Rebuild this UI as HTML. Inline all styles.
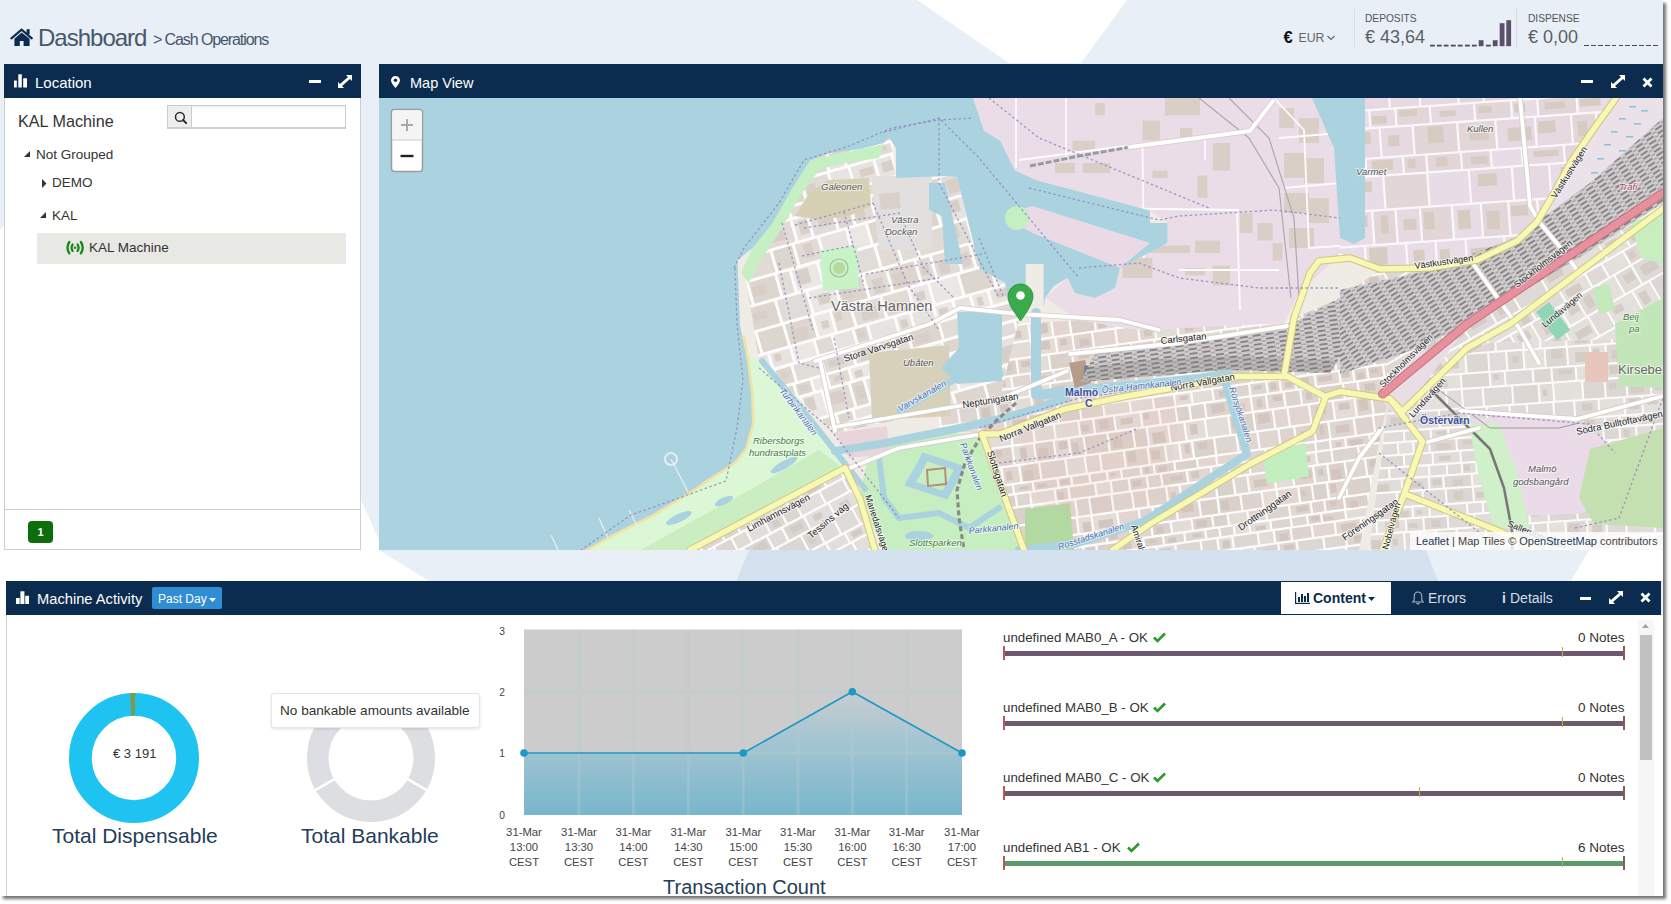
<!DOCTYPE html>
<html><head><meta charset="utf-8">
<style>
*{box-sizing:border-box;margin:0;padding:0}
html,body{width:1671px;height:904px;overflow:hidden;background:#fff;font-family:"Liberation Sans",sans-serif}
.a{position:absolute;white-space:nowrap}
#page{position:absolute;left:0;top:0;width:1663px;height:896px;background:#e9eff6;overflow:hidden;box-shadow:3px 3px 3px rgba(0,0,0,.55)}
.hdr{position:absolute;background:#0b2c4e;height:34px}
.ht{color:#fff;font-size:15px}
.body{position:absolute;background:#fff;border:1px solid #cfcfcf;border-top:0}
</style></head><body>
<div id="page">
<!-- background polygons -->
<svg class="a" style="left:0;top:0" width="1663" height="896">
 <polygon points="917,0 1127,0 1081,63 1009,63" fill="#fff"/>
 <polygon points="0,230 4,226 4,550 379,550 429,581 6,581 6,896 0,896" fill="#fff"/>
 <polygon points="361,500 379,540 379,550 361,550" fill="#fff"/>
 <polygon points="736,581 749,550 1426,550 1438,581" fill="#d4e2f0"/>
 <polygon points="1589,550 1663,550 1663,581 1571,581" fill="#fff"/>
</svg>

<!-- top bar -->
<svg class="a" style="left:10px;top:28px" width="24" height="20" viewBox="0 0 24 20">
 <polyline points="1.4,10.4 11.6,1.6 21.8,10.4" fill="none" stroke="#0b2c4e" stroke-width="2.2" stroke-linecap="round"/>
 <rect x="16.6" y="1.2" width="3" height="5" fill="#0b2c4e"/>
 <path d="M4.4 10.8 L11.6 4.6 L19.6 10.8 V17.9 H13.6 V12.9 H9.8 V17.9 H4.4 Z" fill="#0b2c4e"/>
</svg>
<div class="a" style="left:38px;top:24px;font-size:24px;color:#46576a;letter-spacing:-1px">Dashboard</div>
<div class="a" style="left:153px;top:31px;font-size:16px;color:#46576a;letter-spacing:-1.1px">&gt; Cash Operations</div>

<div class="a" style="left:1283.5px;top:27.5px;font-size:16.5px;color:#111;font-weight:bold">€</div>
<div class="a" style="left:1298.5px;top:31px;font-size:12.3px;color:#666">EUR</div>
<svg class="a" style="left:1327px;top:35px" width="8" height="6"><path d="M0.5 1 L4 4.5 L7.5 1" stroke="#666" stroke-width="1.2" fill="none"/></svg>
<div class="a" style="left:1354px;top:9px;width:1px;height:38px;background:#d5dce4"></div>
<div class="a" style="left:1365px;top:13px;font-size:10.2px;color:#555">DEPOSITS</div>
<div class="a" style="left:1365px;top:27px;font-size:18px;color:#5a5f66">€ 43,64</div>
<svg class="a" style="left:1430px;top:18px" width="84" height="30">
 <g fill="#4d4a55">
 <rect x="0" y="26.7" width="4.8" height="1.8"/><rect x="6.9" y="26.7" width="4.8" height="1.8"/><rect x="13.7" y="26.7" width="4.8" height="1.8"/><rect x="20.9" y="26.7" width="4.8" height="1.8"/><rect x="27.8" y="26.7" width="4.8" height="1.8"/><rect x="35" y="26.7" width="4.8" height="1.8"/><rect x="41.9" y="26.7" width="4.8" height="1.8"/><rect x="56" y="26.7" width="4.8" height="1.8"/>
 </g>
 <g fill="#5c4f6c">
 <rect x="48.7" y="22.2" width="4.8" height="6"/><rect x="62.8" y="22.2" width="4.8" height="6"/><rect x="69.7" y="5.2" width="4.8" height="23"/><rect x="76.3" y="2.2" width="4.8" height="26"/>
 </g>
</svg>
<div class="a" style="left:1516px;top:9px;width:1px;height:38px;background:#d5dce4"></div>
<div class="a" style="left:1528px;top:13px;font-size:10.2px;color:#555">DISPENSE</div>
<div class="a" style="left:1528px;top:27px;font-size:18px;color:#5a5f66">€ 0,00</div>
<div class="a" style="left:1584px;top:44.7px;width:76px;height:1.8px;background:repeating-linear-gradient(90deg,#4d4a55 0 4.8px,transparent 4.8px 6.9px)"></div>

<!-- Location panel -->
<div class="hdr" style="left:4px;top:64px;width:357px"></div>
<svg class="a" style="left:14px;top:74px" width="14" height="14"><g fill="#fff"><rect x="0" y="6.5" width="2.8" height="7"/><rect x="4.3" y="0.3" width="3.5" height="13.2"/><rect x="9.2" y="4.3" width="3.8" height="9.2"/></g></svg>
<div class="a ht" style="left:35px;top:73.5px">Location</div>
<div class="a" style="left:309px;top:80px;width:12px;height:3px;background:#fff"></div>
<svg class="a" style="left:338px;top:75px" width="14" height="13" viewBox="0 0 14 13"><g fill="#fff"><path d="M8 0 H14 V6 L12 4 L4 11 L6 13 H0 V7 L2 9 L10 2 Z"/></g></svg>
<div class="body" style="left:4px;top:98px;width:357px;height:452px"></div>
<div class="a" style="left:18px;top:111.5px;font-size:16.2px;color:#333">KAL Machine</div>
<div class="a" style="left:167px;top:105px;width:179px;height:24px;border:1px solid #ccc;border-bottom:2px solid #cfcfcf;background:#fff;box-shadow:inset 0 1px 1px rgba(0,60,120,.08)"></div>
<div class="a" style="left:168px;top:106px;width:24px;height:21px;background:#eeeeee;border-right:1px solid #ccc"></div>
<svg class="a" style="left:174px;top:111px" width="14" height="14"><circle cx="5.9" cy="5.9" r="4.4" stroke="#2a2a2a" stroke-width="1.5" fill="none"/><path d="M9 9 L12.2 12.2" stroke="#2a2a2a" stroke-width="1.9" stroke-linecap="round"/></svg>
<svg class="a" style="left:24px;top:151px" width="7" height="7"><path d="M6 0 V6 H0 Z" fill="#333"/></svg>
<div class="a" style="left:36px;top:147px;font-size:13.5px;color:#333">Not Grouped</div>
<svg class="a" style="left:42px;top:179px" width="5" height="9"><path d="M0 0 L4.5 4.5 L0 9 Z" fill="#333"/></svg>
<div class="a" style="left:52px;top:175px;font-size:13.5px;color:#333">DEMO</div>
<svg class="a" style="left:40px;top:212px" width="7" height="7"><path d="M6 0 V6 H0 Z" fill="#333"/></svg>
<div class="a" style="left:52px;top:208px;font-size:13.5px;color:#333">KAL</div>
<div class="a" style="left:37px;top:233px;width:309px;height:31px;background:#e8e8e5"></div>
<svg class="a" style="left:65px;top:240px" width="20" height="15" viewBox="0 0 20 15"><g fill="none" stroke="#158a15" stroke-width="2.3" stroke-linecap="round"><path d="M4.3 2 Q0.6 7.7 4.3 13.3"/><path d="M15.9 2 Q19.6 7.7 15.9 13.3"/><path d="M7.6 4.5 Q5.6 7.7 7.6 10.9"/><path d="M12.6 4.5 Q14.6 7.7 12.6 10.9"/></g><circle cx="10.1" cy="7.7" r="1.3" fill="#4a6a3a"/></svg>
<div class="a" style="left:89px;top:240px;font-size:13.5px;color:#333">KAL Machine</div>
<div class="a" style="left:5px;top:509px;width:355px;height:1px;background:#cfcfcf"></div>
<div class="a" style="left:28px;top:521px;width:25px;height:22px;background:#0b6e0b;border-radius:4px;color:#fff;font-size:11px;font-weight:bold;text-align:center;line-height:22px">1</div>

<!-- Map panel -->
<div class="hdr" style="left:379px;top:64px;width:1284px"></div>
<svg class="a" style="left:391px;top:76px" width="9" height="12" viewBox="0 0 9 12"><path d="M4.5 0 A4.5 4.5 0 0 1 9 4.5 C9 7 4.5 12 4.5 12 C4.5 12 0 7 0 4.5 A4.5 4.5 0 0 1 4.5 0 Z" fill="#fff"/><circle cx="4.5" cy="4.3" r="1.7" fill="#0b2b4b"/></svg>
<div class="a ht" style="left:410px;top:74.5px;font-size:14.5px">Map View</div>
<div class="a" style="left:1581px;top:80px;width:12px;height:3px;background:#fff"></div>
<svg class="a" style="left:1611px;top:75px" width="14" height="13" viewBox="0 0 14 13"><g fill="#fff"><path d="M8 0 H14 V6 L12 4 L4 11 L6 13 H0 V7 L2 9 L10 2 Z"/></g></svg>
<svg class="a" style="left:1642px;top:76.5px" width="11" height="11"><path d="M1.5 1.5 L9.5 9.5 M9.5 1.5 L1.5 9.5" stroke="#fff" stroke-width="2.8"/></svg>
<div id="map" class="a" style="left:379px;top:98px;width:1284px;height:452px;background:#aad3df;overflow:hidden">
 <svg id="mapsvg" width="1284" height="452" viewBox="0 0 1284 452"><defs><clipPath id="c1"><polygon points="560.0,230.0 700.0,222.0 760.0,232.0 905.0,225.0 961.0,200.0 1000.0,172.0 1010.0,300.0 1003.0,330.0 980.0,452.0 620.0,452.0 600.0,336.0 560.0,330.0"/></clipPath><clipPath id="c2"><polygon points="1000.0,172.0 1090.0,160.0 1160.0,120.0 1284.0,40.0 1284.0,240.0 1110.0,245.0 1010.0,300.0"/></clipPath><clipPath id="c3"><polygon points="1110.0,245.0 1284.0,240.0 1284.0,452.0 990.0,452.0 1010.0,300.0"/></clipPath><clipPath id="c4"><polygon points="311.0,452.0 466.0,372.0 496.0,452.0"/></clipPath><clipPath id="c5"><polygon points="366.0,175.0 431.0,62.0 513.0,37.0 517.0,80.0 566.0,78.0 578.0,79.0 601.0,171.0 626.0,185.0 640.0,222.0 621.0,300.0 456.0,335.0 380.0,263.0"/></clipPath><clipPath id="c6"><polygon points="961.0,0.0 1237.0,0.0 1214.0,32.0 1192.0,64.0 1174.0,97.0 1158.0,124.0 1138.0,143.0 1098.0,162.0 1050.0,170.0 1001.0,171.0 961.0,157.0"/></clipPath><pattern id="rail" width="13" height="4.5" patternUnits="userSpaceOnUse" patternTransform="rotate(-8)"><rect width="13" height="4.5" fill="#d2cecf"/><rect x="0" y="0.8" width="8" height="2" fill="#858384"/><rect x="8.5" y="3" width="4" height="1.3" fill="#9d9b9c"/></pattern><pattern id="rail2" width="13" height="4.5" patternUnits="userSpaceOnUse" patternTransform="rotate(-33)"><rect width="13" height="4.5" fill="#d2cecf"/><rect x="0" y="0.8" width="8" height="2" fill="#858384"/><rect x="8.5" y="3" width="4" height="1.3" fill="#9d9b9c"/></pattern></defs><rect width="1284" height="452" fill="#efece6"/>
<g clip-path="url(#c1)"><polygon points="560.0,230.0 700.0,222.0 760.0,232.0 905.0,225.0 961.0,200.0 1000.0,172.0 1010.0,300.0 1003.0,330.0 980.0,452.0 620.0,452.0 600.0,336.0 560.0,330.0" fill="#fdfcfb"/><g transform="rotate(-8 785.0 312.0)">
<rect x="501.2" y="17.0" width="23.7" height="12.3" fill="#ded4cf"/>
<rect x="508.0" y="18.6" width="14.0" height="6.4" fill="#d3c6bf"/>
<rect x="527.1" y="17.0" width="19.4" height="12.3" fill="#dbd1cb"/>
<rect x="529.8" y="18.3" width="11.7" height="7.4" fill="#d3c6bf"/>
<rect x="548.7" y="17.0" width="11.4" height="12.3" fill="#ded4cf"/>
<rect x="562.3" y="17.0" width="20.0" height="12.3" fill="#e3d5d0"/>
<rect x="584.5" y="17.0" width="19.5" height="12.3" fill="#e3d5d0"/>
<rect x="585.7" y="20.9" width="10.4" height="7.7" fill="#d3c6bf"/>
<rect x="606.2" y="17.0" width="15.4" height="12.3" fill="#e3d5d0"/>
<rect x="623.8" y="17.0" width="18.1" height="12.3" fill="#e3dcd7"/>
<rect x="628.1" y="19.5" width="7.8" height="8.7" fill="#d3c6bf"/>
<rect x="644.0" y="17.0" width="24.7" height="12.3" fill="#ded6d1"/>
<rect x="671.0" y="17.0" width="15.2" height="12.3" fill="#dbd1cb"/>
<rect x="688.4" y="17.0" width="11.2" height="12.3" fill="#e3d5d0"/>
<rect x="701.8" y="17.0" width="16.4" height="12.3" fill="#e3dcd7"/>
<rect x="707.2" y="20.8" width="5.6" height="5.3" fill="#d3c6bf"/>
<rect x="720.4" y="17.0" width="23.5" height="12.3" fill="#ded4cf"/>
<rect x="726.2" y="19.4" width="12.1" height="5.2" fill="#d3c6bf"/>
<rect x="746.2" y="17.0" width="20.2" height="12.3" fill="#e3dcd7"/>
<rect x="749.1" y="21.2" width="11.8" height="4.9" fill="#d3c6bf"/>
<rect x="768.6" y="17.0" width="14.2" height="12.3" fill="#ded6d1"/>
<rect x="771.4" y="19.6" width="8.3" height="5.2" fill="#d3c6bf"/>
<rect x="785.0" y="17.0" width="17.9" height="12.3" fill="#dbd1cb"/>
<rect x="788.0" y="19.3" width="12.0" height="4.4" fill="#d3c6bf"/>
<rect x="805.2" y="17.0" width="22.9" height="12.3" fill="#e3d5d0"/>
<rect x="812.0" y="18.7" width="10.5" height="8.1" fill="#d3c6bf"/>
<rect x="830.3" y="17.0" width="19.8" height="12.3" fill="#ded6d1"/>
<rect x="832.1" y="19.5" width="6.7" height="7.0" fill="#d3c6bf"/>
<rect x="852.3" y="17.0" width="22.4" height="12.3" fill="#ded4cf"/>
<rect x="853.8" y="20.0" width="9.2" height="7.0" fill="#d3c6bf"/>
<rect x="876.9" y="17.0" width="16.0" height="12.3" fill="#ded4cf"/>
<rect x="880.5" y="20.8" width="6.2" height="6.0" fill="#d3c6bf"/>
<rect x="895.1" y="17.0" width="19.6" height="12.3" fill="#e3dcd7"/>
<rect x="916.9" y="17.0" width="22.2" height="12.3" fill="#dbd1cb"/>
<rect x="941.3" y="17.0" width="13.0" height="12.3" fill="#e3d5d0"/>
<rect x="945.7" y="21.0" width="7.3" height="6.2" fill="#d3c6bf"/>
<rect x="956.5" y="17.0" width="12.3" height="12.3" fill="#ded6d1"/>
<rect x="971.0" y="17.0" width="14.4" height="12.3" fill="#ded4cf"/>
<rect x="975.3" y="20.0" width="6.4" height="5.1" fill="#d3c6bf"/>
<rect x="987.6" y="17.0" width="20.9" height="12.3" fill="#ded6d1"/>
<rect x="991.4" y="20.2" width="11.2" height="4.7" fill="#d3c6bf"/>
<rect x="1010.6" y="17.0" width="13.8" height="12.3" fill="#dbd1cb"/>
<rect x="1026.6" y="17.0" width="11.8" height="12.3" fill="#ded4cf"/>
<rect x="1027.8" y="18.6" width="5.7" height="6.8" fill="#d3c6bf"/>
<rect x="1040.6" y="17.0" width="12.6" height="12.3" fill="#e3dcd7"/>
<rect x="1043.1" y="19.1" width="7.7" height="6.6" fill="#d3c6bf"/>
<rect x="1055.4" y="17.0" width="24.1" height="12.3" fill="#e3d5d0"/>
<rect x="1056.6" y="21.0" width="13.4" height="8.5" fill="#d3c6bf"/>
<rect x="502.7" y="31.5" width="17.6" height="7.8" fill="#e3dcd7"/>
<rect x="508.6" y="32.6" width="9.2" height="5.2" fill="#d3c6bf"/>
<rect x="522.5" y="31.5" width="23.4" height="7.8" fill="#dbd1cb"/>
<rect x="548.1" y="31.5" width="23.6" height="7.8" fill="#e3dcd7"/>
<rect x="552.3" y="32.7" width="14.4" height="5.8" fill="#d3c6bf"/>
<rect x="573.9" y="31.5" width="11.2" height="7.8" fill="#ded4cf"/>
<rect x="587.3" y="31.5" width="19.5" height="7.8" fill="#ded4cf"/>
<rect x="588.4" y="32.6" width="7.1" height="3.3" fill="#d3c6bf"/>
<rect x="609.1" y="31.5" width="14.4" height="7.8" fill="#ded4cf"/>
<rect x="625.7" y="31.5" width="16.2" height="7.8" fill="#e3d5d0"/>
<rect x="628.8" y="33.6" width="8.4" height="4.5" fill="#d3c6bf"/>
<rect x="644.1" y="31.5" width="15.1" height="7.8" fill="#ded6d1"/>
<rect x="646.1" y="33.9" width="7.8" height="4.8" fill="#d3c6bf"/>
<rect x="661.4" y="31.5" width="23.7" height="7.8" fill="#e3dcd7"/>
<rect x="687.3" y="31.5" width="16.0" height="7.8" fill="#dbd1cb"/>
<rect x="705.5" y="31.5" width="13.6" height="7.8" fill="#dbd1cb"/>
<rect x="721.3" y="31.5" width="15.6" height="7.8" fill="#ded4cf"/>
<rect x="723.4" y="33.3" width="6.7" height="4.9" fill="#d3c6bf"/>
<rect x="739.1" y="31.5" width="22.1" height="7.8" fill="#dbd1cb"/>
<rect x="763.4" y="31.5" width="16.2" height="7.8" fill="#e3d5d0"/>
<rect x="781.7" y="31.5" width="13.7" height="7.8" fill="#dbd1cb"/>
<rect x="785.9" y="34.2" width="8.2" height="5.8" fill="#d3c6bf"/>
<rect x="797.7" y="31.5" width="14.7" height="7.8" fill="#dbd1cb"/>
<rect x="800.6" y="34.3" width="9.3" height="4.1" fill="#d3c6bf"/>
<rect x="814.6" y="31.5" width="18.1" height="7.8" fill="#e3dcd7"/>
<rect x="834.8" y="31.5" width="22.6" height="7.8" fill="#e3d5d0"/>
<rect x="836.3" y="32.6" width="13.9" height="3.1" fill="#d3c6bf"/>
<rect x="859.6" y="31.5" width="20.7" height="7.8" fill="#e3d5d0"/>
<rect x="864.4" y="33.6" width="11.3" height="4.2" fill="#d3c6bf"/>
<rect x="882.5" y="31.5" width="13.5" height="7.8" fill="#e3dcd7"/>
<rect x="884.1" y="32.6" width="7.7" height="4.3" fill="#d3c6bf"/>
<rect x="898.2" y="31.5" width="19.6" height="7.8" fill="#e3dcd7"/>
<rect x="920.0" y="31.5" width="20.4" height="7.8" fill="#dbd1cb"/>
<rect x="942.6" y="31.5" width="14.4" height="7.8" fill="#ded6d1"/>
<rect x="959.2" y="31.5" width="18.3" height="7.8" fill="#ded6d1"/>
<rect x="961.6" y="33.2" width="10.4" height="4.5" fill="#d3c6bf"/>
<rect x="979.7" y="31.5" width="19.4" height="7.8" fill="#dbd1cb"/>
<rect x="985.0" y="34.3" width="7.0" height="5.8" fill="#d3c6bf"/>
<rect x="1001.3" y="31.5" width="20.9" height="7.8" fill="#dbd1cb"/>
<rect x="1003.5" y="34.3" width="7.0" height="4.6" fill="#d3c6bf"/>
<rect x="1024.4" y="31.5" width="19.9" height="7.8" fill="#e3d5d0"/>
<rect x="1046.5" y="31.5" width="24.0" height="7.8" fill="#ded4cf"/>
<rect x="1054.3" y="32.7" width="14.7" height="5.4" fill="#d3c6bf"/>
<rect x="1072.8" y="31.5" width="23.7" height="7.8" fill="#ded6d1"/>
<rect x="1079.9" y="34.5" width="15.4" height="4.6" fill="#d3c6bf"/>
<rect x="496.4" y="41.5" width="23.5" height="15.9" fill="#ded6d1"/>
<rect x="498.0" y="44.4" width="12.0" height="9.6" fill="#d3c6bf"/>
<rect x="522.1" y="41.5" width="17.6" height="15.9" fill="#ded6d1"/>
<rect x="527.4" y="44.4" width="6.2" height="8.3" fill="#d3c6bf"/>
<rect x="542.0" y="41.5" width="20.4" height="15.9" fill="#dbd1cb"/>
<rect x="548.8" y="46.5" width="10.3" height="9.1" fill="#d3c6bf"/>
<rect x="564.6" y="41.5" width="17.0" height="15.9" fill="#ded4cf"/>
<rect x="583.7" y="41.5" width="20.4" height="15.9" fill="#dbd1cb"/>
<rect x="588.0" y="46.1" width="10.6" height="6.3" fill="#d3c6bf"/>
<rect x="606.4" y="41.5" width="18.0" height="15.9" fill="#e3d5d0"/>
<rect x="610.8" y="46.7" width="11.3" height="8.7" fill="#d3c6bf"/>
<rect x="626.6" y="41.5" width="15.1" height="15.9" fill="#dbd1cb"/>
<rect x="643.9" y="41.5" width="18.1" height="15.9" fill="#e3d5d0"/>
<rect x="647.0" y="43.0" width="6.1" height="7.5" fill="#d3c6bf"/>
<rect x="664.2" y="41.5" width="18.3" height="15.9" fill="#ded6d1"/>
<rect x="684.7" y="41.5" width="16.4" height="15.9" fill="#e3d5d0"/>
<rect x="686.2" y="43.2" width="10.8" height="7.9" fill="#d3c6bf"/>
<rect x="703.3" y="41.5" width="23.7" height="15.9" fill="#ded4cf"/>
<rect x="707.5" y="43.0" width="11.1" height="9.8" fill="#d3c6bf"/>
<rect x="729.2" y="41.5" width="23.4" height="15.9" fill="#ded4cf"/>
<rect x="754.8" y="41.5" width="12.3" height="15.9" fill="#ded4cf"/>
<rect x="769.4" y="41.5" width="23.8" height="15.9" fill="#dbd1cb"/>
<rect x="795.3" y="41.5" width="24.5" height="15.9" fill="#ded6d1"/>
<rect x="797.9" y="45.5" width="10.6" height="7.3" fill="#d3c6bf"/>
<rect x="822.0" y="41.5" width="19.5" height="15.9" fill="#ded6d1"/>
<rect x="826.2" y="46.2" width="10.6" height="9.3" fill="#d3c6bf"/>
<rect x="843.7" y="41.5" width="20.6" height="15.9" fill="#ded4cf"/>
<rect x="848.4" y="46.1" width="11.1" height="8.3" fill="#d3c6bf"/>
<rect x="866.5" y="41.5" width="22.9" height="15.9" fill="#e3d5d0"/>
<rect x="891.6" y="41.5" width="18.2" height="15.9" fill="#e3d5d0"/>
<rect x="912.0" y="41.5" width="22.8" height="15.9" fill="#dbd1cb"/>
<rect x="937.0" y="41.5" width="19.6" height="15.9" fill="#e3dcd7"/>
<rect x="958.8" y="41.5" width="15.2" height="15.9" fill="#e3dcd7"/>
<rect x="976.2" y="41.5" width="13.5" height="15.9" fill="#dbd1cb"/>
<rect x="991.9" y="41.5" width="12.7" height="15.9" fill="#dbd1cb"/>
<rect x="993.2" y="44.2" width="6.4" height="10.5" fill="#d3c6bf"/>
<rect x="1006.8" y="41.5" width="18.4" height="15.9" fill="#dbd1cb"/>
<rect x="1011.1" y="46.0" width="6.8" height="8.5" fill="#d3c6bf"/>
<rect x="1027.4" y="41.5" width="15.8" height="15.9" fill="#e3dcd7"/>
<rect x="1030.6" y="45.8" width="8.1" height="9.1" fill="#d3c6bf"/>
<rect x="1045.4" y="41.5" width="13.4" height="15.9" fill="#ded6d1"/>
<rect x="1046.5" y="45.8" width="7.6" height="10.3" fill="#d3c6bf"/>
<rect x="1061.1" y="41.5" width="17.5" height="15.9" fill="#dbd1cb"/>
<rect x="1063.1" y="46.2" width="11.8" height="10.4" fill="#d3c6bf"/>
<rect x="491.2" y="59.5" width="24.1" height="8.6" fill="#ded4cf"/>
<rect x="492.9" y="61.4" width="11.3" height="4.4" fill="#d3c6bf"/>
<rect x="517.6" y="59.5" width="13.7" height="8.6" fill="#e3dcd7"/>
<rect x="521.2" y="62.4" width="5.6" height="4.7" fill="#d3c6bf"/>
<rect x="533.5" y="59.5" width="21.2" height="8.6" fill="#ded4cf"/>
<rect x="556.9" y="59.5" width="19.3" height="8.6" fill="#ded6d1"/>
<rect x="578.3" y="59.5" width="11.0" height="8.6" fill="#ded6d1"/>
<rect x="591.5" y="59.5" width="20.7" height="8.6" fill="#ded4cf"/>
<rect x="614.4" y="59.5" width="13.5" height="8.6" fill="#e3d5d0"/>
<rect x="630.1" y="59.5" width="22.1" height="8.6" fill="#e3dcd7"/>
<rect x="631.8" y="62.2" width="8.4" height="6.2" fill="#d3c6bf"/>
<rect x="654.3" y="59.5" width="12.7" height="8.6" fill="#e3dcd7"/>
<rect x="669.2" y="59.5" width="20.5" height="8.6" fill="#ded4cf"/>
<rect x="691.9" y="59.5" width="16.5" height="8.6" fill="#dbd1cb"/>
<rect x="694.5" y="61.6" width="5.7" height="4.4" fill="#d3c6bf"/>
<rect x="710.6" y="59.5" width="19.7" height="8.6" fill="#e3d5d0"/>
<rect x="713.1" y="62.7" width="8.5" height="3.9" fill="#d3c6bf"/>
<rect x="732.6" y="59.5" width="16.5" height="8.6" fill="#dbd1cb"/>
<rect x="751.2" y="59.5" width="16.3" height="8.6" fill="#ded4cf"/>
<rect x="769.7" y="59.5" width="20.6" height="8.6" fill="#ded4cf"/>
<rect x="792.5" y="59.5" width="11.1" height="8.6" fill="#e3d5d0"/>
<rect x="794.2" y="61.5" width="6.0" height="5.7" fill="#d3c6bf"/>
<rect x="805.8" y="59.5" width="19.9" height="8.6" fill="#ded6d1"/>
<rect x="808.2" y="62.5" width="10.3" height="4.9" fill="#d3c6bf"/>
<rect x="827.9" y="59.5" width="24.3" height="8.6" fill="#e3d5d0"/>
<rect x="854.4" y="59.5" width="12.2" height="8.6" fill="#ded4cf"/>
<rect x="868.8" y="59.5" width="11.9" height="8.6" fill="#e3d5d0"/>
<rect x="882.9" y="59.5" width="24.2" height="8.6" fill="#ded4cf"/>
<rect x="909.3" y="59.5" width="13.0" height="8.6" fill="#ded4cf"/>
<rect x="924.5" y="59.5" width="22.8" height="8.6" fill="#e3d5d0"/>
<rect x="949.5" y="59.5" width="11.6" height="8.6" fill="#ded4cf"/>
<rect x="952.2" y="61.9" width="5.7" height="4.1" fill="#d3c6bf"/>
<rect x="963.3" y="59.5" width="20.0" height="8.6" fill="#e3d5d0"/>
<rect x="985.5" y="59.5" width="20.1" height="8.6" fill="#e3dcd7"/>
<rect x="990.9" y="61.8" width="10.9" height="4.5" fill="#d3c6bf"/>
<rect x="1007.8" y="59.5" width="20.4" height="8.6" fill="#ded6d1"/>
<rect x="1030.4" y="59.5" width="21.3" height="8.6" fill="#ded6d1"/>
<rect x="1053.8" y="59.5" width="20.9" height="8.6" fill="#e3dcd7"/>
<rect x="1060.2" y="61.5" width="10.2" height="6.4" fill="#d3c6bf"/>
<rect x="1077.0" y="59.5" width="14.2" height="8.6" fill="#e3d5d0"/>
<rect x="1081.1" y="62.6" width="5.6" height="6.3" fill="#d3c6bf"/>
<rect x="504.1" y="70.3" width="11.5" height="10.1" fill="#ded4cf"/>
<rect x="505.8" y="71.4" width="6.3" height="4.2" fill="#d3c6bf"/>
<rect x="517.8" y="70.3" width="17.0" height="10.1" fill="#ded4cf"/>
<rect x="520.1" y="72.8" width="8.2" height="6.6" fill="#d3c6bf"/>
<rect x="537.0" y="70.3" width="18.2" height="10.1" fill="#dbd1cb"/>
<rect x="557.5" y="70.3" width="21.1" height="10.1" fill="#dbd1cb"/>
<rect x="561.5" y="72.1" width="10.5" height="6.8" fill="#d3c6bf"/>
<rect x="580.7" y="70.3" width="14.6" height="10.1" fill="#e3d5d0"/>
<rect x="597.6" y="70.3" width="18.7" height="10.1" fill="#e3d5d0"/>
<rect x="600.1" y="71.9" width="12.2" height="5.6" fill="#d3c6bf"/>
<rect x="618.5" y="70.3" width="19.9" height="10.1" fill="#dbd1cb"/>
<rect x="640.6" y="70.3" width="11.4" height="10.1" fill="#ded6d1"/>
<rect x="642.4" y="71.3" width="4.2" height="4.5" fill="#d3c6bf"/>
<rect x="654.2" y="70.3" width="14.7" height="10.1" fill="#ded6d1"/>
<rect x="671.1" y="70.3" width="13.1" height="10.1" fill="#dbd1cb"/>
<rect x="686.3" y="70.3" width="16.0" height="10.1" fill="#ded4cf"/>
<rect x="688.9" y="72.6" width="6.2" height="6.9" fill="#d3c6bf"/>
<rect x="704.6" y="70.3" width="22.0" height="10.1" fill="#ded4cf"/>
<rect x="728.8" y="70.3" width="19.5" height="10.1" fill="#dbd1cb"/>
<rect x="733.9" y="72.3" width="7.5" height="4.3" fill="#d3c6bf"/>
<rect x="750.5" y="70.3" width="22.5" height="10.1" fill="#e3d5d0"/>
<rect x="755.0" y="73.3" width="14.2" height="5.3" fill="#d3c6bf"/>
<rect x="775.2" y="70.3" width="16.0" height="10.1" fill="#ded6d1"/>
<rect x="777.7" y="72.7" width="7.8" height="5.8" fill="#d3c6bf"/>
<rect x="793.4" y="70.3" width="22.2" height="10.1" fill="#ded4cf"/>
<rect x="799.3" y="71.5" width="8.9" height="6.1" fill="#d3c6bf"/>
<rect x="817.8" y="70.3" width="11.9" height="10.1" fill="#e3dcd7"/>
<rect x="821.3" y="72.2" width="8.0" height="4.5" fill="#d3c6bf"/>
<rect x="832.0" y="70.3" width="20.0" height="10.1" fill="#e3dcd7"/>
<rect x="833.6" y="73.2" width="10.5" height="7.1" fill="#d3c6bf"/>
<rect x="854.2" y="70.3" width="24.0" height="10.1" fill="#e3dcd7"/>
<rect x="860.7" y="72.1" width="10.3" height="5.2" fill="#d3c6bf"/>
<rect x="880.3" y="70.3" width="23.9" height="10.1" fill="#e3d5d0"/>
<rect x="883.8" y="72.3" width="10.7" height="5.2" fill="#d3c6bf"/>
<rect x="906.4" y="70.3" width="16.2" height="10.1" fill="#dbd1cb"/>
<rect x="924.8" y="70.3" width="16.0" height="10.1" fill="#ded4cf"/>
<rect x="943.0" y="70.3" width="22.5" height="10.1" fill="#e3d5d0"/>
<rect x="944.6" y="72.5" width="13.7" height="6.7" fill="#d3c6bf"/>
<rect x="967.7" y="70.3" width="13.9" height="10.1" fill="#ded6d1"/>
<rect x="983.8" y="70.3" width="18.7" height="10.1" fill="#ded6d1"/>
<rect x="1004.7" y="70.3" width="22.1" height="10.1" fill="#ded6d1"/>
<rect x="1029.0" y="70.3" width="15.1" height="10.1" fill="#e3d5d0"/>
<rect x="1030.3" y="73.3" width="9.8" height="4.0" fill="#d3c6bf"/>
<rect x="1046.3" y="70.3" width="19.7" height="10.1" fill="#dbd1cb"/>
<rect x="1051.8" y="72.4" width="11.2" height="5.5" fill="#d3c6bf"/>
<rect x="1068.2" y="70.3" width="23.5" height="10.1" fill="#e3dcd7"/>
<rect x="496.8" y="82.6" width="24.4" height="11.7" fill="#dbd1cb"/>
<rect x="501.5" y="85.9" width="13.6" height="8.0" fill="#d3c6bf"/>
<rect x="523.3" y="82.6" width="16.5" height="11.7" fill="#e3dcd7"/>
<rect x="542.1" y="82.6" width="22.1" height="11.7" fill="#ded6d1"/>
<rect x="566.3" y="82.6" width="24.2" height="11.7" fill="#ded6d1"/>
<rect x="592.8" y="82.6" width="20.7" height="11.7" fill="#ded6d1"/>
<rect x="596.2" y="84.1" width="12.0" height="8.3" fill="#d3c6bf"/>
<rect x="615.7" y="82.6" width="16.1" height="11.7" fill="#dbd1cb"/>
<rect x="618.4" y="85.3" width="7.0" height="7.9" fill="#d3c6bf"/>
<rect x="634.0" y="82.6" width="17.4" height="11.7" fill="#ded6d1"/>
<rect x="635.7" y="86.5" width="11.2" height="7.3" fill="#d3c6bf"/>
<rect x="653.6" y="82.6" width="11.0" height="11.7" fill="#ded4cf"/>
<rect x="666.8" y="82.6" width="11.3" height="11.7" fill="#ded6d1"/>
<rect x="668.9" y="85.5" width="6.5" height="6.1" fill="#d3c6bf"/>
<rect x="680.3" y="82.6" width="17.9" height="11.7" fill="#ded4cf"/>
<rect x="682.7" y="84.1" width="10.6" height="5.5" fill="#d3c6bf"/>
<rect x="700.4" y="82.6" width="18.5" height="11.7" fill="#e3d5d0"/>
<rect x="702.8" y="86.4" width="11.9" height="5.6" fill="#d3c6bf"/>
<rect x="721.1" y="82.6" width="18.5" height="11.7" fill="#ded6d1"/>
<rect x="723.2" y="83.8" width="12.1" height="7.5" fill="#d3c6bf"/>
<rect x="741.8" y="82.6" width="16.2" height="11.7" fill="#e3d5d0"/>
<rect x="760.1" y="82.6" width="21.6" height="11.7" fill="#ded6d1"/>
<rect x="784.0" y="82.6" width="14.1" height="11.7" fill="#ded6d1"/>
<rect x="800.3" y="82.6" width="23.5" height="11.7" fill="#ded4cf"/>
<rect x="826.0" y="82.6" width="20.8" height="11.7" fill="#e3d5d0"/>
<rect x="849.0" y="82.6" width="16.6" height="11.7" fill="#e3dcd7"/>
<rect x="854.2" y="86.2" width="6.4" height="7.3" fill="#d3c6bf"/>
<rect x="867.8" y="82.6" width="19.5" height="11.7" fill="#e3d5d0"/>
<rect x="889.5" y="82.6" width="12.9" height="11.7" fill="#dbd1cb"/>
<rect x="893.4" y="86.3" width="8.3" height="4.5" fill="#d3c6bf"/>
<rect x="904.6" y="82.6" width="14.6" height="11.7" fill="#e3d5d0"/>
<rect x="907.5" y="85.1" width="9.8" height="6.6" fill="#d3c6bf"/>
<rect x="921.4" y="82.6" width="22.8" height="11.7" fill="#e3dcd7"/>
<rect x="923.6" y="84.2" width="12.6" height="7.4" fill="#d3c6bf"/>
<rect x="946.4" y="82.6" width="17.0" height="11.7" fill="#ded6d1"/>
<rect x="965.5" y="82.6" width="18.2" height="11.7" fill="#dbd1cb"/>
<rect x="985.9" y="82.6" width="24.3" height="11.7" fill="#e3dcd7"/>
<rect x="987.4" y="84.6" width="11.7" height="7.1" fill="#d3c6bf"/>
<rect x="1012.4" y="82.6" width="15.8" height="11.7" fill="#dbd1cb"/>
<rect x="1015.1" y="85.1" width="10.6" height="7.6" fill="#d3c6bf"/>
<rect x="1030.4" y="82.6" width="20.0" height="11.7" fill="#ded6d1"/>
<rect x="1052.6" y="82.6" width="20.8" height="11.7" fill="#ded4cf"/>
<rect x="1056.9" y="85.1" width="7.0" height="8.3" fill="#d3c6bf"/>
<rect x="1075.5" y="82.6" width="22.0" height="11.7" fill="#dbd1cb"/>
<rect x="502.6" y="96.5" width="23.9" height="9.1" fill="#e3dcd7"/>
<rect x="528.7" y="96.5" width="21.4" height="9.1" fill="#e3d5d0"/>
<rect x="552.2" y="96.5" width="14.4" height="9.1" fill="#dbd1cb"/>
<rect x="553.7" y="98.2" width="6.3" height="5.0" fill="#d3c6bf"/>
<rect x="568.8" y="96.5" width="19.8" height="9.1" fill="#ded4cf"/>
<rect x="590.8" y="96.5" width="12.1" height="9.1" fill="#dbd1cb"/>
<rect x="605.1" y="96.5" width="12.6" height="9.1" fill="#dbd1cb"/>
<rect x="607.5" y="99.5" width="7.1" height="3.7" fill="#d3c6bf"/>
<rect x="619.9" y="96.5" width="14.0" height="9.1" fill="#dbd1cb"/>
<rect x="636.1" y="96.5" width="16.9" height="9.1" fill="#ded6d1"/>
<rect x="641.0" y="99.7" width="6.5" height="4.1" fill="#d3c6bf"/>
<rect x="655.2" y="96.5" width="12.9" height="9.1" fill="#ded4cf"/>
<rect x="659.4" y="99.0" width="7.8" height="5.5" fill="#d3c6bf"/>
<rect x="670.3" y="96.5" width="15.2" height="9.1" fill="#dbd1cb"/>
<rect x="687.7" y="96.5" width="19.3" height="9.1" fill="#ded6d1"/>
<rect x="689.7" y="98.2" width="9.3" height="5.3" fill="#d3c6bf"/>
<rect x="709.2" y="96.5" width="13.7" height="9.1" fill="#e3dcd7"/>
<rect x="725.1" y="96.5" width="22.4" height="9.1" fill="#e3d5d0"/>
<rect x="749.6" y="96.5" width="14.4" height="9.1" fill="#e3d5d0"/>
<rect x="766.2" y="96.5" width="18.5" height="9.1" fill="#e3dcd7"/>
<rect x="786.9" y="96.5" width="18.0" height="9.1" fill="#e3d5d0"/>
<rect x="807.1" y="96.5" width="24.6" height="9.1" fill="#e3d5d0"/>
<rect x="833.9" y="96.5" width="20.7" height="9.1" fill="#dbd1cb"/>
<rect x="856.8" y="96.5" width="11.2" height="9.1" fill="#dbd1cb"/>
<rect x="870.1" y="96.5" width="12.7" height="9.1" fill="#ded4cf"/>
<rect x="885.1" y="96.5" width="20.6" height="9.1" fill="#e3dcd7"/>
<rect x="891.1" y="98.1" width="12.9" height="4.9" fill="#d3c6bf"/>
<rect x="907.8" y="96.5" width="21.0" height="9.1" fill="#dbd1cb"/>
<rect x="931.0" y="96.5" width="18.4" height="9.1" fill="#e3d5d0"/>
<rect x="936.8" y="97.9" width="10.8" height="6.5" fill="#d3c6bf"/>
<rect x="951.6" y="96.5" width="15.5" height="9.1" fill="#dbd1cb"/>
<rect x="956.2" y="98.2" width="10.1" height="4.2" fill="#d3c6bf"/>
<rect x="969.3" y="96.5" width="18.8" height="9.1" fill="#dbd1cb"/>
<rect x="973.2" y="97.7" width="6.5" height="4.0" fill="#d3c6bf"/>
<rect x="990.4" y="96.5" width="24.6" height="9.1" fill="#dbd1cb"/>
<rect x="996.1" y="99.3" width="11.1" height="5.4" fill="#d3c6bf"/>
<rect x="1017.2" y="96.5" width="22.1" height="9.1" fill="#ded6d1"/>
<rect x="1020.8" y="97.6" width="11.1" height="3.8" fill="#d3c6bf"/>
<rect x="1041.4" y="96.5" width="16.5" height="9.1" fill="#e3dcd7"/>
<rect x="1060.1" y="96.5" width="14.5" height="9.1" fill="#e3d5d0"/>
<rect x="1076.8" y="96.5" width="11.5" height="9.1" fill="#ded6d1"/>
<rect x="498.1" y="107.8" width="17.8" height="15.8" fill="#ded6d1"/>
<rect x="501.1" y="111.6" width="10.1" height="9.5" fill="#d3c6bf"/>
<rect x="518.0" y="107.8" width="21.3" height="15.8" fill="#ded4cf"/>
<rect x="541.6" y="107.8" width="17.3" height="15.8" fill="#ded4cf"/>
<rect x="561.0" y="107.8" width="12.4" height="15.8" fill="#ded6d1"/>
<rect x="575.7" y="107.8" width="18.2" height="15.8" fill="#e3d5d0"/>
<rect x="596.0" y="107.8" width="16.7" height="15.8" fill="#ded6d1"/>
<rect x="597.3" y="112.0" width="10.8" height="9.4" fill="#d3c6bf"/>
<rect x="614.9" y="107.8" width="19.2" height="15.8" fill="#e3dcd7"/>
<rect x="636.3" y="107.8" width="23.1" height="15.8" fill="#dbd1cb"/>
<rect x="640.2" y="111.1" width="10.6" height="5.7" fill="#d3c6bf"/>
<rect x="661.6" y="107.8" width="20.5" height="15.8" fill="#e3d5d0"/>
<rect x="684.3" y="107.8" width="18.4" height="15.8" fill="#ded4cf"/>
<rect x="704.9" y="107.8" width="23.1" height="15.8" fill="#e3dcd7"/>
<rect x="730.3" y="107.8" width="16.7" height="15.8" fill="#dbd1cb"/>
<rect x="734.7" y="111.3" width="10.8" height="5.9" fill="#d3c6bf"/>
<rect x="749.2" y="107.8" width="21.9" height="15.8" fill="#ded6d1"/>
<rect x="773.2" y="107.8" width="18.9" height="15.8" fill="#ded4cf"/>
<rect x="775.5" y="110.2" width="8.4" height="5.7" fill="#d3c6bf"/>
<rect x="794.3" y="107.8" width="23.3" height="15.8" fill="#e3d5d0"/>
<rect x="797.7" y="111.4" width="8.0" height="5.6" fill="#d3c6bf"/>
<rect x="819.8" y="107.8" width="23.4" height="15.8" fill="#e3dcd7"/>
<rect x="821.8" y="112.3" width="13.6" height="10.2" fill="#d3c6bf"/>
<rect x="845.4" y="107.8" width="13.6" height="15.8" fill="#ded6d1"/>
<rect x="849.6" y="110.4" width="7.0" height="6.3" fill="#d3c6bf"/>
<rect x="861.3" y="107.8" width="23.1" height="15.8" fill="#e3d5d0"/>
<rect x="866.4" y="109.7" width="14.3" height="5.7" fill="#d3c6bf"/>
<rect x="886.6" y="107.8" width="12.3" height="15.8" fill="#e3dcd7"/>
<rect x="901.1" y="107.8" width="14.6" height="15.8" fill="#ded4cf"/>
<rect x="917.9" y="107.8" width="12.7" height="15.8" fill="#ded4cf"/>
<rect x="919.5" y="112.6" width="5.0" height="9.1" fill="#d3c6bf"/>
<rect x="932.8" y="107.8" width="14.6" height="15.8" fill="#dbd1cb"/>
<rect x="949.5" y="107.8" width="14.9" height="15.8" fill="#e3dcd7"/>
<rect x="953.3" y="112.7" width="8.2" height="6.6" fill="#d3c6bf"/>
<rect x="966.7" y="107.8" width="15.0" height="15.8" fill="#dbd1cb"/>
<rect x="983.9" y="107.8" width="14.7" height="15.8" fill="#ded6d1"/>
<rect x="985.2" y="112.9" width="5.4" height="10.3" fill="#d3c6bf"/>
<rect x="1000.8" y="107.8" width="10.9" height="15.8" fill="#e3d5d0"/>
<rect x="1002.5" y="112.4" width="4.3" height="6.9" fill="#d3c6bf"/>
<rect x="1013.9" y="107.8" width="21.4" height="15.8" fill="#dbd1cb"/>
<rect x="1019.3" y="109.0" width="12.7" height="6.2" fill="#d3c6bf"/>
<rect x="1037.4" y="107.8" width="23.4" height="15.8" fill="#e3d5d0"/>
<rect x="1043.5" y="110.5" width="14.8" height="8.1" fill="#d3c6bf"/>
<rect x="1063.0" y="107.8" width="13.3" height="15.8" fill="#e3d5d0"/>
<rect x="1078.5" y="107.8" width="23.5" height="15.8" fill="#e3dcd7"/>
<rect x="500.3" y="125.9" width="17.9" height="15.8" fill="#e3d5d0"/>
<rect x="520.4" y="125.9" width="18.2" height="15.8" fill="#e3d5d0"/>
<rect x="540.9" y="125.9" width="13.1" height="15.8" fill="#e3d5d0"/>
<rect x="544.3" y="129.3" width="5.8" height="9.3" fill="#d3c6bf"/>
<rect x="556.2" y="125.9" width="20.9" height="15.8" fill="#e3dcd7"/>
<rect x="558.5" y="129.4" width="10.4" height="5.6" fill="#d3c6bf"/>
<rect x="579.3" y="125.9" width="19.2" height="15.8" fill="#ded6d1"/>
<rect x="600.6" y="125.9" width="23.0" height="15.8" fill="#dbd1cb"/>
<rect x="605.6" y="129.5" width="13.7" height="8.1" fill="#d3c6bf"/>
<rect x="625.8" y="125.9" width="20.9" height="15.8" fill="#ded6d1"/>
<rect x="632.2" y="129.4" width="10.7" height="9.7" fill="#d3c6bf"/>
<rect x="649.0" y="125.9" width="14.1" height="15.8" fill="#dbd1cb"/>
<rect x="651.6" y="129.9" width="8.9" height="9.4" fill="#d3c6bf"/>
<rect x="665.3" y="125.9" width="21.7" height="15.8" fill="#e3d5d0"/>
<rect x="670.3" y="129.1" width="9.9" height="6.7" fill="#d3c6bf"/>
<rect x="689.2" y="125.9" width="17.8" height="15.8" fill="#e3d5d0"/>
<rect x="709.2" y="125.9" width="11.7" height="15.8" fill="#ded4cf"/>
<rect x="712.4" y="129.9" width="8.1" height="6.1" fill="#d3c6bf"/>
<rect x="723.0" y="125.9" width="21.4" height="15.8" fill="#e3d5d0"/>
<rect x="746.6" y="125.9" width="12.8" height="15.8" fill="#ded4cf"/>
<rect x="761.6" y="125.9" width="24.6" height="15.8" fill="#ded6d1"/>
<rect x="768.9" y="127.5" width="11.2" height="7.0" fill="#d3c6bf"/>
<rect x="788.4" y="125.9" width="16.7" height="15.8" fill="#ded6d1"/>
<rect x="807.4" y="125.9" width="20.3" height="15.8" fill="#e3d5d0"/>
<rect x="809.8" y="129.3" width="8.4" height="7.9" fill="#d3c6bf"/>
<rect x="829.9" y="125.9" width="23.9" height="15.8" fill="#e3dcd7"/>
<rect x="837.4" y="130.9" width="9.5" height="6.3" fill="#d3c6bf"/>
<rect x="856.0" y="125.9" width="19.0" height="15.8" fill="#ded6d1"/>
<rect x="877.2" y="125.9" width="18.7" height="15.8" fill="#e3d5d0"/>
<rect x="898.1" y="125.9" width="13.3" height="15.8" fill="#ded4cf"/>
<rect x="913.6" y="125.9" width="13.8" height="15.8" fill="#ded4cf"/>
<rect x="929.6" y="125.9" width="13.8" height="15.8" fill="#e3dcd7"/>
<rect x="933.6" y="130.4" width="7.1" height="7.5" fill="#d3c6bf"/>
<rect x="945.6" y="125.9" width="19.1" height="15.8" fill="#e3dcd7"/>
<rect x="949.2" y="129.6" width="7.6" height="8.0" fill="#d3c6bf"/>
<rect x="966.9" y="125.9" width="18.4" height="15.8" fill="#ded4cf"/>
<rect x="971.5" y="128.5" width="7.9" height="5.5" fill="#d3c6bf"/>
<rect x="987.5" y="125.9" width="13.3" height="15.8" fill="#e3dcd7"/>
<rect x="1003.0" y="125.9" width="18.7" height="15.8" fill="#dbd1cb"/>
<rect x="1005.9" y="127.5" width="12.2" height="7.3" fill="#d3c6bf"/>
<rect x="1023.9" y="125.9" width="21.5" height="15.8" fill="#ded6d1"/>
<rect x="1026.9" y="128.5" width="7.7" height="10.1" fill="#d3c6bf"/>
<rect x="1047.7" y="125.9" width="15.4" height="15.8" fill="#e3d5d0"/>
<rect x="1065.2" y="125.9" width="15.0" height="15.8" fill="#e3d5d0"/>
<rect x="1066.4" y="127.5" width="8.2" height="5.6" fill="#d3c6bf"/>
<rect x="498.5" y="143.8" width="18.4" height="10.8" fill="#dbd1cb"/>
<rect x="519.1" y="143.8" width="18.5" height="10.8" fill="#e3dcd7"/>
<rect x="539.8" y="143.8" width="20.1" height="10.8" fill="#dbd1cb"/>
<rect x="562.1" y="143.8" width="22.5" height="10.8" fill="#e3d5d0"/>
<rect x="586.8" y="143.8" width="16.5" height="10.8" fill="#ded4cf"/>
<rect x="605.5" y="143.8" width="15.8" height="10.8" fill="#ded6d1"/>
<rect x="608.0" y="145.5" width="5.6" height="4.0" fill="#d3c6bf"/>
<rect x="623.4" y="143.8" width="19.6" height="10.8" fill="#e3d5d0"/>
<rect x="628.7" y="147.0" width="10.9" height="4.2" fill="#d3c6bf"/>
<rect x="645.3" y="143.8" width="22.7" height="10.8" fill="#e3d5d0"/>
<rect x="670.2" y="143.8" width="20.1" height="10.8" fill="#e3dcd7"/>
<rect x="674.8" y="145.1" width="9.6" height="5.4" fill="#d3c6bf"/>
<rect x="692.5" y="143.8" width="11.6" height="10.8" fill="#ded4cf"/>
<rect x="706.4" y="143.8" width="14.8" height="10.8" fill="#e3dcd7"/>
<rect x="711.2" y="145.4" width="9.0" height="5.3" fill="#d3c6bf"/>
<rect x="723.4" y="143.8" width="20.8" height="10.8" fill="#e3d5d0"/>
<rect x="726.4" y="146.1" width="7.9" height="6.2" fill="#d3c6bf"/>
<rect x="746.3" y="143.8" width="20.6" height="10.8" fill="#e3d5d0"/>
<rect x="752.7" y="147.5" width="7.7" height="7.5" fill="#d3c6bf"/>
<rect x="769.2" y="143.8" width="23.6" height="10.8" fill="#e3dcd7"/>
<rect x="773.5" y="146.5" width="11.4" height="5.2" fill="#d3c6bf"/>
<rect x="794.9" y="143.8" width="14.3" height="10.8" fill="#ded6d1"/>
<rect x="797.2" y="145.9" width="6.4" height="7.1" fill="#d3c6bf"/>
<rect x="811.5" y="143.8" width="23.2" height="10.8" fill="#ded4cf"/>
<rect x="814.7" y="147.4" width="7.9" height="6.7" fill="#d3c6bf"/>
<rect x="836.9" y="143.8" width="13.8" height="10.8" fill="#ded6d1"/>
<rect x="852.9" y="143.8" width="19.5" height="10.8" fill="#ded4cf"/>
<rect x="874.6" y="143.8" width="11.7" height="10.8" fill="#ded6d1"/>
<rect x="888.5" y="143.8" width="23.1" height="10.8" fill="#ded4cf"/>
<rect x="913.8" y="143.8" width="16.2" height="10.8" fill="#dbd1cb"/>
<rect x="932.2" y="143.8" width="14.6" height="10.8" fill="#ded4cf"/>
<rect x="937.2" y="145.3" width="6.0" height="4.8" fill="#d3c6bf"/>
<rect x="949.0" y="143.8" width="20.3" height="10.8" fill="#dbd1cb"/>
<rect x="971.6" y="143.8" width="23.8" height="10.8" fill="#ded4cf"/>
<rect x="976.3" y="147.3" width="13.8" height="4.2" fill="#d3c6bf"/>
<rect x="997.5" y="143.8" width="22.3" height="10.8" fill="#e3dcd7"/>
<rect x="999.2" y="144.9" width="13.3" height="4.7" fill="#d3c6bf"/>
<rect x="1022.1" y="143.8" width="16.3" height="10.8" fill="#dbd1cb"/>
<rect x="1040.6" y="143.8" width="22.3" height="10.8" fill="#dbd1cb"/>
<rect x="1046.0" y="147.2" width="9.5" height="5.5" fill="#d3c6bf"/>
<rect x="1065.1" y="143.8" width="15.9" height="10.8" fill="#e3d5d0"/>
<rect x="1069.0" y="145.9" width="9.3" height="7.5" fill="#d3c6bf"/>
<rect x="507.5" y="156.9" width="24.6" height="15.3" fill="#ded6d1"/>
<rect x="534.4" y="156.9" width="15.1" height="15.3" fill="#ded4cf"/>
<rect x="551.7" y="156.9" width="20.3" height="15.3" fill="#ded6d1"/>
<rect x="557.7" y="161.6" width="7.1" height="6.6" fill="#d3c6bf"/>
<rect x="574.2" y="156.9" width="17.9" height="15.3" fill="#ded4cf"/>
<rect x="578.4" y="159.4" width="10.1" height="6.2" fill="#d3c6bf"/>
<rect x="594.4" y="156.9" width="22.8" height="15.3" fill="#dbd1cb"/>
<rect x="619.3" y="156.9" width="22.4" height="15.3" fill="#e3d5d0"/>
<rect x="643.9" y="156.9" width="19.8" height="15.3" fill="#dbd1cb"/>
<rect x="665.9" y="156.9" width="22.4" height="15.3" fill="#dbd1cb"/>
<rect x="669.3" y="160.7" width="9.1" height="6.2" fill="#d3c6bf"/>
<rect x="690.5" y="156.9" width="11.0" height="15.3" fill="#e3d5d0"/>
<rect x="703.7" y="156.9" width="21.9" height="15.3" fill="#dbd1cb"/>
<rect x="706.4" y="158.9" width="12.0" height="7.3" fill="#d3c6bf"/>
<rect x="727.8" y="156.9" width="20.3" height="15.3" fill="#dbd1cb"/>
<rect x="732.9" y="158.4" width="7.0" height="6.7" fill="#d3c6bf"/>
<rect x="750.3" y="156.9" width="21.0" height="15.3" fill="#ded6d1"/>
<rect x="756.7" y="161.4" width="12.9" height="6.1" fill="#d3c6bf"/>
<rect x="773.6" y="156.9" width="11.7" height="15.3" fill="#ded4cf"/>
<rect x="787.5" y="156.9" width="22.5" height="15.3" fill="#e3dcd7"/>
<rect x="793.1" y="159.6" width="8.5" height="8.3" fill="#d3c6bf"/>
<rect x="812.2" y="156.9" width="20.2" height="15.3" fill="#dbd1cb"/>
<rect x="834.7" y="156.9" width="22.0" height="15.3" fill="#dbd1cb"/>
<rect x="840.9" y="160.2" width="13.8" height="9.9" fill="#d3c6bf"/>
<rect x="858.9" y="156.9" width="16.9" height="15.3" fill="#dbd1cb"/>
<rect x="860.0" y="160.3" width="6.5" height="8.5" fill="#d3c6bf"/>
<rect x="878.0" y="156.9" width="14.6" height="15.3" fill="#dbd1cb"/>
<rect x="879.8" y="160.2" width="7.9" height="6.0" fill="#d3c6bf"/>
<rect x="894.8" y="156.9" width="10.9" height="15.3" fill="#e3dcd7"/>
<rect x="907.9" y="156.9" width="10.9" height="15.3" fill="#e3dcd7"/>
<rect x="911.8" y="158.7" width="7.3" height="7.8" fill="#d3c6bf"/>
<rect x="920.9" y="156.9" width="16.6" height="15.3" fill="#e3d5d0"/>
<rect x="922.2" y="160.2" width="9.3" height="8.5" fill="#d3c6bf"/>
<rect x="939.7" y="156.9" width="14.7" height="15.3" fill="#e3dcd7"/>
<rect x="956.6" y="156.9" width="24.7" height="15.3" fill="#ded4cf"/>
<rect x="983.5" y="156.9" width="24.0" height="15.3" fill="#ded6d1"/>
<rect x="984.7" y="158.6" width="8.8" height="5.6" fill="#d3c6bf"/>
<rect x="1009.7" y="156.9" width="15.8" height="15.3" fill="#e3d5d0"/>
<rect x="1013.0" y="157.9" width="6.5" height="10.3" fill="#d3c6bf"/>
<rect x="1027.7" y="156.9" width="11.0" height="15.3" fill="#e3d5d0"/>
<rect x="1029.5" y="161.8" width="5.9" height="6.9" fill="#d3c6bf"/>
<rect x="1040.9" y="156.9" width="18.2" height="15.3" fill="#ded6d1"/>
<rect x="1061.3" y="156.9" width="17.5" height="15.3" fill="#ded4cf"/>
<rect x="1066.8" y="158.0" width="9.3" height="6.4" fill="#d3c6bf"/>
<rect x="497.4" y="174.4" width="20.0" height="11.6" fill="#e3dcd7"/>
<rect x="519.6" y="174.4" width="17.1" height="11.6" fill="#e3dcd7"/>
<rect x="524.9" y="176.4" width="6.3" height="5.5" fill="#d3c6bf"/>
<rect x="538.9" y="174.4" width="21.2" height="11.6" fill="#dbd1cb"/>
<rect x="540.7" y="176.3" width="8.5" height="5.6" fill="#d3c6bf"/>
<rect x="562.3" y="174.4" width="13.0" height="11.6" fill="#e3dcd7"/>
<rect x="564.8" y="175.4" width="6.8" height="5.8" fill="#d3c6bf"/>
<rect x="577.4" y="174.4" width="15.3" height="11.6" fill="#e3d5d0"/>
<rect x="594.9" y="174.4" width="21.5" height="11.6" fill="#ded6d1"/>
<rect x="618.6" y="174.4" width="15.3" height="11.6" fill="#e3d5d0"/>
<rect x="623.8" y="176.7" width="10.3" height="5.1" fill="#d3c6bf"/>
<rect x="636.1" y="174.4" width="16.5" height="11.6" fill="#dbd1cb"/>
<rect x="654.8" y="174.4" width="11.8" height="11.6" fill="#ded4cf"/>
<rect x="668.8" y="174.4" width="15.3" height="11.6" fill="#dbd1cb"/>
<rect x="686.3" y="174.4" width="18.2" height="11.6" fill="#ded6d1"/>
<rect x="690.5" y="176.5" width="10.0" height="5.0" fill="#d3c6bf"/>
<rect x="706.7" y="174.4" width="19.4" height="11.6" fill="#ded4cf"/>
<rect x="728.3" y="174.4" width="19.6" height="11.6" fill="#e3d5d0"/>
<rect x="750.1" y="174.4" width="23.7" height="11.6" fill="#ded6d1"/>
<rect x="776.0" y="174.4" width="20.5" height="11.6" fill="#ded4cf"/>
<rect x="779.7" y="178.0" width="10.2" height="5.7" fill="#d3c6bf"/>
<rect x="798.7" y="174.4" width="18.4" height="11.6" fill="#ded6d1"/>
<rect x="819.3" y="174.4" width="11.3" height="11.6" fill="#ded4cf"/>
<rect x="822.1" y="177.2" width="7.8" height="4.8" fill="#d3c6bf"/>
<rect x="832.7" y="174.4" width="17.4" height="11.6" fill="#e3dcd7"/>
<rect x="852.3" y="174.4" width="15.2" height="11.6" fill="#ded4cf"/>
<rect x="869.7" y="174.4" width="16.4" height="11.6" fill="#dbd1cb"/>
<rect x="888.3" y="174.4" width="23.4" height="11.6" fill="#ded6d1"/>
<rect x="894.9" y="177.4" width="14.9" height="7.6" fill="#d3c6bf"/>
<rect x="913.8" y="174.4" width="22.0" height="11.6" fill="#e3d5d0"/>
<rect x="916.5" y="175.9" width="7.5" height="5.6" fill="#d3c6bf"/>
<rect x="938.0" y="174.4" width="18.0" height="11.6" fill="#e3dcd7"/>
<rect x="941.7" y="178.1" width="7.3" height="5.3" fill="#d3c6bf"/>
<rect x="958.3" y="174.4" width="19.8" height="11.6" fill="#ded6d1"/>
<rect x="961.7" y="177.7" width="12.4" height="4.4" fill="#d3c6bf"/>
<rect x="980.3" y="174.4" width="17.8" height="11.6" fill="#ded6d1"/>
<rect x="1000.2" y="174.4" width="18.5" height="11.6" fill="#ded6d1"/>
<rect x="1020.9" y="174.4" width="12.9" height="11.6" fill="#e3dcd7"/>
<rect x="1023.1" y="178.3" width="8.9" height="5.1" fill="#d3c6bf"/>
<rect x="1036.0" y="174.4" width="14.8" height="11.6" fill="#ded4cf"/>
<rect x="1038.6" y="178.0" width="8.3" height="7.9" fill="#d3c6bf"/>
<rect x="1053.1" y="174.4" width="11.8" height="11.6" fill="#dbd1cb"/>
<rect x="1067.1" y="174.4" width="15.2" height="11.6" fill="#dbd1cb"/>
<rect x="497.6" y="188.2" width="22.2" height="18.0" fill="#e3dcd7"/>
<rect x="522.0" y="188.2" width="24.0" height="18.0" fill="#e3d5d0"/>
<rect x="524.4" y="193.1" width="9.2" height="9.6" fill="#d3c6bf"/>
<rect x="548.2" y="188.2" width="11.4" height="18.0" fill="#e3dcd7"/>
<rect x="552.1" y="192.3" width="5.5" height="7.2" fill="#d3c6bf"/>
<rect x="561.8" y="188.2" width="24.7" height="18.0" fill="#dbd1cb"/>
<rect x="588.7" y="188.2" width="15.8" height="18.0" fill="#e3dcd7"/>
<rect x="606.8" y="188.2" width="13.6" height="18.0" fill="#ded6d1"/>
<rect x="622.6" y="188.2" width="16.7" height="18.0" fill="#e3d5d0"/>
<rect x="625.7" y="191.7" width="11.0" height="8.2" fill="#d3c6bf"/>
<rect x="641.5" y="188.2" width="20.7" height="18.0" fill="#dbd1cb"/>
<rect x="643.2" y="189.8" width="12.9" height="11.8" fill="#d3c6bf"/>
<rect x="664.4" y="188.2" width="11.9" height="18.0" fill="#ded4cf"/>
<rect x="666.9" y="190.2" width="6.0" height="7.4" fill="#d3c6bf"/>
<rect x="678.5" y="188.2" width="19.8" height="18.0" fill="#e3dcd7"/>
<rect x="681.1" y="191.4" width="12.9" height="7.8" fill="#d3c6bf"/>
<rect x="700.4" y="188.2" width="20.5" height="18.0" fill="#e3d5d0"/>
<rect x="703.8" y="189.8" width="12.9" height="7.6" fill="#d3c6bf"/>
<rect x="723.2" y="188.2" width="16.7" height="18.0" fill="#e3dcd7"/>
<rect x="728.3" y="193.1" width="6.3" height="10.0" fill="#d3c6bf"/>
<rect x="742.1" y="188.2" width="17.1" height="18.0" fill="#dbd1cb"/>
<rect x="744.8" y="191.1" width="10.0" height="10.1" fill="#d3c6bf"/>
<rect x="761.4" y="188.2" width="15.6" height="18.0" fill="#ded6d1"/>
<rect x="779.2" y="188.2" width="13.0" height="18.0" fill="#ded6d1"/>
<rect x="781.9" y="190.8" width="7.6" height="9.7" fill="#d3c6bf"/>
<rect x="794.4" y="188.2" width="24.4" height="18.0" fill="#ded6d1"/>
<rect x="821.0" y="188.2" width="16.3" height="18.0" fill="#dbd1cb"/>
<rect x="839.5" y="188.2" width="20.6" height="18.0" fill="#ded6d1"/>
<rect x="843.2" y="191.2" width="11.3" height="7.4" fill="#d3c6bf"/>
<rect x="862.3" y="188.2" width="24.7" height="18.0" fill="#dbd1cb"/>
<rect x="869.2" y="191.8" width="8.8" height="10.9" fill="#d3c6bf"/>
<rect x="889.2" y="188.2" width="10.9" height="18.0" fill="#e3d5d0"/>
<rect x="902.2" y="188.2" width="23.5" height="18.0" fill="#ded4cf"/>
<rect x="927.9" y="188.2" width="12.5" height="18.0" fill="#ded4cf"/>
<rect x="930.2" y="191.0" width="8.1" height="11.4" fill="#d3c6bf"/>
<rect x="942.6" y="188.2" width="12.3" height="18.0" fill="#ded4cf"/>
<rect x="957.1" y="188.2" width="18.3" height="18.0" fill="#ded6d1"/>
<rect x="977.6" y="188.2" width="12.1" height="18.0" fill="#e3d5d0"/>
<rect x="991.9" y="188.2" width="11.7" height="18.0" fill="#dbd1cb"/>
<rect x="993.2" y="191.8" width="5.4" height="10.8" fill="#d3c6bf"/>
<rect x="1005.9" y="188.2" width="14.3" height="18.0" fill="#ded4cf"/>
<rect x="1010.8" y="192.2" width="5.8" height="6.7" fill="#d3c6bf"/>
<rect x="1022.3" y="188.2" width="12.7" height="18.0" fill="#ded6d1"/>
<rect x="1037.2" y="188.2" width="17.9" height="18.0" fill="#dbd1cb"/>
<rect x="1057.3" y="188.2" width="18.1" height="18.0" fill="#ded4cf"/>
<rect x="1077.6" y="188.2" width="24.3" height="18.0" fill="#ded6d1"/>
<rect x="1078.7" y="190.0" width="14.5" height="10.5" fill="#d3c6bf"/>
<rect x="493.1" y="208.4" width="18.2" height="15.0" fill="#ded6d1"/>
<rect x="496.7" y="213.2" width="9.5" height="9.1" fill="#d3c6bf"/>
<rect x="513.6" y="208.4" width="21.7" height="15.0" fill="#ded4cf"/>
<rect x="515.0" y="210.5" width="8.0" height="9.9" fill="#d3c6bf"/>
<rect x="537.4" y="208.4" width="15.4" height="15.0" fill="#ded4cf"/>
<rect x="542.7" y="211.7" width="6.0" height="10.2" fill="#d3c6bf"/>
<rect x="555.0" y="208.4" width="23.8" height="15.0" fill="#ded6d1"/>
<rect x="558.1" y="212.5" width="9.8" height="7.1" fill="#d3c6bf"/>
<rect x="581.0" y="208.4" width="16.8" height="15.0" fill="#ded4cf"/>
<rect x="585.1" y="210.8" width="6.4" height="6.8" fill="#d3c6bf"/>
<rect x="600.0" y="208.4" width="18.2" height="15.0" fill="#dbd1cb"/>
<rect x="620.5" y="208.4" width="18.5" height="15.0" fill="#ded4cf"/>
<rect x="641.1" y="208.4" width="20.3" height="15.0" fill="#e3dcd7"/>
<rect x="644.2" y="213.3" width="10.2" height="7.9" fill="#d3c6bf"/>
<rect x="663.6" y="208.4" width="21.1" height="15.0" fill="#e3dcd7"/>
<rect x="670.3" y="209.4" width="11.1" height="10.1" fill="#d3c6bf"/>
<rect x="686.8" y="208.4" width="15.9" height="15.0" fill="#e3d5d0"/>
<rect x="705.0" y="208.4" width="22.6" height="15.0" fill="#dbd1cb"/>
<rect x="729.7" y="208.4" width="19.1" height="15.0" fill="#e3dcd7"/>
<rect x="731.3" y="212.5" width="8.6" height="9.6" fill="#d3c6bf"/>
<rect x="751.0" y="208.4" width="13.8" height="15.0" fill="#e3d5d0"/>
<rect x="755.0" y="211.1" width="8.9" height="7.2" fill="#d3c6bf"/>
<rect x="766.9" y="208.4" width="14.8" height="15.0" fill="#ded6d1"/>
<rect x="772.0" y="212.8" width="6.8" height="6.8" fill="#d3c6bf"/>
<rect x="784.0" y="208.4" width="22.3" height="15.0" fill="#e3dcd7"/>
<rect x="808.4" y="208.4" width="11.6" height="15.0" fill="#ded4cf"/>
<rect x="811.4" y="211.7" width="8.0" height="8.5" fill="#d3c6bf"/>
<rect x="822.2" y="208.4" width="11.1" height="15.0" fill="#dbd1cb"/>
<rect x="835.5" y="208.4" width="10.9" height="15.0" fill="#ded4cf"/>
<rect x="838.5" y="213.5" width="7.5" height="5.6" fill="#d3c6bf"/>
<rect x="848.6" y="208.4" width="21.7" height="15.0" fill="#ded4cf"/>
<rect x="872.5" y="208.4" width="12.8" height="15.0" fill="#ded4cf"/>
<rect x="887.5" y="208.4" width="22.0" height="15.0" fill="#ded4cf"/>
<rect x="893.1" y="209.7" width="8.1" height="9.5" fill="#d3c6bf"/>
<rect x="911.7" y="208.4" width="20.1" height="15.0" fill="#e3d5d0"/>
<rect x="934.1" y="208.4" width="20.6" height="15.0" fill="#ded4cf"/>
<rect x="940.6" y="211.7" width="13.2" height="6.3" fill="#d3c6bf"/>
<rect x="956.9" y="208.4" width="16.6" height="15.0" fill="#e3d5d0"/>
<rect x="962.3" y="210.0" width="7.2" height="7.3" fill="#d3c6bf"/>
<rect x="975.7" y="208.4" width="23.4" height="15.0" fill="#ded4cf"/>
<rect x="981.4" y="211.4" width="11.0" height="9.3" fill="#d3c6bf"/>
<rect x="1001.3" y="208.4" width="18.0" height="15.0" fill="#ded4cf"/>
<rect x="1006.0" y="210.1" width="9.6" height="6.2" fill="#d3c6bf"/>
<rect x="1021.4" y="208.4" width="15.6" height="15.0" fill="#dbd1cb"/>
<rect x="1039.3" y="208.4" width="16.1" height="15.0" fill="#e3d5d0"/>
<rect x="1057.5" y="208.4" width="17.1" height="15.0" fill="#e3d5d0"/>
<rect x="1076.9" y="208.4" width="15.8" height="15.0" fill="#e3d5d0"/>
<rect x="1081.0" y="211.0" width="5.9" height="7.7" fill="#d3c6bf"/>
<rect x="497.0" y="225.6" width="16.6" height="14.2" fill="#ded6d1"/>
<rect x="498.3" y="229.8" width="7.7" height="8.4" fill="#d3c6bf"/>
<rect x="515.8" y="225.6" width="16.9" height="14.2" fill="#e3d5d0"/>
<rect x="517.6" y="228.2" width="8.8" height="6.8" fill="#d3c6bf"/>
<rect x="534.8" y="225.6" width="12.4" height="14.2" fill="#dbd1cb"/>
<rect x="549.5" y="225.6" width="12.2" height="14.2" fill="#e3dcd7"/>
<rect x="563.9" y="225.6" width="12.9" height="14.2" fill="#e3dcd7"/>
<rect x="579.0" y="225.6" width="18.5" height="14.2" fill="#e3dcd7"/>
<rect x="582.3" y="230.4" width="8.4" height="6.4" fill="#d3c6bf"/>
<rect x="599.7" y="225.6" width="14.3" height="14.2" fill="#dbd1cb"/>
<rect x="601.5" y="228.7" width="7.9" height="5.5" fill="#d3c6bf"/>
<rect x="616.2" y="225.6" width="21.5" height="14.2" fill="#e3d5d0"/>
<rect x="623.3" y="228.0" width="9.4" height="5.5" fill="#d3c6bf"/>
<rect x="639.9" y="225.6" width="21.8" height="14.2" fill="#e3dcd7"/>
<rect x="663.9" y="225.6" width="22.4" height="14.2" fill="#e3dcd7"/>
<rect x="667.2" y="227.3" width="14.0" height="8.2" fill="#d3c6bf"/>
<rect x="688.6" y="225.6" width="14.8" height="14.2" fill="#e3d5d0"/>
<rect x="691.5" y="227.7" width="6.6" height="6.3" fill="#d3c6bf"/>
<rect x="705.6" y="225.6" width="17.9" height="14.2" fill="#ded4cf"/>
<rect x="710.9" y="230.0" width="9.7" height="7.6" fill="#d3c6bf"/>
<rect x="725.7" y="225.6" width="21.1" height="14.2" fill="#e3d5d0"/>
<rect x="749.0" y="225.6" width="20.6" height="14.2" fill="#e3d5d0"/>
<rect x="771.8" y="225.6" width="14.4" height="14.2" fill="#ded6d1"/>
<rect x="775.9" y="229.2" width="7.7" height="7.3" fill="#d3c6bf"/>
<rect x="788.4" y="225.6" width="20.4" height="14.2" fill="#e3dcd7"/>
<rect x="811.1" y="225.6" width="24.0" height="14.2" fill="#e3d5d0"/>
<rect x="817.0" y="230.1" width="8.5" height="7.6" fill="#d3c6bf"/>
<rect x="837.3" y="225.6" width="18.8" height="14.2" fill="#ded6d1"/>
<rect x="838.3" y="230.3" width="12.4" height="5.9" fill="#d3c6bf"/>
<rect x="858.3" y="225.6" width="15.9" height="14.2" fill="#e3dcd7"/>
<rect x="876.5" y="225.6" width="11.7" height="14.2" fill="#ded6d1"/>
<rect x="878.8" y="227.2" width="7.9" height="9.7" fill="#d3c6bf"/>
<rect x="890.3" y="225.6" width="24.4" height="14.2" fill="#e3d5d0"/>
<rect x="917.0" y="225.6" width="16.9" height="14.2" fill="#dbd1cb"/>
<rect x="921.2" y="229.0" width="11.0" height="9.2" fill="#d3c6bf"/>
<rect x="936.1" y="225.6" width="12.2" height="14.2" fill="#dbd1cb"/>
<rect x="937.3" y="228.5" width="6.7" height="9.7" fill="#d3c6bf"/>
<rect x="950.5" y="225.6" width="18.7" height="14.2" fill="#dbd1cb"/>
<rect x="971.4" y="225.6" width="14.4" height="14.2" fill="#dbd1cb"/>
<rect x="987.9" y="225.6" width="23.9" height="14.2" fill="#e3d5d0"/>
<rect x="1014.1" y="225.6" width="23.8" height="14.2" fill="#ded4cf"/>
<rect x="1040.0" y="225.6" width="11.1" height="14.2" fill="#ded4cf"/>
<rect x="1053.3" y="225.6" width="24.8" height="14.2" fill="#e3d5d0"/>
<rect x="508.7" y="242.0" width="12.0" height="14.0" fill="#e3d5d0"/>
<rect x="512.6" y="243.4" width="5.5" height="6.3" fill="#d3c6bf"/>
<rect x="522.9" y="242.0" width="24.6" height="14.0" fill="#ded4cf"/>
<rect x="529.7" y="245.6" width="12.2" height="7.7" fill="#d3c6bf"/>
<rect x="549.7" y="242.0" width="21.4" height="14.0" fill="#ded6d1"/>
<rect x="551.1" y="246.1" width="14.0" height="8.9" fill="#d3c6bf"/>
<rect x="573.3" y="242.0" width="16.5" height="14.0" fill="#e3dcd7"/>
<rect x="576.1" y="246.5" width="7.0" height="5.1" fill="#d3c6bf"/>
<rect x="592.0" y="242.0" width="16.0" height="14.0" fill="#e3dcd7"/>
<rect x="610.2" y="242.0" width="15.7" height="14.0" fill="#dbd1cb"/>
<rect x="628.1" y="242.0" width="16.6" height="14.0" fill="#dbd1cb"/>
<rect x="630.3" y="244.8" width="10.1" height="6.5" fill="#d3c6bf"/>
<rect x="646.9" y="242.0" width="14.1" height="14.0" fill="#e3d5d0"/>
<rect x="649.9" y="244.0" width="9.2" height="5.8" fill="#d3c6bf"/>
<rect x="663.2" y="242.0" width="14.1" height="14.0" fill="#e3dcd7"/>
<rect x="679.5" y="242.0" width="21.2" height="14.0" fill="#dbd1cb"/>
<rect x="702.8" y="242.0" width="21.9" height="14.0" fill="#e3d5d0"/>
<rect x="708.1" y="244.9" width="10.4" height="5.1" fill="#d3c6bf"/>
<rect x="726.9" y="242.0" width="18.6" height="14.0" fill="#dbd1cb"/>
<rect x="729.8" y="246.5" width="12.4" height="6.7" fill="#d3c6bf"/>
<rect x="747.7" y="242.0" width="12.7" height="14.0" fill="#dbd1cb"/>
<rect x="751.5" y="244.5" width="5.8" height="7.7" fill="#d3c6bf"/>
<rect x="762.6" y="242.0" width="21.2" height="14.0" fill="#ded4cf"/>
<rect x="786.0" y="242.0" width="23.6" height="14.0" fill="#ded6d1"/>
<rect x="789.5" y="243.2" width="14.8" height="5.6" fill="#d3c6bf"/>
<rect x="811.8" y="242.0" width="13.7" height="14.0" fill="#ded4cf"/>
<rect x="827.6" y="242.0" width="23.8" height="14.0" fill="#e3dcd7"/>
<rect x="829.6" y="246.1" width="10.3" height="5.1" fill="#d3c6bf"/>
<rect x="853.7" y="242.0" width="14.1" height="14.0" fill="#dbd1cb"/>
<rect x="870.0" y="242.0" width="21.0" height="14.0" fill="#ded4cf"/>
<rect x="875.3" y="246.6" width="8.0" height="9.1" fill="#d3c6bf"/>
<rect x="893.2" y="242.0" width="24.6" height="14.0" fill="#e3dcd7"/>
<rect x="919.9" y="242.0" width="12.5" height="14.0" fill="#e3dcd7"/>
<rect x="921.4" y="245.0" width="6.8" height="7.6" fill="#d3c6bf"/>
<rect x="934.7" y="242.0" width="21.5" height="14.0" fill="#e3d5d0"/>
<rect x="936.2" y="245.5" width="7.2" height="9.3" fill="#d3c6bf"/>
<rect x="958.3" y="242.0" width="24.5" height="14.0" fill="#e3d5d0"/>
<rect x="966.1" y="245.5" width="8.8" height="7.2" fill="#d3c6bf"/>
<rect x="985.0" y="242.0" width="23.3" height="14.0" fill="#e3d5d0"/>
<rect x="990.0" y="246.3" width="11.2" height="5.8" fill="#d3c6bf"/>
<rect x="1010.5" y="242.0" width="24.0" height="14.0" fill="#ded6d1"/>
<rect x="1015.5" y="245.1" width="10.1" height="5.1" fill="#d3c6bf"/>
<rect x="1036.7" y="242.0" width="16.4" height="14.0" fill="#dbd1cb"/>
<rect x="1055.3" y="242.0" width="11.1" height="14.0" fill="#ded4cf"/>
<rect x="1068.7" y="242.0" width="17.8" height="14.0" fill="#ded6d1"/>
<rect x="1070.6" y="243.1" width="7.8" height="5.1" fill="#d3c6bf"/>
<rect x="502.4" y="258.2" width="16.0" height="10.3" fill="#ded4cf"/>
<rect x="506.7" y="259.6" width="6.2" height="5.9" fill="#d3c6bf"/>
<rect x="520.5" y="258.2" width="19.4" height="10.3" fill="#ded4cf"/>
<rect x="542.1" y="258.2" width="17.2" height="10.3" fill="#e3dcd7"/>
<rect x="561.6" y="258.2" width="17.7" height="10.3" fill="#e3d5d0"/>
<rect x="581.4" y="258.2" width="23.1" height="10.3" fill="#dbd1cb"/>
<rect x="586.2" y="261.7" width="13.4" height="7.2" fill="#d3c6bf"/>
<rect x="606.8" y="258.2" width="15.2" height="10.3" fill="#e3d5d0"/>
<rect x="624.2" y="258.2" width="13.0" height="10.3" fill="#e3dcd7"/>
<rect x="625.5" y="261.1" width="6.1" height="5.8" fill="#d3c6bf"/>
<rect x="639.4" y="258.2" width="17.8" height="10.3" fill="#e3d5d0"/>
<rect x="659.4" y="258.2" width="20.4" height="10.3" fill="#ded4cf"/>
<rect x="663.2" y="261.5" width="10.6" height="4.0" fill="#d3c6bf"/>
<rect x="681.9" y="258.2" width="15.3" height="10.3" fill="#ded4cf"/>
<rect x="683.6" y="259.3" width="8.1" height="3.9" fill="#d3c6bf"/>
<rect x="699.4" y="258.2" width="14.7" height="10.3" fill="#ded6d1"/>
<rect x="703.8" y="261.4" width="6.4" height="7.1" fill="#d3c6bf"/>
<rect x="716.3" y="258.2" width="17.9" height="10.3" fill="#ded4cf"/>
<rect x="717.6" y="259.4" width="11.2" height="4.3" fill="#d3c6bf"/>
<rect x="736.4" y="258.2" width="15.2" height="10.3" fill="#e3d5d0"/>
<rect x="753.8" y="258.2" width="23.8" height="10.3" fill="#dbd1cb"/>
<rect x="779.8" y="258.2" width="17.0" height="10.3" fill="#e3dcd7"/>
<rect x="799.0" y="258.2" width="23.6" height="10.3" fill="#dbd1cb"/>
<rect x="824.9" y="258.2" width="20.8" height="10.3" fill="#e3dcd7"/>
<rect x="847.8" y="258.2" width="13.3" height="10.3" fill="#ded4cf"/>
<rect x="849.7" y="261.7" width="4.7" height="5.7" fill="#d3c6bf"/>
<rect x="863.3" y="258.2" width="15.6" height="10.3" fill="#e3d5d0"/>
<rect x="881.1" y="258.2" width="16.4" height="10.3" fill="#ded6d1"/>
<rect x="899.7" y="258.2" width="13.0" height="10.3" fill="#e3dcd7"/>
<rect x="914.9" y="258.2" width="23.0" height="10.3" fill="#e3dcd7"/>
<rect x="920.0" y="261.3" width="9.5" height="6.4" fill="#d3c6bf"/>
<rect x="940.1" y="258.2" width="19.9" height="10.3" fill="#ded6d1"/>
<rect x="943.4" y="260.3" width="11.6" height="3.8" fill="#d3c6bf"/>
<rect x="962.2" y="258.2" width="14.5" height="10.3" fill="#ded4cf"/>
<rect x="978.9" y="258.2" width="17.7" height="10.3" fill="#ded4cf"/>
<rect x="998.8" y="258.2" width="11.3" height="10.3" fill="#dbd1cb"/>
<rect x="1002.8" y="259.8" width="6.6" height="4.2" fill="#d3c6bf"/>
<rect x="1012.4" y="258.2" width="12.9" height="10.3" fill="#ded4cf"/>
<rect x="1014.3" y="259.7" width="7.5" height="6.3" fill="#d3c6bf"/>
<rect x="1027.5" y="258.2" width="24.0" height="10.3" fill="#e3dcd7"/>
<rect x="1028.9" y="259.3" width="12.0" height="5.9" fill="#d3c6bf"/>
<rect x="1053.7" y="258.2" width="15.0" height="10.3" fill="#ded4cf"/>
<rect x="1070.9" y="258.2" width="15.5" height="10.3" fill="#e3dcd7"/>
<rect x="1076.2" y="259.4" width="5.8" height="6.4" fill="#d3c6bf"/>
<rect x="505.1" y="270.7" width="18.2" height="8.1" fill="#e3dcd7"/>
<rect x="509.1" y="272.2" width="8.1" height="3.3" fill="#d3c6bf"/>
<rect x="525.5" y="270.7" width="11.5" height="8.1" fill="#e3dcd7"/>
<rect x="529.2" y="273.5" width="6.3" height="3.7" fill="#d3c6bf"/>
<rect x="539.2" y="270.7" width="23.7" height="8.1" fill="#ded4cf"/>
<rect x="565.1" y="270.7" width="11.9" height="8.1" fill="#ded4cf"/>
<rect x="568.3" y="273.3" width="6.6" height="5.1" fill="#d3c6bf"/>
<rect x="579.2" y="270.7" width="23.9" height="8.1" fill="#e3dcd7"/>
<rect x="605.4" y="270.7" width="16.7" height="8.1" fill="#ded6d1"/>
<rect x="624.2" y="270.7" width="13.5" height="8.1" fill="#ded6d1"/>
<rect x="639.9" y="270.7" width="13.4" height="8.1" fill="#e3dcd7"/>
<rect x="655.5" y="270.7" width="19.0" height="8.1" fill="#e3dcd7"/>
<rect x="660.7" y="271.8" width="6.7" height="3.3" fill="#d3c6bf"/>
<rect x="676.6" y="270.7" width="24.5" height="8.1" fill="#ded4cf"/>
<rect x="679.4" y="273.6" width="12.4" height="3.1" fill="#d3c6bf"/>
<rect x="703.3" y="270.7" width="17.3" height="8.1" fill="#e3d5d0"/>
<rect x="704.9" y="272.6" width="9.2" height="5.4" fill="#d3c6bf"/>
<rect x="722.8" y="270.7" width="16.4" height="8.1" fill="#dbd1cb"/>
<rect x="741.4" y="270.7" width="19.4" height="8.1" fill="#ded6d1"/>
<rect x="745.5" y="272.2" width="10.2" height="4.3" fill="#d3c6bf"/>
<rect x="763.1" y="270.7" width="16.2" height="8.1" fill="#ded4cf"/>
<rect x="781.4" y="270.7" width="19.5" height="8.1" fill="#dbd1cb"/>
<rect x="803.1" y="270.7" width="22.7" height="8.1" fill="#ded4cf"/>
<rect x="828.0" y="270.7" width="23.0" height="8.1" fill="#ded6d1"/>
<rect x="829.2" y="273.4" width="13.0" height="4.9" fill="#d3c6bf"/>
<rect x="853.3" y="270.7" width="21.1" height="8.1" fill="#dbd1cb"/>
<rect x="859.0" y="273.1" width="10.1" height="4.2" fill="#d3c6bf"/>
<rect x="876.6" y="270.7" width="16.9" height="8.1" fill="#ded4cf"/>
<rect x="878.6" y="271.7" width="10.7" height="5.0" fill="#d3c6bf"/>
<rect x="895.7" y="270.7" width="12.0" height="8.1" fill="#ded4cf"/>
<rect x="910.0" y="270.7" width="18.5" height="8.1" fill="#ded4cf"/>
<rect x="930.7" y="270.7" width="17.9" height="8.1" fill="#ded4cf"/>
<rect x="950.7" y="270.7" width="11.8" height="8.1" fill="#dbd1cb"/>
<rect x="954.1" y="273.6" width="7.0" height="5.1" fill="#d3c6bf"/>
<rect x="964.8" y="270.7" width="16.9" height="8.1" fill="#e3dcd7"/>
<rect x="969.4" y="272.8" width="11.3" height="4.1" fill="#d3c6bf"/>
<rect x="983.9" y="270.7" width="20.8" height="8.1" fill="#ded6d1"/>
<rect x="1006.8" y="270.7" width="15.6" height="8.1" fill="#ded4cf"/>
<rect x="1010.5" y="272.1" width="7.5" height="6.1" fill="#d3c6bf"/>
<rect x="1024.7" y="270.7" width="13.6" height="8.1" fill="#ded4cf"/>
<rect x="1027.8" y="273.4" width="8.7" height="4.3" fill="#d3c6bf"/>
<rect x="1040.4" y="270.7" width="19.1" height="8.1" fill="#e3dcd7"/>
<rect x="1061.7" y="270.7" width="18.9" height="8.1" fill="#e3dcd7"/>
<rect x="1066.3" y="272.5" width="7.3" height="3.2" fill="#d3c6bf"/>
<rect x="501.7" y="280.9" width="22.1" height="15.5" fill="#e3d5d0"/>
<rect x="526.0" y="280.9" width="14.6" height="15.5" fill="#e3d5d0"/>
<rect x="530.9" y="283.4" width="9.7" height="9.5" fill="#d3c6bf"/>
<rect x="542.9" y="280.9" width="17.7" height="15.5" fill="#ded4cf"/>
<rect x="547.9" y="283.8" width="6.8" height="8.5" fill="#d3c6bf"/>
<rect x="562.8" y="280.9" width="17.2" height="15.5" fill="#e3d5d0"/>
<rect x="582.2" y="280.9" width="17.0" height="15.5" fill="#ded6d1"/>
<rect x="601.4" y="280.9" width="15.7" height="15.5" fill="#ded6d1"/>
<rect x="603.7" y="284.9" width="9.1" height="9.7" fill="#d3c6bf"/>
<rect x="619.3" y="280.9" width="16.1" height="15.5" fill="#e3dcd7"/>
<rect x="622.9" y="284.2" width="8.5" height="7.4" fill="#d3c6bf"/>
<rect x="637.7" y="280.9" width="16.5" height="15.5" fill="#e3dcd7"/>
<rect x="656.3" y="280.9" width="22.5" height="15.5" fill="#e3d5d0"/>
<rect x="658.5" y="282.5" width="8.0" height="9.5" fill="#d3c6bf"/>
<rect x="681.0" y="280.9" width="21.1" height="15.5" fill="#e3dcd7"/>
<rect x="682.3" y="284.4" width="11.7" height="6.8" fill="#d3c6bf"/>
<rect x="704.3" y="280.9" width="15.4" height="15.5" fill="#e3d5d0"/>
<rect x="722.0" y="280.9" width="20.6" height="15.5" fill="#e3dcd7"/>
<rect x="744.8" y="280.9" width="23.5" height="15.5" fill="#ded4cf"/>
<rect x="770.4" y="280.9" width="11.2" height="15.5" fill="#e3d5d0"/>
<rect x="772.9" y="283.5" width="6.2" height="8.5" fill="#d3c6bf"/>
<rect x="783.8" y="280.9" width="15.3" height="15.5" fill="#e3dcd7"/>
<rect x="801.3" y="280.9" width="23.2" height="15.5" fill="#dbd1cb"/>
<rect x="826.7" y="280.9" width="23.6" height="15.5" fill="#dbd1cb"/>
<rect x="831.8" y="283.4" width="13.7" height="7.0" fill="#d3c6bf"/>
<rect x="852.5" y="280.9" width="22.8" height="15.5" fill="#ded4cf"/>
<rect x="855.0" y="285.0" width="7.8" height="9.0" fill="#d3c6bf"/>
<rect x="877.5" y="280.9" width="11.7" height="15.5" fill="#e3d5d0"/>
<rect x="891.3" y="280.9" width="11.1" height="15.5" fill="#e3dcd7"/>
<rect x="893.4" y="286.2" width="6.4" height="9.9" fill="#d3c6bf"/>
<rect x="904.7" y="280.9" width="11.7" height="15.5" fill="#ded6d1"/>
<rect x="908.6" y="284.6" width="6.5" height="5.5" fill="#d3c6bf"/>
<rect x="918.6" y="280.9" width="12.9" height="15.5" fill="#e3dcd7"/>
<rect x="922.3" y="282.9" width="4.6" height="6.6" fill="#d3c6bf"/>
<rect x="933.7" y="280.9" width="10.8" height="15.5" fill="#e3dcd7"/>
<rect x="934.7" y="283.5" width="5.5" height="6.2" fill="#d3c6bf"/>
<rect x="946.8" y="280.9" width="13.2" height="15.5" fill="#dbd1cb"/>
<rect x="962.2" y="280.9" width="17.4" height="15.5" fill="#e3d5d0"/>
<rect x="965.8" y="285.7" width="11.0" height="9.5" fill="#d3c6bf"/>
<rect x="981.7" y="280.9" width="17.0" height="15.5" fill="#e3d5d0"/>
<rect x="986.6" y="283.5" width="7.3" height="7.6" fill="#d3c6bf"/>
<rect x="1001.0" y="280.9" width="18.9" height="15.5" fill="#dbd1cb"/>
<rect x="1003.5" y="283.6" width="10.4" height="5.5" fill="#d3c6bf"/>
<rect x="1022.0" y="280.9" width="17.2" height="15.5" fill="#e3d5d0"/>
<rect x="1027.2" y="285.5" width="9.8" height="9.0" fill="#d3c6bf"/>
<rect x="1041.4" y="280.9" width="21.2" height="15.5" fill="#ded4cf"/>
<rect x="1045.4" y="282.9" width="11.1" height="8.8" fill="#d3c6bf"/>
<rect x="1064.8" y="280.9" width="23.0" height="15.5" fill="#dbd1cb"/>
<rect x="1067.4" y="286.1" width="11.7" height="8.0" fill="#d3c6bf"/>
<rect x="507.2" y="298.6" width="18.0" height="10.8" fill="#ded6d1"/>
<rect x="527.5" y="298.6" width="12.4" height="10.8" fill="#dbd1cb"/>
<rect x="542.1" y="298.6" width="20.8" height="10.8" fill="#ded6d1"/>
<rect x="548.9" y="302.2" width="11.0" height="6.0" fill="#d3c6bf"/>
<rect x="565.1" y="298.6" width="11.6" height="10.8" fill="#dbd1cb"/>
<rect x="568.4" y="300.3" width="6.2" height="7.6" fill="#d3c6bf"/>
<rect x="578.8" y="298.6" width="19.9" height="10.8" fill="#e3dcd7"/>
<rect x="601.0" y="298.6" width="23.7" height="10.8" fill="#e3d5d0"/>
<rect x="603.5" y="301.5" width="9.4" height="4.2" fill="#d3c6bf"/>
<rect x="626.9" y="298.6" width="21.5" height="10.8" fill="#e3dcd7"/>
<rect x="633.3" y="301.1" width="14.0" height="4.6" fill="#d3c6bf"/>
<rect x="650.5" y="298.6" width="13.4" height="10.8" fill="#dbd1cb"/>
<rect x="666.2" y="298.6" width="11.6" height="10.8" fill="#ded6d1"/>
<rect x="680.0" y="298.6" width="20.8" height="10.8" fill="#dbd1cb"/>
<rect x="703.0" y="298.6" width="21.2" height="10.8" fill="#ded4cf"/>
<rect x="726.4" y="298.6" width="24.6" height="10.8" fill="#e3dcd7"/>
<rect x="753.1" y="298.6" width="21.2" height="10.8" fill="#e3dcd7"/>
<rect x="776.5" y="298.6" width="19.4" height="10.8" fill="#ded6d1"/>
<rect x="798.1" y="298.6" width="15.1" height="10.8" fill="#e3dcd7"/>
<rect x="801.9" y="300.8" width="8.6" height="4.0" fill="#d3c6bf"/>
<rect x="815.4" y="298.6" width="19.1" height="10.8" fill="#e3dcd7"/>
<rect x="836.7" y="298.6" width="20.2" height="10.8" fill="#ded6d1"/>
<rect x="841.7" y="300.7" width="13.0" height="6.5" fill="#d3c6bf"/>
<rect x="859.1" y="298.6" width="12.5" height="10.8" fill="#ded4cf"/>
<rect x="873.8" y="298.6" width="15.3" height="10.8" fill="#ded6d1"/>
<rect x="876.9" y="300.7" width="8.0" height="4.1" fill="#d3c6bf"/>
<rect x="891.3" y="298.6" width="11.2" height="10.8" fill="#e3d5d0"/>
<rect x="893.3" y="300.0" width="6.4" height="7.5" fill="#d3c6bf"/>
<rect x="904.7" y="298.6" width="13.3" height="10.8" fill="#e3d5d0"/>
<rect x="908.1" y="301.5" width="7.6" height="5.7" fill="#d3c6bf"/>
<rect x="920.2" y="298.6" width="17.6" height="10.8" fill="#ded6d1"/>
<rect x="925.5" y="299.7" width="7.1" height="5.7" fill="#d3c6bf"/>
<rect x="940.0" y="298.6" width="22.6" height="10.8" fill="#e3d5d0"/>
<rect x="942.0" y="300.7" width="14.0" height="5.3" fill="#d3c6bf"/>
<rect x="964.8" y="298.6" width="11.7" height="10.8" fill="#e3dcd7"/>
<rect x="965.9" y="299.7" width="7.8" height="5.4" fill="#d3c6bf"/>
<rect x="978.7" y="298.6" width="12.0" height="10.8" fill="#ded6d1"/>
<rect x="980.8" y="302.5" width="7.7" height="6.2" fill="#d3c6bf"/>
<rect x="992.9" y="298.6" width="14.0" height="10.8" fill="#dbd1cb"/>
<rect x="994.4" y="300.2" width="8.0" height="4.6" fill="#d3c6bf"/>
<rect x="1009.2" y="298.6" width="13.2" height="10.8" fill="#e3d5d0"/>
<rect x="1024.5" y="298.6" width="16.5" height="10.8" fill="#ded4cf"/>
<rect x="1043.3" y="298.6" width="17.9" height="10.8" fill="#ded4cf"/>
<rect x="1045.8" y="302.5" width="6.2" height="7.0" fill="#d3c6bf"/>
<rect x="1063.4" y="298.6" width="23.9" height="10.8" fill="#ded4cf"/>
<rect x="497.8" y="311.6" width="18.4" height="13.7" fill="#dbd1cb"/>
<rect x="503.0" y="315.9" width="11.9" height="5.3" fill="#d3c6bf"/>
<rect x="518.4" y="311.6" width="19.9" height="13.7" fill="#e3dcd7"/>
<rect x="521.1" y="315.4" width="11.9" height="8.1" fill="#d3c6bf"/>
<rect x="540.6" y="311.6" width="23.7" height="13.7" fill="#dbd1cb"/>
<rect x="566.5" y="311.6" width="22.9" height="13.7" fill="#e3dcd7"/>
<rect x="591.6" y="311.6" width="12.4" height="13.7" fill="#ded6d1"/>
<rect x="606.2" y="311.6" width="22.9" height="13.7" fill="#e3dcd7"/>
<rect x="631.3" y="311.6" width="20.3" height="13.7" fill="#e3d5d0"/>
<rect x="653.8" y="311.6" width="18.9" height="13.7" fill="#e3dcd7"/>
<rect x="674.9" y="311.6" width="22.5" height="13.7" fill="#e3dcd7"/>
<rect x="699.6" y="311.6" width="12.8" height="13.7" fill="#ded4cf"/>
<rect x="700.9" y="315.5" width="7.5" height="6.9" fill="#d3c6bf"/>
<rect x="714.6" y="311.6" width="18.9" height="13.7" fill="#dbd1cb"/>
<rect x="718.9" y="313.3" width="9.2" height="8.9" fill="#d3c6bf"/>
<rect x="735.7" y="311.6" width="24.6" height="13.7" fill="#e3dcd7"/>
<rect x="740.3" y="314.9" width="12.4" height="6.0" fill="#d3c6bf"/>
<rect x="762.6" y="311.6" width="16.1" height="13.7" fill="#e3d5d0"/>
<rect x="763.6" y="312.6" width="5.5" height="6.3" fill="#d3c6bf"/>
<rect x="780.9" y="311.6" width="14.7" height="13.7" fill="#e3d5d0"/>
<rect x="797.7" y="311.6" width="11.7" height="13.7" fill="#dbd1cb"/>
<rect x="811.7" y="311.6" width="13.3" height="13.7" fill="#ded4cf"/>
<rect x="827.1" y="311.6" width="23.9" height="13.7" fill="#ded4cf"/>
<rect x="832.0" y="313.5" width="13.5" height="8.5" fill="#d3c6bf"/>
<rect x="853.2" y="311.6" width="18.3" height="13.7" fill="#e3d5d0"/>
<rect x="858.3" y="316.3" width="7.4" height="7.7" fill="#d3c6bf"/>
<rect x="873.8" y="311.6" width="13.1" height="13.7" fill="#ded6d1"/>
<rect x="877.8" y="314.7" width="5.5" height="8.0" fill="#d3c6bf"/>
<rect x="889.0" y="311.6" width="15.8" height="13.7" fill="#ded6d1"/>
<rect x="894.2" y="313.1" width="9.1" height="6.0" fill="#d3c6bf"/>
<rect x="907.1" y="311.6" width="14.4" height="13.7" fill="#ded4cf"/>
<rect x="923.6" y="311.6" width="16.0" height="13.7" fill="#ded6d1"/>
<rect x="927.5" y="314.4" width="6.0" height="7.6" fill="#d3c6bf"/>
<rect x="941.9" y="311.6" width="22.7" height="13.7" fill="#dbd1cb"/>
<rect x="966.8" y="311.6" width="12.6" height="13.7" fill="#e3d5d0"/>
<rect x="981.6" y="311.6" width="22.8" height="13.7" fill="#ded6d1"/>
<rect x="986.8" y="314.0" width="10.7" height="7.8" fill="#d3c6bf"/>
<rect x="1006.6" y="311.6" width="14.2" height="13.7" fill="#ded6d1"/>
<rect x="1023.0" y="311.6" width="24.4" height="13.7" fill="#e3dcd7"/>
<rect x="1026.0" y="314.2" width="9.7" height="6.9" fill="#d3c6bf"/>
<rect x="1049.7" y="311.6" width="22.7" height="13.7" fill="#ded4cf"/>
<rect x="1074.6" y="311.6" width="17.9" height="13.7" fill="#e3d5d0"/>
<rect x="1078.3" y="314.0" width="8.2" height="5.2" fill="#d3c6bf"/>
<rect x="504.6" y="327.5" width="11.8" height="17.6" fill="#e3d5d0"/>
<rect x="518.6" y="327.5" width="22.1" height="17.6" fill="#ded4cf"/>
<rect x="542.9" y="327.5" width="20.4" height="17.6" fill="#ded4cf"/>
<rect x="565.5" y="327.5" width="22.8" height="17.6" fill="#ded6d1"/>
<rect x="590.4" y="327.5" width="11.4" height="17.6" fill="#ded4cf"/>
<rect x="604.1" y="327.5" width="24.3" height="17.6" fill="#dbd1cb"/>
<rect x="609.0" y="329.0" width="9.8" height="6.8" fill="#d3c6bf"/>
<rect x="630.5" y="327.5" width="19.9" height="17.6" fill="#e3dcd7"/>
<rect x="636.5" y="329.6" width="6.7" height="11.2" fill="#d3c6bf"/>
<rect x="652.6" y="327.5" width="17.6" height="17.6" fill="#dbd1cb"/>
<rect x="654.2" y="332.9" width="10.3" height="9.3" fill="#d3c6bf"/>
<rect x="672.4" y="327.5" width="13.0" height="17.6" fill="#e3dcd7"/>
<rect x="675.6" y="328.8" width="8.8" height="7.9" fill="#d3c6bf"/>
<rect x="687.6" y="327.5" width="12.8" height="17.6" fill="#ded6d1"/>
<rect x="688.7" y="331.7" width="6.6" height="11.3" fill="#d3c6bf"/>
<rect x="702.6" y="327.5" width="21.9" height="17.6" fill="#dbd1cb"/>
<rect x="726.7" y="327.5" width="23.6" height="17.6" fill="#dbd1cb"/>
<rect x="729.7" y="333.1" width="9.3" height="9.8" fill="#d3c6bf"/>
<rect x="752.4" y="327.5" width="11.8" height="17.6" fill="#dbd1cb"/>
<rect x="766.4" y="327.5" width="19.5" height="17.6" fill="#e3dcd7"/>
<rect x="769.7" y="333.1" width="12.8" height="10.8" fill="#d3c6bf"/>
<rect x="788.1" y="327.5" width="14.1" height="17.6" fill="#e3d5d0"/>
<rect x="804.4" y="327.5" width="18.5" height="17.6" fill="#e3dcd7"/>
<rect x="808.3" y="330.1" width="7.2" height="10.4" fill="#d3c6bf"/>
<rect x="825.1" y="327.5" width="21.4" height="17.6" fill="#e3dcd7"/>
<rect x="848.7" y="327.5" width="23.0" height="17.6" fill="#dbd1cb"/>
<rect x="850.5" y="329.0" width="8.8" height="10.9" fill="#d3c6bf"/>
<rect x="873.9" y="327.5" width="17.7" height="17.6" fill="#ded4cf"/>
<rect x="876.7" y="329.4" width="11.8" height="9.5" fill="#d3c6bf"/>
<rect x="893.8" y="327.5" width="12.6" height="17.6" fill="#e3d5d0"/>
<rect x="908.6" y="327.5" width="19.4" height="17.6" fill="#e3d5d0"/>
<rect x="930.2" y="327.5" width="21.8" height="17.6" fill="#ded4cf"/>
<rect x="935.2" y="330.4" width="10.1" height="8.1" fill="#d3c6bf"/>
<rect x="954.2" y="327.5" width="19.9" height="17.6" fill="#e3dcd7"/>
<rect x="958.3" y="329.9" width="11.2" height="6.9" fill="#d3c6bf"/>
<rect x="976.2" y="327.5" width="14.8" height="17.6" fill="#ded6d1"/>
<rect x="978.5" y="329.0" width="9.2" height="11.4" fill="#d3c6bf"/>
<rect x="993.3" y="327.5" width="15.0" height="17.6" fill="#ded4cf"/>
<rect x="1010.5" y="327.5" width="20.6" height="17.6" fill="#e3d5d0"/>
<rect x="1033.3" y="327.5" width="12.0" height="17.6" fill="#e3dcd7"/>
<rect x="1047.5" y="327.5" width="17.7" height="17.6" fill="#ded6d1"/>
<rect x="1067.3" y="327.5" width="15.7" height="17.6" fill="#ded4cf"/>
<rect x="508.7" y="347.3" width="22.1" height="16.0" fill="#e3dcd7"/>
<rect x="532.9" y="347.3" width="11.2" height="16.0" fill="#e3d5d0"/>
<rect x="546.4" y="347.3" width="15.4" height="16.0" fill="#dbd1cb"/>
<rect x="549.2" y="348.7" width="9.2" height="8.5" fill="#d3c6bf"/>
<rect x="563.9" y="347.3" width="14.2" height="16.0" fill="#ded4cf"/>
<rect x="580.3" y="347.3" width="15.3" height="16.0" fill="#ded6d1"/>
<rect x="597.8" y="347.3" width="16.9" height="16.0" fill="#e3dcd7"/>
<rect x="616.9" y="347.3" width="15.8" height="16.0" fill="#e3d5d0"/>
<rect x="619.4" y="351.1" width="6.4" height="9.0" fill="#d3c6bf"/>
<rect x="635.0" y="347.3" width="17.9" height="16.0" fill="#dbd1cb"/>
<rect x="636.7" y="352.8" width="9.5" height="10.3" fill="#d3c6bf"/>
<rect x="655.0" y="347.3" width="24.2" height="16.0" fill="#ded4cf"/>
<rect x="681.4" y="347.3" width="17.4" height="16.0" fill="#e3dcd7"/>
<rect x="701.0" y="347.3" width="13.0" height="16.0" fill="#e3d5d0"/>
<rect x="716.2" y="347.3" width="22.1" height="16.0" fill="#e3d5d0"/>
<rect x="740.5" y="347.3" width="21.8" height="16.0" fill="#ded4cf"/>
<rect x="742.4" y="348.6" width="8.4" height="10.7" fill="#d3c6bf"/>
<rect x="764.6" y="347.3" width="15.1" height="16.0" fill="#ded4cf"/>
<rect x="766.3" y="350.9" width="8.5" height="8.8" fill="#d3c6bf"/>
<rect x="781.9" y="347.3" width="12.2" height="16.0" fill="#e3dcd7"/>
<rect x="796.3" y="347.3" width="10.8" height="16.0" fill="#e3d5d0"/>
<rect x="800.0" y="349.3" width="5.3" height="9.0" fill="#d3c6bf"/>
<rect x="809.4" y="347.3" width="20.1" height="16.0" fill="#dbd1cb"/>
<rect x="813.3" y="349.2" width="9.8" height="6.8" fill="#d3c6bf"/>
<rect x="831.7" y="347.3" width="20.3" height="16.0" fill="#ded6d1"/>
<rect x="854.2" y="347.3" width="19.1" height="16.0" fill="#e3d5d0"/>
<rect x="875.5" y="347.3" width="18.9" height="16.0" fill="#ded6d1"/>
<rect x="896.7" y="347.3" width="13.8" height="16.0" fill="#ded4cf"/>
<rect x="912.6" y="347.3" width="17.5" height="16.0" fill="#ded4cf"/>
<rect x="917.4" y="352.0" width="11.4" height="6.6" fill="#d3c6bf"/>
<rect x="932.3" y="347.3" width="12.5" height="16.0" fill="#dbd1cb"/>
<rect x="936.4" y="348.7" width="4.4" height="10.0" fill="#d3c6bf"/>
<rect x="947.0" y="347.3" width="23.5" height="16.0" fill="#ded6d1"/>
<rect x="952.4" y="351.5" width="13.7" height="7.8" fill="#d3c6bf"/>
<rect x="972.7" y="347.3" width="17.2" height="16.0" fill="#ded4cf"/>
<rect x="992.1" y="347.3" width="21.9" height="16.0" fill="#e3d5d0"/>
<rect x="1016.2" y="347.3" width="20.8" height="16.0" fill="#e3dcd7"/>
<rect x="1039.2" y="347.3" width="20.6" height="16.0" fill="#dbd1cb"/>
<rect x="1042.4" y="349.9" width="7.1" height="5.9" fill="#d3c6bf"/>
<rect x="1061.9" y="347.3" width="16.8" height="16.0" fill="#dbd1cb"/>
<rect x="496.3" y="365.5" width="16.0" height="7.9" fill="#e3dcd7"/>
<rect x="514.5" y="365.5" width="11.6" height="7.9" fill="#e3d5d0"/>
<rect x="516.1" y="366.7" width="4.2" height="5.3" fill="#d3c6bf"/>
<rect x="528.3" y="365.5" width="14.0" height="7.9" fill="#ded6d1"/>
<rect x="530.8" y="367.4" width="5.3" height="5.6" fill="#d3c6bf"/>
<rect x="544.6" y="365.5" width="11.4" height="7.9" fill="#ded4cf"/>
<rect x="547.0" y="368.1" width="5.2" height="5.5" fill="#d3c6bf"/>
<rect x="558.2" y="365.5" width="23.7" height="7.9" fill="#e3d5d0"/>
<rect x="562.8" y="366.7" width="14.4" height="4.0" fill="#d3c6bf"/>
<rect x="584.0" y="365.5" width="23.8" height="7.9" fill="#dbd1cb"/>
<rect x="587.1" y="367.4" width="14.4" height="5.1" fill="#d3c6bf"/>
<rect x="610.1" y="365.5" width="13.7" height="7.9" fill="#ded4cf"/>
<rect x="625.9" y="365.5" width="17.9" height="7.9" fill="#ded6d1"/>
<rect x="631.5" y="368.1" width="8.4" height="3.3" fill="#d3c6bf"/>
<rect x="646.1" y="365.5" width="22.8" height="7.9" fill="#ded4cf"/>
<rect x="648.7" y="368.0" width="10.0" height="3.7" fill="#d3c6bf"/>
<rect x="671.0" y="365.5" width="11.7" height="7.9" fill="#ded6d1"/>
<rect x="672.9" y="367.1" width="8.0" height="4.6" fill="#d3c6bf"/>
<rect x="684.9" y="365.5" width="16.0" height="7.9" fill="#ded4cf"/>
<rect x="703.1" y="365.5" width="15.5" height="7.9" fill="#ded4cf"/>
<rect x="720.8" y="365.5" width="12.1" height="7.9" fill="#e3d5d0"/>
<rect x="722.8" y="367.1" width="4.8" height="3.1" fill="#d3c6bf"/>
<rect x="735.1" y="365.5" width="17.5" height="7.9" fill="#ded6d1"/>
<rect x="754.8" y="365.5" width="11.2" height="7.9" fill="#ded6d1"/>
<rect x="757.4" y="366.5" width="4.4" height="5.4" fill="#d3c6bf"/>
<rect x="768.2" y="365.5" width="18.6" height="7.9" fill="#ded4cf"/>
<rect x="771.2" y="367.0" width="8.7" height="5.9" fill="#d3c6bf"/>
<rect x="789.0" y="365.5" width="20.6" height="7.9" fill="#dbd1cb"/>
<rect x="811.8" y="365.5" width="17.3" height="7.9" fill="#e3d5d0"/>
<rect x="831.2" y="365.5" width="22.5" height="7.9" fill="#e3d5d0"/>
<rect x="855.9" y="365.5" width="22.8" height="7.9" fill="#ded6d1"/>
<rect x="881.0" y="365.5" width="22.4" height="7.9" fill="#e3d5d0"/>
<rect x="905.5" y="365.5" width="23.5" height="7.9" fill="#ded6d1"/>
<rect x="931.2" y="365.5" width="12.7" height="7.9" fill="#ded6d1"/>
<rect x="946.1" y="365.5" width="13.1" height="7.9" fill="#e3d5d0"/>
<rect x="950.3" y="368.0" width="5.1" height="4.9" fill="#d3c6bf"/>
<rect x="961.4" y="365.5" width="22.3" height="7.9" fill="#ded4cf"/>
<rect x="963.8" y="368.0" width="13.8" height="5.4" fill="#d3c6bf"/>
<rect x="985.9" y="365.5" width="14.7" height="7.9" fill="#ded6d1"/>
<rect x="988.8" y="368.4" width="8.0" height="5.1" fill="#d3c6bf"/>
<rect x="1002.7" y="365.5" width="11.9" height="7.9" fill="#ded4cf"/>
<rect x="1004.8" y="366.7" width="8.0" height="5.8" fill="#d3c6bf"/>
<rect x="1016.8" y="365.5" width="12.5" height="7.9" fill="#ded4cf"/>
<rect x="1019.7" y="367.5" width="5.2" height="4.2" fill="#d3c6bf"/>
<rect x="1031.6" y="365.5" width="18.0" height="7.9" fill="#e3d5d0"/>
<rect x="1035.6" y="368.4" width="11.7" height="5.8" fill="#d3c6bf"/>
<rect x="1051.8" y="365.5" width="22.4" height="7.9" fill="#dbd1cb"/>
<rect x="1076.4" y="365.5" width="13.6" height="7.9" fill="#ded4cf"/>
<rect x="509.8" y="375.6" width="15.2" height="11.2" fill="#ded6d1"/>
<rect x="514.8" y="379.6" width="10.2" height="7.8" fill="#d3c6bf"/>
<rect x="527.2" y="375.6" width="20.0" height="11.2" fill="#ded6d1"/>
<rect x="532.7" y="379.3" width="8.4" height="4.4" fill="#d3c6bf"/>
<rect x="549.4" y="375.6" width="24.3" height="11.2" fill="#e3d5d0"/>
<rect x="555.6" y="378.9" width="12.0" height="5.1" fill="#d3c6bf"/>
<rect x="576.0" y="375.6" width="18.2" height="11.2" fill="#e3dcd7"/>
<rect x="596.3" y="375.6" width="12.7" height="11.2" fill="#e3dcd7"/>
<rect x="611.2" y="375.6" width="13.8" height="11.2" fill="#dbd1cb"/>
<rect x="627.2" y="375.6" width="12.4" height="11.2" fill="#ded6d1"/>
<rect x="641.8" y="375.6" width="22.6" height="11.2" fill="#e3dcd7"/>
<rect x="666.6" y="375.6" width="11.8" height="11.2" fill="#ded6d1"/>
<rect x="667.8" y="378.8" width="6.3" height="7.6" fill="#d3c6bf"/>
<rect x="680.6" y="375.6" width="24.7" height="11.2" fill="#ded4cf"/>
<rect x="707.5" y="375.6" width="13.6" height="11.2" fill="#e3dcd7"/>
<rect x="723.3" y="375.6" width="15.9" height="11.2" fill="#ded6d1"/>
<rect x="741.4" y="375.6" width="16.1" height="11.2" fill="#ded4cf"/>
<rect x="743.3" y="377.9" width="9.2" height="6.2" fill="#d3c6bf"/>
<rect x="759.7" y="375.6" width="12.3" height="11.2" fill="#ded6d1"/>
<rect x="774.2" y="375.6" width="23.7" height="11.2" fill="#dbd1cb"/>
<rect x="781.8" y="379.0" width="12.3" height="4.6" fill="#d3c6bf"/>
<rect x="800.1" y="375.6" width="22.1" height="11.2" fill="#e3d5d0"/>
<rect x="803.0" y="377.1" width="7.9" height="6.6" fill="#d3c6bf"/>
<rect x="824.4" y="375.6" width="15.7" height="11.2" fill="#ded6d1"/>
<rect x="842.3" y="375.6" width="18.5" height="11.2" fill="#ded6d1"/>
<rect x="863.0" y="375.6" width="19.3" height="11.2" fill="#ded6d1"/>
<rect x="884.5" y="375.6" width="22.2" height="11.2" fill="#ded4cf"/>
<rect x="885.5" y="378.4" width="12.0" height="7.5" fill="#d3c6bf"/>
<rect x="908.8" y="375.6" width="19.4" height="11.2" fill="#e3dcd7"/>
<rect x="913.4" y="377.5" width="9.7" height="6.0" fill="#d3c6bf"/>
<rect x="930.4" y="375.6" width="13.6" height="11.2" fill="#ded6d1"/>
<rect x="946.2" y="375.6" width="24.7" height="11.2" fill="#ded4cf"/>
<rect x="973.0" y="375.6" width="19.7" height="11.2" fill="#ded6d1"/>
<rect x="994.9" y="375.6" width="23.6" height="11.2" fill="#ded6d1"/>
<rect x="1020.8" y="375.6" width="16.3" height="11.2" fill="#e3dcd7"/>
<rect x="1025.8" y="378.3" width="9.7" height="7.0" fill="#d3c6bf"/>
<rect x="1039.3" y="375.6" width="12.1" height="11.2" fill="#e3d5d0"/>
<rect x="1042.9" y="377.6" width="8.5" height="4.8" fill="#d3c6bf"/>
<rect x="1053.6" y="375.6" width="18.2" height="11.2" fill="#dbd1cb"/>
<rect x="1057.3" y="377.8" width="10.3" height="5.4" fill="#d3c6bf"/>
<rect x="1074.0" y="375.6" width="22.8" height="11.2" fill="#e3d5d0"/>
<rect x="1078.5" y="376.8" width="10.1" height="5.2" fill="#d3c6bf"/>
<rect x="505.4" y="389.0" width="20.6" height="16.1" fill="#e3d5d0"/>
<rect x="508.2" y="391.7" width="9.2" height="6.9" fill="#d3c6bf"/>
<rect x="528.2" y="389.0" width="12.2" height="16.1" fill="#e3d5d0"/>
<rect x="542.6" y="389.0" width="13.0" height="16.1" fill="#e3d5d0"/>
<rect x="545.1" y="392.1" width="6.3" height="7.2" fill="#d3c6bf"/>
<rect x="557.8" y="389.0" width="24.3" height="16.1" fill="#ded6d1"/>
<rect x="584.3" y="389.0" width="16.2" height="16.1" fill="#ded6d1"/>
<rect x="602.7" y="389.0" width="11.1" height="16.1" fill="#ded6d1"/>
<rect x="604.6" y="392.7" width="5.3" height="9.1" fill="#d3c6bf"/>
<rect x="616.0" y="389.0" width="23.5" height="16.1" fill="#dbd1cb"/>
<rect x="641.7" y="389.0" width="23.7" height="16.1" fill="#e3dcd7"/>
<rect x="667.6" y="389.0" width="15.8" height="16.1" fill="#e3d5d0"/>
<rect x="685.6" y="389.0" width="11.9" height="16.1" fill="#ded6d1"/>
<rect x="699.6" y="389.0" width="20.4" height="16.1" fill="#dbd1cb"/>
<rect x="722.3" y="389.0" width="18.2" height="16.1" fill="#ded6d1"/>
<rect x="742.6" y="389.0" width="12.6" height="16.1" fill="#ded4cf"/>
<rect x="757.5" y="389.0" width="17.7" height="16.1" fill="#ded4cf"/>
<rect x="777.4" y="389.0" width="11.3" height="16.1" fill="#e3d5d0"/>
<rect x="779.8" y="394.5" width="5.4" height="6.5" fill="#d3c6bf"/>
<rect x="791.0" y="389.0" width="16.6" height="16.1" fill="#e3d5d0"/>
<rect x="794.4" y="393.7" width="10.5" height="9.3" fill="#d3c6bf"/>
<rect x="809.8" y="389.0" width="14.9" height="16.1" fill="#ded6d1"/>
<rect x="826.9" y="389.0" width="15.9" height="16.1" fill="#dbd1cb"/>
<rect x="845.0" y="389.0" width="12.2" height="16.1" fill="#ded6d1"/>
<rect x="859.4" y="389.0" width="24.5" height="16.1" fill="#e3d5d0"/>
<rect x="863.7" y="394.1" width="13.7" height="7.3" fill="#d3c6bf"/>
<rect x="886.2" y="389.0" width="16.3" height="16.1" fill="#e3dcd7"/>
<rect x="887.5" y="390.1" width="10.2" height="6.4" fill="#d3c6bf"/>
<rect x="904.6" y="389.0" width="18.9" height="16.1" fill="#ded4cf"/>
<rect x="910.7" y="391.4" width="11.6" height="8.4" fill="#d3c6bf"/>
<rect x="925.7" y="389.0" width="12.2" height="16.1" fill="#ded6d1"/>
<rect x="928.8" y="392.3" width="5.4" height="6.2" fill="#d3c6bf"/>
<rect x="940.2" y="389.0" width="15.3" height="16.1" fill="#dbd1cb"/>
<rect x="941.8" y="394.3" width="10.1" height="10.6" fill="#d3c6bf"/>
<rect x="957.7" y="389.0" width="18.4" height="16.1" fill="#ded6d1"/>
<rect x="978.3" y="389.0" width="22.7" height="16.1" fill="#dbd1cb"/>
<rect x="981.2" y="390.2" width="14.1" height="7.4" fill="#d3c6bf"/>
<rect x="1003.2" y="389.0" width="12.0" height="16.1" fill="#e3dcd7"/>
<rect x="1007.3" y="391.1" width="7.9" height="6.7" fill="#d3c6bf"/>
<rect x="1017.3" y="389.0" width="15.8" height="16.1" fill="#e3dcd7"/>
<rect x="1020.3" y="393.6" width="6.8" height="10.0" fill="#d3c6bf"/>
<rect x="1035.4" y="389.0" width="14.2" height="16.1" fill="#ded4cf"/>
<rect x="1051.8" y="389.0" width="14.5" height="16.1" fill="#e3d5d0"/>
<rect x="1068.5" y="389.0" width="18.3" height="16.1" fill="#ded4cf"/>
<rect x="494.5" y="407.3" width="13.6" height="14.8" fill="#ded4cf"/>
<rect x="510.3" y="407.3" width="13.9" height="14.8" fill="#ded6d1"/>
<rect x="526.4" y="407.3" width="15.6" height="14.8" fill="#ded6d1"/>
<rect x="544.2" y="407.3" width="11.5" height="14.8" fill="#ded4cf"/>
<rect x="557.9" y="407.3" width="16.3" height="14.8" fill="#dbd1cb"/>
<rect x="562.2" y="412.2" width="6.7" height="5.1" fill="#d3c6bf"/>
<rect x="576.4" y="407.3" width="12.6" height="14.8" fill="#ded6d1"/>
<rect x="580.3" y="411.7" width="6.3" height="10.0" fill="#d3c6bf"/>
<rect x="591.1" y="407.3" width="11.0" height="14.8" fill="#e3dcd7"/>
<rect x="593.9" y="410.9" width="7.1" height="9.3" fill="#d3c6bf"/>
<rect x="604.3" y="407.3" width="12.7" height="14.8" fill="#e3dcd7"/>
<rect x="606.7" y="410.4" width="7.3" height="5.9" fill="#d3c6bf"/>
<rect x="619.3" y="407.3" width="23.2" height="14.8" fill="#ded4cf"/>
<rect x="644.7" y="407.3" width="13.4" height="14.8" fill="#ded4cf"/>
<rect x="660.3" y="407.3" width="22.1" height="14.8" fill="#dbd1cb"/>
<rect x="662.6" y="410.1" width="10.6" height="7.4" fill="#d3c6bf"/>
<rect x="684.6" y="407.3" width="12.7" height="14.8" fill="#e3dcd7"/>
<rect x="688.6" y="412.3" width="7.9" height="9.6" fill="#d3c6bf"/>
<rect x="699.5" y="407.3" width="23.7" height="14.8" fill="#e3dcd7"/>
<rect x="704.3" y="412.4" width="14.7" height="8.0" fill="#d3c6bf"/>
<rect x="725.4" y="407.3" width="19.5" height="14.8" fill="#e3d5d0"/>
<rect x="747.1" y="407.3" width="11.7" height="14.8" fill="#ded4cf"/>
<rect x="761.0" y="407.3" width="21.4" height="14.8" fill="#ded4cf"/>
<rect x="784.6" y="407.3" width="21.2" height="14.8" fill="#ded4cf"/>
<rect x="788.3" y="408.5" width="12.5" height="8.0" fill="#d3c6bf"/>
<rect x="808.0" y="407.3" width="16.5" height="14.8" fill="#dbd1cb"/>
<rect x="826.7" y="407.3" width="20.9" height="14.8" fill="#dbd1cb"/>
<rect x="828.2" y="410.0" width="7.9" height="9.3" fill="#d3c6bf"/>
<rect x="849.8" y="407.3" width="19.3" height="14.8" fill="#ded4cf"/>
<rect x="871.3" y="407.3" width="13.0" height="14.8" fill="#e3dcd7"/>
<rect x="886.5" y="407.3" width="19.4" height="14.8" fill="#e3d5d0"/>
<rect x="908.2" y="407.3" width="11.5" height="14.8" fill="#dbd1cb"/>
<rect x="909.5" y="411.4" width="4.7" height="5.5" fill="#d3c6bf"/>
<rect x="921.8" y="407.3" width="13.0" height="14.8" fill="#dbd1cb"/>
<rect x="937.1" y="407.3" width="16.5" height="14.8" fill="#e3d5d0"/>
<rect x="939.0" y="408.4" width="5.8" height="9.2" fill="#d3c6bf"/>
<rect x="955.8" y="407.3" width="23.0" height="14.8" fill="#dbd1cb"/>
<rect x="981.0" y="407.3" width="15.7" height="14.8" fill="#e3dcd7"/>
<rect x="984.7" y="412.0" width="9.4" height="6.5" fill="#d3c6bf"/>
<rect x="998.9" y="407.3" width="19.3" height="14.8" fill="#e3dcd7"/>
<rect x="1001.0" y="411.4" width="11.7" height="6.2" fill="#d3c6bf"/>
<rect x="1020.4" y="407.3" width="18.5" height="14.8" fill="#dbd1cb"/>
<rect x="1041.1" y="407.3" width="19.0" height="14.8" fill="#e3dcd7"/>
<rect x="1062.2" y="407.3" width="11.3" height="14.8" fill="#ded6d1"/>
<rect x="1075.8" y="407.3" width="19.0" height="14.8" fill="#dbd1cb"/>
<rect x="1077.3" y="411.5" width="7.2" height="9.0" fill="#d3c6bf"/>
<rect x="497.3" y="424.3" width="23.9" height="10.4" fill="#dbd1cb"/>
<rect x="523.3" y="424.3" width="23.9" height="10.4" fill="#e3d5d0"/>
<rect x="528.5" y="425.6" width="12.6" height="4.9" fill="#d3c6bf"/>
<rect x="549.4" y="424.3" width="24.7" height="10.4" fill="#ded4cf"/>
<rect x="576.3" y="424.3" width="20.9" height="10.4" fill="#dbd1cb"/>
<rect x="599.4" y="424.3" width="14.2" height="10.4" fill="#ded6d1"/>
<rect x="603.7" y="426.9" width="7.5" height="6.1" fill="#d3c6bf"/>
<rect x="615.8" y="424.3" width="18.5" height="10.4" fill="#dbd1cb"/>
<rect x="636.5" y="424.3" width="18.5" height="10.4" fill="#dbd1cb"/>
<rect x="640.5" y="426.2" width="6.9" height="7.3" fill="#d3c6bf"/>
<rect x="657.2" y="424.3" width="11.1" height="10.4" fill="#ded4cf"/>
<rect x="670.5" y="424.3" width="17.2" height="10.4" fill="#dbd1cb"/>
<rect x="689.9" y="424.3" width="19.4" height="10.4" fill="#dbd1cb"/>
<rect x="711.5" y="424.3" width="22.4" height="10.4" fill="#ded6d1"/>
<rect x="713.0" y="426.8" width="8.6" height="6.2" fill="#d3c6bf"/>
<rect x="736.0" y="424.3" width="19.2" height="10.4" fill="#e3d5d0"/>
<rect x="757.4" y="424.3" width="17.4" height="10.4" fill="#dbd1cb"/>
<rect x="760.7" y="427.3" width="7.1" height="6.6" fill="#d3c6bf"/>
<rect x="777.0" y="424.3" width="19.0" height="10.4" fill="#e3dcd7"/>
<rect x="798.2" y="424.3" width="18.5" height="10.4" fill="#dbd1cb"/>
<rect x="801.2" y="426.5" width="10.8" height="6.5" fill="#d3c6bf"/>
<rect x="818.9" y="424.3" width="13.4" height="10.4" fill="#dbd1cb"/>
<rect x="834.5" y="424.3" width="17.7" height="10.4" fill="#e3dcd7"/>
<rect x="854.4" y="424.3" width="16.2" height="10.4" fill="#ded6d1"/>
<rect x="856.9" y="427.4" width="10.2" height="4.7" fill="#d3c6bf"/>
<rect x="872.8" y="424.3" width="21.5" height="10.4" fill="#ded4cf"/>
<rect x="896.5" y="424.3" width="19.7" height="10.4" fill="#e3d5d0"/>
<rect x="902.3" y="426.1" width="12.2" height="5.9" fill="#d3c6bf"/>
<rect x="918.4" y="424.3" width="11.5" height="10.4" fill="#ded4cf"/>
<rect x="932.1" y="424.3" width="17.5" height="10.4" fill="#dbd1cb"/>
<rect x="936.2" y="426.2" width="6.1" height="4.4" fill="#d3c6bf"/>
<rect x="951.9" y="424.3" width="22.2" height="10.4" fill="#dbd1cb"/>
<rect x="956.1" y="428.1" width="8.0" height="7.0" fill="#d3c6bf"/>
<rect x="976.2" y="424.3" width="10.9" height="10.4" fill="#dbd1cb"/>
<rect x="989.3" y="424.3" width="17.1" height="10.4" fill="#ded4cf"/>
<rect x="1008.6" y="424.3" width="22.8" height="10.4" fill="#e3dcd7"/>
<rect x="1015.2" y="425.7" width="11.5" height="5.6" fill="#d3c6bf"/>
<rect x="1033.5" y="424.3" width="18.5" height="10.4" fill="#e3d5d0"/>
<rect x="1054.3" y="424.3" width="15.3" height="10.4" fill="#e3d5d0"/>
<rect x="1071.8" y="424.3" width="15.6" height="10.4" fill="#e3d5d0"/>
<rect x="503.0" y="437.0" width="17.6" height="8.0" fill="#e3dcd7"/>
<rect x="506.2" y="438.4" width="7.3" height="4.1" fill="#d3c6bf"/>
<rect x="522.8" y="437.0" width="23.2" height="8.0" fill="#ded4cf"/>
<rect x="548.2" y="437.0" width="17.4" height="8.0" fill="#dbd1cb"/>
<rect x="554.0" y="439.1" width="7.9" height="3.9" fill="#d3c6bf"/>
<rect x="567.8" y="437.0" width="20.8" height="8.0" fill="#ded4cf"/>
<rect x="574.7" y="439.2" width="11.2" height="4.2" fill="#d3c6bf"/>
<rect x="590.8" y="437.0" width="24.8" height="8.0" fill="#ded4cf"/>
<rect x="595.9" y="439.0" width="12.5" height="4.8" fill="#d3c6bf"/>
<rect x="617.8" y="437.0" width="24.1" height="8.0" fill="#dbd1cb"/>
<rect x="625.6" y="438.0" width="8.3" height="5.6" fill="#d3c6bf"/>
<rect x="644.1" y="437.0" width="14.7" height="8.0" fill="#ded6d1"/>
<rect x="661.0" y="437.0" width="23.8" height="8.0" fill="#ded6d1"/>
<rect x="686.9" y="437.0" width="11.1" height="8.0" fill="#dbd1cb"/>
<rect x="690.0" y="438.8" width="5.9" height="5.6" fill="#d3c6bf"/>
<rect x="700.2" y="437.0" width="19.4" height="8.0" fill="#dbd1cb"/>
<rect x="721.9" y="437.0" width="23.5" height="8.0" fill="#e3d5d0"/>
<rect x="725.4" y="438.9" width="8.6" height="5.9" fill="#d3c6bf"/>
<rect x="747.6" y="437.0" width="17.6" height="8.0" fill="#dbd1cb"/>
<rect x="752.3" y="439.0" width="7.3" height="3.2" fill="#d3c6bf"/>
<rect x="767.4" y="437.0" width="19.4" height="8.0" fill="#ded6d1"/>
<rect x="771.1" y="439.4" width="7.9" height="5.2" fill="#d3c6bf"/>
<rect x="788.9" y="437.0" width="19.0" height="8.0" fill="#ded6d1"/>
<rect x="795.3" y="438.9" width="9.6" height="3.6" fill="#d3c6bf"/>
<rect x="810.2" y="437.0" width="12.0" height="8.0" fill="#ded6d1"/>
<rect x="824.3" y="437.0" width="12.3" height="8.0" fill="#ded6d1"/>
<rect x="838.9" y="437.0" width="13.5" height="8.0" fill="#e3dcd7"/>
<rect x="854.6" y="437.0" width="19.0" height="8.0" fill="#e3dcd7"/>
<rect x="859.3" y="440.0" width="10.3" height="4.4" fill="#d3c6bf"/>
<rect x="875.9" y="437.0" width="18.3" height="8.0" fill="#ded4cf"/>
<rect x="896.4" y="437.0" width="14.3" height="8.0" fill="#ded6d1"/>
<rect x="912.9" y="437.0" width="12.0" height="8.0" fill="#dbd1cb"/>
<rect x="915.7" y="438.5" width="8.3" height="4.4" fill="#d3c6bf"/>
<rect x="927.0" y="437.0" width="22.2" height="8.0" fill="#ded4cf"/>
<rect x="928.1" y="440.0" width="9.3" height="4.3" fill="#d3c6bf"/>
<rect x="951.4" y="437.0" width="21.6" height="8.0" fill="#e3dcd7"/>
<rect x="975.3" y="437.0" width="15.2" height="8.0" fill="#e3d5d0"/>
<rect x="992.7" y="437.0" width="22.6" height="8.0" fill="#dbd1cb"/>
<rect x="1017.5" y="437.0" width="10.9" height="8.0" fill="#ded4cf"/>
<rect x="1021.0" y="438.9" width="6.2" height="5.8" fill="#d3c6bf"/>
<rect x="1030.6" y="437.0" width="11.0" height="8.0" fill="#e3dcd7"/>
<rect x="1043.9" y="437.0" width="16.8" height="8.0" fill="#e3d5d0"/>
<rect x="1048.6" y="439.1" width="6.3" height="4.6" fill="#d3c6bf"/>
<rect x="1062.9" y="437.0" width="14.3" height="8.0" fill="#e3dcd7"/>
<rect x="1066.3" y="438.1" width="6.7" height="4.8" fill="#d3c6bf"/>
<rect x="1079.4" y="437.0" width="23.5" height="8.0" fill="#ded4cf"/>
<rect x="1081.3" y="438.0" width="14.7" height="6.0" fill="#d3c6bf"/>
<rect x="490.3" y="447.2" width="21.1" height="11.4" fill="#dbd1cb"/>
<rect x="495.8" y="448.4" width="8.6" height="7.3" fill="#d3c6bf"/>
<rect x="513.5" y="447.2" width="21.5" height="11.4" fill="#dbd1cb"/>
<rect x="514.6" y="449.9" width="8.4" height="6.2" fill="#d3c6bf"/>
<rect x="537.3" y="447.2" width="13.9" height="11.4" fill="#dbd1cb"/>
<rect x="541.3" y="449.7" width="6.9" height="6.7" fill="#d3c6bf"/>
<rect x="553.4" y="447.2" width="18.9" height="11.4" fill="#ded4cf"/>
<rect x="558.9" y="449.8" width="11.9" height="8.1" fill="#d3c6bf"/>
<rect x="574.5" y="447.2" width="22.4" height="11.4" fill="#e3d5d0"/>
<rect x="599.1" y="447.2" width="19.0" height="11.4" fill="#ded6d1"/>
<rect x="620.3" y="447.2" width="14.3" height="11.4" fill="#e3d5d0"/>
<rect x="623.0" y="449.3" width="9.4" height="4.8" fill="#d3c6bf"/>
<rect x="636.8" y="447.2" width="23.4" height="11.4" fill="#ded6d1"/>
<rect x="662.4" y="447.2" width="15.3" height="11.4" fill="#e3dcd7"/>
<rect x="679.9" y="447.2" width="11.7" height="11.4" fill="#e3d5d0"/>
<rect x="693.8" y="447.2" width="21.4" height="11.4" fill="#e3d5d0"/>
<rect x="717.4" y="447.2" width="21.0" height="11.4" fill="#ded4cf"/>
<rect x="721.0" y="450.2" width="9.1" height="7.5" fill="#d3c6bf"/>
<rect x="740.5" y="447.2" width="16.6" height="11.4" fill="#e3d5d0"/>
<rect x="759.4" y="447.2" width="16.8" height="11.4" fill="#e3dcd7"/>
<rect x="761.7" y="449.7" width="11.1" height="4.6" fill="#d3c6bf"/>
<rect x="778.4" y="447.2" width="23.4" height="11.4" fill="#ded6d1"/>
<rect x="804.0" y="447.2" width="14.7" height="11.4" fill="#ded6d1"/>
<rect x="820.9" y="447.2" width="13.0" height="11.4" fill="#e3dcd7"/>
<rect x="824.2" y="449.8" width="7.4" height="8.0" fill="#d3c6bf"/>
<rect x="836.1" y="447.2" width="23.4" height="11.4" fill="#ded6d1"/>
<rect x="861.7" y="447.2" width="14.0" height="11.4" fill="#e3dcd7"/>
<rect x="877.9" y="447.2" width="14.8" height="11.4" fill="#dbd1cb"/>
<rect x="882.0" y="451.2" width="8.2" height="6.8" fill="#d3c6bf"/>
<rect x="894.9" y="447.2" width="19.0" height="11.4" fill="#ded4cf"/>
<rect x="916.2" y="447.2" width="20.9" height="11.4" fill="#e3d5d0"/>
<rect x="939.3" y="447.2" width="24.0" height="11.4" fill="#e3d5d0"/>
<rect x="944.1" y="450.0" width="15.4" height="6.9" fill="#d3c6bf"/>
<rect x="965.5" y="447.2" width="11.5" height="11.4" fill="#e3dcd7"/>
<rect x="967.1" y="450.5" width="6.7" height="7.6" fill="#d3c6bf"/>
<rect x="979.1" y="447.2" width="18.5" height="11.4" fill="#e3dcd7"/>
<rect x="999.8" y="447.2" width="14.2" height="11.4" fill="#ded6d1"/>
<rect x="1003.1" y="448.7" width="6.2" height="4.6" fill="#d3c6bf"/>
<rect x="1016.2" y="447.2" width="11.2" height="11.4" fill="#e3d5d0"/>
<rect x="1019.3" y="450.7" width="4.6" height="5.6" fill="#d3c6bf"/>
<rect x="1029.6" y="447.2" width="15.4" height="11.4" fill="#e3dcd7"/>
<rect x="1047.2" y="447.2" width="20.7" height="11.4" fill="#dbd1cb"/>
<rect x="1070.1" y="447.2" width="20.4" height="11.4" fill="#dbd1cb"/>
<rect x="1071.7" y="449.1" width="9.3" height="5.1" fill="#d3c6bf"/>
<rect x="494.9" y="460.8" width="13.0" height="10.7" fill="#ded6d1"/>
<rect x="498.7" y="462.6" width="5.4" height="7.5" fill="#d3c6bf"/>
<rect x="510.1" y="460.8" width="13.7" height="10.7" fill="#ded6d1"/>
<rect x="526.0" y="460.8" width="22.6" height="10.7" fill="#ded4cf"/>
<rect x="550.7" y="460.8" width="16.6" height="10.7" fill="#e3d5d0"/>
<rect x="551.9" y="463.4" width="7.9" height="5.3" fill="#d3c6bf"/>
<rect x="569.5" y="460.8" width="24.4" height="10.7" fill="#ded4cf"/>
<rect x="573.5" y="463.2" width="14.7" height="6.3" fill="#d3c6bf"/>
<rect x="596.1" y="460.8" width="12.9" height="10.7" fill="#e3dcd7"/>
<rect x="599.3" y="463.0" width="8.8" height="5.6" fill="#d3c6bf"/>
<rect x="611.2" y="460.8" width="14.6" height="10.7" fill="#e3dcd7"/>
<rect x="628.0" y="460.8" width="15.5" height="10.7" fill="#e3dcd7"/>
<rect x="631.3" y="463.7" width="10.3" height="4.2" fill="#d3c6bf"/>
<rect x="645.6" y="460.8" width="15.4" height="10.7" fill="#ded4cf"/>
<rect x="663.2" y="460.8" width="20.8" height="10.7" fill="#ded6d1"/>
<rect x="686.2" y="460.8" width="19.6" height="10.7" fill="#ded4cf"/>
<rect x="688.2" y="462.6" width="7.3" height="4.0" fill="#d3c6bf"/>
<rect x="708.0" y="460.8" width="18.1" height="10.7" fill="#dbd1cb"/>
<rect x="728.3" y="460.8" width="23.7" height="10.7" fill="#ded4cf"/>
<rect x="730.3" y="463.2" width="10.1" height="6.9" fill="#d3c6bf"/>
<rect x="754.2" y="460.8" width="17.9" height="10.7" fill="#e3d5d0"/>
<rect x="756.7" y="463.8" width="6.2" height="4.6" fill="#d3c6bf"/>
<rect x="774.3" y="460.8" width="24.3" height="10.7" fill="#ded4cf"/>
<rect x="800.8" y="460.8" width="23.0" height="10.7" fill="#ded6d1"/>
<rect x="807.4" y="462.6" width="10.9" height="4.4" fill="#d3c6bf"/>
<rect x="826.0" y="460.8" width="14.5" height="10.7" fill="#dbd1cb"/>
<rect x="827.7" y="463.7" width="7.2" height="6.5" fill="#d3c6bf"/>
<rect x="842.8" y="460.8" width="11.4" height="10.7" fill="#e3dcd7"/>
<rect x="856.4" y="460.8" width="21.9" height="10.7" fill="#ded4cf"/>
<rect x="859.2" y="464.1" width="11.0" height="5.0" fill="#d3c6bf"/>
<rect x="880.5" y="460.8" width="16.3" height="10.7" fill="#ded6d1"/>
<rect x="884.7" y="462.9" width="9.9" height="5.1" fill="#d3c6bf"/>
<rect x="899.0" y="460.8" width="24.8" height="10.7" fill="#ded6d1"/>
<rect x="926.0" y="460.8" width="20.3" height="10.7" fill="#ded6d1"/>
<rect x="948.5" y="460.8" width="21.9" height="10.7" fill="#ded4cf"/>
<rect x="955.2" y="463.1" width="12.1" height="7.1" fill="#d3c6bf"/>
<rect x="972.7" y="460.8" width="17.7" height="10.7" fill="#dbd1cb"/>
<rect x="992.5" y="460.8" width="11.6" height="10.7" fill="#dbd1cb"/>
<rect x="1006.3" y="460.8" width="19.5" height="10.7" fill="#ded4cf"/>
<rect x="1028.0" y="460.8" width="21.6" height="10.7" fill="#e3dcd7"/>
<rect x="1051.8" y="460.8" width="21.6" height="10.7" fill="#ded4cf"/>
<rect x="1057.4" y="463.1" width="12.1" height="4.5" fill="#d3c6bf"/>
<rect x="1075.6" y="460.8" width="23.4" height="10.7" fill="#dbd1cb"/>
<rect x="503.8" y="473.7" width="11.9" height="12.9" fill="#ded6d1"/>
<rect x="517.9" y="473.7" width="19.4" height="12.9" fill="#ded4cf"/>
<rect x="519.2" y="477.9" width="8.5" height="8.6" fill="#d3c6bf"/>
<rect x="539.6" y="473.7" width="17.8" height="12.9" fill="#ded6d1"/>
<rect x="559.5" y="473.7" width="20.7" height="12.9" fill="#ded4cf"/>
<rect x="582.5" y="473.7" width="13.3" height="12.9" fill="#ded6d1"/>
<rect x="585.3" y="476.4" width="5.4" height="5.7" fill="#d3c6bf"/>
<rect x="598.0" y="473.7" width="13.4" height="12.9" fill="#dbd1cb"/>
<rect x="602.3" y="474.9" width="5.7" height="7.8" fill="#d3c6bf"/>
<rect x="613.6" y="473.7" width="20.1" height="12.9" fill="#ded4cf"/>
<rect x="615.3" y="476.6" width="13.2" height="7.7" fill="#d3c6bf"/>
<rect x="636.0" y="473.7" width="22.1" height="12.9" fill="#ded6d1"/>
<rect x="637.5" y="477.2" width="7.7" height="5.4" fill="#d3c6bf"/>
<rect x="660.3" y="473.7" width="15.0" height="12.9" fill="#ded6d1"/>
<rect x="677.4" y="473.7" width="19.5" height="12.9" fill="#ded6d1"/>
<rect x="699.1" y="473.7" width="21.0" height="12.9" fill="#e3d5d0"/>
<rect x="700.4" y="476.2" width="12.9" height="7.4" fill="#d3c6bf"/>
<rect x="722.3" y="473.7" width="14.0" height="12.9" fill="#ded6d1"/>
<rect x="738.6" y="473.7" width="22.9" height="12.9" fill="#ded4cf"/>
<rect x="763.7" y="473.7" width="13.7" height="12.9" fill="#ded4cf"/>
<rect x="765.3" y="475.9" width="9.3" height="4.7" fill="#d3c6bf"/>
<rect x="779.6" y="473.7" width="13.1" height="12.9" fill="#dbd1cb"/>
<rect x="794.8" y="473.7" width="14.6" height="12.9" fill="#ded6d1"/>
<rect x="796.1" y="475.6" width="5.7" height="8.2" fill="#d3c6bf"/>
<rect x="811.6" y="473.7" width="18.9" height="12.9" fill="#e3d5d0"/>
<rect x="832.6" y="473.7" width="21.4" height="12.9" fill="#e3d5d0"/>
<rect x="833.6" y="476.2" width="8.4" height="8.9" fill="#d3c6bf"/>
<rect x="856.2" y="473.7" width="15.5" height="12.9" fill="#ded4cf"/>
<rect x="873.9" y="473.7" width="14.6" height="12.9" fill="#ded4cf"/>
<rect x="890.7" y="473.7" width="15.6" height="12.9" fill="#ded6d1"/>
<rect x="893.7" y="478.0" width="8.9" height="8.8" fill="#d3c6bf"/>
<rect x="908.6" y="473.7" width="18.2" height="12.9" fill="#dbd1cb"/>
<rect x="913.0" y="476.3" width="7.4" height="5.8" fill="#d3c6bf"/>
<rect x="928.9" y="473.7" width="15.9" height="12.9" fill="#e3dcd7"/>
<rect x="947.0" y="473.7" width="15.3" height="12.9" fill="#ded6d1"/>
<rect x="964.5" y="473.7" width="20.1" height="12.9" fill="#dbd1cb"/>
<rect x="986.9" y="473.7" width="11.7" height="12.9" fill="#e3dcd7"/>
<rect x="1000.7" y="473.7" width="11.1" height="12.9" fill="#ded4cf"/>
<rect x="1014.1" y="473.7" width="13.7" height="12.9" fill="#ded6d1"/>
<rect x="1016.7" y="475.5" width="7.8" height="7.3" fill="#d3c6bf"/>
<rect x="1029.9" y="473.7" width="18.4" height="12.9" fill="#ded6d1"/>
<rect x="1033.2" y="475.0" width="7.0" height="7.0" fill="#d3c6bf"/>
<rect x="1050.5" y="473.7" width="18.8" height="12.9" fill="#e3dcd7"/>
<rect x="1054.6" y="477.1" width="8.0" height="7.3" fill="#d3c6bf"/>
<rect x="1071.5" y="473.7" width="14.4" height="12.9" fill="#dbd1cb"/>
<rect x="497.5" y="488.8" width="19.6" height="12.9" fill="#e3d5d0"/>
<rect x="519.4" y="488.8" width="24.6" height="12.9" fill="#e3dcd7"/>
<rect x="522.2" y="492.0" width="9.1" height="5.3" fill="#d3c6bf"/>
<rect x="546.2" y="488.8" width="12.1" height="12.9" fill="#ded4cf"/>
<rect x="560.5" y="488.8" width="18.2" height="12.9" fill="#e3d5d0"/>
<rect x="563.4" y="493.3" width="7.6" height="6.2" fill="#d3c6bf"/>
<rect x="580.9" y="488.8" width="15.3" height="12.9" fill="#e3d5d0"/>
<rect x="586.1" y="491.1" width="9.3" height="6.6" fill="#d3c6bf"/>
<rect x="598.4" y="488.8" width="24.4" height="12.9" fill="#ded6d1"/>
<rect x="599.8" y="490.8" width="15.5" height="9.0" fill="#d3c6bf"/>
<rect x="625.0" y="488.8" width="12.1" height="12.9" fill="#e3d5d0"/>
<rect x="626.3" y="490.1" width="7.7" height="8.8" fill="#d3c6bf"/>
<rect x="639.3" y="488.8" width="23.6" height="12.9" fill="#e3d5d0"/>
<rect x="642.3" y="490.2" width="8.3" height="5.5" fill="#d3c6bf"/>
<rect x="665.2" y="488.8" width="17.5" height="12.9" fill="#dbd1cb"/>
<rect x="684.8" y="488.8" width="19.0" height="12.9" fill="#ded4cf"/>
<rect x="687.4" y="493.2" width="6.7" height="7.9" fill="#d3c6bf"/>
<rect x="706.0" y="488.8" width="12.5" height="12.9" fill="#ded6d1"/>
<rect x="708.5" y="490.6" width="6.9" height="5.5" fill="#d3c6bf"/>
<rect x="720.7" y="488.8" width="12.9" height="12.9" fill="#dbd1cb"/>
<rect x="735.8" y="488.8" width="24.0" height="12.9" fill="#ded6d1"/>
<rect x="762.0" y="488.8" width="22.3" height="12.9" fill="#ded6d1"/>
<rect x="767.0" y="490.0" width="11.7" height="6.5" fill="#d3c6bf"/>
<rect x="786.4" y="488.8" width="16.2" height="12.9" fill="#dbd1cb"/>
<rect x="789.8" y="490.1" width="6.3" height="6.8" fill="#d3c6bf"/>
<rect x="804.9" y="488.8" width="18.3" height="12.9" fill="#dbd1cb"/>
<rect x="809.9" y="491.2" width="11.8" height="6.7" fill="#d3c6bf"/>
<rect x="825.4" y="488.8" width="19.2" height="12.9" fill="#dbd1cb"/>
<rect x="828.0" y="492.0" width="7.0" height="8.6" fill="#d3c6bf"/>
<rect x="846.7" y="488.8" width="13.9" height="12.9" fill="#ded4cf"/>
<rect x="862.8" y="488.8" width="19.7" height="12.9" fill="#dbd1cb"/>
<rect x="884.7" y="488.8" width="13.4" height="12.9" fill="#dbd1cb"/>
<rect x="900.4" y="488.8" width="14.4" height="12.9" fill="#dbd1cb"/>
<rect x="916.9" y="488.8" width="10.8" height="12.9" fill="#dbd1cb"/>
<rect x="918.0" y="492.3" width="7.3" height="8.2" fill="#d3c6bf"/>
<rect x="929.9" y="488.8" width="22.8" height="12.9" fill="#dbd1cb"/>
<rect x="954.9" y="488.8" width="20.3" height="12.9" fill="#e3d5d0"/>
<rect x="977.4" y="488.8" width="19.6" height="12.9" fill="#e3d5d0"/>
<rect x="999.2" y="488.8" width="16.4" height="12.9" fill="#ded4cf"/>
<rect x="1000.5" y="491.9" width="6.1" height="8.5" fill="#d3c6bf"/>
<rect x="1017.8" y="488.8" width="24.2" height="12.9" fill="#dbd1cb"/>
<rect x="1022.3" y="491.9" width="11.3" height="6.4" fill="#d3c6bf"/>
<rect x="1044.2" y="488.8" width="13.3" height="12.9" fill="#ded6d1"/>
<rect x="1059.8" y="488.8" width="17.5" height="12.9" fill="#ded6d1"/>
<rect x="1063.1" y="490.6" width="11.4" height="8.5" fill="#d3c6bf"/>
<rect x="1079.5" y="488.8" width="17.8" height="12.9" fill="#ded4cf"/>
<rect x="1084.3" y="492.5" width="8.1" height="7.9" fill="#d3c6bf"/>
<rect x="493.5" y="503.9" width="16.7" height="11.2" fill="#ded6d1"/>
<rect x="494.6" y="506.3" width="10.2" height="4.2" fill="#d3c6bf"/>
<rect x="512.3" y="503.9" width="18.1" height="11.2" fill="#ded6d1"/>
<rect x="532.7" y="503.9" width="20.5" height="11.2" fill="#ded6d1"/>
<rect x="555.4" y="503.9" width="23.7" height="11.2" fill="#e3d5d0"/>
<rect x="581.2" y="503.9" width="23.8" height="11.2" fill="#ded4cf"/>
<rect x="607.2" y="503.9" width="24.0" height="11.2" fill="#e3dcd7"/>
<rect x="608.6" y="506.6" width="9.6" height="5.5" fill="#d3c6bf"/>
<rect x="633.4" y="503.9" width="17.7" height="11.2" fill="#e3dcd7"/>
<rect x="637.5" y="506.1" width="10.1" height="5.9" fill="#d3c6bf"/>
<rect x="653.3" y="503.9" width="12.4" height="11.2" fill="#ded4cf"/>
<rect x="667.9" y="503.9" width="12.1" height="11.2" fill="#e3d5d0"/>
<rect x="671.6" y="505.4" width="7.0" height="5.1" fill="#d3c6bf"/>
<rect x="682.2" y="503.9" width="20.5" height="11.2" fill="#ded4cf"/>
<rect x="688.1" y="506.3" width="13.2" height="7.7" fill="#d3c6bf"/>
<rect x="704.8" y="503.9" width="24.6" height="11.2" fill="#ded6d1"/>
<rect x="711.6" y="507.7" width="9.9" height="6.0" fill="#d3c6bf"/>
<rect x="731.7" y="503.9" width="23.3" height="11.2" fill="#dbd1cb"/>
<rect x="757.1" y="503.9" width="23.3" height="11.2" fill="#ded6d1"/>
<rect x="758.5" y="505.3" width="7.9" height="6.0" fill="#d3c6bf"/>
<rect x="782.6" y="503.9" width="17.9" height="11.2" fill="#e3dcd7"/>
<rect x="802.7" y="503.9" width="21.9" height="11.2" fill="#e3d5d0"/>
<rect x="807.6" y="507.1" width="14.1" height="7.0" fill="#d3c6bf"/>
<rect x="826.8" y="503.9" width="14.7" height="11.2" fill="#ded6d1"/>
<rect x="843.7" y="503.9" width="14.8" height="11.2" fill="#e3d5d0"/>
<rect x="860.7" y="503.9" width="16.0" height="11.2" fill="#ded6d1"/>
<rect x="864.7" y="507.3" width="6.1" height="6.1" fill="#d3c6bf"/>
<rect x="878.9" y="503.9" width="24.5" height="11.2" fill="#e3dcd7"/>
<rect x="884.5" y="505.1" width="14.0" height="6.2" fill="#d3c6bf"/>
<rect x="905.6" y="503.9" width="19.2" height="11.2" fill="#e3dcd7"/>
<rect x="911.5" y="506.4" width="9.7" height="7.2" fill="#d3c6bf"/>
<rect x="927.0" y="503.9" width="23.9" height="11.2" fill="#dbd1cb"/>
<rect x="953.1" y="503.9" width="24.7" height="11.2" fill="#ded6d1"/>
<rect x="980.1" y="503.9" width="18.7" height="11.2" fill="#e3d5d0"/>
<rect x="982.1" y="506.6" width="10.8" height="4.4" fill="#d3c6bf"/>
<rect x="1001.0" y="503.9" width="12.1" height="11.2" fill="#e3dcd7"/>
<rect x="1005.0" y="506.6" width="6.8" height="4.1" fill="#d3c6bf"/>
<rect x="1015.2" y="503.9" width="11.7" height="11.2" fill="#e3d5d0"/>
<rect x="1029.2" y="503.9" width="12.6" height="11.2" fill="#e3d5d0"/>
<rect x="1044.0" y="503.9" width="13.4" height="11.2" fill="#e3d5d0"/>
<rect x="1059.6" y="503.9" width="22.6" height="11.2" fill="#dbd1cb"/>
<rect x="498.8" y="517.3" width="12.0" height="9.0" fill="#e3d5d0"/>
<rect x="512.9" y="517.3" width="11.0" height="9.0" fill="#e3dcd7"/>
<rect x="526.2" y="517.3" width="16.7" height="9.0" fill="#e3d5d0"/>
<rect x="528.4" y="519.5" width="6.0" height="5.9" fill="#d3c6bf"/>
<rect x="545.0" y="517.3" width="20.8" height="9.0" fill="#ded6d1"/>
<rect x="568.1" y="517.3" width="16.4" height="9.0" fill="#ded6d1"/>
<rect x="586.7" y="517.3" width="12.1" height="9.0" fill="#e3dcd7"/>
<rect x="601.0" y="517.3" width="18.2" height="9.0" fill="#ded4cf"/>
<rect x="621.4" y="517.3" width="23.8" height="9.0" fill="#e3dcd7"/>
<rect x="647.3" y="517.3" width="17.8" height="9.0" fill="#dbd1cb"/>
<rect x="667.4" y="517.3" width="15.9" height="9.0" fill="#dbd1cb"/>
<rect x="669.9" y="519.4" width="8.9" height="5.4" fill="#d3c6bf"/>
<rect x="685.5" y="517.3" width="13.9" height="9.0" fill="#dbd1cb"/>
<rect x="701.6" y="517.3" width="14.4" height="9.0" fill="#ded4cf"/>
<rect x="703.6" y="520.0" width="6.0" height="3.7" fill="#d3c6bf"/>
<rect x="718.2" y="517.3" width="11.2" height="9.0" fill="#ded6d1"/>
<rect x="720.9" y="518.4" width="5.0" height="4.2" fill="#d3c6bf"/>
<rect x="731.6" y="517.3" width="13.3" height="9.0" fill="#dbd1cb"/>
<rect x="747.1" y="517.3" width="23.2" height="9.0" fill="#dbd1cb"/>
<rect x="748.2" y="519.6" width="10.5" height="4.0" fill="#d3c6bf"/>
<rect x="772.5" y="517.3" width="23.2" height="9.0" fill="#ded6d1"/>
<rect x="773.7" y="519.1" width="10.9" height="3.4" fill="#d3c6bf"/>
<rect x="798.0" y="517.3" width="15.7" height="9.0" fill="#dbd1cb"/>
<rect x="801.4" y="519.3" width="5.7" height="5.4" fill="#d3c6bf"/>
<rect x="815.9" y="517.3" width="15.5" height="9.0" fill="#e3dcd7"/>
<rect x="817.8" y="518.9" width="10.6" height="5.8" fill="#d3c6bf"/>
<rect x="833.6" y="517.3" width="21.1" height="9.0" fill="#e3dcd7"/>
<rect x="840.3" y="519.7" width="12.3" height="5.1" fill="#d3c6bf"/>
<rect x="856.9" y="517.3" width="16.5" height="9.0" fill="#ded6d1"/>
<rect x="861.8" y="520.7" width="10.2" height="4.2" fill="#d3c6bf"/>
<rect x="875.5" y="517.3" width="24.6" height="9.0" fill="#e3d5d0"/>
<rect x="882.8" y="519.9" width="15.9" height="5.7" fill="#d3c6bf"/>
<rect x="902.3" y="517.3" width="15.0" height="9.0" fill="#ded6d1"/>
<rect x="919.5" y="517.3" width="20.3" height="9.0" fill="#e3dcd7"/>
<rect x="942.0" y="517.3" width="18.4" height="9.0" fill="#ded4cf"/>
<rect x="947.7" y="520.0" width="6.2" height="5.4" fill="#d3c6bf"/>
<rect x="962.6" y="517.3" width="14.3" height="9.0" fill="#e3dcd7"/>
<rect x="979.1" y="517.3" width="21.0" height="9.0" fill="#ded4cf"/>
<rect x="1002.3" y="517.3" width="20.9" height="9.0" fill="#ded4cf"/>
<rect x="1025.4" y="517.3" width="17.5" height="9.0" fill="#ded6d1"/>
<rect x="1045.1" y="517.3" width="21.5" height="9.0" fill="#e3dcd7"/>
<rect x="1068.9" y="517.3" width="16.5" height="9.0" fill="#e3d5d0"/>
<rect x="506.5" y="528.5" width="15.5" height="12.8" fill="#ded4cf"/>
<rect x="511.3" y="531.9" width="8.1" height="8.1" fill="#d3c6bf"/>
<rect x="524.2" y="528.5" width="14.5" height="12.8" fill="#dbd1cb"/>
<rect x="527.6" y="530.2" width="7.4" height="7.5" fill="#d3c6bf"/>
<rect x="540.9" y="528.5" width="23.5" height="12.8" fill="#ded4cf"/>
<rect x="566.6" y="528.5" width="20.9" height="12.8" fill="#e3d5d0"/>
<rect x="589.7" y="528.5" width="20.4" height="12.8" fill="#e3dcd7"/>
<rect x="612.3" y="528.5" width="21.8" height="12.8" fill="#ded6d1"/>
<rect x="636.3" y="528.5" width="12.7" height="12.8" fill="#e3dcd7"/>
<rect x="637.4" y="532.6" width="8.0" height="7.7" fill="#d3c6bf"/>
<rect x="651.2" y="528.5" width="15.5" height="12.8" fill="#ded4cf"/>
<rect x="668.9" y="528.5" width="21.9" height="12.8" fill="#ded6d1"/>
<rect x="693.0" y="528.5" width="20.7" height="12.8" fill="#ded4cf"/>
<rect x="715.9" y="528.5" width="15.3" height="12.8" fill="#ded6d1"/>
<rect x="733.3" y="528.5" width="13.5" height="12.8" fill="#ded4cf"/>
<rect x="736.7" y="532.0" width="7.5" height="7.1" fill="#d3c6bf"/>
<rect x="749.1" y="528.5" width="13.8" height="12.8" fill="#e3dcd7"/>
<rect x="765.0" y="528.5" width="21.1" height="12.8" fill="#ded6d1"/>
<rect x="788.4" y="528.5" width="11.7" height="12.8" fill="#ded6d1"/>
<rect x="802.2" y="528.5" width="12.8" height="12.8" fill="#ded6d1"/>
<rect x="803.5" y="531.4" width="6.0" height="8.8" fill="#d3c6bf"/>
<rect x="817.2" y="528.5" width="19.7" height="12.8" fill="#ded4cf"/>
<rect x="839.1" y="528.5" width="17.0" height="12.8" fill="#ded6d1"/>
<rect x="858.3" y="528.5" width="19.4" height="12.8" fill="#ded4cf"/>
<rect x="860.7" y="530.4" width="10.2" height="7.7" fill="#d3c6bf"/>
<rect x="879.9" y="528.5" width="17.2" height="12.8" fill="#e3dcd7"/>
<rect x="899.3" y="528.5" width="12.0" height="12.8" fill="#e3dcd7"/>
<rect x="913.5" y="528.5" width="23.0" height="12.8" fill="#e3dcd7"/>
<rect x="938.6" y="528.5" width="20.8" height="12.8" fill="#e3dcd7"/>
<rect x="961.6" y="528.5" width="14.2" height="12.8" fill="#e3d5d0"/>
<rect x="978.1" y="528.5" width="14.0" height="12.8" fill="#dbd1cb"/>
<rect x="994.3" y="528.5" width="19.4" height="12.8" fill="#ded4cf"/>
<rect x="1015.9" y="528.5" width="16.2" height="12.8" fill="#e3dcd7"/>
<rect x="1034.3" y="528.5" width="18.5" height="12.8" fill="#dbd1cb"/>
<rect x="1055.0" y="528.5" width="12.2" height="12.8" fill="#e3d5d0"/>
<rect x="1069.5" y="528.5" width="17.4" height="12.8" fill="#e3dcd7"/>
<rect x="507.0" y="543.5" width="14.6" height="16.7" fill="#ded4cf"/>
<rect x="509.5" y="547.3" width="6.8" height="10.6" fill="#d3c6bf"/>
<rect x="523.7" y="543.5" width="23.2" height="16.7" fill="#e3dcd7"/>
<rect x="528.7" y="548.9" width="10.4" height="7.1" fill="#d3c6bf"/>
<rect x="549.2" y="543.5" width="20.0" height="16.7" fill="#ded6d1"/>
<rect x="550.7" y="546.3" width="12.7" height="8.3" fill="#d3c6bf"/>
<rect x="571.4" y="543.5" width="22.0" height="16.7" fill="#dbd1cb"/>
<rect x="595.6" y="543.5" width="12.9" height="16.7" fill="#e3dcd7"/>
<rect x="597.8" y="549.1" width="4.6" height="9.7" fill="#d3c6bf"/>
<rect x="610.6" y="543.5" width="11.3" height="16.7" fill="#e3d5d0"/>
<rect x="612.5" y="549.2" width="6.4" height="9.6" fill="#d3c6bf"/>
<rect x="624.1" y="543.5" width="17.6" height="16.7" fill="#e3d5d0"/>
<rect x="626.3" y="548.5" width="11.4" height="10.5" fill="#d3c6bf"/>
<rect x="643.9" y="543.5" width="15.4" height="16.7" fill="#ded4cf"/>
<rect x="647.0" y="549.2" width="9.4" height="9.5" fill="#d3c6bf"/>
<rect x="661.5" y="543.5" width="21.2" height="16.7" fill="#dbd1cb"/>
<rect x="684.8" y="543.5" width="11.4" height="16.7" fill="#e3d5d0"/>
<rect x="698.4" y="543.5" width="22.4" height="16.7" fill="#ded4cf"/>
<rect x="701.6" y="546.7" width="9.0" height="6.1" fill="#d3c6bf"/>
<rect x="723.0" y="543.5" width="12.5" height="16.7" fill="#dbd1cb"/>
<rect x="737.7" y="543.5" width="23.6" height="16.7" fill="#dbd1cb"/>
<rect x="763.5" y="543.5" width="10.9" height="16.7" fill="#dbd1cb"/>
<rect x="765.0" y="547.6" width="7.7" height="10.9" fill="#d3c6bf"/>
<rect x="776.6" y="543.5" width="22.6" height="16.7" fill="#e3dcd7"/>
<rect x="781.2" y="546.1" width="7.7" height="9.8" fill="#d3c6bf"/>
<rect x="801.4" y="543.5" width="19.1" height="16.7" fill="#ded6d1"/>
<rect x="805.5" y="548.9" width="10.1" height="5.8" fill="#d3c6bf"/>
<rect x="822.7" y="543.5" width="17.1" height="16.7" fill="#e3dcd7"/>
<rect x="828.2" y="548.1" width="7.1" height="9.7" fill="#d3c6bf"/>
<rect x="842.0" y="543.5" width="23.0" height="16.7" fill="#ded6d1"/>
<rect x="843.6" y="545.0" width="8.3" height="6.3" fill="#d3c6bf"/>
<rect x="867.2" y="543.5" width="19.8" height="16.7" fill="#dbd1cb"/>
<rect x="871.9" y="548.2" width="10.9" height="10.8" fill="#d3c6bf"/>
<rect x="889.1" y="543.5" width="12.4" height="16.7" fill="#e3dcd7"/>
<rect x="903.7" y="543.5" width="18.5" height="16.7" fill="#ded4cf"/>
<rect x="924.4" y="543.5" width="23.0" height="16.7" fill="#e3d5d0"/>
<rect x="930.7" y="548.4" width="12.9" height="6.1" fill="#d3c6bf"/>
<rect x="949.7" y="543.5" width="24.3" height="16.7" fill="#e3dcd7"/>
<rect x="950.9" y="547.8" width="14.4" height="6.8" fill="#d3c6bf"/>
<rect x="976.2" y="543.5" width="22.7" height="16.7" fill="#e3dcd7"/>
<rect x="978.2" y="547.6" width="12.1" height="6.6" fill="#d3c6bf"/>
<rect x="1001.1" y="543.5" width="23.5" height="16.7" fill="#dbd1cb"/>
<rect x="1006.4" y="544.6" width="11.0" height="8.7" fill="#d3c6bf"/>
<rect x="1026.8" y="543.5" width="16.8" height="16.7" fill="#ded6d1"/>
<rect x="1029.7" y="545.6" width="10.5" height="7.5" fill="#d3c6bf"/>
<rect x="1045.8" y="543.5" width="23.6" height="16.7" fill="#ded6d1"/>
<rect x="1071.5" y="543.5" width="11.6" height="16.7" fill="#e3dcd7"/>
<rect x="496.4" y="562.5" width="19.1" height="17.5" fill="#ded4cf"/>
<rect x="517.7" y="562.5" width="18.6" height="17.5" fill="#ded4cf"/>
<rect x="522.9" y="563.6" width="7.3" height="7.3" fill="#d3c6bf"/>
<rect x="538.5" y="562.5" width="22.2" height="17.5" fill="#ded6d1"/>
<rect x="542.5" y="564.0" width="11.9" height="6.6" fill="#d3c6bf"/>
<rect x="562.9" y="562.5" width="13.9" height="17.5" fill="#e3d5d0"/>
<rect x="566.9" y="566.7" width="5.2" height="8.7" fill="#d3c6bf"/>
<rect x="579.0" y="562.5" width="16.7" height="17.5" fill="#ded4cf"/>
<rect x="582.2" y="565.0" width="11.2" height="8.7" fill="#d3c6bf"/>
<rect x="598.0" y="562.5" width="11.6" height="17.5" fill="#ded4cf"/>
<rect x="599.4" y="564.8" width="8.1" height="8.2" fill="#d3c6bf"/>
<rect x="611.8" y="562.5" width="23.1" height="17.5" fill="#ded4cf"/>
<rect x="637.1" y="562.5" width="16.0" height="17.5" fill="#ded4cf"/>
<rect x="655.3" y="562.5" width="24.1" height="17.5" fill="#e3d5d0"/>
<rect x="681.6" y="562.5" width="22.6" height="17.5" fill="#dbd1cb"/>
<rect x="706.4" y="562.5" width="13.7" height="17.5" fill="#e3d5d0"/>
<rect x="722.3" y="562.5" width="21.6" height="17.5" fill="#dbd1cb"/>
<rect x="746.1" y="562.5" width="11.2" height="17.5" fill="#e3d5d0"/>
<rect x="759.5" y="562.5" width="17.7" height="17.5" fill="#ded4cf"/>
<rect x="764.9" y="564.6" width="6.9" height="7.6" fill="#d3c6bf"/>
<rect x="779.4" y="562.5" width="17.2" height="17.5" fill="#ded4cf"/>
<rect x="782.3" y="565.7" width="8.6" height="11.7" fill="#d3c6bf"/>
<rect x="798.8" y="562.5" width="18.3" height="17.5" fill="#dbd1cb"/>
<rect x="803.4" y="566.6" width="11.6" height="10.9" fill="#d3c6bf"/>
<rect x="819.2" y="562.5" width="23.8" height="17.5" fill="#e3d5d0"/>
<rect x="845.2" y="562.5" width="19.1" height="17.5" fill="#ded6d1"/>
<rect x="849.1" y="567.6" width="7.2" height="10.3" fill="#d3c6bf"/>
<rect x="866.5" y="562.5" width="18.3" height="17.5" fill="#e3d5d0"/>
<rect x="868.2" y="566.4" width="9.0" height="10.1" fill="#d3c6bf"/>
<rect x="887.0" y="562.5" width="16.6" height="17.5" fill="#ded6d1"/>
<rect x="892.0" y="566.1" width="11.1" height="6.0" fill="#d3c6bf"/>
<rect x="905.8" y="562.5" width="17.3" height="17.5" fill="#e3dcd7"/>
<rect x="925.3" y="562.5" width="12.6" height="17.5" fill="#e3d5d0"/>
<rect x="928.9" y="563.6" width="6.9" height="9.6" fill="#d3c6bf"/>
<rect x="940.1" y="562.5" width="19.8" height="17.5" fill="#dbd1cb"/>
<rect x="943.5" y="567.0" width="6.8" height="9.5" fill="#d3c6bf"/>
<rect x="962.1" y="562.5" width="16.3" height="17.5" fill="#e3d5d0"/>
<rect x="980.6" y="562.5" width="23.6" height="17.5" fill="#ded6d1"/>
<rect x="987.2" y="566.2" width="15.3" height="10.7" fill="#d3c6bf"/>
<rect x="1006.4" y="562.5" width="18.4" height="17.5" fill="#e3d5d0"/>
<rect x="1027.0" y="562.5" width="15.6" height="17.5" fill="#dbd1cb"/>
<rect x="1044.8" y="562.5" width="22.9" height="17.5" fill="#ded4cf"/>
<rect x="1050.7" y="565.5" width="12.7" height="8.9" fill="#d3c6bf"/>
<rect x="1069.9" y="562.5" width="19.6" height="17.5" fill="#e3dcd7"/>
<rect x="497.7" y="582.2" width="20.8" height="12.6" fill="#ded6d1"/>
<rect x="501.8" y="584.1" width="11.4" height="5.2" fill="#d3c6bf"/>
<rect x="520.8" y="582.2" width="15.0" height="12.6" fill="#e3dcd7"/>
<rect x="523.6" y="585.8" width="7.1" height="4.6" fill="#d3c6bf"/>
<rect x="537.9" y="582.2" width="18.3" height="12.6" fill="#dbd1cb"/>
<rect x="541.1" y="585.4" width="7.4" height="7.8" fill="#d3c6bf"/>
<rect x="558.4" y="582.2" width="23.7" height="12.6" fill="#ded6d1"/>
<rect x="584.3" y="582.2" width="18.1" height="12.6" fill="#dbd1cb"/>
<rect x="604.6" y="582.2" width="16.9" height="12.6" fill="#e3dcd7"/>
<rect x="608.5" y="585.0" width="8.8" height="6.7" fill="#d3c6bf"/>
<rect x="623.8" y="582.2" width="19.4" height="12.6" fill="#ded4cf"/>
<rect x="645.4" y="582.2" width="22.4" height="12.6" fill="#ded4cf"/>
<rect x="648.1" y="584.9" width="7.9" height="4.7" fill="#d3c6bf"/>
<rect x="670.0" y="582.2" width="12.0" height="12.6" fill="#e3d5d0"/>
<rect x="672.6" y="584.8" width="8.4" height="5.1" fill="#d3c6bf"/>
<rect x="684.1" y="582.2" width="14.3" height="12.6" fill="#e3d5d0"/>
<rect x="686.5" y="583.6" width="9.5" height="6.4" fill="#d3c6bf"/>
<rect x="700.7" y="582.2" width="18.9" height="12.6" fill="#dbd1cb"/>
<rect x="721.8" y="582.2" width="15.0" height="12.6" fill="#e3d5d0"/>
<rect x="725.0" y="584.3" width="10.1" height="6.4" fill="#d3c6bf"/>
<rect x="739.0" y="582.2" width="22.5" height="12.6" fill="#ded6d1"/>
<rect x="763.7" y="582.2" width="17.6" height="12.6" fill="#ded4cf"/>
<rect x="764.9" y="584.1" width="8.1" height="6.8" fill="#d3c6bf"/>
<rect x="783.5" y="582.2" width="16.1" height="12.6" fill="#e3dcd7"/>
<rect x="788.5" y="583.4" width="7.4" height="5.0" fill="#d3c6bf"/>
<rect x="801.9" y="582.2" width="23.7" height="12.6" fill="#dbd1cb"/>
<rect x="827.8" y="582.2" width="17.1" height="12.6" fill="#dbd1cb"/>
<rect x="847.2" y="582.2" width="24.0" height="12.6" fill="#ded4cf"/>
<rect x="851.0" y="584.6" width="9.5" height="8.3" fill="#d3c6bf"/>
<rect x="873.3" y="582.2" width="15.0" height="12.6" fill="#e3d5d0"/>
<rect x="878.5" y="583.4" width="6.2" height="8.7" fill="#d3c6bf"/>
<rect x="890.6" y="582.2" width="19.1" height="12.6" fill="#ded4cf"/>
<rect x="911.9" y="582.2" width="24.0" height="12.6" fill="#ded6d1"/>
<rect x="938.0" y="582.2" width="11.2" height="12.6" fill="#e3dcd7"/>
<rect x="941.9" y="584.9" width="7.5" height="4.7" fill="#d3c6bf"/>
<rect x="951.4" y="582.2" width="16.2" height="12.6" fill="#dbd1cb"/>
<rect x="969.9" y="582.2" width="17.7" height="12.6" fill="#e3dcd7"/>
<rect x="989.8" y="582.2" width="16.6" height="12.6" fill="#e3d5d0"/>
<rect x="1008.6" y="582.2" width="15.8" height="12.6" fill="#ded4cf"/>
<rect x="1026.6" y="582.2" width="23.3" height="12.6" fill="#dbd1cb"/>
<rect x="1031.2" y="584.1" width="14.8" height="8.6" fill="#d3c6bf"/>
<rect x="1052.1" y="582.2" width="23.6" height="12.6" fill="#ded4cf"/>
<rect x="1077.9" y="582.2" width="16.9" height="12.6" fill="#dbd1cb"/>
<rect x="494.0" y="597.0" width="14.1" height="10.5" fill="#e3dcd7"/>
<rect x="510.3" y="597.0" width="14.5" height="10.5" fill="#ded6d1"/>
<rect x="527.0" y="597.0" width="24.6" height="10.5" fill="#e3dcd7"/>
<rect x="530.8" y="600.1" width="15.5" height="5.9" fill="#d3c6bf"/>
<rect x="553.8" y="597.0" width="17.5" height="10.5" fill="#ded4cf"/>
<rect x="573.4" y="597.0" width="16.2" height="10.5" fill="#dbd1cb"/>
<rect x="574.5" y="598.3" width="6.8" height="6.6" fill="#d3c6bf"/>
<rect x="591.8" y="597.0" width="21.2" height="10.5" fill="#e3dcd7"/>
<rect x="615.2" y="597.0" width="15.7" height="10.5" fill="#ded6d1"/>
<rect x="618.6" y="599.5" width="9.6" height="5.0" fill="#d3c6bf"/>
<rect x="633.0" y="597.0" width="23.4" height="10.5" fill="#ded4cf"/>
<rect x="658.7" y="597.0" width="18.8" height="10.5" fill="#dbd1cb"/>
<rect x="661.2" y="600.4" width="10.3" height="4.8" fill="#d3c6bf"/>
<rect x="679.7" y="597.0" width="21.3" height="10.5" fill="#dbd1cb"/>
<rect x="685.0" y="600.4" width="7.5" height="3.9" fill="#d3c6bf"/>
<rect x="703.3" y="597.0" width="19.2" height="10.5" fill="#dbd1cb"/>
<rect x="724.7" y="597.0" width="17.9" height="10.5" fill="#ded4cf"/>
<rect x="729.5" y="599.3" width="10.4" height="6.6" fill="#d3c6bf"/>
<rect x="744.8" y="597.0" width="22.6" height="10.5" fill="#e3dcd7"/>
<rect x="769.6" y="597.0" width="17.9" height="10.5" fill="#e3dcd7"/>
<rect x="774.5" y="599.8" width="10.1" height="4.4" fill="#d3c6bf"/>
<rect x="789.7" y="597.0" width="24.3" height="10.5" fill="#ded6d1"/>
<rect x="816.2" y="597.0" width="14.8" height="10.5" fill="#e3dcd7"/>
<rect x="820.6" y="598.7" width="9.6" height="5.9" fill="#d3c6bf"/>
<rect x="833.2" y="597.0" width="18.4" height="10.5" fill="#ded4cf"/>
<rect x="853.8" y="597.0" width="11.5" height="10.5" fill="#e3d5d0"/>
<rect x="867.5" y="597.0" width="17.6" height="10.5" fill="#ded6d1"/>
<rect x="870.7" y="598.7" width="6.4" height="5.2" fill="#d3c6bf"/>
<rect x="887.3" y="597.0" width="11.2" height="10.5" fill="#ded4cf"/>
<rect x="891.0" y="598.9" width="5.1" height="5.9" fill="#d3c6bf"/>
<rect x="900.7" y="597.0" width="14.9" height="10.5" fill="#ded6d1"/>
<rect x="905.5" y="598.1" width="5.4" height="7.2" fill="#d3c6bf"/>
<rect x="917.8" y="597.0" width="20.4" height="10.5" fill="#e3dcd7"/>
<rect x="940.4" y="597.0" width="21.7" height="10.5" fill="#e3d5d0"/>
<rect x="964.3" y="597.0" width="14.6" height="10.5" fill="#e3d5d0"/>
<rect x="966.2" y="598.2" width="7.8" height="4.1" fill="#d3c6bf"/>
<rect x="981.1" y="597.0" width="14.0" height="10.5" fill="#ded6d1"/>
<rect x="985.5" y="600.6" width="6.8" height="5.3" fill="#d3c6bf"/>
<rect x="997.3" y="597.0" width="24.4" height="10.5" fill="#e3d5d0"/>
<rect x="1023.9" y="597.0" width="19.4" height="10.5" fill="#e3d5d0"/>
<rect x="1029.1" y="598.2" width="6.6" height="6.6" fill="#d3c6bf"/>
<rect x="1045.4" y="597.0" width="24.8" height="10.5" fill="#dbd1cb"/>
<rect x="1072.4" y="597.0" width="21.1" height="10.5" fill="#ded6d1"/>
</g></g>
<g clip-path="url(#c2)"><polygon points="1000.0,172.0 1090.0,160.0 1160.0,120.0 1284.0,40.0 1284.0,240.0 1110.0,245.0 1010.0,300.0" fill="#fdfcfb"/><g transform="rotate(-30 1142.0 170.0)">
<rect x="940.6" y="-52.5" width="22.2" height="11.6" fill="#dedad7"/>
<rect x="964.8" y="-52.5" width="28.1" height="11.6" fill="#dcd7d2"/>
<rect x="970.0" y="-50.9" width="16.8" height="6.3" fill="#d5ccc6"/>
<rect x="994.9" y="-52.5" width="15.1" height="11.6" fill="#dcd7d2"/>
<rect x="1012.0" y="-52.5" width="28.4" height="11.6" fill="#e1dcd9"/>
<rect x="1042.4" y="-52.5" width="14.9" height="11.6" fill="#e4e0dc"/>
<rect x="1043.9" y="-51.1" width="9.9" height="7.0" fill="#d5ccc6"/>
<rect x="1059.4" y="-52.5" width="27.3" height="11.6" fill="#e1dcd9"/>
<rect x="1088.7" y="-52.5" width="30.5" height="11.6" fill="#e4e0dc"/>
<rect x="1091.0" y="-49.5" width="13.2" height="7.3" fill="#d5ccc6"/>
<rect x="1121.2" y="-52.5" width="21.5" height="11.6" fill="#dcd7d2"/>
<rect x="1125.5" y="-50.1" width="7.9" height="7.8" fill="#d5ccc6"/>
<rect x="1144.7" y="-52.5" width="21.1" height="11.6" fill="#e1dcd9"/>
<rect x="1146.5" y="-49.1" width="12.3" height="5.4" fill="#d5ccc6"/>
<rect x="1167.9" y="-52.5" width="18.0" height="11.6" fill="#dcd7d2"/>
<rect x="1169.9" y="-51.1" width="11.3" height="5.6" fill="#d5ccc6"/>
<rect x="1187.8" y="-52.5" width="25.4" height="11.6" fill="#dcd7d2"/>
<rect x="1215.2" y="-52.5" width="28.7" height="11.6" fill="#dcd7d2"/>
<rect x="1245.9" y="-52.5" width="29.7" height="11.6" fill="#dcd7d2"/>
<rect x="1247.6" y="-51.4" width="11.6" height="4.1" fill="#d5ccc6"/>
<rect x="1277.7" y="-52.5" width="22.6" height="11.6" fill="#dcd7d2"/>
<rect x="1282.8" y="-49.0" width="10.7" height="6.9" fill="#d5ccc6"/>
<rect x="1302.3" y="-52.5" width="15.9" height="11.6" fill="#e4e0dc"/>
<rect x="1306.0" y="-50.4" width="5.5" height="4.6" fill="#d5ccc6"/>
<rect x="1320.2" y="-52.5" width="27.3" height="11.6" fill="#e1dcd9"/>
<rect x="1327.2" y="-50.5" width="13.3" height="5.2" fill="#d5ccc6"/>
<rect x="1349.5" y="-52.5" width="22.4" height="11.6" fill="#e4e0dc"/>
<rect x="1352.2" y="-49.3" width="9.4" height="7.7" fill="#d5ccc6"/>
<rect x="930.3" y="-38.9" width="19.0" height="16.0" fill="#dcd7d2"/>
<rect x="933.9" y="-33.7" width="10.2" height="10.8" fill="#d5ccc6"/>
<rect x="951.3" y="-38.9" width="20.5" height="16.0" fill="#dcd7d2"/>
<rect x="973.8" y="-38.9" width="15.7" height="16.0" fill="#dedad7"/>
<rect x="991.5" y="-38.9" width="22.3" height="16.0" fill="#dedad7"/>
<rect x="1015.8" y="-38.9" width="28.9" height="16.0" fill="#dcd7d2"/>
<rect x="1016.9" y="-36.1" width="14.7" height="10.3" fill="#d5ccc6"/>
<rect x="1046.7" y="-38.9" width="16.8" height="16.0" fill="#e1dcd9"/>
<rect x="1050.4" y="-34.3" width="8.9" height="8.5" fill="#d5ccc6"/>
<rect x="1065.5" y="-38.9" width="26.9" height="16.0" fill="#dedad7"/>
<rect x="1094.3" y="-38.9" width="29.0" height="16.0" fill="#e1dcd9"/>
<rect x="1125.3" y="-38.9" width="27.6" height="16.0" fill="#dedad7"/>
<rect x="1154.9" y="-38.9" width="17.8" height="16.0" fill="#dedad7"/>
<rect x="1160.6" y="-34.4" width="11.5" height="10.4" fill="#d5ccc6"/>
<rect x="1174.7" y="-38.9" width="26.5" height="16.0" fill="#dedad7"/>
<rect x="1203.2" y="-38.9" width="17.1" height="16.0" fill="#dcd7d2"/>
<rect x="1205.5" y="-37.8" width="8.3" height="10.0" fill="#d5ccc6"/>
<rect x="1222.3" y="-38.9" width="21.8" height="16.0" fill="#e1dcd9"/>
<rect x="1229.1" y="-34.1" width="10.0" height="7.2" fill="#d5ccc6"/>
<rect x="1246.1" y="-38.9" width="21.6" height="16.0" fill="#dedad7"/>
<rect x="1252.8" y="-37.2" width="12.3" height="7.3" fill="#d5ccc6"/>
<rect x="1269.7" y="-38.9" width="15.6" height="16.0" fill="#e4e0dc"/>
<rect x="1271.8" y="-35.7" width="9.2" height="5.7" fill="#d5ccc6"/>
<rect x="1287.2" y="-38.9" width="31.3" height="16.0" fill="#e4e0dc"/>
<rect x="1295.5" y="-36.7" width="10.6" height="6.7" fill="#d5ccc6"/>
<rect x="1320.5" y="-38.9" width="32.7" height="16.0" fill="#e4e0dc"/>
<rect x="1355.2" y="-38.9" width="30.9" height="16.0" fill="#e1dcd9"/>
<rect x="1361.4" y="-34.1" width="16.8" height="9.6" fill="#d5ccc6"/>
<rect x="936.9" y="-20.9" width="17.9" height="11.2" fill="#e4e0dc"/>
<rect x="938.7" y="-18.0" width="7.6" height="6.0" fill="#d5ccc6"/>
<rect x="956.8" y="-20.9" width="27.7" height="11.2" fill="#e4e0dc"/>
<rect x="986.4" y="-20.9" width="27.0" height="11.2" fill="#e1dcd9"/>
<rect x="994.8" y="-18.6" width="17.0" height="5.2" fill="#d5ccc6"/>
<rect x="1015.4" y="-20.9" width="24.3" height="11.2" fill="#e4e0dc"/>
<rect x="1041.7" y="-20.9" width="30.3" height="11.2" fill="#dedad7"/>
<rect x="1074.0" y="-20.9" width="18.4" height="11.2" fill="#dcd7d2"/>
<rect x="1094.4" y="-20.9" width="30.6" height="11.2" fill="#e1dcd9"/>
<rect x="1098.2" y="-18.9" width="10.6" height="5.4" fill="#d5ccc6"/>
<rect x="1127.0" y="-20.9" width="21.6" height="11.2" fill="#dcd7d2"/>
<rect x="1128.9" y="-19.8" width="11.9" height="5.4" fill="#d5ccc6"/>
<rect x="1150.6" y="-20.9" width="22.8" height="11.2" fill="#e4e0dc"/>
<rect x="1151.9" y="-17.5" width="9.1" height="4.9" fill="#d5ccc6"/>
<rect x="1175.4" y="-20.9" width="24.9" height="11.2" fill="#dedad7"/>
<rect x="1202.3" y="-20.9" width="24.4" height="11.2" fill="#e1dcd9"/>
<rect x="1203.8" y="-18.6" width="14.4" height="6.6" fill="#d5ccc6"/>
<rect x="1228.7" y="-20.9" width="15.6" height="11.2" fill="#e1dcd9"/>
<rect x="1231.3" y="-18.8" width="6.0" height="7.9" fill="#d5ccc6"/>
<rect x="1246.3" y="-20.9" width="21.6" height="11.2" fill="#dedad7"/>
<rect x="1269.9" y="-20.9" width="24.1" height="11.2" fill="#e1dcd9"/>
<rect x="1296.0" y="-20.9" width="16.1" height="11.2" fill="#dedad7"/>
<rect x="1297.8" y="-19.0" width="6.3" height="7.3" fill="#d5ccc6"/>
<rect x="1314.2" y="-20.9" width="21.4" height="11.2" fill="#dcd7d2"/>
<rect x="1316.1" y="-18.1" width="11.2" height="6.9" fill="#d5ccc6"/>
<rect x="1337.6" y="-20.9" width="30.9" height="11.2" fill="#dcd7d2"/>
<rect x="1344.2" y="-18.4" width="14.8" height="6.5" fill="#d5ccc6"/>
<rect x="942.6" y="-7.7" width="32.7" height="18.7" fill="#dedad7"/>
<rect x="945.5" y="-2.4" width="14.9" height="6.3" fill="#d5ccc6"/>
<rect x="977.3" y="-7.7" width="28.5" height="18.7" fill="#dedad7"/>
<rect x="983.5" y="-3.5" width="9.8" height="11.2" fill="#d5ccc6"/>
<rect x="1007.8" y="-7.7" width="25.3" height="18.7" fill="#e4e0dc"/>
<rect x="1012.8" y="-3.2" width="14.1" height="7.5" fill="#d5ccc6"/>
<rect x="1035.1" y="-7.7" width="27.1" height="18.7" fill="#dedad7"/>
<rect x="1041.5" y="-4.3" width="14.8" height="12.0" fill="#d5ccc6"/>
<rect x="1064.2" y="-7.7" width="22.1" height="18.7" fill="#dedad7"/>
<rect x="1088.3" y="-7.7" width="18.5" height="18.7" fill="#dcd7d2"/>
<rect x="1092.5" y="-3.6" width="8.8" height="9.1" fill="#d5ccc6"/>
<rect x="1108.8" y="-7.7" width="28.0" height="18.7" fill="#e1dcd9"/>
<rect x="1111.0" y="-2.9" width="14.9" height="8.0" fill="#d5ccc6"/>
<rect x="1138.8" y="-7.7" width="20.6" height="18.7" fill="#e4e0dc"/>
<rect x="1143.3" y="-1.6" width="12.9" height="10.8" fill="#d5ccc6"/>
<rect x="1161.5" y="-7.7" width="22.2" height="18.7" fill="#e4e0dc"/>
<rect x="1185.6" y="-7.7" width="18.1" height="18.7" fill="#e1dcd9"/>
<rect x="1188.7" y="-4.6" width="7.2" height="8.4" fill="#d5ccc6"/>
<rect x="1205.7" y="-7.7" width="16.8" height="18.7" fill="#dedad7"/>
<rect x="1207.6" y="-2.3" width="10.1" height="6.4" fill="#d5ccc6"/>
<rect x="1224.5" y="-7.7" width="25.2" height="18.7" fill="#dedad7"/>
<rect x="1226.0" y="-2.2" width="15.7" height="8.9" fill="#d5ccc6"/>
<rect x="1251.7" y="-7.7" width="29.1" height="18.7" fill="#e1dcd9"/>
<rect x="1259.6" y="-2.3" width="11.8" height="12.0" fill="#d5ccc6"/>
<rect x="1282.8" y="-7.7" width="29.7" height="18.7" fill="#e1dcd9"/>
<rect x="1291.7" y="-3.5" width="12.3" height="11.9" fill="#d5ccc6"/>
<rect x="1314.5" y="-7.7" width="29.7" height="18.7" fill="#dedad7"/>
<rect x="1323.7" y="-5.6" width="16.0" height="8.4" fill="#d5ccc6"/>
<rect x="1346.1" y="-7.7" width="31.6" height="18.7" fill="#e1dcd9"/>
<rect x="1354.0" y="-3.8" width="14.6" height="7.3" fill="#d5ccc6"/>
<rect x="935.8" y="12.9" width="23.3" height="19.8" fill="#dcd7d2"/>
<rect x="961.2" y="12.9" width="32.7" height="19.8" fill="#e4e0dc"/>
<rect x="995.9" y="12.9" width="29.0" height="19.8" fill="#dcd7d2"/>
<rect x="1026.8" y="12.9" width="32.9" height="19.8" fill="#e4e0dc"/>
<rect x="1036.6" y="18.1" width="17.5" height="6.8" fill="#d5ccc6"/>
<rect x="1061.8" y="12.9" width="22.2" height="19.8" fill="#dedad7"/>
<rect x="1063.9" y="16.8" width="11.9" height="12.1" fill="#d5ccc6"/>
<rect x="1086.0" y="12.9" width="19.8" height="19.8" fill="#dedad7"/>
<rect x="1089.1" y="19.4" width="11.0" height="9.4" fill="#d5ccc6"/>
<rect x="1107.7" y="12.9" width="17.3" height="19.8" fill="#dcd7d2"/>
<rect x="1111.0" y="16.8" width="6.8" height="10.8" fill="#d5ccc6"/>
<rect x="1127.0" y="12.9" width="25.2" height="19.8" fill="#e1dcd9"/>
<rect x="1154.2" y="12.9" width="33.0" height="19.8" fill="#e4e0dc"/>
<rect x="1189.2" y="12.9" width="32.5" height="19.8" fill="#dedad7"/>
<rect x="1223.7" y="12.9" width="19.9" height="19.8" fill="#dedad7"/>
<rect x="1230.0" y="17.7" width="12.9" height="8.3" fill="#d5ccc6"/>
<rect x="1245.6" y="12.9" width="19.6" height="19.8" fill="#e1dcd9"/>
<rect x="1267.1" y="12.9" width="16.9" height="19.8" fill="#dcd7d2"/>
<rect x="1270.9" y="19.1" width="6.8" height="8.3" fill="#d5ccc6"/>
<rect x="1286.1" y="12.9" width="16.6" height="19.8" fill="#dedad7"/>
<rect x="1304.6" y="12.9" width="19.4" height="19.8" fill="#e1dcd9"/>
<rect x="1326.1" y="12.9" width="31.8" height="19.8" fill="#dcd7d2"/>
<rect x="1330.0" y="19.4" width="14.6" height="8.5" fill="#d5ccc6"/>
<rect x="1359.9" y="12.9" width="20.9" height="19.8" fill="#e4e0dc"/>
<rect x="1363.5" y="16.4" width="10.1" height="9.3" fill="#d5ccc6"/>
<rect x="925.5" y="34.7" width="24.6" height="19.4" fill="#e4e0dc"/>
<rect x="927.0" y="39.7" width="9.9" height="10.6" fill="#d5ccc6"/>
<rect x="952.1" y="34.7" width="25.3" height="19.4" fill="#e1dcd9"/>
<rect x="955.2" y="40.2" width="12.1" height="7.6" fill="#d5ccc6"/>
<rect x="979.4" y="34.7" width="32.8" height="19.4" fill="#dedad7"/>
<rect x="1014.2" y="34.7" width="22.0" height="19.4" fill="#e4e0dc"/>
<rect x="1038.3" y="34.7" width="27.8" height="19.4" fill="#e1dcd9"/>
<rect x="1042.7" y="39.2" width="9.1" height="12.2" fill="#d5ccc6"/>
<rect x="1068.0" y="34.7" width="29.8" height="19.4" fill="#e4e0dc"/>
<rect x="1076.7" y="37.4" width="13.1" height="11.5" fill="#d5ccc6"/>
<rect x="1099.8" y="34.7" width="24.8" height="19.4" fill="#e1dcd9"/>
<rect x="1126.6" y="34.7" width="27.7" height="19.4" fill="#e4e0dc"/>
<rect x="1156.3" y="34.7" width="29.0" height="19.4" fill="#dedad7"/>
<rect x="1187.3" y="34.7" width="32.7" height="19.4" fill="#dedad7"/>
<rect x="1222.0" y="34.7" width="21.5" height="19.4" fill="#e1dcd9"/>
<rect x="1223.7" y="39.6" width="13.1" height="8.6" fill="#d5ccc6"/>
<rect x="1245.5" y="34.7" width="18.8" height="19.4" fill="#dedad7"/>
<rect x="1246.6" y="36.6" width="8.5" height="8.7" fill="#d5ccc6"/>
<rect x="1266.2" y="34.7" width="19.8" height="19.4" fill="#dedad7"/>
<rect x="1288.0" y="34.7" width="17.5" height="19.4" fill="#e1dcd9"/>
<rect x="1291.5" y="37.4" width="10.5" height="7.8" fill="#d5ccc6"/>
<rect x="1307.6" y="34.7" width="29.5" height="19.4" fill="#dcd7d2"/>
<rect x="1309.6" y="40.1" width="18.5" height="8.0" fill="#d5ccc6"/>
<rect x="1339.1" y="34.7" width="27.0" height="19.4" fill="#e4e0dc"/>
<rect x="924.8" y="56.1" width="16.0" height="11.4" fill="#e4e0dc"/>
<rect x="926.7" y="58.6" width="7.7" height="7.7" fill="#d5ccc6"/>
<rect x="942.8" y="56.1" width="28.3" height="11.4" fill="#dedad7"/>
<rect x="950.2" y="57.3" width="10.7" height="6.8" fill="#d5ccc6"/>
<rect x="973.1" y="56.1" width="16.4" height="11.4" fill="#dcd7d2"/>
<rect x="991.5" y="56.1" width="18.9" height="11.4" fill="#dcd7d2"/>
<rect x="1012.4" y="56.1" width="19.2" height="11.4" fill="#e4e0dc"/>
<rect x="1014.6" y="58.1" width="11.1" height="8.0" fill="#d5ccc6"/>
<rect x="1033.6" y="56.1" width="19.1" height="11.4" fill="#e4e0dc"/>
<rect x="1054.7" y="56.1" width="22.2" height="11.4" fill="#e4e0dc"/>
<rect x="1078.9" y="56.1" width="28.0" height="11.4" fill="#dcd7d2"/>
<rect x="1108.9" y="56.1" width="26.6" height="11.4" fill="#e1dcd9"/>
<rect x="1137.5" y="56.1" width="20.9" height="11.4" fill="#dedad7"/>
<rect x="1143.0" y="57.6" width="12.8" height="7.3" fill="#d5ccc6"/>
<rect x="1160.4" y="56.1" width="21.4" height="11.4" fill="#e1dcd9"/>
<rect x="1166.7" y="58.3" width="7.1" height="6.0" fill="#d5ccc6"/>
<rect x="1183.8" y="56.1" width="30.5" height="11.4" fill="#dcd7d2"/>
<rect x="1193.1" y="59.7" width="11.3" height="5.1" fill="#d5ccc6"/>
<rect x="1216.3" y="56.1" width="17.3" height="11.4" fill="#dcd7d2"/>
<rect x="1235.6" y="56.1" width="28.2" height="11.4" fill="#dedad7"/>
<rect x="1236.9" y="59.3" width="16.7" height="6.1" fill="#d5ccc6"/>
<rect x="1265.7" y="56.1" width="17.8" height="11.4" fill="#e1dcd9"/>
<rect x="1269.0" y="57.5" width="11.8" height="4.1" fill="#d5ccc6"/>
<rect x="1285.6" y="56.1" width="29.2" height="11.4" fill="#e1dcd9"/>
<rect x="1289.9" y="58.1" width="10.5" height="6.2" fill="#d5ccc6"/>
<rect x="1316.7" y="56.1" width="20.4" height="11.4" fill="#e1dcd9"/>
<rect x="1339.1" y="56.1" width="18.1" height="11.4" fill="#dcd7d2"/>
<rect x="1344.6" y="58.6" width="11.3" height="6.2" fill="#d5ccc6"/>
<rect x="1359.2" y="56.1" width="26.6" height="11.4" fill="#dcd7d2"/>
<rect x="924.6" y="69.5" width="26.0" height="17.2" fill="#dcd7d2"/>
<rect x="929.3" y="72.6" width="15.1" height="8.3" fill="#d5ccc6"/>
<rect x="952.6" y="69.5" width="26.8" height="17.2" fill="#dcd7d2"/>
<rect x="954.2" y="71.7" width="9.8" height="5.8" fill="#d5ccc6"/>
<rect x="981.4" y="69.5" width="31.2" height="17.2" fill="#e1dcd9"/>
<rect x="1014.6" y="69.5" width="16.2" height="17.2" fill="#e1dcd9"/>
<rect x="1018.0" y="74.9" width="10.2" height="10.9" fill="#d5ccc6"/>
<rect x="1032.8" y="69.5" width="23.0" height="17.2" fill="#e4e0dc"/>
<rect x="1057.8" y="69.5" width="24.2" height="17.2" fill="#dedad7"/>
<rect x="1059.2" y="74.4" width="13.7" height="11.1" fill="#d5ccc6"/>
<rect x="1084.0" y="69.5" width="18.3" height="17.2" fill="#dedad7"/>
<rect x="1104.2" y="69.5" width="24.8" height="17.2" fill="#dcd7d2"/>
<rect x="1111.9" y="71.1" width="14.2" height="9.2" fill="#d5ccc6"/>
<rect x="1131.0" y="69.5" width="17.8" height="17.2" fill="#dcd7d2"/>
<rect x="1135.5" y="73.8" width="6.4" height="8.5" fill="#d5ccc6"/>
<rect x="1150.8" y="69.5" width="19.2" height="17.2" fill="#e1dcd9"/>
<rect x="1172.1" y="69.5" width="26.2" height="17.2" fill="#dcd7d2"/>
<rect x="1200.3" y="69.5" width="15.0" height="17.2" fill="#dcd7d2"/>
<rect x="1217.3" y="69.5" width="21.9" height="17.2" fill="#e4e0dc"/>
<rect x="1241.2" y="69.5" width="19.0" height="17.2" fill="#e1dcd9"/>
<rect x="1262.2" y="69.5" width="18.5" height="17.2" fill="#dedad7"/>
<rect x="1264.8" y="71.8" width="11.7" height="7.5" fill="#d5ccc6"/>
<rect x="1282.7" y="69.5" width="20.5" height="17.2" fill="#e1dcd9"/>
<rect x="1285.4" y="73.9" width="11.9" height="7.4" fill="#d5ccc6"/>
<rect x="1305.2" y="69.5" width="22.5" height="17.2" fill="#e1dcd9"/>
<rect x="1329.7" y="69.5" width="30.9" height="17.2" fill="#dcd7d2"/>
<rect x="1331.3" y="72.9" width="16.1" height="6.2" fill="#d5ccc6"/>
<rect x="1362.7" y="69.5" width="16.3" height="17.2" fill="#e4e0dc"/>
<rect x="1365.5" y="72.0" width="8.8" height="6.5" fill="#d5ccc6"/>
<rect x="933.0" y="88.7" width="21.3" height="15.4" fill="#e4e0dc"/>
<rect x="936.8" y="93.7" width="8.9" height="6.4" fill="#d5ccc6"/>
<rect x="956.3" y="88.7" width="28.4" height="15.4" fill="#dedad7"/>
<rect x="958.9" y="93.2" width="17.4" height="5.9" fill="#d5ccc6"/>
<rect x="986.7" y="88.7" width="15.7" height="15.4" fill="#e1dcd9"/>
<rect x="991.1" y="91.7" width="8.3" height="8.6" fill="#d5ccc6"/>
<rect x="1004.4" y="88.7" width="28.4" height="15.4" fill="#e4e0dc"/>
<rect x="1034.8" y="88.7" width="16.9" height="15.4" fill="#e1dcd9"/>
<rect x="1053.7" y="88.7" width="29.1" height="15.4" fill="#dedad7"/>
<rect x="1054.7" y="91.2" width="12.4" height="5.6" fill="#d5ccc6"/>
<rect x="1084.8" y="88.7" width="18.0" height="15.4" fill="#dcd7d2"/>
<rect x="1104.7" y="88.7" width="25.7" height="15.4" fill="#e1dcd9"/>
<rect x="1132.4" y="88.7" width="20.9" height="15.4" fill="#e4e0dc"/>
<rect x="1139.1" y="90.5" width="9.1" height="8.2" fill="#d5ccc6"/>
<rect x="1155.2" y="88.7" width="26.9" height="15.4" fill="#e4e0dc"/>
<rect x="1162.1" y="91.7" width="13.7" height="9.4" fill="#d5ccc6"/>
<rect x="1184.1" y="88.7" width="27.1" height="15.4" fill="#dedad7"/>
<rect x="1213.3" y="88.7" width="22.0" height="15.4" fill="#e1dcd9"/>
<rect x="1215.6" y="92.4" width="9.6" height="7.9" fill="#d5ccc6"/>
<rect x="1237.3" y="88.7" width="32.8" height="15.4" fill="#e1dcd9"/>
<rect x="1272.1" y="88.7" width="25.2" height="15.4" fill="#e4e0dc"/>
<rect x="1299.2" y="88.7" width="18.9" height="15.4" fill="#dcd7d2"/>
<rect x="1302.5" y="91.4" width="7.5" height="7.4" fill="#d5ccc6"/>
<rect x="1320.1" y="88.7" width="16.2" height="15.4" fill="#dcd7d2"/>
<rect x="1338.3" y="88.7" width="20.1" height="15.4" fill="#e1dcd9"/>
<rect x="1360.4" y="88.7" width="22.0" height="15.4" fill="#dcd7d2"/>
<rect x="931.2" y="106.1" width="25.7" height="9.9" fill="#e1dcd9"/>
<rect x="933.7" y="108.8" width="11.8" height="4.8" fill="#d5ccc6"/>
<rect x="958.9" y="106.1" width="30.5" height="9.9" fill="#dcd7d2"/>
<rect x="991.4" y="106.1" width="28.2" height="9.9" fill="#dedad7"/>
<rect x="997.9" y="107.7" width="13.1" height="5.5" fill="#d5ccc6"/>
<rect x="1021.6" y="106.1" width="28.2" height="9.9" fill="#dcd7d2"/>
<rect x="1051.9" y="106.1" width="25.8" height="9.9" fill="#dcd7d2"/>
<rect x="1079.6" y="106.1" width="17.6" height="9.9" fill="#e1dcd9"/>
<rect x="1084.5" y="108.5" width="8.4" height="5.4" fill="#d5ccc6"/>
<rect x="1099.3" y="106.1" width="27.8" height="9.9" fill="#e1dcd9"/>
<rect x="1129.1" y="106.1" width="27.8" height="9.9" fill="#dedad7"/>
<rect x="1158.9" y="106.1" width="15.8" height="9.9" fill="#e1dcd9"/>
<rect x="1161.0" y="109.4" width="7.6" height="4.4" fill="#d5ccc6"/>
<rect x="1176.6" y="106.1" width="17.2" height="9.9" fill="#dcd7d2"/>
<rect x="1179.9" y="107.7" width="6.5" height="5.6" fill="#d5ccc6"/>
<rect x="1195.8" y="106.1" width="17.2" height="9.9" fill="#dedad7"/>
<rect x="1201.4" y="107.3" width="7.5" height="4.5" fill="#d5ccc6"/>
<rect x="1215.0" y="106.1" width="23.8" height="9.9" fill="#e1dcd9"/>
<rect x="1240.7" y="106.1" width="26.9" height="9.9" fill="#dedad7"/>
<rect x="1269.7" y="106.1" width="18.0" height="9.9" fill="#e1dcd9"/>
<rect x="1274.8" y="108.1" width="6.3" height="4.9" fill="#d5ccc6"/>
<rect x="1289.6" y="106.1" width="26.9" height="9.9" fill="#dcd7d2"/>
<rect x="1293.7" y="108.7" width="12.9" height="4.0" fill="#d5ccc6"/>
<rect x="1318.6" y="106.1" width="27.0" height="9.9" fill="#dcd7d2"/>
<rect x="1323.5" y="107.5" width="13.6" height="4.4" fill="#d5ccc6"/>
<rect x="1347.5" y="106.1" width="25.2" height="9.9" fill="#dedad7"/>
<rect x="927.6" y="118.0" width="18.0" height="11.8" fill="#dcd7d2"/>
<rect x="947.7" y="118.0" width="27.0" height="11.8" fill="#dcd7d2"/>
<rect x="976.7" y="118.0" width="22.9" height="11.8" fill="#e4e0dc"/>
<rect x="1001.6" y="118.0" width="30.8" height="11.8" fill="#e1dcd9"/>
<rect x="1010.1" y="119.1" width="11.8" height="6.3" fill="#d5ccc6"/>
<rect x="1034.4" y="118.0" width="19.2" height="11.8" fill="#dcd7d2"/>
<rect x="1055.6" y="118.0" width="24.9" height="11.8" fill="#e4e0dc"/>
<rect x="1058.7" y="119.3" width="13.7" height="5.1" fill="#d5ccc6"/>
<rect x="1082.5" y="118.0" width="25.0" height="11.8" fill="#e1dcd9"/>
<rect x="1086.7" y="119.7" width="9.9" height="7.0" fill="#d5ccc6"/>
<rect x="1109.5" y="118.0" width="16.1" height="11.8" fill="#e4e0dc"/>
<rect x="1112.7" y="120.5" width="7.0" height="4.9" fill="#d5ccc6"/>
<rect x="1127.6" y="118.0" width="24.0" height="11.8" fill="#e1dcd9"/>
<rect x="1153.6" y="118.0" width="16.6" height="11.8" fill="#dcd7d2"/>
<rect x="1172.2" y="118.0" width="27.1" height="11.8" fill="#dcd7d2"/>
<rect x="1201.3" y="118.0" width="28.3" height="11.8" fill="#e4e0dc"/>
<rect x="1231.6" y="118.0" width="31.9" height="11.8" fill="#dedad7"/>
<rect x="1265.5" y="118.0" width="25.0" height="11.8" fill="#e1dcd9"/>
<rect x="1292.5" y="118.0" width="29.3" height="11.8" fill="#e1dcd9"/>
<rect x="1293.8" y="120.6" width="13.8" height="6.8" fill="#d5ccc6"/>
<rect x="1323.8" y="118.0" width="25.8" height="11.8" fill="#dcd7d2"/>
<rect x="1351.6" y="118.0" width="17.4" height="11.8" fill="#dcd7d2"/>
<rect x="1352.7" y="121.5" width="6.5" height="5.8" fill="#d5ccc6"/>
<rect x="920.0" y="131.8" width="27.3" height="15.3" fill="#dedad7"/>
<rect x="949.3" y="131.8" width="19.9" height="15.3" fill="#e4e0dc"/>
<rect x="950.9" y="135.6" width="11.4" height="8.5" fill="#d5ccc6"/>
<rect x="971.2" y="131.8" width="27.9" height="15.3" fill="#e1dcd9"/>
<rect x="976.8" y="134.3" width="15.2" height="9.5" fill="#d5ccc6"/>
<rect x="1001.1" y="131.8" width="25.1" height="15.3" fill="#e4e0dc"/>
<rect x="1028.2" y="131.8" width="30.2" height="15.3" fill="#dedad7"/>
<rect x="1029.4" y="133.0" width="17.5" height="6.0" fill="#d5ccc6"/>
<rect x="1060.4" y="131.8" width="32.0" height="15.3" fill="#e1dcd9"/>
<rect x="1094.4" y="131.8" width="16.6" height="15.3" fill="#dedad7"/>
<rect x="1113.0" y="131.8" width="29.7" height="15.3" fill="#e4e0dc"/>
<rect x="1114.6" y="137.0" width="13.0" height="9.2" fill="#d5ccc6"/>
<rect x="1144.7" y="131.8" width="29.8" height="15.3" fill="#e1dcd9"/>
<rect x="1147.8" y="133.6" width="15.4" height="8.9" fill="#d5ccc6"/>
<rect x="1176.5" y="131.8" width="18.9" height="15.3" fill="#e4e0dc"/>
<rect x="1177.6" y="135.1" width="10.4" height="9.8" fill="#d5ccc6"/>
<rect x="1197.5" y="131.8" width="32.6" height="15.3" fill="#dedad7"/>
<rect x="1204.3" y="135.4" width="16.2" height="8.5" fill="#d5ccc6"/>
<rect x="1232.1" y="131.8" width="16.2" height="15.3" fill="#e1dcd9"/>
<rect x="1250.3" y="131.8" width="25.5" height="15.3" fill="#e4e0dc"/>
<rect x="1253.1" y="135.6" width="16.4" height="8.1" fill="#d5ccc6"/>
<rect x="1277.8" y="131.8" width="26.3" height="15.3" fill="#dcd7d2"/>
<rect x="1306.1" y="131.8" width="32.8" height="15.3" fill="#dcd7d2"/>
<rect x="1340.9" y="131.8" width="27.9" height="15.3" fill="#e1dcd9"/>
<rect x="1343.3" y="133.4" width="15.6" height="10.1" fill="#d5ccc6"/>
<rect x="941.5" y="149.1" width="22.6" height="18.4" fill="#e1dcd9"/>
<rect x="943.9" y="152.4" width="14.3" height="10.4" fill="#d5ccc6"/>
<rect x="966.1" y="149.1" width="30.5" height="18.4" fill="#dcd7d2"/>
<rect x="998.7" y="149.1" width="29.5" height="18.4" fill="#dcd7d2"/>
<rect x="1030.2" y="149.1" width="16.9" height="18.4" fill="#e1dcd9"/>
<rect x="1049.1" y="149.1" width="31.8" height="18.4" fill="#e1dcd9"/>
<rect x="1082.9" y="149.1" width="28.3" height="18.4" fill="#dedad7"/>
<rect x="1084.0" y="154.6" width="17.9" height="8.2" fill="#d5ccc6"/>
<rect x="1113.2" y="149.1" width="25.8" height="18.4" fill="#dcd7d2"/>
<rect x="1119.6" y="151.9" width="14.8" height="9.3" fill="#d5ccc6"/>
<rect x="1141.0" y="149.1" width="26.4" height="18.4" fill="#dcd7d2"/>
<rect x="1169.4" y="149.1" width="22.6" height="18.4" fill="#dcd7d2"/>
<rect x="1194.0" y="149.1" width="32.5" height="18.4" fill="#e1dcd9"/>
<rect x="1228.5" y="149.1" width="31.8" height="18.4" fill="#dcd7d2"/>
<rect x="1235.3" y="150.5" width="16.0" height="10.4" fill="#d5ccc6"/>
<rect x="1262.3" y="149.1" width="21.2" height="18.4" fill="#dcd7d2"/>
<rect x="1264.3" y="151.4" width="13.5" height="10.0" fill="#d5ccc6"/>
<rect x="1285.6" y="149.1" width="24.7" height="18.4" fill="#dcd7d2"/>
<rect x="1312.3" y="149.1" width="30.3" height="18.4" fill="#dedad7"/>
<rect x="1321.4" y="150.5" width="13.3" height="11.3" fill="#d5ccc6"/>
<rect x="1344.7" y="149.1" width="20.5" height="18.4" fill="#e1dcd9"/>
<rect x="1351.4" y="150.4" width="9.9" height="9.0" fill="#d5ccc6"/>
<rect x="944.1" y="169.5" width="22.6" height="16.0" fill="#e1dcd9"/>
<rect x="950.6" y="172.9" width="7.7" height="8.4" fill="#d5ccc6"/>
<rect x="968.8" y="169.5" width="24.9" height="16.0" fill="#dcd7d2"/>
<rect x="976.8" y="173.8" width="8.3" height="8.7" fill="#d5ccc6"/>
<rect x="995.7" y="169.5" width="18.6" height="16.0" fill="#e4e0dc"/>
<rect x="1016.3" y="169.5" width="17.6" height="16.0" fill="#dedad7"/>
<rect x="1017.3" y="171.9" width="7.7" height="6.0" fill="#d5ccc6"/>
<rect x="1035.9" y="169.5" width="16.7" height="16.0" fill="#dcd7d2"/>
<rect x="1040.7" y="171.6" width="6.7" height="9.3" fill="#d5ccc6"/>
<rect x="1054.6" y="169.5" width="22.2" height="16.0" fill="#dedad7"/>
<rect x="1060.8" y="174.8" width="9.5" height="6.0" fill="#d5ccc6"/>
<rect x="1078.8" y="169.5" width="28.9" height="16.0" fill="#dcd7d2"/>
<rect x="1087.2" y="173.8" width="11.5" height="9.9" fill="#d5ccc6"/>
<rect x="1109.7" y="169.5" width="17.8" height="16.0" fill="#dcd7d2"/>
<rect x="1129.5" y="169.5" width="30.0" height="16.0" fill="#e4e0dc"/>
<rect x="1135.9" y="172.6" width="11.8" height="5.8" fill="#d5ccc6"/>
<rect x="1161.5" y="169.5" width="22.5" height="16.0" fill="#e1dcd9"/>
<rect x="1186.0" y="169.5" width="26.9" height="16.0" fill="#e4e0dc"/>
<rect x="1188.7" y="172.0" width="14.0" height="6.9" fill="#d5ccc6"/>
<rect x="1214.9" y="169.5" width="15.8" height="16.0" fill="#e4e0dc"/>
<rect x="1232.7" y="169.5" width="20.8" height="16.0" fill="#dedad7"/>
<rect x="1255.5" y="169.5" width="21.6" height="16.0" fill="#e4e0dc"/>
<rect x="1261.3" y="171.9" width="10.7" height="6.2" fill="#d5ccc6"/>
<rect x="1279.2" y="169.5" width="22.2" height="16.0" fill="#dedad7"/>
<rect x="1281.3" y="172.9" width="12.1" height="9.1" fill="#d5ccc6"/>
<rect x="1303.4" y="169.5" width="27.4" height="16.0" fill="#dedad7"/>
<rect x="1332.8" y="169.5" width="15.9" height="16.0" fill="#e1dcd9"/>
<rect x="1350.7" y="169.5" width="18.6" height="16.0" fill="#dcd7d2"/>
<rect x="1352.0" y="173.1" width="7.2" height="8.5" fill="#d5ccc6"/>
<rect x="944.8" y="187.5" width="27.3" height="17.9" fill="#e4e0dc"/>
<rect x="974.1" y="187.5" width="31.9" height="17.9" fill="#dcd7d2"/>
<rect x="1008.0" y="187.5" width="30.6" height="17.9" fill="#dedad7"/>
<rect x="1017.7" y="190.2" width="14.1" height="9.6" fill="#d5ccc6"/>
<rect x="1040.7" y="187.5" width="20.6" height="17.9" fill="#dedad7"/>
<rect x="1046.7" y="189.0" width="12.7" height="11.1" fill="#d5ccc6"/>
<rect x="1063.2" y="187.5" width="29.2" height="17.9" fill="#dedad7"/>
<rect x="1068.9" y="193.5" width="17.2" height="6.1" fill="#d5ccc6"/>
<rect x="1094.4" y="187.5" width="25.3" height="17.9" fill="#dcd7d2"/>
<rect x="1100.2" y="192.0" width="8.7" height="9.6" fill="#d5ccc6"/>
<rect x="1121.8" y="187.5" width="30.9" height="17.9" fill="#dedad7"/>
<rect x="1154.7" y="187.5" width="31.4" height="17.9" fill="#e1dcd9"/>
<rect x="1159.1" y="188.6" width="17.2" height="8.5" fill="#d5ccc6"/>
<rect x="1188.1" y="187.5" width="32.0" height="17.9" fill="#e4e0dc"/>
<rect x="1222.0" y="187.5" width="24.3" height="17.9" fill="#e4e0dc"/>
<rect x="1226.2" y="191.0" width="12.5" height="6.5" fill="#d5ccc6"/>
<rect x="1248.3" y="187.5" width="15.0" height="17.9" fill="#dedad7"/>
<rect x="1252.3" y="193.0" width="8.1" height="10.4" fill="#d5ccc6"/>
<rect x="1265.3" y="187.5" width="18.9" height="17.9" fill="#dedad7"/>
<rect x="1266.7" y="192.6" width="9.2" height="9.1" fill="#d5ccc6"/>
<rect x="1286.2" y="187.5" width="22.1" height="17.9" fill="#e4e0dc"/>
<rect x="1310.3" y="187.5" width="22.0" height="17.9" fill="#dcd7d2"/>
<rect x="1334.3" y="187.5" width="29.2" height="17.9" fill="#dcd7d2"/>
<rect x="1342.2" y="189.7" width="11.5" height="6.2" fill="#d5ccc6"/>
<rect x="944.3" y="207.4" width="21.5" height="14.2" fill="#e4e0dc"/>
<rect x="967.8" y="207.4" width="28.3" height="14.2" fill="#e1dcd9"/>
<rect x="998.1" y="207.4" width="32.5" height="14.2" fill="#e4e0dc"/>
<rect x="1006.4" y="211.5" width="18.6" height="7.7" fill="#d5ccc6"/>
<rect x="1032.6" y="207.4" width="16.8" height="14.2" fill="#e4e0dc"/>
<rect x="1051.5" y="207.4" width="23.7" height="14.2" fill="#e4e0dc"/>
<rect x="1055.0" y="210.9" width="14.6" height="9.6" fill="#d5ccc6"/>
<rect x="1077.2" y="207.4" width="31.0" height="14.2" fill="#e4e0dc"/>
<rect x="1081.9" y="209.5" width="16.7" height="7.3" fill="#d5ccc6"/>
<rect x="1110.2" y="207.4" width="17.9" height="14.2" fill="#dedad7"/>
<rect x="1115.6" y="211.9" width="9.0" height="9.3" fill="#d5ccc6"/>
<rect x="1130.1" y="207.4" width="32.7" height="14.2" fill="#e1dcd9"/>
<rect x="1164.8" y="207.4" width="28.7" height="14.2" fill="#e4e0dc"/>
<rect x="1168.5" y="211.5" width="16.5" height="8.1" fill="#d5ccc6"/>
<rect x="1195.5" y="207.4" width="17.1" height="14.2" fill="#dedad7"/>
<rect x="1214.6" y="207.4" width="23.0" height="14.2" fill="#e4e0dc"/>
<rect x="1239.7" y="207.4" width="19.9" height="14.2" fill="#dcd7d2"/>
<rect x="1241.2" y="210.9" width="6.8" height="7.1" fill="#d5ccc6"/>
<rect x="1261.5" y="207.4" width="18.7" height="14.2" fill="#dcd7d2"/>
<rect x="1282.3" y="207.4" width="27.4" height="14.2" fill="#dcd7d2"/>
<rect x="1311.7" y="207.4" width="20.2" height="14.2" fill="#e4e0dc"/>
<rect x="1317.5" y="210.0" width="8.1" height="8.6" fill="#d5ccc6"/>
<rect x="1333.9" y="207.4" width="21.8" height="14.2" fill="#e4e0dc"/>
<rect x="1357.6" y="207.4" width="20.4" height="14.2" fill="#dcd7d2"/>
<rect x="1361.1" y="210.7" width="7.3" height="5.6" fill="#d5ccc6"/>
<rect x="935.9" y="223.6" width="20.7" height="20.6" fill="#e4e0dc"/>
<rect x="937.9" y="224.8" width="10.8" height="12.8" fill="#d5ccc6"/>
<rect x="958.6" y="223.6" width="32.9" height="20.6" fill="#e4e0dc"/>
<rect x="960.5" y="225.0" width="14.5" height="10.5" fill="#d5ccc6"/>
<rect x="993.5" y="223.6" width="24.6" height="20.6" fill="#dedad7"/>
<rect x="999.3" y="229.7" width="10.0" height="9.2" fill="#d5ccc6"/>
<rect x="1020.2" y="223.6" width="23.5" height="20.6" fill="#e4e0dc"/>
<rect x="1045.6" y="223.6" width="30.4" height="20.6" fill="#dedad7"/>
<rect x="1078.0" y="223.6" width="19.9" height="20.6" fill="#dcd7d2"/>
<rect x="1081.0" y="225.3" width="10.2" height="12.5" fill="#d5ccc6"/>
<rect x="1099.9" y="223.6" width="21.8" height="20.6" fill="#e4e0dc"/>
<rect x="1103.9" y="226.7" width="12.9" height="9.2" fill="#d5ccc6"/>
<rect x="1123.7" y="223.6" width="30.5" height="20.6" fill="#e1dcd9"/>
<rect x="1130.6" y="229.2" width="17.6" height="12.0" fill="#d5ccc6"/>
<rect x="1156.3" y="223.6" width="17.2" height="20.6" fill="#e4e0dc"/>
<rect x="1161.6" y="226.0" width="10.9" height="10.4" fill="#d5ccc6"/>
<rect x="1175.4" y="223.6" width="24.6" height="20.6" fill="#dedad7"/>
<rect x="1180.2" y="226.5" width="8.3" height="12.9" fill="#d5ccc6"/>
<rect x="1202.0" y="223.6" width="16.1" height="20.6" fill="#e4e0dc"/>
<rect x="1220.0" y="223.6" width="17.8" height="20.6" fill="#dedad7"/>
<rect x="1225.8" y="227.2" width="10.8" height="9.6" fill="#d5ccc6"/>
<rect x="1239.8" y="223.6" width="26.7" height="20.6" fill="#dedad7"/>
<rect x="1245.2" y="228.0" width="16.9" height="10.8" fill="#d5ccc6"/>
<rect x="1268.5" y="223.6" width="19.7" height="20.6" fill="#dedad7"/>
<rect x="1271.3" y="225.3" width="9.0" height="7.3" fill="#d5ccc6"/>
<rect x="1290.2" y="223.6" width="26.3" height="20.6" fill="#dcd7d2"/>
<rect x="1318.5" y="223.6" width="31.4" height="20.6" fill="#e4e0dc"/>
<rect x="1351.9" y="223.6" width="29.4" height="20.6" fill="#e4e0dc"/>
<rect x="924.5" y="246.2" width="21.7" height="21.3" fill="#dcd7d2"/>
<rect x="948.2" y="246.2" width="20.2" height="21.3" fill="#e1dcd9"/>
<rect x="970.4" y="246.2" width="17.6" height="21.3" fill="#dcd7d2"/>
<rect x="972.7" y="248.7" width="9.5" height="7.8" fill="#d5ccc6"/>
<rect x="990.0" y="246.2" width="18.7" height="21.3" fill="#e4e0dc"/>
<rect x="992.6" y="249.4" width="11.0" height="12.9" fill="#d5ccc6"/>
<rect x="1010.7" y="246.2" width="17.3" height="21.3" fill="#dcd7d2"/>
<rect x="1014.5" y="247.2" width="6.1" height="13.3" fill="#d5ccc6"/>
<rect x="1030.0" y="246.2" width="29.9" height="21.3" fill="#e1dcd9"/>
<rect x="1061.9" y="246.2" width="20.8" height="21.3" fill="#dedad7"/>
<rect x="1067.8" y="252.7" width="12.1" height="10.8" fill="#d5ccc6"/>
<rect x="1084.7" y="246.2" width="18.5" height="21.3" fill="#e1dcd9"/>
<rect x="1105.2" y="246.2" width="17.5" height="21.3" fill="#e1dcd9"/>
<rect x="1124.7" y="246.2" width="22.4" height="21.3" fill="#e1dcd9"/>
<rect x="1127.6" y="248.3" width="13.2" height="12.9" fill="#d5ccc6"/>
<rect x="1149.2" y="246.2" width="25.5" height="21.3" fill="#e4e0dc"/>
<rect x="1156.0" y="253.1" width="16.4" height="8.3" fill="#d5ccc6"/>
<rect x="1176.7" y="246.2" width="17.3" height="21.3" fill="#e1dcd9"/>
<rect x="1196.0" y="246.2" width="29.5" height="21.3" fill="#e4e0dc"/>
<rect x="1200.3" y="250.4" width="10.9" height="7.4" fill="#d5ccc6"/>
<rect x="1227.5" y="246.2" width="18.4" height="21.3" fill="#e4e0dc"/>
<rect x="1230.3" y="251.0" width="8.3" height="13.1" fill="#d5ccc6"/>
<rect x="1247.8" y="246.2" width="32.8" height="21.3" fill="#dcd7d2"/>
<rect x="1257.5" y="252.9" width="13.3" height="11.0" fill="#d5ccc6"/>
<rect x="1282.6" y="246.2" width="32.3" height="21.3" fill="#e4e0dc"/>
<rect x="1316.9" y="246.2" width="31.2" height="21.3" fill="#dcd7d2"/>
<rect x="1321.4" y="251.1" width="12.0" height="13.8" fill="#d5ccc6"/>
<rect x="1350.1" y="246.2" width="22.1" height="21.3" fill="#dedad7"/>
<rect x="1355.5" y="251.5" width="12.8" height="9.2" fill="#d5ccc6"/>
<rect x="934.6" y="269.4" width="23.0" height="14.0" fill="#dcd7d2"/>
<rect x="959.7" y="269.4" width="21.5" height="14.0" fill="#e4e0dc"/>
<rect x="962.0" y="270.9" width="10.7" height="5.8" fill="#d5ccc6"/>
<rect x="983.2" y="269.4" width="31.8" height="14.0" fill="#dedad7"/>
<rect x="1017.0" y="269.4" width="18.4" height="14.0" fill="#e4e0dc"/>
<rect x="1037.4" y="269.4" width="28.0" height="14.0" fill="#e1dcd9"/>
<rect x="1045.9" y="271.0" width="11.7" height="7.2" fill="#d5ccc6"/>
<rect x="1067.4" y="269.4" width="21.0" height="14.0" fill="#e4e0dc"/>
<rect x="1070.3" y="271.9" width="7.9" height="7.5" fill="#d5ccc6"/>
<rect x="1090.4" y="269.4" width="15.1" height="14.0" fill="#dedad7"/>
<rect x="1092.9" y="271.5" width="5.6" height="7.1" fill="#d5ccc6"/>
<rect x="1107.4" y="269.4" width="24.6" height="14.0" fill="#e4e0dc"/>
<rect x="1108.6" y="273.9" width="10.9" height="8.3" fill="#d5ccc6"/>
<rect x="1134.0" y="269.4" width="30.9" height="14.0" fill="#e4e0dc"/>
<rect x="1166.9" y="269.4" width="32.7" height="14.0" fill="#e4e0dc"/>
<rect x="1201.6" y="269.4" width="29.8" height="14.0" fill="#e1dcd9"/>
<rect x="1233.4" y="269.4" width="22.9" height="14.0" fill="#dedad7"/>
<rect x="1237.3" y="274.1" width="14.5" height="7.9" fill="#d5ccc6"/>
<rect x="1258.3" y="269.4" width="17.5" height="14.0" fill="#e1dcd9"/>
<rect x="1261.2" y="274.1" width="6.0" height="6.5" fill="#d5ccc6"/>
<rect x="1277.9" y="269.4" width="24.9" height="14.0" fill="#e4e0dc"/>
<rect x="1304.7" y="269.4" width="29.9" height="14.0" fill="#dedad7"/>
<rect x="1336.7" y="269.4" width="23.5" height="14.0" fill="#e1dcd9"/>
<rect x="1362.2" y="269.4" width="31.8" height="14.0" fill="#dedad7"/>
<rect x="1366.9" y="271.6" width="19.5" height="7.0" fill="#d5ccc6"/>
<rect x="928.9" y="285.4" width="17.6" height="18.6" fill="#e4e0dc"/>
<rect x="948.5" y="285.4" width="22.2" height="18.6" fill="#dcd7d2"/>
<rect x="953.9" y="290.2" width="12.5" height="10.9" fill="#d5ccc6"/>
<rect x="972.7" y="285.4" width="18.8" height="18.6" fill="#dedad7"/>
<rect x="993.5" y="285.4" width="18.1" height="18.6" fill="#dedad7"/>
<rect x="999.4" y="289.8" width="7.5" height="9.9" fill="#d5ccc6"/>
<rect x="1013.6" y="285.4" width="20.6" height="18.6" fill="#dedad7"/>
<rect x="1036.2" y="285.4" width="26.9" height="18.6" fill="#dcd7d2"/>
<rect x="1065.1" y="285.4" width="17.7" height="18.6" fill="#e1dcd9"/>
<rect x="1084.8" y="285.4" width="25.2" height="18.6" fill="#dcd7d2"/>
<rect x="1090.2" y="287.4" width="10.8" height="11.1" fill="#d5ccc6"/>
<rect x="1111.9" y="285.4" width="31.9" height="18.6" fill="#e1dcd9"/>
<rect x="1145.8" y="285.4" width="30.0" height="18.6" fill="#dcd7d2"/>
<rect x="1177.8" y="285.4" width="17.6" height="18.6" fill="#e4e0dc"/>
<rect x="1197.4" y="285.4" width="21.0" height="18.6" fill="#dedad7"/>
<rect x="1220.4" y="285.4" width="30.6" height="18.6" fill="#e4e0dc"/>
<rect x="1223.2" y="290.9" width="17.1" height="7.3" fill="#d5ccc6"/>
<rect x="1253.0" y="285.4" width="21.2" height="18.6" fill="#dcd7d2"/>
<rect x="1256.4" y="286.8" width="9.0" height="6.5" fill="#d5ccc6"/>
<rect x="1276.2" y="285.4" width="28.4" height="18.6" fill="#e1dcd9"/>
<rect x="1278.2" y="290.6" width="13.0" height="9.4" fill="#d5ccc6"/>
<rect x="1306.5" y="285.4" width="23.2" height="18.6" fill="#dedad7"/>
<rect x="1331.8" y="285.4" width="15.2" height="18.6" fill="#e1dcd9"/>
<rect x="1349.0" y="285.4" width="27.3" height="18.6" fill="#dedad7"/>
<rect x="1353.3" y="288.2" width="14.5" height="9.2" fill="#d5ccc6"/>
<rect x="930.9" y="306.0" width="30.2" height="18.6" fill="#e4e0dc"/>
<rect x="963.1" y="306.0" width="30.1" height="18.6" fill="#dcd7d2"/>
<rect x="967.6" y="309.3" width="15.5" height="6.8" fill="#d5ccc6"/>
<rect x="995.2" y="306.0" width="27.1" height="18.6" fill="#dedad7"/>
<rect x="1024.4" y="306.0" width="27.2" height="18.6" fill="#e1dcd9"/>
<rect x="1030.7" y="311.9" width="15.3" height="12.1" fill="#d5ccc6"/>
<rect x="1053.5" y="306.0" width="21.9" height="18.6" fill="#e4e0dc"/>
<rect x="1057.9" y="308.7" width="8.4" height="9.8" fill="#d5ccc6"/>
<rect x="1077.4" y="306.0" width="29.3" height="18.6" fill="#e1dcd9"/>
<rect x="1108.8" y="306.0" width="25.9" height="18.6" fill="#dedad7"/>
<rect x="1136.7" y="306.0" width="30.1" height="18.6" fill="#e4e0dc"/>
<rect x="1140.5" y="311.6" width="13.8" height="6.7" fill="#d5ccc6"/>
<rect x="1168.7" y="306.0" width="27.1" height="18.6" fill="#dcd7d2"/>
<rect x="1177.2" y="309.0" width="14.8" height="7.9" fill="#d5ccc6"/>
<rect x="1197.8" y="306.0" width="32.0" height="18.6" fill="#dcd7d2"/>
<rect x="1202.9" y="311.8" width="16.2" height="8.8" fill="#d5ccc6"/>
<rect x="1231.8" y="306.0" width="30.0" height="18.6" fill="#e1dcd9"/>
<rect x="1240.7" y="309.7" width="12.3" height="10.1" fill="#d5ccc6"/>
<rect x="1263.8" y="306.0" width="23.1" height="18.6" fill="#e1dcd9"/>
<rect x="1289.0" y="306.0" width="29.4" height="18.6" fill="#dedad7"/>
<rect x="1320.3" y="306.0" width="24.7" height="18.6" fill="#e1dcd9"/>
<rect x="1325.7" y="307.8" width="8.1" height="10.0" fill="#d5ccc6"/>
<rect x="1347.1" y="306.0" width="26.1" height="18.6" fill="#e1dcd9"/>
<rect x="922.6" y="326.6" width="23.5" height="19.2" fill="#dedad7"/>
<rect x="926.3" y="327.6" width="12.1" height="10.3" fill="#d5ccc6"/>
<rect x="948.1" y="326.6" width="19.9" height="19.2" fill="#e4e0dc"/>
<rect x="950.0" y="330.3" width="7.5" height="12.0" fill="#d5ccc6"/>
<rect x="970.0" y="326.6" width="20.2" height="19.2" fill="#e1dcd9"/>
<rect x="973.1" y="331.8" width="10.8" height="11.6" fill="#d5ccc6"/>
<rect x="992.2" y="326.6" width="24.2" height="19.2" fill="#e4e0dc"/>
<rect x="996.2" y="328.7" width="12.8" height="8.8" fill="#d5ccc6"/>
<rect x="1018.4" y="326.6" width="23.3" height="19.2" fill="#e4e0dc"/>
<rect x="1024.0" y="328.5" width="13.7" height="10.2" fill="#d5ccc6"/>
<rect x="1043.7" y="326.6" width="15.0" height="19.2" fill="#dedad7"/>
<rect x="1060.7" y="326.6" width="32.0" height="19.2" fill="#e1dcd9"/>
<rect x="1094.7" y="326.6" width="24.3" height="19.2" fill="#dedad7"/>
<rect x="1121.1" y="326.6" width="22.3" height="19.2" fill="#e4e0dc"/>
<rect x="1145.4" y="326.6" width="27.8" height="19.2" fill="#e1dcd9"/>
<rect x="1175.2" y="326.6" width="21.1" height="19.2" fill="#e4e0dc"/>
<rect x="1198.3" y="326.6" width="31.8" height="19.2" fill="#e1dcd9"/>
<rect x="1232.1" y="326.6" width="25.3" height="19.2" fill="#e1dcd9"/>
<rect x="1239.4" y="328.5" width="12.3" height="8.3" fill="#d5ccc6"/>
<rect x="1259.4" y="326.6" width="17.5" height="19.2" fill="#dcd7d2"/>
<rect x="1260.9" y="332.3" width="7.7" height="10.0" fill="#d5ccc6"/>
<rect x="1278.9" y="326.6" width="21.4" height="19.2" fill="#dcd7d2"/>
<rect x="1302.3" y="326.6" width="18.3" height="19.2" fill="#e1dcd9"/>
<rect x="1306.5" y="331.6" width="8.7" height="11.0" fill="#d5ccc6"/>
<rect x="1322.6" y="326.6" width="18.9" height="19.2" fill="#e4e0dc"/>
<rect x="1326.6" y="332.4" width="10.0" height="10.1" fill="#d5ccc6"/>
<rect x="1343.5" y="326.6" width="21.9" height="19.2" fill="#dcd7d2"/>
<rect x="1347.6" y="331.9" width="12.3" height="6.7" fill="#d5ccc6"/>
<rect x="940.6" y="347.8" width="21.1" height="10.7" fill="#dcd7d2"/>
<rect x="963.7" y="347.8" width="17.9" height="10.7" fill="#e1dcd9"/>
<rect x="983.5" y="347.8" width="27.3" height="10.7" fill="#dcd7d2"/>
<rect x="1012.8" y="347.8" width="21.6" height="10.7" fill="#e4e0dc"/>
<rect x="1036.4" y="347.8" width="31.7" height="10.7" fill="#e1dcd9"/>
<rect x="1070.2" y="347.8" width="30.5" height="10.7" fill="#e1dcd9"/>
<rect x="1076.2" y="349.4" width="14.5" height="6.5" fill="#d5ccc6"/>
<rect x="1102.7" y="347.8" width="18.7" height="10.7" fill="#e4e0dc"/>
<rect x="1123.4" y="347.8" width="17.8" height="10.7" fill="#e1dcd9"/>
<rect x="1143.2" y="347.8" width="23.2" height="10.7" fill="#dedad7"/>
<rect x="1168.4" y="347.8" width="26.9" height="10.7" fill="#dcd7d2"/>
<rect x="1197.3" y="347.8" width="21.3" height="10.7" fill="#e4e0dc"/>
<rect x="1198.6" y="350.7" width="12.7" height="4.8" fill="#d5ccc6"/>
<rect x="1220.5" y="347.8" width="18.4" height="10.7" fill="#dcd7d2"/>
<rect x="1241.0" y="347.8" width="19.4" height="10.7" fill="#dedad7"/>
<rect x="1246.6" y="350.9" width="8.3" height="4.9" fill="#d5ccc6"/>
<rect x="1262.3" y="347.8" width="15.2" height="10.7" fill="#e1dcd9"/>
<rect x="1264.6" y="350.5" width="7.3" height="6.1" fill="#d5ccc6"/>
<rect x="1279.6" y="347.8" width="30.0" height="10.7" fill="#e4e0dc"/>
<rect x="1284.7" y="350.9" width="14.0" height="6.6" fill="#d5ccc6"/>
<rect x="1311.6" y="347.8" width="31.5" height="10.7" fill="#e1dcd9"/>
<rect x="1345.0" y="347.8" width="23.8" height="10.7" fill="#e1dcd9"/>
<rect x="1346.3" y="350.5" width="11.8" height="4.9" fill="#d5ccc6"/>
<rect x="928.5" y="360.5" width="28.7" height="16.2" fill="#e4e0dc"/>
<rect x="959.3" y="360.5" width="18.4" height="16.2" fill="#dcd7d2"/>
<rect x="962.8" y="362.5" width="11.7" height="7.2" fill="#d5ccc6"/>
<rect x="979.7" y="360.5" width="29.4" height="16.2" fill="#dcd7d2"/>
<rect x="1011.1" y="360.5" width="16.6" height="16.2" fill="#e1dcd9"/>
<rect x="1015.2" y="364.5" width="7.9" height="8.8" fill="#d5ccc6"/>
<rect x="1029.7" y="360.5" width="26.0" height="16.2" fill="#e1dcd9"/>
<rect x="1057.7" y="360.5" width="24.6" height="16.2" fill="#e4e0dc"/>
<rect x="1061.2" y="363.7" width="13.4" height="6.3" fill="#d5ccc6"/>
<rect x="1084.3" y="360.5" width="19.4" height="16.2" fill="#dedad7"/>
<rect x="1105.7" y="360.5" width="21.1" height="16.2" fill="#dedad7"/>
<rect x="1128.8" y="360.5" width="19.6" height="16.2" fill="#e4e0dc"/>
<rect x="1150.5" y="360.5" width="16.9" height="16.2" fill="#dcd7d2"/>
<rect x="1154.5" y="365.4" width="8.1" height="9.8" fill="#d5ccc6"/>
<rect x="1169.3" y="360.5" width="25.3" height="16.2" fill="#e1dcd9"/>
<rect x="1196.6" y="360.5" width="17.6" height="16.2" fill="#dedad7"/>
<rect x="1199.8" y="363.3" width="10.8" height="6.5" fill="#d5ccc6"/>
<rect x="1216.2" y="360.5" width="25.3" height="16.2" fill="#dedad7"/>
<rect x="1218.8" y="363.2" width="13.1" height="5.6" fill="#d5ccc6"/>
<rect x="1243.5" y="360.5" width="18.0" height="16.2" fill="#e1dcd9"/>
<rect x="1248.0" y="362.1" width="6.4" height="10.5" fill="#d5ccc6"/>
<rect x="1263.5" y="360.5" width="28.6" height="16.2" fill="#dcd7d2"/>
<rect x="1294.1" y="360.5" width="18.4" height="16.2" fill="#dedad7"/>
<rect x="1295.8" y="365.4" width="9.2" height="8.9" fill="#d5ccc6"/>
<rect x="1314.5" y="360.5" width="22.7" height="16.2" fill="#dedad7"/>
<rect x="1318.0" y="365.1" width="14.4" height="7.5" fill="#d5ccc6"/>
<rect x="1339.2" y="360.5" width="23.1" height="16.2" fill="#dcd7d2"/>
<rect x="1364.3" y="360.5" width="21.5" height="16.2" fill="#e4e0dc"/>
<rect x="1371.2" y="365.1" width="12.3" height="7.6" fill="#d5ccc6"/>
<rect x="925.4" y="378.8" width="27.8" height="18.2" fill="#e1dcd9"/>
<rect x="930.2" y="381.8" width="9.1" height="12.0" fill="#d5ccc6"/>
<rect x="955.2" y="378.8" width="22.6" height="18.2" fill="#dcd7d2"/>
<rect x="979.8" y="378.8" width="25.8" height="18.2" fill="#dedad7"/>
<rect x="1007.6" y="378.8" width="22.5" height="18.2" fill="#e1dcd9"/>
<rect x="1012.7" y="382.8" width="9.1" height="10.5" fill="#d5ccc6"/>
<rect x="1032.1" y="378.8" width="26.8" height="18.2" fill="#dcd7d2"/>
<rect x="1060.9" y="378.8" width="24.0" height="18.2" fill="#e1dcd9"/>
<rect x="1065.4" y="380.3" width="11.9" height="6.5" fill="#d5ccc6"/>
<rect x="1086.9" y="378.8" width="27.7" height="18.2" fill="#e1dcd9"/>
<rect x="1116.6" y="378.8" width="29.9" height="18.2" fill="#e4e0dc"/>
<rect x="1148.5" y="378.8" width="28.5" height="18.2" fill="#dcd7d2"/>
<rect x="1178.9" y="378.8" width="22.4" height="18.2" fill="#e1dcd9"/>
<rect x="1185.4" y="380.8" width="7.9" height="7.6" fill="#d5ccc6"/>
<rect x="1203.3" y="378.8" width="25.4" height="18.2" fill="#dcd7d2"/>
<rect x="1205.3" y="382.5" width="10.1" height="9.5" fill="#d5ccc6"/>
<rect x="1230.7" y="378.8" width="20.7" height="18.2" fill="#dedad7"/>
<rect x="1233.7" y="383.6" width="9.1" height="10.7" fill="#d5ccc6"/>
<rect x="1253.4" y="378.8" width="30.6" height="18.2" fill="#e4e0dc"/>
<rect x="1286.0" y="378.8" width="22.7" height="18.2" fill="#dcd7d2"/>
<rect x="1290.6" y="383.7" width="13.7" height="10.4" fill="#d5ccc6"/>
<rect x="1310.7" y="378.8" width="26.0" height="18.2" fill="#dedad7"/>
<rect x="1338.6" y="378.8" width="22.7" height="18.2" fill="#e4e0dc"/>
<rect x="1363.4" y="378.8" width="26.6" height="18.2" fill="#e4e0dc"/>
</g></g>
<g clip-path="url(#c3)"><polygon points="1110.0,245.0 1284.0,240.0 1284.0,452.0 990.0,452.0 1010.0,300.0" fill="#fdfcfb"/><g transform="rotate(-4 1137.0 346.0)">
<rect x="945.6" y="134.8" width="18.3" height="15.0" fill="#e4e0dc"/>
<rect x="965.9" y="134.8" width="13.1" height="15.0" fill="#e4e0dc"/>
<rect x="981.0" y="134.8" width="23.5" height="15.0" fill="#e1dcd9"/>
<rect x="1006.4" y="134.8" width="24.3" height="15.0" fill="#dcd7d2"/>
<rect x="1013.6" y="138.5" width="10.4" height="10.1" fill="#d5ccc6"/>
<rect x="1032.8" y="134.8" width="26.7" height="15.0" fill="#dedad7"/>
<rect x="1035.4" y="138.1" width="13.5" height="9.6" fill="#d5ccc6"/>
<rect x="1061.4" y="134.8" width="24.8" height="15.0" fill="#dcd7d2"/>
<rect x="1088.2" y="134.8" width="16.6" height="15.0" fill="#dedad7"/>
<rect x="1091.0" y="136.2" width="9.3" height="9.1" fill="#d5ccc6"/>
<rect x="1106.8" y="134.8" width="22.1" height="15.0" fill="#e1dcd9"/>
<rect x="1130.9" y="134.8" width="24.5" height="15.0" fill="#e4e0dc"/>
<rect x="1157.4" y="134.8" width="23.9" height="15.0" fill="#dedad7"/>
<rect x="1161.3" y="137.2" width="10.2" height="7.2" fill="#d5ccc6"/>
<rect x="1183.2" y="134.8" width="24.5" height="15.0" fill="#dcd7d2"/>
<rect x="1209.8" y="134.8" width="26.8" height="15.0" fill="#dedad7"/>
<rect x="1216.7" y="137.9" width="15.2" height="7.5" fill="#d5ccc6"/>
<rect x="1238.5" y="134.8" width="15.9" height="15.0" fill="#e4e0dc"/>
<rect x="1242.0" y="139.4" width="6.9" height="10.2" fill="#d5ccc6"/>
<rect x="1256.5" y="134.8" width="27.2" height="15.0" fill="#e1dcd9"/>
<rect x="1259.2" y="136.9" width="10.9" height="7.7" fill="#d5ccc6"/>
<rect x="1285.7" y="134.8" width="18.8" height="15.0" fill="#dcd7d2"/>
<rect x="1290.0" y="138.4" width="12.0" height="10.1" fill="#d5ccc6"/>
<rect x="1306.4" y="134.8" width="18.2" height="15.0" fill="#e1dcd9"/>
<rect x="1308.4" y="136.6" width="11.0" height="5.7" fill="#d5ccc6"/>
<rect x="1326.7" y="134.8" width="16.8" height="15.0" fill="#e1dcd9"/>
<rect x="1345.4" y="134.8" width="25.0" height="15.0" fill="#dedad7"/>
<rect x="1347.4" y="136.4" width="12.6" height="6.7" fill="#d5ccc6"/>
<rect x="936.2" y="151.7" width="24.8" height="10.5" fill="#dcd7d2"/>
<rect x="937.6" y="154.1" width="12.6" height="4.2" fill="#d5ccc6"/>
<rect x="963.0" y="151.7" width="23.1" height="10.5" fill="#e1dcd9"/>
<rect x="988.1" y="151.7" width="26.5" height="10.5" fill="#dcd7d2"/>
<rect x="994.4" y="154.0" width="9.4" height="5.8" fill="#d5ccc6"/>
<rect x="1016.6" y="151.7" width="13.9" height="10.5" fill="#e1dcd9"/>
<rect x="1032.4" y="151.7" width="16.4" height="10.5" fill="#e4e0dc"/>
<rect x="1050.8" y="151.7" width="25.4" height="10.5" fill="#dedad7"/>
<rect x="1057.8" y="153.7" width="11.3" height="4.5" fill="#d5ccc6"/>
<rect x="1078.3" y="151.7" width="23.1" height="10.5" fill="#dedad7"/>
<rect x="1083.2" y="152.9" width="13.3" height="4.9" fill="#d5ccc6"/>
<rect x="1103.4" y="151.7" width="20.2" height="10.5" fill="#dedad7"/>
<rect x="1106.2" y="154.6" width="7.6" height="5.0" fill="#d5ccc6"/>
<rect x="1125.6" y="151.7" width="26.4" height="10.5" fill="#e1dcd9"/>
<rect x="1154.0" y="151.7" width="15.6" height="10.5" fill="#e4e0dc"/>
<rect x="1171.6" y="151.7" width="16.3" height="10.5" fill="#dedad7"/>
<rect x="1174.3" y="153.9" width="7.2" height="6.4" fill="#d5ccc6"/>
<rect x="1189.9" y="151.7" width="19.9" height="10.5" fill="#dedad7"/>
<rect x="1195.6" y="155.0" width="9.2" height="7.3" fill="#d5ccc6"/>
<rect x="1211.8" y="151.7" width="26.6" height="10.5" fill="#dedad7"/>
<rect x="1213.3" y="153.2" width="12.0" height="7.4" fill="#d5ccc6"/>
<rect x="1240.4" y="151.7" width="27.6" height="10.5" fill="#dcd7d2"/>
<rect x="1270.0" y="151.7" width="25.6" height="10.5" fill="#dcd7d2"/>
<rect x="1297.6" y="151.7" width="20.3" height="10.5" fill="#e4e0dc"/>
<rect x="1299.6" y="154.1" width="9.8" height="6.1" fill="#d5ccc6"/>
<rect x="1319.9" y="151.7" width="26.3" height="10.5" fill="#dedad7"/>
<rect x="1321.3" y="152.8" width="12.2" height="4.9" fill="#d5ccc6"/>
<rect x="1348.2" y="151.7" width="20.4" height="10.5" fill="#dcd7d2"/>
<rect x="1351.3" y="155.3" width="11.8" height="7.0" fill="#d5ccc6"/>
<rect x="941.6" y="164.3" width="15.1" height="12.0" fill="#e4e0dc"/>
<rect x="943.6" y="165.4" width="9.3" height="7.1" fill="#d5ccc6"/>
<rect x="958.7" y="164.3" width="27.4" height="12.0" fill="#e4e0dc"/>
<rect x="965.4" y="165.7" width="13.3" height="6.9" fill="#d5ccc6"/>
<rect x="988.2" y="164.3" width="12.6" height="12.0" fill="#e1dcd9"/>
<rect x="1002.8" y="164.3" width="16.1" height="12.0" fill="#e1dcd9"/>
<rect x="1020.9" y="164.3" width="21.6" height="12.0" fill="#dcd7d2"/>
<rect x="1025.6" y="167.1" width="11.7" height="6.1" fill="#d5ccc6"/>
<rect x="1044.4" y="164.3" width="19.2" height="12.0" fill="#dcd7d2"/>
<rect x="1065.7" y="164.3" width="23.2" height="12.0" fill="#e1dcd9"/>
<rect x="1069.9" y="166.6" width="12.2" height="5.8" fill="#d5ccc6"/>
<rect x="1090.9" y="164.3" width="27.2" height="12.0" fill="#dedad7"/>
<rect x="1120.1" y="164.3" width="17.6" height="12.0" fill="#e1dcd9"/>
<rect x="1139.7" y="164.3" width="13.9" height="12.0" fill="#e4e0dc"/>
<rect x="1141.6" y="166.9" width="8.5" height="5.1" fill="#d5ccc6"/>
<rect x="1155.6" y="164.3" width="14.6" height="12.0" fill="#dedad7"/>
<rect x="1172.2" y="164.3" width="27.7" height="12.0" fill="#e4e0dc"/>
<rect x="1201.9" y="164.3" width="16.2" height="12.0" fill="#e4e0dc"/>
<rect x="1220.1" y="164.3" width="25.4" height="12.0" fill="#dcd7d2"/>
<rect x="1222.7" y="166.6" width="16.1" height="5.5" fill="#d5ccc6"/>
<rect x="1247.4" y="164.3" width="24.8" height="12.0" fill="#e4e0dc"/>
<rect x="1274.2" y="164.3" width="25.4" height="12.0" fill="#e1dcd9"/>
<rect x="1301.6" y="164.3" width="21.1" height="12.0" fill="#e1dcd9"/>
<rect x="1307.6" y="165.9" width="7.8" height="7.8" fill="#d5ccc6"/>
<rect x="1324.7" y="164.3" width="20.3" height="12.0" fill="#dcd7d2"/>
<rect x="1347.1" y="164.3" width="15.9" height="12.0" fill="#dedad7"/>
<rect x="936.3" y="178.3" width="20.2" height="13.7" fill="#e1dcd9"/>
<rect x="958.5" y="178.3" width="23.2" height="13.7" fill="#e1dcd9"/>
<rect x="965.0" y="182.1" width="12.6" height="7.4" fill="#d5ccc6"/>
<rect x="983.7" y="178.3" width="16.0" height="13.7" fill="#dedad7"/>
<rect x="1001.7" y="178.3" width="16.3" height="13.7" fill="#dcd7d2"/>
<rect x="1020.0" y="178.3" width="25.4" height="13.7" fill="#dcd7d2"/>
<rect x="1047.4" y="178.3" width="13.7" height="13.7" fill="#dedad7"/>
<rect x="1063.1" y="178.3" width="16.8" height="13.7" fill="#e1dcd9"/>
<rect x="1081.9" y="178.3" width="18.7" height="13.7" fill="#e4e0dc"/>
<rect x="1084.9" y="179.4" width="12.1" height="9.4" fill="#d5ccc6"/>
<rect x="1102.6" y="178.3" width="23.3" height="13.7" fill="#dedad7"/>
<rect x="1110.0" y="180.7" width="10.8" height="4.8" fill="#d5ccc6"/>
<rect x="1127.8" y="178.3" width="13.5" height="13.7" fill="#dedad7"/>
<rect x="1143.4" y="178.3" width="21.1" height="13.7" fill="#dcd7d2"/>
<rect x="1166.5" y="178.3" width="21.1" height="13.7" fill="#e4e0dc"/>
<rect x="1169.8" y="181.4" width="11.8" height="7.4" fill="#d5ccc6"/>
<rect x="1189.6" y="178.3" width="12.8" height="13.7" fill="#dedad7"/>
<rect x="1204.4" y="178.3" width="15.2" height="13.7" fill="#e4e0dc"/>
<rect x="1207.8" y="180.4" width="10.2" height="8.0" fill="#d5ccc6"/>
<rect x="1221.7" y="178.3" width="25.8" height="13.7" fill="#dcd7d2"/>
<rect x="1224.7" y="180.1" width="15.9" height="8.8" fill="#d5ccc6"/>
<rect x="1249.5" y="178.3" width="18.5" height="13.7" fill="#dcd7d2"/>
<rect x="1270.1" y="178.3" width="22.2" height="13.7" fill="#e1dcd9"/>
<rect x="1276.0" y="181.6" width="9.1" height="7.8" fill="#d5ccc6"/>
<rect x="1294.3" y="178.3" width="15.8" height="13.7" fill="#e4e0dc"/>
<rect x="1296.1" y="182.2" width="10.6" height="7.7" fill="#d5ccc6"/>
<rect x="1312.0" y="178.3" width="21.8" height="13.7" fill="#dedad7"/>
<rect x="1335.8" y="178.3" width="12.7" height="13.7" fill="#e1dcd9"/>
<rect x="926.5" y="194.0" width="16.9" height="10.9" fill="#dcd7d2"/>
<rect x="945.4" y="194.0" width="17.5" height="10.9" fill="#e1dcd9"/>
<rect x="949.8" y="196.0" width="10.4" height="4.1" fill="#d5ccc6"/>
<rect x="964.9" y="194.0" width="27.4" height="10.9" fill="#dedad7"/>
<rect x="994.3" y="194.0" width="23.6" height="10.9" fill="#e1dcd9"/>
<rect x="999.9" y="196.5" width="12.1" height="4.7" fill="#d5ccc6"/>
<rect x="1020.0" y="194.0" width="19.3" height="10.9" fill="#e4e0dc"/>
<rect x="1041.2" y="194.0" width="22.2" height="10.9" fill="#e1dcd9"/>
<rect x="1045.7" y="195.4" width="8.5" height="7.1" fill="#d5ccc6"/>
<rect x="1065.4" y="194.0" width="27.5" height="10.9" fill="#e4e0dc"/>
<rect x="1095.0" y="194.0" width="16.5" height="10.9" fill="#dcd7d2"/>
<rect x="1097.0" y="197.2" width="7.8" height="7.1" fill="#d5ccc6"/>
<rect x="1113.4" y="194.0" width="18.2" height="10.9" fill="#dedad7"/>
<rect x="1133.6" y="194.0" width="26.2" height="10.9" fill="#e4e0dc"/>
<rect x="1161.8" y="194.0" width="15.9" height="10.9" fill="#e1dcd9"/>
<rect x="1179.7" y="194.0" width="22.8" height="10.9" fill="#dedad7"/>
<rect x="1204.5" y="194.0" width="20.4" height="10.9" fill="#e4e0dc"/>
<rect x="1226.8" y="194.0" width="27.4" height="10.9" fill="#e4e0dc"/>
<rect x="1229.0" y="196.2" width="9.2" height="5.1" fill="#d5ccc6"/>
<rect x="1256.2" y="194.0" width="20.2" height="10.9" fill="#dcd7d2"/>
<rect x="1278.4" y="194.0" width="24.4" height="10.9" fill="#e4e0dc"/>
<rect x="1304.8" y="194.0" width="17.4" height="10.9" fill="#dedad7"/>
<rect x="1308.3" y="196.7" width="10.0" height="4.0" fill="#d5ccc6"/>
<rect x="1324.1" y="194.0" width="22.1" height="10.9" fill="#e1dcd9"/>
<rect x="1327.5" y="196.6" width="13.0" height="5.5" fill="#d5ccc6"/>
<rect x="1348.2" y="194.0" width="19.0" height="10.9" fill="#e1dcd9"/>
<rect x="930.1" y="206.8" width="20.7" height="10.2" fill="#dedad7"/>
<rect x="932.3" y="209.2" width="9.9" height="4.8" fill="#d5ccc6"/>
<rect x="952.8" y="206.8" width="19.1" height="10.2" fill="#e1dcd9"/>
<rect x="973.9" y="206.8" width="12.4" height="10.2" fill="#dedad7"/>
<rect x="976.2" y="210.4" width="4.4" height="5.4" fill="#d5ccc6"/>
<rect x="988.3" y="206.8" width="26.9" height="10.2" fill="#e4e0dc"/>
<rect x="1017.2" y="206.8" width="26.3" height="10.2" fill="#dcd7d2"/>
<rect x="1045.5" y="206.8" width="18.4" height="10.2" fill="#e4e0dc"/>
<rect x="1065.9" y="206.8" width="21.5" height="10.2" fill="#dedad7"/>
<rect x="1089.4" y="206.8" width="26.3" height="10.2" fill="#dedad7"/>
<rect x="1117.7" y="206.8" width="15.1" height="10.2" fill="#e1dcd9"/>
<rect x="1120.4" y="209.9" width="9.6" height="5.2" fill="#d5ccc6"/>
<rect x="1134.8" y="206.8" width="13.9" height="10.2" fill="#e1dcd9"/>
<rect x="1150.7" y="206.8" width="26.7" height="10.2" fill="#e4e0dc"/>
<rect x="1151.7" y="208.7" width="9.9" height="4.8" fill="#d5ccc6"/>
<rect x="1179.4" y="206.8" width="12.4" height="10.2" fill="#e4e0dc"/>
<rect x="1181.1" y="208.0" width="5.4" height="6.7" fill="#d5ccc6"/>
<rect x="1193.8" y="206.8" width="23.8" height="10.2" fill="#dcd7d2"/>
<rect x="1219.6" y="206.8" width="17.9" height="10.2" fill="#e4e0dc"/>
<rect x="1224.6" y="210.1" width="11.1" height="6.1" fill="#d5ccc6"/>
<rect x="1239.5" y="206.8" width="27.6" height="10.2" fill="#dcd7d2"/>
<rect x="1269.2" y="206.8" width="17.5" height="10.2" fill="#e1dcd9"/>
<rect x="1274.9" y="209.8" width="6.2" height="4.3" fill="#d5ccc6"/>
<rect x="1288.6" y="206.8" width="24.6" height="10.2" fill="#e1dcd9"/>
<rect x="1293.9" y="210.1" width="13.3" height="7.0" fill="#d5ccc6"/>
<rect x="1315.2" y="206.8" width="25.8" height="10.2" fill="#dedad7"/>
<rect x="1343.0" y="206.8" width="27.2" height="10.2" fill="#e1dcd9"/>
<rect x="1350.8" y="210.4" width="12.2" height="6.5" fill="#d5ccc6"/>
<rect x="937.0" y="219.0" width="14.2" height="11.6" fill="#e4e0dc"/>
<rect x="939.7" y="220.1" width="9.6" height="6.6" fill="#d5ccc6"/>
<rect x="953.2" y="219.0" width="17.5" height="11.6" fill="#dedad7"/>
<rect x="972.7" y="219.0" width="15.1" height="11.6" fill="#e1dcd9"/>
<rect x="989.8" y="219.0" width="12.9" height="11.6" fill="#e4e0dc"/>
<rect x="993.2" y="221.1" width="5.1" height="5.5" fill="#d5ccc6"/>
<rect x="1004.7" y="219.0" width="24.7" height="11.6" fill="#e1dcd9"/>
<rect x="1006.8" y="222.1" width="9.6" height="8.0" fill="#d5ccc6"/>
<rect x="1031.4" y="219.0" width="23.9" height="11.6" fill="#e4e0dc"/>
<rect x="1057.4" y="219.0" width="17.7" height="11.6" fill="#dcd7d2"/>
<rect x="1077.0" y="219.0" width="17.5" height="11.6" fill="#dcd7d2"/>
<rect x="1096.5" y="219.0" width="14.9" height="11.6" fill="#dcd7d2"/>
<rect x="1099.5" y="223.1" width="9.3" height="5.3" fill="#d5ccc6"/>
<rect x="1113.4" y="219.0" width="13.4" height="11.6" fill="#e4e0dc"/>
<rect x="1128.9" y="219.0" width="22.7" height="11.6" fill="#dcd7d2"/>
<rect x="1153.6" y="219.0" width="18.0" height="11.6" fill="#e4e0dc"/>
<rect x="1173.6" y="219.0" width="22.7" height="11.6" fill="#e4e0dc"/>
<rect x="1198.3" y="219.0" width="13.6" height="11.6" fill="#e4e0dc"/>
<rect x="1213.9" y="219.0" width="24.7" height="11.6" fill="#dcd7d2"/>
<rect x="1240.6" y="219.0" width="23.9" height="11.6" fill="#e1dcd9"/>
<rect x="1266.5" y="219.0" width="22.5" height="11.6" fill="#e1dcd9"/>
<rect x="1291.0" y="219.0" width="20.0" height="11.6" fill="#dedad7"/>
<rect x="1313.1" y="219.0" width="19.2" height="11.6" fill="#e4e0dc"/>
<rect x="1318.7" y="220.4" width="7.9" height="6.7" fill="#d5ccc6"/>
<rect x="1334.3" y="219.0" width="13.1" height="11.6" fill="#e4e0dc"/>
<rect x="1338.0" y="222.5" width="8.1" height="4.6" fill="#d5ccc6"/>
<rect x="925.9" y="232.6" width="25.5" height="18.9" fill="#dedad7"/>
<rect x="930.2" y="235.1" width="12.6" height="11.7" fill="#d5ccc6"/>
<rect x="953.4" y="232.6" width="23.8" height="18.9" fill="#e1dcd9"/>
<rect x="979.2" y="232.6" width="27.5" height="18.9" fill="#dcd7d2"/>
<rect x="1008.7" y="232.6" width="26.0" height="18.9" fill="#e1dcd9"/>
<rect x="1013.1" y="237.2" width="9.2" height="7.7" fill="#d5ccc6"/>
<rect x="1036.7" y="232.6" width="19.2" height="18.9" fill="#e1dcd9"/>
<rect x="1041.8" y="238.3" width="9.6" height="8.3" fill="#d5ccc6"/>
<rect x="1057.9" y="232.6" width="22.4" height="18.9" fill="#dedad7"/>
<rect x="1082.2" y="232.6" width="14.8" height="18.9" fill="#e4e0dc"/>
<rect x="1099.0" y="232.6" width="23.4" height="18.9" fill="#dcd7d2"/>
<rect x="1124.5" y="232.6" width="25.8" height="18.9" fill="#e1dcd9"/>
<rect x="1152.3" y="232.6" width="14.7" height="18.9" fill="#e4e0dc"/>
<rect x="1169.0" y="232.6" width="24.1" height="18.9" fill="#e4e0dc"/>
<rect x="1172.1" y="233.9" width="8.0" height="10.2" fill="#d5ccc6"/>
<rect x="1195.1" y="232.6" width="23.5" height="18.9" fill="#e1dcd9"/>
<rect x="1202.6" y="238.6" width="13.5" height="11.3" fill="#d5ccc6"/>
<rect x="1220.5" y="232.6" width="18.6" height="18.9" fill="#e1dcd9"/>
<rect x="1222.7" y="237.3" width="12.3" height="10.8" fill="#d5ccc6"/>
<rect x="1241.2" y="232.6" width="16.7" height="18.9" fill="#dcd7d2"/>
<rect x="1243.7" y="237.8" width="10.7" height="9.8" fill="#d5ccc6"/>
<rect x="1259.8" y="232.6" width="22.8" height="18.9" fill="#e1dcd9"/>
<rect x="1262.2" y="235.0" width="7.8" height="8.7" fill="#d5ccc6"/>
<rect x="1284.7" y="232.6" width="24.6" height="18.9" fill="#dcd7d2"/>
<rect x="1311.3" y="232.6" width="20.5" height="18.9" fill="#e1dcd9"/>
<rect x="1314.7" y="235.5" width="9.7" height="10.9" fill="#d5ccc6"/>
<rect x="1333.8" y="232.6" width="18.6" height="18.9" fill="#dcd7d2"/>
<rect x="927.3" y="253.5" width="17.2" height="17.8" fill="#e1dcd9"/>
<rect x="946.5" y="253.5" width="16.8" height="17.8" fill="#e1dcd9"/>
<rect x="948.5" y="255.4" width="9.8" height="10.9" fill="#d5ccc6"/>
<rect x="965.4" y="253.5" width="25.7" height="17.8" fill="#dcd7d2"/>
<rect x="993.0" y="253.5" width="17.8" height="17.8" fill="#e4e0dc"/>
<rect x="998.3" y="256.6" width="8.8" height="6.5" fill="#d5ccc6"/>
<rect x="1012.8" y="253.5" width="20.2" height="17.8" fill="#dedad7"/>
<rect x="1035.0" y="253.5" width="27.2" height="17.8" fill="#e4e0dc"/>
<rect x="1037.3" y="259.1" width="14.9" height="6.0" fill="#d5ccc6"/>
<rect x="1064.2" y="253.5" width="27.4" height="17.8" fill="#e4e0dc"/>
<rect x="1070.6" y="255.3" width="14.6" height="11.0" fill="#d5ccc6"/>
<rect x="1093.7" y="253.5" width="20.8" height="17.8" fill="#dcd7d2"/>
<rect x="1116.5" y="253.5" width="16.1" height="17.8" fill="#e1dcd9"/>
<rect x="1134.6" y="253.5" width="15.1" height="17.8" fill="#dcd7d2"/>
<rect x="1139.0" y="258.0" width="6.4" height="7.3" fill="#d5ccc6"/>
<rect x="1151.8" y="253.5" width="19.3" height="17.8" fill="#e4e0dc"/>
<rect x="1173.0" y="253.5" width="20.5" height="17.8" fill="#dcd7d2"/>
<rect x="1178.3" y="254.6" width="11.5" height="9.0" fill="#d5ccc6"/>
<rect x="1195.5" y="253.5" width="21.0" height="17.8" fill="#e1dcd9"/>
<rect x="1202.1" y="258.8" width="10.6" height="9.8" fill="#d5ccc6"/>
<rect x="1218.5" y="253.5" width="13.5" height="17.8" fill="#e4e0dc"/>
<rect x="1220.0" y="256.2" width="6.7" height="10.7" fill="#d5ccc6"/>
<rect x="1234.1" y="253.5" width="26.8" height="17.8" fill="#dcd7d2"/>
<rect x="1238.6" y="259.1" width="9.3" height="8.5" fill="#d5ccc6"/>
<rect x="1262.9" y="253.5" width="16.4" height="17.8" fill="#e1dcd9"/>
<rect x="1264.1" y="255.4" width="8.4" height="8.4" fill="#d5ccc6"/>
<rect x="1281.3" y="253.5" width="25.3" height="17.8" fill="#dedad7"/>
<rect x="1308.6" y="253.5" width="24.1" height="17.8" fill="#e1dcd9"/>
<rect x="1314.8" y="257.3" width="13.6" height="10.3" fill="#d5ccc6"/>
<rect x="1334.6" y="253.5" width="14.6" height="17.8" fill="#e1dcd9"/>
<rect x="1336.8" y="257.6" width="5.6" height="6.9" fill="#d5ccc6"/>
<rect x="940.4" y="273.2" width="24.9" height="13.0" fill="#e4e0dc"/>
<rect x="967.3" y="273.2" width="14.5" height="13.0" fill="#e4e0dc"/>
<rect x="983.8" y="273.2" width="13.6" height="13.0" fill="#dcd7d2"/>
<rect x="999.3" y="273.2" width="18.2" height="13.0" fill="#dedad7"/>
<rect x="1019.5" y="273.2" width="15.9" height="13.0" fill="#dcd7d2"/>
<rect x="1037.4" y="273.2" width="22.2" height="13.0" fill="#dcd7d2"/>
<rect x="1041.6" y="275.0" width="11.8" height="8.1" fill="#d5ccc6"/>
<rect x="1061.6" y="273.2" width="24.1" height="13.0" fill="#e4e0dc"/>
<rect x="1064.1" y="276.4" width="8.8" height="8.1" fill="#d5ccc6"/>
<rect x="1087.7" y="273.2" width="26.9" height="13.0" fill="#dcd7d2"/>
<rect x="1116.6" y="273.2" width="13.2" height="13.0" fill="#e1dcd9"/>
<rect x="1119.2" y="275.0" width="5.5" height="5.5" fill="#d5ccc6"/>
<rect x="1131.7" y="273.2" width="26.1" height="13.0" fill="#dedad7"/>
<rect x="1159.8" y="273.2" width="16.8" height="13.0" fill="#dcd7d2"/>
<rect x="1178.6" y="273.2" width="22.2" height="13.0" fill="#dcd7d2"/>
<rect x="1184.0" y="275.3" width="14.0" height="4.5" fill="#d5ccc6"/>
<rect x="1202.8" y="273.2" width="25.5" height="13.0" fill="#e4e0dc"/>
<rect x="1230.3" y="273.2" width="21.8" height="13.0" fill="#e1dcd9"/>
<rect x="1235.3" y="274.5" width="14.3" height="8.3" fill="#d5ccc6"/>
<rect x="1254.2" y="273.2" width="12.5" height="13.0" fill="#dcd7d2"/>
<rect x="1256.2" y="277.6" width="6.9" height="7.0" fill="#d5ccc6"/>
<rect x="1268.6" y="273.2" width="20.0" height="13.0" fill="#dcd7d2"/>
<rect x="1290.6" y="273.2" width="16.7" height="13.0" fill="#dcd7d2"/>
<rect x="1309.3" y="273.2" width="12.4" height="13.0" fill="#dcd7d2"/>
<rect x="1323.6" y="273.2" width="13.8" height="13.0" fill="#e4e0dc"/>
<rect x="1327.1" y="274.3" width="7.6" height="6.6" fill="#d5ccc6"/>
<rect x="1339.5" y="273.2" width="26.6" height="13.0" fill="#dedad7"/>
<rect x="934.1" y="288.3" width="21.4" height="17.4" fill="#dcd7d2"/>
<rect x="935.8" y="290.9" width="10.5" height="8.0" fill="#d5ccc6"/>
<rect x="957.5" y="288.3" width="19.8" height="17.4" fill="#dcd7d2"/>
<rect x="979.3" y="288.3" width="17.2" height="17.4" fill="#dcd7d2"/>
<rect x="983.7" y="290.9" width="8.7" height="7.4" fill="#d5ccc6"/>
<rect x="998.6" y="288.3" width="24.1" height="17.4" fill="#dcd7d2"/>
<rect x="1024.7" y="288.3" width="17.8" height="17.4" fill="#dedad7"/>
<rect x="1027.3" y="293.9" width="11.3" height="7.0" fill="#d5ccc6"/>
<rect x="1044.4" y="288.3" width="25.5" height="17.4" fill="#e4e0dc"/>
<rect x="1071.9" y="288.3" width="13.8" height="17.4" fill="#e1dcd9"/>
<rect x="1087.7" y="288.3" width="19.0" height="17.4" fill="#e1dcd9"/>
<rect x="1108.7" y="288.3" width="27.5" height="17.4" fill="#dedad7"/>
<rect x="1138.1" y="288.3" width="24.5" height="17.4" fill="#dcd7d2"/>
<rect x="1164.7" y="288.3" width="12.5" height="17.4" fill="#e1dcd9"/>
<rect x="1167.0" y="293.9" width="4.8" height="6.2" fill="#d5ccc6"/>
<rect x="1179.1" y="288.3" width="27.2" height="17.4" fill="#e4e0dc"/>
<rect x="1208.4" y="288.3" width="20.4" height="17.4" fill="#dcd7d2"/>
<rect x="1230.8" y="288.3" width="19.6" height="17.4" fill="#dcd7d2"/>
<rect x="1233.7" y="291.7" width="7.5" height="6.4" fill="#d5ccc6"/>
<rect x="1252.4" y="288.3" width="22.2" height="17.4" fill="#dcd7d2"/>
<rect x="1255.5" y="294.0" width="13.2" height="9.3" fill="#d5ccc6"/>
<rect x="1276.6" y="288.3" width="13.5" height="17.4" fill="#dedad7"/>
<rect x="1279.7" y="292.7" width="6.2" height="9.1" fill="#d5ccc6"/>
<rect x="1292.1" y="288.3" width="13.6" height="17.4" fill="#e1dcd9"/>
<rect x="1294.2" y="291.5" width="6.5" height="6.8" fill="#d5ccc6"/>
<rect x="1307.7" y="288.3" width="15.4" height="17.4" fill="#dcd7d2"/>
<rect x="1311.0" y="290.3" width="5.2" height="8.7" fill="#d5ccc6"/>
<rect x="1325.1" y="288.3" width="18.6" height="17.4" fill="#e1dcd9"/>
<rect x="1329.4" y="293.2" width="6.9" height="9.0" fill="#d5ccc6"/>
<rect x="1345.8" y="288.3" width="14.9" height="17.4" fill="#e1dcd9"/>
<rect x="936.9" y="307.6" width="20.4" height="16.3" fill="#e4e0dc"/>
<rect x="959.2" y="307.6" width="24.9" height="16.3" fill="#e4e0dc"/>
<rect x="986.1" y="307.6" width="17.9" height="16.3" fill="#dedad7"/>
<rect x="988.2" y="312.9" width="11.7" height="7.0" fill="#d5ccc6"/>
<rect x="1005.9" y="307.6" width="27.1" height="16.3" fill="#dedad7"/>
<rect x="1013.5" y="310.7" width="15.0" height="7.0" fill="#d5ccc6"/>
<rect x="1035.0" y="307.6" width="26.3" height="16.3" fill="#dedad7"/>
<rect x="1063.3" y="307.6" width="27.2" height="16.3" fill="#dcd7d2"/>
<rect x="1092.4" y="307.6" width="16.9" height="16.3" fill="#dedad7"/>
<rect x="1111.4" y="307.6" width="20.7" height="16.3" fill="#e1dcd9"/>
<rect x="1114.6" y="311.6" width="7.2" height="7.1" fill="#d5ccc6"/>
<rect x="1134.1" y="307.6" width="15.3" height="16.3" fill="#dedad7"/>
<rect x="1151.4" y="307.6" width="24.7" height="16.3" fill="#dedad7"/>
<rect x="1178.1" y="307.6" width="18.8" height="16.3" fill="#dedad7"/>
<rect x="1198.9" y="307.6" width="22.4" height="16.3" fill="#dedad7"/>
<rect x="1205.4" y="310.5" width="10.7" height="6.9" fill="#d5ccc6"/>
<rect x="1223.3" y="307.6" width="23.8" height="16.3" fill="#e4e0dc"/>
<rect x="1249.1" y="307.6" width="15.9" height="16.3" fill="#e1dcd9"/>
<rect x="1252.3" y="309.0" width="10.3" height="10.4" fill="#d5ccc6"/>
<rect x="1267.0" y="307.6" width="25.2" height="16.3" fill="#e4e0dc"/>
<rect x="1271.0" y="308.7" width="10.1" height="7.4" fill="#d5ccc6"/>
<rect x="1294.2" y="307.6" width="27.4" height="16.3" fill="#e1dcd9"/>
<rect x="1298.2" y="308.7" width="10.0" height="10.5" fill="#d5ccc6"/>
<rect x="1323.6" y="307.6" width="27.5" height="16.3" fill="#e1dcd9"/>
<rect x="1332.3" y="312.5" width="11.6" height="8.2" fill="#d5ccc6"/>
<rect x="929.8" y="326.0" width="13.2" height="9.1" fill="#e4e0dc"/>
<rect x="934.0" y="327.4" width="8.4" height="4.0" fill="#d5ccc6"/>
<rect x="944.9" y="326.0" width="16.0" height="9.1" fill="#e4e0dc"/>
<rect x="962.9" y="326.0" width="18.8" height="9.1" fill="#e1dcd9"/>
<rect x="965.1" y="327.6" width="9.4" height="3.8" fill="#d5ccc6"/>
<rect x="983.8" y="326.0" width="19.1" height="9.1" fill="#dcd7d2"/>
<rect x="1004.9" y="326.0" width="20.2" height="9.1" fill="#e1dcd9"/>
<rect x="1027.0" y="326.0" width="24.6" height="9.1" fill="#dedad7"/>
<rect x="1053.7" y="326.0" width="15.6" height="9.1" fill="#e1dcd9"/>
<rect x="1058.2" y="328.0" width="9.9" height="3.5" fill="#d5ccc6"/>
<rect x="1071.3" y="326.0" width="27.7" height="9.1" fill="#e1dcd9"/>
<rect x="1101.0" y="326.0" width="17.9" height="9.1" fill="#e4e0dc"/>
<rect x="1105.8" y="329.0" width="9.4" height="5.1" fill="#d5ccc6"/>
<rect x="1120.9" y="326.0" width="13.2" height="9.1" fill="#e1dcd9"/>
<rect x="1136.1" y="326.0" width="14.4" height="9.1" fill="#e1dcd9"/>
<rect x="1152.5" y="326.0" width="22.7" height="9.1" fill="#e4e0dc"/>
<rect x="1177.2" y="326.0" width="19.8" height="9.1" fill="#e4e0dc"/>
<rect x="1179.2" y="327.4" width="7.8" height="3.8" fill="#d5ccc6"/>
<rect x="1199.0" y="326.0" width="27.3" height="9.1" fill="#e1dcd9"/>
<rect x="1206.6" y="327.1" width="10.7" height="4.6" fill="#d5ccc6"/>
<rect x="1228.3" y="326.0" width="12.6" height="9.1" fill="#e1dcd9"/>
<rect x="1230.9" y="329.0" width="7.9" height="5.0" fill="#d5ccc6"/>
<rect x="1243.0" y="326.0" width="14.9" height="9.1" fill="#e4e0dc"/>
<rect x="1245.5" y="327.5" width="9.3" height="4.4" fill="#d5ccc6"/>
<rect x="1259.8" y="326.0" width="26.9" height="9.1" fill="#dcd7d2"/>
<rect x="1288.8" y="326.0" width="21.8" height="9.1" fill="#dcd7d2"/>
<rect x="1290.8" y="327.5" width="7.9" height="4.2" fill="#d5ccc6"/>
<rect x="1312.5" y="326.0" width="22.6" height="9.1" fill="#e1dcd9"/>
<rect x="1317.0" y="328.5" width="12.4" height="4.8" fill="#d5ccc6"/>
<rect x="1337.1" y="326.0" width="17.9" height="9.1" fill="#e4e0dc"/>
<rect x="935.9" y="337.1" width="20.0" height="10.7" fill="#e4e0dc"/>
<rect x="942.4" y="339.9" width="10.2" height="6.9" fill="#d5ccc6"/>
<rect x="957.9" y="337.1" width="20.3" height="10.7" fill="#e4e0dc"/>
<rect x="964.2" y="339.0" width="13.0" height="6.0" fill="#d5ccc6"/>
<rect x="980.2" y="337.1" width="13.9" height="10.7" fill="#e1dcd9"/>
<rect x="984.9" y="339.0" width="6.1" height="5.6" fill="#d5ccc6"/>
<rect x="996.1" y="337.1" width="22.0" height="10.7" fill="#dedad7"/>
<rect x="1020.0" y="337.1" width="13.5" height="10.7" fill="#e4e0dc"/>
<rect x="1035.5" y="337.1" width="13.9" height="10.7" fill="#dedad7"/>
<rect x="1051.4" y="337.1" width="25.3" height="10.7" fill="#dcd7d2"/>
<rect x="1057.0" y="340.3" width="15.0" height="6.1" fill="#d5ccc6"/>
<rect x="1078.7" y="337.1" width="25.9" height="10.7" fill="#dcd7d2"/>
<rect x="1084.0" y="338.9" width="9.5" height="4.0" fill="#d5ccc6"/>
<rect x="1106.6" y="337.1" width="14.6" height="10.7" fill="#e4e0dc"/>
<rect x="1123.2" y="337.1" width="18.1" height="10.7" fill="#e4e0dc"/>
<rect x="1125.3" y="339.7" width="6.2" height="5.5" fill="#d5ccc6"/>
<rect x="1143.4" y="337.1" width="21.0" height="10.7" fill="#dcd7d2"/>
<rect x="1166.4" y="337.1" width="16.1" height="10.7" fill="#dcd7d2"/>
<rect x="1184.5" y="337.1" width="17.8" height="10.7" fill="#e1dcd9"/>
<rect x="1185.5" y="339.1" width="8.6" height="5.2" fill="#d5ccc6"/>
<rect x="1204.2" y="337.1" width="19.8" height="10.7" fill="#e1dcd9"/>
<rect x="1206.8" y="339.5" width="7.3" height="4.6" fill="#d5ccc6"/>
<rect x="1226.0" y="337.1" width="14.3" height="10.7" fill="#dcd7d2"/>
<rect x="1242.3" y="337.1" width="14.5" height="10.7" fill="#dedad7"/>
<rect x="1245.0" y="338.8" width="5.4" height="7.6" fill="#d5ccc6"/>
<rect x="1258.8" y="337.1" width="16.3" height="10.7" fill="#e1dcd9"/>
<rect x="1277.1" y="337.1" width="15.6" height="10.7" fill="#e1dcd9"/>
<rect x="1294.7" y="337.1" width="18.1" height="10.7" fill="#dcd7d2"/>
<rect x="1297.4" y="338.9" width="10.7" height="5.3" fill="#d5ccc6"/>
<rect x="1314.8" y="337.1" width="26.2" height="10.7" fill="#e4e0dc"/>
<rect x="1343.0" y="337.1" width="19.0" height="10.7" fill="#e4e0dc"/>
<rect x="1346.9" y="339.5" width="6.9" height="6.2" fill="#d5ccc6"/>
<rect x="945.5" y="349.7" width="14.9" height="10.2" fill="#e1dcd9"/>
<rect x="950.2" y="352.0" width="5.7" height="5.6" fill="#d5ccc6"/>
<rect x="962.4" y="349.7" width="16.8" height="10.2" fill="#e4e0dc"/>
<rect x="981.2" y="349.7" width="17.5" height="10.2" fill="#e1dcd9"/>
<rect x="1000.7" y="349.7" width="22.5" height="10.2" fill="#dcd7d2"/>
<rect x="1025.2" y="349.7" width="26.8" height="10.2" fill="#e1dcd9"/>
<rect x="1054.0" y="349.7" width="26.0" height="10.2" fill="#e1dcd9"/>
<rect x="1059.3" y="352.8" width="11.2" height="4.8" fill="#d5ccc6"/>
<rect x="1081.9" y="349.7" width="26.8" height="10.2" fill="#dedad7"/>
<rect x="1110.7" y="349.7" width="24.1" height="10.2" fill="#e1dcd9"/>
<rect x="1136.9" y="349.7" width="17.3" height="10.2" fill="#e4e0dc"/>
<rect x="1156.2" y="349.7" width="27.5" height="10.2" fill="#e4e0dc"/>
<rect x="1185.6" y="349.7" width="23.4" height="10.2" fill="#dcd7d2"/>
<rect x="1191.6" y="352.2" width="9.5" height="6.4" fill="#d5ccc6"/>
<rect x="1211.0" y="349.7" width="18.2" height="10.2" fill="#dedad7"/>
<rect x="1231.2" y="349.7" width="19.3" height="10.2" fill="#e4e0dc"/>
<rect x="1252.5" y="349.7" width="27.1" height="10.2" fill="#e1dcd9"/>
<rect x="1281.7" y="349.7" width="16.9" height="10.2" fill="#dedad7"/>
<rect x="1300.6" y="349.7" width="17.7" height="10.2" fill="#dedad7"/>
<rect x="1320.4" y="349.7" width="16.4" height="10.2" fill="#dcd7d2"/>
<rect x="1323.3" y="352.7" width="9.6" height="6.6" fill="#d5ccc6"/>
<rect x="1338.8" y="349.7" width="24.4" height="10.2" fill="#e4e0dc"/>
<rect x="945.8" y="362.0" width="20.4" height="9.4" fill="#e1dcd9"/>
<rect x="948.1" y="363.9" width="7.9" height="3.9" fill="#d5ccc6"/>
<rect x="968.1" y="362.0" width="17.1" height="9.4" fill="#e1dcd9"/>
<rect x="971.0" y="363.4" width="9.2" height="5.2" fill="#d5ccc6"/>
<rect x="987.2" y="362.0" width="20.3" height="9.4" fill="#dedad7"/>
<rect x="1009.6" y="362.0" width="20.0" height="9.4" fill="#e1dcd9"/>
<rect x="1031.6" y="362.0" width="15.9" height="9.4" fill="#e4e0dc"/>
<rect x="1049.5" y="362.0" width="16.0" height="9.4" fill="#e1dcd9"/>
<rect x="1067.4" y="362.0" width="12.9" height="9.4" fill="#dedad7"/>
<rect x="1082.3" y="362.0" width="12.6" height="9.4" fill="#dedad7"/>
<rect x="1083.5" y="363.1" width="6.0" height="6.2" fill="#d5ccc6"/>
<rect x="1096.9" y="362.0" width="16.4" height="9.4" fill="#e1dcd9"/>
<rect x="1100.8" y="363.3" width="8.5" height="5.6" fill="#d5ccc6"/>
<rect x="1115.3" y="362.0" width="26.9" height="9.4" fill="#e4e0dc"/>
<rect x="1144.2" y="362.0" width="25.9" height="9.4" fill="#e4e0dc"/>
<rect x="1146.3" y="364.6" width="12.4" height="5.7" fill="#d5ccc6"/>
<rect x="1172.1" y="362.0" width="17.5" height="9.4" fill="#dedad7"/>
<rect x="1191.6" y="362.0" width="25.7" height="9.4" fill="#e4e0dc"/>
<rect x="1219.3" y="362.0" width="24.5" height="9.4" fill="#dedad7"/>
<rect x="1226.6" y="363.6" width="11.6" height="6.7" fill="#d5ccc6"/>
<rect x="1245.8" y="362.0" width="22.2" height="9.4" fill="#e1dcd9"/>
<rect x="1269.9" y="362.0" width="24.8" height="9.4" fill="#e1dcd9"/>
<rect x="1296.8" y="362.0" width="16.3" height="9.4" fill="#dedad7"/>
<rect x="1301.9" y="364.1" width="7.9" height="3.6" fill="#d5ccc6"/>
<rect x="1315.1" y="362.0" width="23.2" height="9.4" fill="#e1dcd9"/>
<rect x="1321.1" y="364.5" width="8.5" height="5.9" fill="#d5ccc6"/>
<rect x="1340.3" y="362.0" width="16.8" height="9.4" fill="#dedad7"/>
<rect x="935.2" y="373.4" width="25.2" height="11.1" fill="#e4e0dc"/>
<rect x="962.4" y="373.4" width="27.5" height="11.1" fill="#dedad7"/>
<rect x="991.9" y="373.4" width="27.5" height="11.1" fill="#e1dcd9"/>
<rect x="992.9" y="376.7" width="14.4" height="7.6" fill="#d5ccc6"/>
<rect x="1021.4" y="373.4" width="25.2" height="11.1" fill="#dedad7"/>
<rect x="1024.8" y="376.9" width="16.2" height="5.4" fill="#d5ccc6"/>
<rect x="1048.6" y="373.4" width="12.5" height="11.1" fill="#dedad7"/>
<rect x="1051.2" y="375.5" width="8.7" height="6.2" fill="#d5ccc6"/>
<rect x="1063.1" y="373.4" width="26.6" height="11.1" fill="#dcd7d2"/>
<rect x="1071.5" y="377.3" width="9.9" height="6.2" fill="#d5ccc6"/>
<rect x="1091.7" y="373.4" width="20.8" height="11.1" fill="#e4e0dc"/>
<rect x="1114.5" y="373.4" width="21.6" height="11.1" fill="#dedad7"/>
<rect x="1118.9" y="375.2" width="8.6" height="6.8" fill="#d5ccc6"/>
<rect x="1138.1" y="373.4" width="18.8" height="11.1" fill="#dedad7"/>
<rect x="1142.0" y="376.9" width="10.1" height="4.3" fill="#d5ccc6"/>
<rect x="1158.9" y="373.4" width="26.1" height="11.1" fill="#dcd7d2"/>
<rect x="1163.8" y="375.8" width="13.0" height="6.6" fill="#d5ccc6"/>
<rect x="1186.9" y="373.4" width="24.1" height="11.1" fill="#dcd7d2"/>
<rect x="1193.7" y="376.4" width="15.1" height="5.6" fill="#d5ccc6"/>
<rect x="1213.0" y="373.4" width="19.3" height="11.1" fill="#dedad7"/>
<rect x="1234.4" y="373.4" width="16.3" height="11.1" fill="#e4e0dc"/>
<rect x="1252.7" y="373.4" width="22.3" height="11.1" fill="#dedad7"/>
<rect x="1257.9" y="376.2" width="13.5" height="4.4" fill="#d5ccc6"/>
<rect x="1277.0" y="373.4" width="16.3" height="11.1" fill="#dedad7"/>
<rect x="1279.4" y="375.8" width="6.0" height="6.1" fill="#d5ccc6"/>
<rect x="1295.3" y="373.4" width="20.3" height="11.1" fill="#dedad7"/>
<rect x="1317.7" y="373.4" width="20.6" height="11.1" fill="#e4e0dc"/>
<rect x="1323.4" y="376.5" width="10.1" height="7.4" fill="#d5ccc6"/>
<rect x="1340.2" y="373.4" width="14.0" height="11.1" fill="#e4e0dc"/>
<rect x="1341.4" y="376.1" width="6.7" height="5.8" fill="#d5ccc6"/>
<rect x="939.6" y="386.5" width="24.3" height="13.7" fill="#dedad7"/>
<rect x="944.5" y="388.8" width="13.6" height="8.9" fill="#d5ccc6"/>
<rect x="965.9" y="386.5" width="21.8" height="13.7" fill="#e4e0dc"/>
<rect x="967.4" y="390.9" width="8.5" height="5.1" fill="#d5ccc6"/>
<rect x="989.7" y="386.5" width="23.8" height="13.7" fill="#e1dcd9"/>
<rect x="1015.5" y="386.5" width="24.0" height="13.7" fill="#e1dcd9"/>
<rect x="1041.5" y="386.5" width="21.2" height="13.7" fill="#dedad7"/>
<rect x="1064.7" y="386.5" width="25.3" height="13.7" fill="#dcd7d2"/>
<rect x="1071.3" y="388.8" width="9.4" height="9.2" fill="#d5ccc6"/>
<rect x="1091.9" y="386.5" width="25.7" height="13.7" fill="#e1dcd9"/>
<rect x="1093.8" y="391.1" width="13.1" height="6.0" fill="#d5ccc6"/>
<rect x="1119.7" y="386.5" width="12.4" height="13.7" fill="#dedad7"/>
<rect x="1134.0" y="386.5" width="26.2" height="13.7" fill="#e4e0dc"/>
<rect x="1162.2" y="386.5" width="18.7" height="13.7" fill="#dedad7"/>
<rect x="1165.2" y="387.7" width="12.2" height="8.1" fill="#d5ccc6"/>
<rect x="1182.9" y="386.5" width="17.1" height="13.7" fill="#dcd7d2"/>
<rect x="1186.1" y="391.1" width="10.8" height="6.8" fill="#d5ccc6"/>
<rect x="1201.9" y="386.5" width="19.1" height="13.7" fill="#dedad7"/>
<rect x="1223.1" y="386.5" width="15.8" height="13.7" fill="#dedad7"/>
<rect x="1240.8" y="386.5" width="19.7" height="13.7" fill="#e1dcd9"/>
<rect x="1262.6" y="386.5" width="27.0" height="13.7" fill="#e4e0dc"/>
<rect x="1291.6" y="386.5" width="25.9" height="13.7" fill="#e4e0dc"/>
<rect x="1298.5" y="390.7" width="9.8" height="5.2" fill="#d5ccc6"/>
<rect x="1319.6" y="386.5" width="26.2" height="13.7" fill="#dedad7"/>
<rect x="1324.1" y="390.4" width="16.2" height="9.2" fill="#d5ccc6"/>
<rect x="1347.8" y="386.5" width="25.9" height="13.7" fill="#e1dcd9"/>
<rect x="936.3" y="402.3" width="26.8" height="9.5" fill="#e1dcd9"/>
<rect x="941.2" y="403.8" width="12.4" height="6.3" fill="#d5ccc6"/>
<rect x="965.1" y="402.3" width="16.5" height="9.5" fill="#e4e0dc"/>
<rect x="966.2" y="404.1" width="7.6" height="3.8" fill="#d5ccc6"/>
<rect x="983.5" y="402.3" width="26.4" height="9.5" fill="#dcd7d2"/>
<rect x="991.3" y="403.5" width="8.7" height="5.7" fill="#d5ccc6"/>
<rect x="1011.9" y="402.3" width="16.4" height="9.5" fill="#e1dcd9"/>
<rect x="1016.9" y="405.4" width="8.5" height="5.9" fill="#d5ccc6"/>
<rect x="1030.3" y="402.3" width="14.8" height="9.5" fill="#e1dcd9"/>
<rect x="1033.2" y="405.2" width="5.3" height="4.4" fill="#d5ccc6"/>
<rect x="1047.1" y="402.3" width="13.2" height="9.5" fill="#e4e0dc"/>
<rect x="1062.3" y="402.3" width="20.6" height="9.5" fill="#e1dcd9"/>
<rect x="1084.9" y="402.3" width="13.6" height="9.5" fill="#e1dcd9"/>
<rect x="1100.6" y="402.3" width="14.0" height="9.5" fill="#e1dcd9"/>
<rect x="1104.3" y="404.7" width="9.0" height="5.6" fill="#d5ccc6"/>
<rect x="1116.6" y="402.3" width="14.5" height="9.5" fill="#e1dcd9"/>
<rect x="1118.3" y="403.6" width="7.2" height="6.1" fill="#d5ccc6"/>
<rect x="1133.1" y="402.3" width="24.5" height="9.5" fill="#dcd7d2"/>
<rect x="1159.6" y="402.3" width="22.7" height="9.5" fill="#e1dcd9"/>
<rect x="1184.3" y="402.3" width="18.0" height="9.5" fill="#e1dcd9"/>
<rect x="1204.3" y="402.3" width="15.3" height="9.5" fill="#e1dcd9"/>
<rect x="1209.1" y="405.3" width="7.4" height="3.8" fill="#d5ccc6"/>
<rect x="1221.6" y="402.3" width="18.1" height="9.5" fill="#e4e0dc"/>
<rect x="1241.7" y="402.3" width="26.9" height="9.5" fill="#dedad7"/>
<rect x="1270.6" y="402.3" width="26.1" height="9.5" fill="#dedad7"/>
<rect x="1298.7" y="402.3" width="17.3" height="9.5" fill="#dedad7"/>
<rect x="1318.0" y="402.3" width="26.7" height="9.5" fill="#dedad7"/>
<rect x="1346.7" y="402.3" width="16.6" height="9.5" fill="#dedad7"/>
<rect x="944.7" y="413.7" width="21.1" height="11.5" fill="#dedad7"/>
<rect x="951.6" y="416.0" width="8.4" height="5.5" fill="#d5ccc6"/>
<rect x="967.8" y="413.7" width="23.4" height="11.5" fill="#e1dcd9"/>
<rect x="971.7" y="417.4" width="14.6" height="5.9" fill="#d5ccc6"/>
<rect x="993.2" y="413.7" width="27.5" height="11.5" fill="#e4e0dc"/>
<rect x="1000.7" y="415.5" width="14.2" height="6.0" fill="#d5ccc6"/>
<rect x="1022.7" y="413.7" width="15.7" height="11.5" fill="#dedad7"/>
<rect x="1024.0" y="417.6" width="9.0" height="5.0" fill="#d5ccc6"/>
<rect x="1040.4" y="413.7" width="22.3" height="11.5" fill="#dcd7d2"/>
<rect x="1047.2" y="415.8" width="8.9" height="7.7" fill="#d5ccc6"/>
<rect x="1064.7" y="413.7" width="24.6" height="11.5" fill="#dedad7"/>
<rect x="1091.2" y="413.7" width="17.3" height="11.5" fill="#e1dcd9"/>
<rect x="1110.6" y="413.7" width="14.0" height="11.5" fill="#e4e0dc"/>
<rect x="1126.5" y="413.7" width="17.9" height="11.5" fill="#e1dcd9"/>
<rect x="1130.6" y="417.5" width="6.1" height="4.1" fill="#d5ccc6"/>
<rect x="1146.4" y="413.7" width="17.1" height="11.5" fill="#e1dcd9"/>
<rect x="1147.8" y="414.7" width="5.8" height="4.9" fill="#d5ccc6"/>
<rect x="1165.5" y="413.7" width="26.8" height="11.5" fill="#dcd7d2"/>
<rect x="1173.4" y="416.2" width="15.4" height="4.2" fill="#d5ccc6"/>
<rect x="1194.4" y="413.7" width="19.6" height="11.5" fill="#dcd7d2"/>
<rect x="1216.0" y="413.7" width="12.7" height="11.5" fill="#dedad7"/>
<rect x="1217.2" y="416.9" width="6.7" height="6.5" fill="#d5ccc6"/>
<rect x="1230.7" y="413.7" width="27.1" height="11.5" fill="#e4e0dc"/>
<rect x="1259.8" y="413.7" width="16.0" height="11.5" fill="#dedad7"/>
<rect x="1277.8" y="413.7" width="21.0" height="11.5" fill="#e4e0dc"/>
<rect x="1283.5" y="416.5" width="10.5" height="5.2" fill="#d5ccc6"/>
<rect x="1300.8" y="413.7" width="19.5" height="11.5" fill="#dcd7d2"/>
<rect x="1306.1" y="416.9" width="12.0" height="6.3" fill="#d5ccc6"/>
<rect x="1322.3" y="413.7" width="17.0" height="11.5" fill="#dcd7d2"/>
<rect x="1341.3" y="413.7" width="27.3" height="11.5" fill="#e1dcd9"/>
<rect x="947.7" y="427.2" width="18.8" height="17.4" fill="#dcd7d2"/>
<rect x="968.5" y="427.2" width="13.9" height="17.4" fill="#dcd7d2"/>
<rect x="984.3" y="427.2" width="18.0" height="17.4" fill="#e4e0dc"/>
<rect x="985.9" y="432.0" width="9.7" height="9.1" fill="#d5ccc6"/>
<rect x="1004.3" y="427.2" width="13.7" height="17.4" fill="#e1dcd9"/>
<rect x="1007.2" y="432.2" width="5.2" height="6.7" fill="#d5ccc6"/>
<rect x="1020.0" y="427.2" width="14.4" height="17.4" fill="#e1dcd9"/>
<rect x="1024.1" y="432.3" width="8.0" height="7.8" fill="#d5ccc6"/>
<rect x="1036.4" y="427.2" width="13.5" height="17.4" fill="#e4e0dc"/>
<rect x="1051.9" y="427.2" width="18.6" height="17.4" fill="#dcd7d2"/>
<rect x="1054.9" y="429.3" width="8.5" height="8.7" fill="#d5ccc6"/>
<rect x="1072.5" y="427.2" width="27.4" height="17.4" fill="#e1dcd9"/>
<rect x="1075.7" y="431.8" width="14.4" height="11.5" fill="#d5ccc6"/>
<rect x="1102.0" y="427.2" width="26.5" height="17.4" fill="#e1dcd9"/>
<rect x="1103.5" y="431.8" width="10.0" height="11.3" fill="#d5ccc6"/>
<rect x="1130.5" y="427.2" width="16.7" height="17.4" fill="#dedad7"/>
<rect x="1133.7" y="429.6" width="8.6" height="11.5" fill="#d5ccc6"/>
<rect x="1149.2" y="427.2" width="13.1" height="17.4" fill="#e1dcd9"/>
<rect x="1164.3" y="427.2" width="15.4" height="17.4" fill="#e4e0dc"/>
<rect x="1181.7" y="427.2" width="19.6" height="17.4" fill="#dedad7"/>
<rect x="1182.9" y="429.1" width="11.7" height="10.6" fill="#d5ccc6"/>
<rect x="1203.3" y="427.2" width="17.5" height="17.4" fill="#e4e0dc"/>
<rect x="1207.2" y="432.0" width="10.3" height="9.1" fill="#d5ccc6"/>
<rect x="1222.8" y="427.2" width="17.5" height="17.4" fill="#dedad7"/>
<rect x="1242.3" y="427.2" width="26.5" height="17.4" fill="#e1dcd9"/>
<rect x="1270.8" y="427.2" width="25.8" height="17.4" fill="#e1dcd9"/>
<rect x="1298.6" y="427.2" width="15.8" height="17.4" fill="#e4e0dc"/>
<rect x="1316.5" y="427.2" width="22.2" height="17.4" fill="#dedad7"/>
<rect x="1320.1" y="432.8" width="10.0" height="9.4" fill="#d5ccc6"/>
<rect x="1340.7" y="427.2" width="27.0" height="17.4" fill="#e4e0dc"/>
<rect x="935.2" y="446.6" width="21.4" height="10.8" fill="#dcd7d2"/>
<rect x="958.6" y="446.6" width="15.9" height="10.8" fill="#dedad7"/>
<rect x="976.4" y="446.6" width="22.2" height="10.8" fill="#e1dcd9"/>
<rect x="980.1" y="450.4" width="13.8" height="6.9" fill="#d5ccc6"/>
<rect x="1000.6" y="446.6" width="16.6" height="10.8" fill="#e1dcd9"/>
<rect x="1019.3" y="446.6" width="16.4" height="10.8" fill="#e1dcd9"/>
<rect x="1037.7" y="446.6" width="15.7" height="10.8" fill="#e4e0dc"/>
<rect x="1041.7" y="450.5" width="6.4" height="5.2" fill="#d5ccc6"/>
<rect x="1055.4" y="446.6" width="16.2" height="10.8" fill="#dcd7d2"/>
<rect x="1060.7" y="447.8" width="5.8" height="4.4" fill="#d5ccc6"/>
<rect x="1073.6" y="446.6" width="26.9" height="10.8" fill="#e4e0dc"/>
<rect x="1102.5" y="446.6" width="27.2" height="10.8" fill="#e1dcd9"/>
<rect x="1103.9" y="447.8" width="9.7" height="7.5" fill="#d5ccc6"/>
<rect x="1131.7" y="446.6" width="27.1" height="10.8" fill="#dcd7d2"/>
<rect x="1160.8" y="446.6" width="17.9" height="10.8" fill="#e4e0dc"/>
<rect x="1180.7" y="446.6" width="13.5" height="10.8" fill="#dedad7"/>
<rect x="1184.0" y="450.0" width="7.6" height="7.7" fill="#d5ccc6"/>
<rect x="1196.1" y="446.6" width="27.2" height="10.8" fill="#e1dcd9"/>
<rect x="1200.1" y="449.3" width="13.9" height="5.4" fill="#d5ccc6"/>
<rect x="1225.4" y="446.6" width="21.2" height="10.8" fill="#dedad7"/>
<rect x="1248.6" y="446.6" width="16.8" height="10.8" fill="#e4e0dc"/>
<rect x="1250.2" y="448.1" width="6.3" height="6.9" fill="#d5ccc6"/>
<rect x="1267.4" y="446.6" width="19.0" height="10.8" fill="#e1dcd9"/>
<rect x="1270.7" y="449.8" width="11.3" height="6.2" fill="#d5ccc6"/>
<rect x="1288.4" y="446.6" width="13.0" height="10.8" fill="#dcd7d2"/>
<rect x="1291.8" y="449.2" width="4.7" height="7.1" fill="#d5ccc6"/>
<rect x="1303.4" y="446.6" width="12.5" height="10.8" fill="#e1dcd9"/>
<rect x="1317.9" y="446.6" width="22.7" height="10.8" fill="#dedad7"/>
<rect x="1342.7" y="446.6" width="18.7" height="10.8" fill="#e1dcd9"/>
<rect x="1348.4" y="448.2" width="7.2" height="6.0" fill="#d5ccc6"/>
<rect x="938.0" y="459.5" width="21.2" height="10.7" fill="#dedad7"/>
<rect x="961.1" y="459.5" width="13.9" height="10.7" fill="#dcd7d2"/>
<rect x="964.2" y="461.4" width="8.9" height="5.6" fill="#d5ccc6"/>
<rect x="977.1" y="459.5" width="15.7" height="10.7" fill="#dcd7d2"/>
<rect x="980.7" y="463.1" width="5.7" height="5.1" fill="#d5ccc6"/>
<rect x="994.8" y="459.5" width="17.7" height="10.7" fill="#e4e0dc"/>
<rect x="1014.5" y="459.5" width="17.8" height="10.7" fill="#dedad7"/>
<rect x="1034.2" y="459.5" width="27.4" height="10.7" fill="#dedad7"/>
<rect x="1035.7" y="462.1" width="17.4" height="3.9" fill="#d5ccc6"/>
<rect x="1063.7" y="459.5" width="19.3" height="10.7" fill="#e4e0dc"/>
<rect x="1084.9" y="459.5" width="18.9" height="10.7" fill="#e4e0dc"/>
<rect x="1105.9" y="459.5" width="12.6" height="10.7" fill="#e1dcd9"/>
<rect x="1120.4" y="459.5" width="17.2" height="10.7" fill="#e1dcd9"/>
<rect x="1139.6" y="459.5" width="14.5" height="10.7" fill="#e1dcd9"/>
<rect x="1142.8" y="461.3" width="8.5" height="5.7" fill="#d5ccc6"/>
<rect x="1156.1" y="459.5" width="25.4" height="10.7" fill="#dedad7"/>
<rect x="1161.5" y="460.9" width="14.2" height="5.6" fill="#d5ccc6"/>
<rect x="1183.6" y="459.5" width="26.4" height="10.7" fill="#e4e0dc"/>
<rect x="1211.9" y="459.5" width="24.9" height="10.7" fill="#dcd7d2"/>
<rect x="1238.8" y="459.5" width="24.4" height="10.7" fill="#e1dcd9"/>
<rect x="1265.2" y="459.5" width="13.2" height="10.7" fill="#e1dcd9"/>
<rect x="1269.6" y="460.5" width="9.0" height="5.0" fill="#d5ccc6"/>
<rect x="1280.4" y="459.5" width="16.3" height="10.7" fill="#e1dcd9"/>
<rect x="1283.5" y="463.1" width="10.9" height="3.9" fill="#d5ccc6"/>
<rect x="1298.7" y="459.5" width="22.5" height="10.7" fill="#e1dcd9"/>
<rect x="1303.9" y="462.0" width="8.4" height="4.4" fill="#d5ccc6"/>
<rect x="1323.2" y="459.5" width="22.8" height="10.7" fill="#e1dcd9"/>
<rect x="1326.2" y="460.7" width="10.5" height="6.6" fill="#d5ccc6"/>
<rect x="1348.0" y="459.5" width="12.8" height="10.7" fill="#e4e0dc"/>
<rect x="1350.7" y="462.1" width="7.1" height="5.5" fill="#d5ccc6"/>
<rect x="932.1" y="472.2" width="26.6" height="12.6" fill="#dcd7d2"/>
<rect x="937.0" y="475.5" width="14.3" height="8.0" fill="#d5ccc6"/>
<rect x="960.7" y="472.2" width="18.6" height="12.6" fill="#dcd7d2"/>
<rect x="981.3" y="472.2" width="21.4" height="12.6" fill="#e1dcd9"/>
<rect x="1004.7" y="472.2" width="22.9" height="12.6" fill="#e1dcd9"/>
<rect x="1029.6" y="472.2" width="18.2" height="12.6" fill="#dedad7"/>
<rect x="1033.0" y="474.5" width="7.7" height="5.0" fill="#d5ccc6"/>
<rect x="1049.8" y="472.2" width="14.4" height="12.6" fill="#e1dcd9"/>
<rect x="1051.1" y="475.1" width="9.1" height="8.3" fill="#d5ccc6"/>
<rect x="1066.2" y="472.2" width="22.0" height="12.6" fill="#dedad7"/>
<rect x="1072.9" y="473.9" width="8.1" height="7.1" fill="#d5ccc6"/>
<rect x="1090.2" y="472.2" width="15.1" height="12.6" fill="#e4e0dc"/>
<rect x="1093.4" y="474.9" width="9.6" height="7.2" fill="#d5ccc6"/>
<rect x="1107.3" y="472.2" width="20.0" height="12.6" fill="#e1dcd9"/>
<rect x="1129.3" y="472.2" width="15.6" height="12.6" fill="#e1dcd9"/>
<rect x="1134.2" y="473.9" width="9.6" height="7.7" fill="#d5ccc6"/>
<rect x="1146.9" y="472.2" width="15.0" height="12.6" fill="#e4e0dc"/>
<rect x="1163.9" y="472.2" width="27.4" height="12.6" fill="#dcd7d2"/>
<rect x="1167.6" y="474.6" width="8.9" height="8.1" fill="#d5ccc6"/>
<rect x="1193.3" y="472.2" width="14.5" height="12.6" fill="#dedad7"/>
<rect x="1197.2" y="474.5" width="5.7" height="7.7" fill="#d5ccc6"/>
<rect x="1209.8" y="472.2" width="16.5" height="12.6" fill="#dcd7d2"/>
<rect x="1228.4" y="472.2" width="21.2" height="12.6" fill="#dedad7"/>
<rect x="1231.6" y="476.5" width="7.5" height="4.8" fill="#d5ccc6"/>
<rect x="1251.6" y="472.2" width="22.2" height="12.6" fill="#dcd7d2"/>
<rect x="1257.4" y="475.1" width="10.7" height="5.9" fill="#d5ccc6"/>
<rect x="1275.8" y="472.2" width="23.1" height="12.6" fill="#dedad7"/>
<rect x="1278.9" y="473.4" width="8.4" height="6.1" fill="#d5ccc6"/>
<rect x="1300.9" y="472.2" width="26.2" height="12.6" fill="#e4e0dc"/>
<rect x="1303.8" y="474.0" width="11.3" height="6.3" fill="#d5ccc6"/>
<rect x="1329.2" y="472.2" width="13.4" height="12.6" fill="#dedad7"/>
<rect x="1344.6" y="472.2" width="21.9" height="12.6" fill="#dedad7"/>
<rect x="931.2" y="486.8" width="21.1" height="16.7" fill="#dedad7"/>
<rect x="935.2" y="492.3" width="13.6" height="8.8" fill="#d5ccc6"/>
<rect x="954.2" y="486.8" width="16.4" height="16.7" fill="#dedad7"/>
<rect x="972.7" y="486.8" width="16.5" height="16.7" fill="#dcd7d2"/>
<rect x="975.2" y="488.3" width="8.1" height="6.7" fill="#d5ccc6"/>
<rect x="991.2" y="486.8" width="16.2" height="16.7" fill="#dcd7d2"/>
<rect x="1009.4" y="486.8" width="12.6" height="16.7" fill="#e4e0dc"/>
<rect x="1024.0" y="486.8" width="18.0" height="16.7" fill="#e1dcd9"/>
<rect x="1044.1" y="486.8" width="21.8" height="16.7" fill="#dcd7d2"/>
<rect x="1067.8" y="486.8" width="24.5" height="16.7" fill="#dcd7d2"/>
<rect x="1094.3" y="486.8" width="12.5" height="16.7" fill="#e4e0dc"/>
<rect x="1098.3" y="488.2" width="6.3" height="9.6" fill="#d5ccc6"/>
<rect x="1108.8" y="486.8" width="21.3" height="16.7" fill="#e1dcd9"/>
<rect x="1113.4" y="491.0" width="11.1" height="7.2" fill="#d5ccc6"/>
<rect x="1132.2" y="486.8" width="15.1" height="16.7" fill="#dcd7d2"/>
<rect x="1136.3" y="489.1" width="7.6" height="10.3" fill="#d5ccc6"/>
<rect x="1149.3" y="486.8" width="24.6" height="16.7" fill="#dedad7"/>
<rect x="1151.3" y="491.8" width="12.5" height="7.2" fill="#d5ccc6"/>
<rect x="1176.0" y="486.8" width="18.5" height="16.7" fill="#dcd7d2"/>
<rect x="1196.5" y="486.8" width="21.3" height="16.7" fill="#e1dcd9"/>
<rect x="1202.0" y="491.5" width="8.9" height="6.7" fill="#d5ccc6"/>
<rect x="1219.8" y="486.8" width="20.3" height="16.7" fill="#e1dcd9"/>
<rect x="1242.0" y="486.8" width="26.6" height="16.7" fill="#dcd7d2"/>
<rect x="1249.7" y="488.8" width="9.6" height="10.5" fill="#d5ccc6"/>
<rect x="1270.6" y="486.8" width="12.5" height="16.7" fill="#e1dcd9"/>
<rect x="1285.1" y="486.8" width="13.1" height="16.7" fill="#e4e0dc"/>
<rect x="1287.9" y="491.8" width="7.2" height="10.1" fill="#d5ccc6"/>
<rect x="1300.2" y="486.8" width="12.4" height="16.7" fill="#e4e0dc"/>
<rect x="1314.6" y="486.8" width="12.9" height="16.7" fill="#dedad7"/>
<rect x="1329.5" y="486.8" width="14.0" height="16.7" fill="#dedad7"/>
<rect x="1333.4" y="491.0" width="7.2" height="9.2" fill="#d5ccc6"/>
<rect x="1345.5" y="486.8" width="17.6" height="16.7" fill="#dcd7d2"/>
<rect x="1349.7" y="489.3" width="9.2" height="8.8" fill="#d5ccc6"/>
<rect x="936.5" y="505.4" width="24.2" height="17.9" fill="#dedad7"/>
<rect x="940.1" y="510.8" width="11.2" height="6.9" fill="#d5ccc6"/>
<rect x="962.7" y="505.4" width="18.3" height="17.9" fill="#e1dcd9"/>
<rect x="983.0" y="505.4" width="14.5" height="17.9" fill="#dedad7"/>
<rect x="987.0" y="506.6" width="6.5" height="10.7" fill="#d5ccc6"/>
<rect x="999.5" y="505.4" width="21.8" height="17.9" fill="#dcd7d2"/>
<rect x="1001.5" y="510.8" width="7.3" height="8.9" fill="#d5ccc6"/>
<rect x="1023.4" y="505.4" width="20.7" height="17.9" fill="#e4e0dc"/>
<rect x="1046.0" y="505.4" width="21.5" height="17.9" fill="#e4e0dc"/>
<rect x="1049.1" y="511.3" width="9.3" height="11.9" fill="#d5ccc6"/>
<rect x="1069.5" y="505.4" width="13.3" height="17.9" fill="#e4e0dc"/>
<rect x="1084.9" y="505.4" width="23.7" height="17.9" fill="#e1dcd9"/>
<rect x="1089.9" y="507.0" width="10.9" height="7.4" fill="#d5ccc6"/>
<rect x="1110.5" y="505.4" width="22.1" height="17.9" fill="#dcd7d2"/>
<rect x="1117.6" y="510.7" width="13.7" height="11.5" fill="#d5ccc6"/>
<rect x="1134.6" y="505.4" width="26.4" height="17.9" fill="#e4e0dc"/>
<rect x="1163.0" y="505.4" width="22.7" height="17.9" fill="#e1dcd9"/>
<rect x="1187.6" y="505.4" width="20.8" height="17.9" fill="#dcd7d2"/>
<rect x="1210.4" y="505.4" width="23.2" height="17.9" fill="#e1dcd9"/>
<rect x="1235.6" y="505.4" width="17.0" height="17.9" fill="#dedad7"/>
<rect x="1238.3" y="510.4" width="10.5" height="7.7" fill="#d5ccc6"/>
<rect x="1254.6" y="505.4" width="13.4" height="17.9" fill="#dedad7"/>
<rect x="1257.3" y="506.7" width="5.4" height="8.3" fill="#d5ccc6"/>
<rect x="1270.1" y="505.4" width="19.1" height="17.9" fill="#e4e0dc"/>
<rect x="1275.1" y="507.8" width="6.9" height="10.2" fill="#d5ccc6"/>
<rect x="1291.1" y="505.4" width="21.6" height="17.9" fill="#dcd7d2"/>
<rect x="1314.7" y="505.4" width="16.0" height="17.9" fill="#e1dcd9"/>
<rect x="1332.7" y="505.4" width="16.9" height="17.9" fill="#e4e0dc"/>
<rect x="944.3" y="525.4" width="19.7" height="16.2" fill="#e4e0dc"/>
<rect x="946.4" y="526.8" width="7.3" height="7.5" fill="#d5ccc6"/>
<rect x="966.0" y="525.4" width="27.6" height="16.2" fill="#e4e0dc"/>
<rect x="967.8" y="529.0" width="15.2" height="9.5" fill="#d5ccc6"/>
<rect x="995.7" y="525.4" width="16.2" height="16.2" fill="#dcd7d2"/>
<rect x="999.2" y="528.0" width="6.7" height="7.4" fill="#d5ccc6"/>
<rect x="1013.9" y="525.4" width="24.4" height="16.2" fill="#dcd7d2"/>
<rect x="1040.2" y="525.4" width="20.1" height="16.2" fill="#dcd7d2"/>
<rect x="1041.6" y="528.9" width="10.6" height="7.7" fill="#d5ccc6"/>
<rect x="1062.3" y="525.4" width="21.0" height="16.2" fill="#e4e0dc"/>
<rect x="1065.5" y="529.7" width="7.4" height="9.2" fill="#d5ccc6"/>
<rect x="1085.3" y="525.4" width="15.0" height="16.2" fill="#e4e0dc"/>
<rect x="1087.9" y="528.5" width="6.3" height="9.6" fill="#d5ccc6"/>
<rect x="1102.3" y="525.4" width="21.9" height="16.2" fill="#dedad7"/>
<rect x="1126.1" y="525.4" width="26.7" height="16.2" fill="#dedad7"/>
<rect x="1154.8" y="525.4" width="18.2" height="16.2" fill="#dedad7"/>
<rect x="1157.1" y="528.9" width="6.4" height="10.6" fill="#d5ccc6"/>
<rect x="1175.0" y="525.4" width="22.9" height="16.2" fill="#e1dcd9"/>
<rect x="1180.3" y="526.4" width="13.7" height="10.2" fill="#d5ccc6"/>
<rect x="1199.9" y="525.4" width="19.9" height="16.2" fill="#dedad7"/>
<rect x="1205.8" y="529.2" width="9.3" height="8.7" fill="#d5ccc6"/>
<rect x="1221.8" y="525.4" width="15.6" height="16.2" fill="#dedad7"/>
<rect x="1239.4" y="525.4" width="21.1" height="16.2" fill="#dcd7d2"/>
<rect x="1242.8" y="526.8" width="13.1" height="6.5" fill="#d5ccc6"/>
<rect x="1262.5" y="525.4" width="16.0" height="16.2" fill="#e1dcd9"/>
<rect x="1267.0" y="526.9" width="10.5" height="9.2" fill="#d5ccc6"/>
<rect x="1280.5" y="525.4" width="21.3" height="16.2" fill="#e4e0dc"/>
<rect x="1286.2" y="530.5" width="11.9" height="8.2" fill="#d5ccc6"/>
<rect x="1303.8" y="525.4" width="24.1" height="16.2" fill="#e4e0dc"/>
<rect x="1308.2" y="528.8" width="11.7" height="6.9" fill="#d5ccc6"/>
<rect x="1329.9" y="525.4" width="18.2" height="16.2" fill="#e4e0dc"/>
<rect x="1335.6" y="530.7" width="7.6" height="7.2" fill="#d5ccc6"/>
<rect x="930.4" y="543.6" width="14.8" height="18.8" fill="#dedad7"/>
<rect x="947.2" y="543.6" width="18.3" height="18.8" fill="#dedad7"/>
<rect x="967.5" y="543.6" width="17.8" height="18.8" fill="#e4e0dc"/>
<rect x="987.3" y="543.6" width="15.9" height="18.8" fill="#dedad7"/>
<rect x="1005.2" y="543.6" width="20.0" height="18.8" fill="#dcd7d2"/>
<rect x="1007.7" y="548.8" width="10.9" height="7.8" fill="#d5ccc6"/>
<rect x="1027.1" y="543.6" width="25.8" height="18.8" fill="#e1dcd9"/>
<rect x="1032.9" y="546.3" width="16.3" height="9.6" fill="#d5ccc6"/>
<rect x="1055.0" y="543.6" width="27.3" height="18.8" fill="#dedad7"/>
<rect x="1084.2" y="543.6" width="17.2" height="18.8" fill="#e4e0dc"/>
<rect x="1085.6" y="549.6" width="11.2" height="9.3" fill="#d5ccc6"/>
<rect x="1103.5" y="543.6" width="17.5" height="18.8" fill="#dedad7"/>
<rect x="1106.2" y="549.2" width="10.3" height="9.1" fill="#d5ccc6"/>
<rect x="1122.9" y="543.6" width="22.4" height="18.8" fill="#e1dcd9"/>
<rect x="1128.1" y="544.7" width="13.7" height="11.9" fill="#d5ccc6"/>
<rect x="1147.3" y="543.6" width="19.4" height="18.8" fill="#dcd7d2"/>
<rect x="1168.8" y="543.6" width="15.2" height="18.8" fill="#e4e0dc"/>
<rect x="1185.9" y="543.6" width="24.2" height="18.8" fill="#e4e0dc"/>
<rect x="1212.1" y="543.6" width="17.2" height="18.8" fill="#dedad7"/>
<rect x="1216.2" y="547.4" width="9.1" height="9.4" fill="#d5ccc6"/>
<rect x="1231.4" y="543.6" width="12.9" height="18.8" fill="#e1dcd9"/>
<rect x="1246.2" y="543.6" width="21.5" height="18.8" fill="#dcd7d2"/>
<rect x="1269.7" y="543.6" width="25.5" height="18.8" fill="#dedad7"/>
<rect x="1271.9" y="545.5" width="8.7" height="7.9" fill="#d5ccc6"/>
<rect x="1297.2" y="543.6" width="13.6" height="18.8" fill="#e1dcd9"/>
<rect x="1312.8" y="543.6" width="21.7" height="18.8" fill="#e1dcd9"/>
<rect x="1315.3" y="548.2" width="13.8" height="11.0" fill="#d5ccc6"/>
<rect x="1336.5" y="543.6" width="17.8" height="18.8" fill="#dedad7"/>
</g></g>
<g clip-path="url(#c4)"><polygon points="311.0,452.0 466.0,372.0 496.0,452.0" fill="#fdfcfb"/><g transform="rotate(-28 403.5 412.0)">
<rect x="281.6" y="281.2" width="26.6" height="13.6" fill="#dad6d2"/>
<rect x="287.1" y="284.2" width="13.7" height="7.4" fill="#d3ccc6"/>
<rect x="310.4" y="281.2" width="24.3" height="13.6" fill="#dedbd8"/>
<rect x="317.7" y="284.0" width="14.1" height="5.8" fill="#d3ccc6"/>
<rect x="337.0" y="281.2" width="17.8" height="13.6" fill="#e2dedb"/>
<rect x="339.7" y="283.3" width="11.1" height="8.9" fill="#d3ccc6"/>
<rect x="356.9" y="281.2" width="26.7" height="13.6" fill="#dad6d2"/>
<rect x="385.8" y="281.2" width="21.8" height="13.6" fill="#e2dedb"/>
<rect x="390.8" y="283.4" width="12.3" height="6.6" fill="#d3ccc6"/>
<rect x="409.8" y="281.2" width="24.6" height="13.6" fill="#dad6d2"/>
<rect x="436.6" y="281.2" width="12.7" height="13.6" fill="#e2dedb"/>
<rect x="451.5" y="281.2" width="19.7" height="13.6" fill="#e2dedb"/>
<rect x="473.4" y="281.2" width="23.6" height="13.6" fill="#e2dedb"/>
<rect x="474.4" y="284.9" width="9.9" height="8.9" fill="#d3ccc6"/>
<rect x="499.2" y="281.2" width="21.1" height="13.6" fill="#e2dedb"/>
<rect x="506.0" y="284.2" width="10.9" height="5.2" fill="#d3ccc6"/>
<rect x="522.4" y="281.2" width="27.4" height="13.6" fill="#e2dedb"/>
<rect x="278.9" y="297.0" width="24.8" height="12.2" fill="#e2dedb"/>
<rect x="305.9" y="297.0" width="23.9" height="12.2" fill="#e2dedb"/>
<rect x="332.0" y="297.0" width="14.2" height="12.2" fill="#dad6d2"/>
<rect x="348.4" y="297.0" width="21.3" height="12.2" fill="#dedbd8"/>
<rect x="371.9" y="297.0" width="12.7" height="12.2" fill="#dad6d2"/>
<rect x="373.6" y="299.3" width="6.6" height="5.1" fill="#d3ccc6"/>
<rect x="386.8" y="297.0" width="18.3" height="12.2" fill="#dad6d2"/>
<rect x="407.3" y="297.0" width="24.4" height="12.2" fill="#dedbd8"/>
<rect x="433.9" y="297.0" width="22.1" height="12.2" fill="#dad6d2"/>
<rect x="458.3" y="297.0" width="20.7" height="12.2" fill="#dad6d2"/>
<rect x="481.2" y="297.0" width="14.2" height="12.2" fill="#dad6d2"/>
<rect x="485.8" y="298.8" width="8.6" height="7.3" fill="#d3ccc6"/>
<rect x="497.5" y="297.0" width="26.5" height="12.2" fill="#dad6d2"/>
<rect x="500.2" y="300.6" width="14.1" height="6.1" fill="#d3ccc6"/>
<rect x="526.2" y="297.0" width="21.9" height="12.2" fill="#e2dedb"/>
<rect x="277.2" y="311.4" width="14.2" height="16.0" fill="#e2dedb"/>
<rect x="280.6" y="313.8" width="6.6" height="9.3" fill="#d3ccc6"/>
<rect x="293.6" y="311.4" width="15.6" height="16.0" fill="#dad6d2"/>
<rect x="296.4" y="314.7" width="8.1" height="8.6" fill="#d3ccc6"/>
<rect x="311.5" y="311.4" width="12.4" height="16.0" fill="#dad6d2"/>
<rect x="326.1" y="311.4" width="15.1" height="16.0" fill="#dedbd8"/>
<rect x="343.4" y="311.4" width="15.1" height="16.0" fill="#e2dedb"/>
<rect x="360.7" y="311.4" width="14.3" height="16.0" fill="#e2dedb"/>
<rect x="377.2" y="311.4" width="27.0" height="16.0" fill="#dad6d2"/>
<rect x="384.9" y="315.3" width="15.8" height="8.8" fill="#d3ccc6"/>
<rect x="406.4" y="311.4" width="12.4" height="16.0" fill="#e2dedb"/>
<rect x="421.0" y="311.4" width="20.3" height="16.0" fill="#dedbd8"/>
<rect x="443.6" y="311.4" width="19.1" height="16.0" fill="#dad6d2"/>
<rect x="449.1" y="314.7" width="9.9" height="7.6" fill="#d3ccc6"/>
<rect x="464.9" y="311.4" width="22.3" height="16.0" fill="#e2dedb"/>
<rect x="470.6" y="314.5" width="12.5" height="8.7" fill="#d3ccc6"/>
<rect x="489.4" y="311.4" width="22.6" height="16.0" fill="#dad6d2"/>
<rect x="492.2" y="313.6" width="10.3" height="5.8" fill="#d3ccc6"/>
<rect x="514.2" y="311.4" width="26.0" height="16.0" fill="#e2dedb"/>
<rect x="519.6" y="312.4" width="13.0" height="8.6" fill="#d3ccc6"/>
<rect x="293.0" y="329.6" width="25.3" height="7.6" fill="#dedbd8"/>
<rect x="297.6" y="330.7" width="12.6" height="5.7" fill="#d3ccc6"/>
<rect x="320.5" y="329.6" width="14.6" height="7.6" fill="#dad6d2"/>
<rect x="322.5" y="331.9" width="8.8" height="3.9" fill="#d3ccc6"/>
<rect x="337.3" y="329.6" width="23.7" height="7.6" fill="#e2dedb"/>
<rect x="363.2" y="329.6" width="14.4" height="7.6" fill="#dad6d2"/>
<rect x="366.1" y="331.0" width="9.1" height="3.1" fill="#d3ccc6"/>
<rect x="379.8" y="329.6" width="18.1" height="7.6" fill="#e2dedb"/>
<rect x="400.1" y="329.6" width="16.2" height="7.6" fill="#dedbd8"/>
<rect x="418.5" y="329.6" width="22.6" height="7.6" fill="#dedbd8"/>
<rect x="443.3" y="329.6" width="14.3" height="7.6" fill="#dedbd8"/>
<rect x="459.8" y="329.6" width="23.7" height="7.6" fill="#dedbd8"/>
<rect x="465.7" y="331.1" width="10.6" height="4.6" fill="#d3ccc6"/>
<rect x="485.7" y="329.6" width="27.5" height="7.6" fill="#dedbd8"/>
<rect x="494.1" y="332.4" width="13.0" height="5.8" fill="#d3ccc6"/>
<rect x="515.3" y="329.6" width="15.3" height="7.6" fill="#dad6d2"/>
<rect x="532.8" y="329.6" width="23.4" height="7.6" fill="#dedbd8"/>
<rect x="278.6" y="339.5" width="13.3" height="14.2" fill="#dedbd8"/>
<rect x="294.1" y="339.5" width="21.1" height="14.2" fill="#e2dedb"/>
<rect x="299.6" y="344.2" width="9.5" height="6.3" fill="#d3ccc6"/>
<rect x="317.4" y="339.5" width="23.8" height="14.2" fill="#dad6d2"/>
<rect x="322.1" y="342.4" width="14.3" height="8.2" fill="#d3ccc6"/>
<rect x="343.4" y="339.5" width="13.8" height="14.2" fill="#dad6d2"/>
<rect x="344.6" y="340.5" width="7.0" height="7.9" fill="#d3ccc6"/>
<rect x="359.4" y="339.5" width="13.6" height="14.2" fill="#dedbd8"/>
<rect x="361.3" y="340.7" width="7.3" height="8.9" fill="#d3ccc6"/>
<rect x="375.2" y="339.5" width="22.7" height="14.2" fill="#dad6d2"/>
<rect x="400.1" y="339.5" width="24.9" height="14.2" fill="#dad6d2"/>
<rect x="403.5" y="343.7" width="8.6" height="5.9" fill="#d3ccc6"/>
<rect x="427.2" y="339.5" width="22.2" height="14.2" fill="#e2dedb"/>
<rect x="431.1" y="342.4" width="12.0" height="8.8" fill="#d3ccc6"/>
<rect x="451.6" y="339.5" width="12.9" height="14.2" fill="#e2dedb"/>
<rect x="466.7" y="339.5" width="15.0" height="14.2" fill="#dad6d2"/>
<rect x="483.9" y="339.5" width="12.4" height="14.2" fill="#dad6d2"/>
<rect x="498.5" y="339.5" width="25.3" height="14.2" fill="#dedbd8"/>
<rect x="526.0" y="339.5" width="20.7" height="14.2" fill="#dad6d2"/>
<rect x="286.2" y="355.9" width="15.2" height="11.4" fill="#dad6d2"/>
<rect x="303.5" y="355.9" width="18.9" height="11.4" fill="#e2dedb"/>
<rect x="307.8" y="358.2" width="9.9" height="6.9" fill="#d3ccc6"/>
<rect x="324.6" y="355.9" width="18.9" height="11.4" fill="#dad6d2"/>
<rect x="345.8" y="355.9" width="14.2" height="11.4" fill="#dedbd8"/>
<rect x="362.2" y="355.9" width="14.3" height="11.4" fill="#e2dedb"/>
<rect x="363.9" y="358.3" width="7.6" height="8.2" fill="#d3ccc6"/>
<rect x="378.7" y="355.9" width="22.5" height="11.4" fill="#dad6d2"/>
<rect x="403.4" y="355.9" width="14.4" height="11.4" fill="#e2dedb"/>
<rect x="420.0" y="355.9" width="26.2" height="11.4" fill="#dad6d2"/>
<rect x="426.1" y="357.4" width="15.9" height="5.9" fill="#d3ccc6"/>
<rect x="448.3" y="355.9" width="25.5" height="11.4" fill="#e2dedb"/>
<rect x="450.8" y="359.7" width="14.0" height="8.0" fill="#d3ccc6"/>
<rect x="476.0" y="355.9" width="22.3" height="11.4" fill="#dedbd8"/>
<rect x="481.8" y="358.9" width="13.0" height="5.6" fill="#d3ccc6"/>
<rect x="500.5" y="355.9" width="25.9" height="11.4" fill="#dad6d2"/>
<rect x="528.6" y="355.9" width="17.7" height="11.4" fill="#e2dedb"/>
<rect x="532.7" y="358.6" width="7.8" height="8.1" fill="#d3ccc6"/>
<rect x="291.7" y="369.5" width="16.6" height="7.8" fill="#dedbd8"/>
<rect x="310.5" y="369.5" width="12.6" height="7.8" fill="#e2dedb"/>
<rect x="325.3" y="369.5" width="13.1" height="7.8" fill="#dad6d2"/>
<rect x="328.3" y="371.8" width="7.8" height="3.3" fill="#d3ccc6"/>
<rect x="340.6" y="369.5" width="22.9" height="7.8" fill="#dad6d2"/>
<rect x="347.8" y="370.9" width="10.1" height="4.1" fill="#d3ccc6"/>
<rect x="365.8" y="369.5" width="24.3" height="7.8" fill="#dad6d2"/>
<rect x="392.3" y="369.5" width="15.6" height="7.8" fill="#e2dedb"/>
<rect x="396.9" y="371.5" width="9.4" height="4.5" fill="#d3ccc6"/>
<rect x="410.1" y="369.5" width="26.1" height="7.8" fill="#dedbd8"/>
<rect x="438.4" y="369.5" width="24.2" height="7.8" fill="#dad6d2"/>
<rect x="441.5" y="370.7" width="8.8" height="3.7" fill="#d3ccc6"/>
<rect x="464.8" y="369.5" width="13.1" height="7.8" fill="#e2dedb"/>
<rect x="468.5" y="371.5" width="7.1" height="5.1" fill="#d3ccc6"/>
<rect x="480.1" y="369.5" width="15.2" height="7.8" fill="#e2dedb"/>
<rect x="497.5" y="369.5" width="12.4" height="7.8" fill="#dedbd8"/>
<rect x="500.3" y="371.6" width="6.7" height="3.6" fill="#d3ccc6"/>
<rect x="512.1" y="369.5" width="25.8" height="7.8" fill="#dad6d2"/>
<rect x="519.7" y="371.6" width="10.3" height="4.0" fill="#d3ccc6"/>
<rect x="292.5" y="379.5" width="12.9" height="14.3" fill="#dad6d2"/>
<rect x="296.1" y="381.8" width="8.9" height="7.4" fill="#d3ccc6"/>
<rect x="307.6" y="379.5" width="22.7" height="14.3" fill="#dad6d2"/>
<rect x="332.5" y="379.5" width="23.5" height="14.3" fill="#dad6d2"/>
<rect x="358.2" y="379.5" width="26.5" height="14.3" fill="#e2dedb"/>
<rect x="386.9" y="379.5" width="18.7" height="14.3" fill="#e2dedb"/>
<rect x="407.8" y="379.5" width="27.4" height="14.3" fill="#dad6d2"/>
<rect x="413.1" y="383.0" width="10.0" height="8.7" fill="#d3ccc6"/>
<rect x="437.4" y="379.5" width="25.8" height="14.3" fill="#e2dedb"/>
<rect x="440.0" y="381.8" width="11.8" height="9.7" fill="#d3ccc6"/>
<rect x="465.4" y="379.5" width="13.6" height="14.3" fill="#dedbd8"/>
<rect x="481.2" y="379.5" width="19.5" height="14.3" fill="#dad6d2"/>
<rect x="503.0" y="379.5" width="16.6" height="14.3" fill="#dedbd8"/>
<rect x="506.2" y="381.4" width="10.4" height="9.7" fill="#d3ccc6"/>
<rect x="521.7" y="379.5" width="23.4" height="14.3" fill="#dad6d2"/>
<rect x="287.6" y="395.9" width="24.7" height="15.4" fill="#dad6d2"/>
<rect x="294.8" y="399.4" width="8.5" height="7.9" fill="#d3ccc6"/>
<rect x="314.5" y="395.9" width="22.5" height="15.4" fill="#dad6d2"/>
<rect x="317.4" y="399.2" width="13.0" height="7.7" fill="#d3ccc6"/>
<rect x="339.2" y="395.9" width="15.4" height="15.4" fill="#dad6d2"/>
<rect x="356.8" y="395.9" width="12.2" height="15.4" fill="#dad6d2"/>
<rect x="371.2" y="395.9" width="21.2" height="15.4" fill="#e2dedb"/>
<rect x="375.3" y="399.3" width="10.3" height="10.5" fill="#d3ccc6"/>
<rect x="394.6" y="395.9" width="15.0" height="15.4" fill="#e2dedb"/>
<rect x="411.7" y="395.9" width="13.5" height="15.4" fill="#dedbd8"/>
<rect x="415.2" y="400.7" width="8.2" height="8.3" fill="#d3ccc6"/>
<rect x="427.4" y="395.9" width="24.6" height="15.4" fill="#dad6d2"/>
<rect x="434.2" y="400.6" width="13.7" height="10.2" fill="#d3ccc6"/>
<rect x="454.2" y="395.9" width="17.7" height="15.4" fill="#dedbd8"/>
<rect x="455.5" y="398.5" width="9.6" height="7.1" fill="#d3ccc6"/>
<rect x="474.2" y="395.9" width="12.1" height="15.4" fill="#dad6d2"/>
<rect x="488.5" y="395.9" width="20.6" height="15.4" fill="#dad6d2"/>
<rect x="490.1" y="398.2" width="11.2" height="7.6" fill="#d3ccc6"/>
<rect x="511.2" y="395.9" width="22.5" height="15.4" fill="#dedbd8"/>
<rect x="289.8" y="413.5" width="15.8" height="12.5" fill="#e2dedb"/>
<rect x="295.2" y="414.9" width="10.8" height="5.9" fill="#d3ccc6"/>
<rect x="307.8" y="413.5" width="16.2" height="12.5" fill="#dad6d2"/>
<rect x="309.4" y="415.9" width="7.3" height="6.0" fill="#d3ccc6"/>
<rect x="326.3" y="413.5" width="17.6" height="12.5" fill="#dad6d2"/>
<rect x="346.1" y="413.5" width="14.4" height="12.5" fill="#dedbd8"/>
<rect x="362.7" y="413.5" width="18.4" height="12.5" fill="#e2dedb"/>
<rect x="383.2" y="413.5" width="16.5" height="12.5" fill="#dad6d2"/>
<rect x="388.1" y="417.8" width="7.0" height="6.5" fill="#d3ccc6"/>
<rect x="402.0" y="413.5" width="14.7" height="12.5" fill="#dad6d2"/>
<rect x="418.9" y="413.5" width="24.7" height="12.5" fill="#e2dedb"/>
<rect x="445.8" y="413.5" width="24.3" height="12.5" fill="#dedbd8"/>
<rect x="472.2" y="413.5" width="17.6" height="12.5" fill="#dedbd8"/>
<rect x="492.1" y="413.5" width="23.4" height="12.5" fill="#dedbd8"/>
<rect x="497.1" y="417.9" width="13.0" height="8.3" fill="#d3ccc6"/>
<rect x="517.6" y="413.5" width="20.0" height="12.5" fill="#e2dedb"/>
<rect x="288.7" y="428.3" width="25.9" height="13.3" fill="#dad6d2"/>
<rect x="293.6" y="430.2" width="10.5" height="8.6" fill="#d3ccc6"/>
<rect x="316.8" y="428.3" width="15.1" height="13.3" fill="#e2dedb"/>
<rect x="334.1" y="428.3" width="15.6" height="13.3" fill="#e2dedb"/>
<rect x="351.9" y="428.3" width="24.4" height="13.3" fill="#dad6d2"/>
<rect x="359.6" y="430.7" width="14.1" height="8.3" fill="#d3ccc6"/>
<rect x="378.5" y="428.3" width="14.9" height="13.3" fill="#dedbd8"/>
<rect x="395.7" y="428.3" width="22.4" height="13.3" fill="#dad6d2"/>
<rect x="401.5" y="431.1" width="12.5" height="6.8" fill="#d3ccc6"/>
<rect x="420.3" y="428.3" width="26.0" height="13.3" fill="#e2dedb"/>
<rect x="427.1" y="431.3" width="8.9" height="6.2" fill="#d3ccc6"/>
<rect x="448.4" y="428.3" width="24.8" height="13.3" fill="#e2dedb"/>
<rect x="456.3" y="432.8" width="9.8" height="8.6" fill="#d3ccc6"/>
<rect x="475.4" y="428.3" width="23.2" height="13.3" fill="#dedbd8"/>
<rect x="481.7" y="432.1" width="13.1" height="8.6" fill="#d3ccc6"/>
<rect x="500.7" y="428.3" width="27.5" height="13.3" fill="#e2dedb"/>
<rect x="530.4" y="428.3" width="23.7" height="13.3" fill="#dad6d2"/>
<rect x="536.0" y="430.8" width="9.3" height="6.2" fill="#d3ccc6"/>
<rect x="281.7" y="443.8" width="22.0" height="16.4" fill="#dad6d2"/>
<rect x="288.5" y="446.2" width="12.8" height="10.1" fill="#d3ccc6"/>
<rect x="305.9" y="443.8" width="22.3" height="16.4" fill="#dad6d2"/>
<rect x="330.4" y="443.8" width="22.8" height="16.4" fill="#dad6d2"/>
<rect x="337.9" y="448.9" width="10.4" height="9.3" fill="#d3ccc6"/>
<rect x="355.4" y="443.8" width="24.3" height="16.4" fill="#dad6d2"/>
<rect x="362.0" y="445.0" width="9.0" height="9.1" fill="#d3ccc6"/>
<rect x="381.9" y="443.8" width="24.6" height="16.4" fill="#dad6d2"/>
<rect x="408.7" y="443.8" width="15.5" height="16.4" fill="#dad6d2"/>
<rect x="411.7" y="449.2" width="7.4" height="6.9" fill="#d3ccc6"/>
<rect x="426.4" y="443.8" width="16.6" height="16.4" fill="#dedbd8"/>
<rect x="445.2" y="443.8" width="19.4" height="16.4" fill="#dedbd8"/>
<rect x="466.7" y="443.8" width="22.7" height="16.4" fill="#dedbd8"/>
<rect x="491.6" y="443.8" width="19.9" height="16.4" fill="#dedbd8"/>
<rect x="513.7" y="443.8" width="21.7" height="16.4" fill="#e2dedb"/>
<rect x="288.1" y="462.5" width="17.9" height="9.4" fill="#dad6d2"/>
<rect x="290.9" y="463.7" width="10.6" height="4.8" fill="#d3ccc6"/>
<rect x="308.2" y="462.5" width="22.1" height="9.4" fill="#e2dedb"/>
<rect x="332.5" y="462.5" width="27.3" height="9.4" fill="#e2dedb"/>
<rect x="338.1" y="464.2" width="12.5" height="6.5" fill="#d3ccc6"/>
<rect x="361.9" y="462.5" width="20.6" height="9.4" fill="#dad6d2"/>
<rect x="384.7" y="462.5" width="21.3" height="9.4" fill="#dedbd8"/>
<rect x="408.2" y="462.5" width="16.9" height="9.4" fill="#dedbd8"/>
<rect x="427.3" y="462.5" width="19.2" height="9.4" fill="#e2dedb"/>
<rect x="448.7" y="462.5" width="21.3" height="9.4" fill="#e2dedb"/>
<rect x="452.9" y="464.2" width="10.9" height="6.0" fill="#d3ccc6"/>
<rect x="472.2" y="462.5" width="19.5" height="9.4" fill="#e2dedb"/>
<rect x="493.9" y="462.5" width="18.4" height="9.4" fill="#dad6d2"/>
<rect x="498.1" y="464.7" width="10.6" height="4.0" fill="#d3ccc6"/>
<rect x="514.5" y="462.5" width="19.9" height="9.4" fill="#dedbd8"/>
<rect x="519.1" y="465.6" width="11.1" height="5.9" fill="#d3ccc6"/>
<rect x="281.6" y="474.1" width="24.0" height="12.8" fill="#dedbd8"/>
<rect x="307.8" y="474.1" width="25.4" height="12.8" fill="#dad6d2"/>
<rect x="335.4" y="474.1" width="13.8" height="12.8" fill="#dad6d2"/>
<rect x="339.2" y="476.9" width="7.1" height="7.1" fill="#d3ccc6"/>
<rect x="351.4" y="474.1" width="23.7" height="12.8" fill="#dedbd8"/>
<rect x="357.5" y="476.4" width="7.9" height="6.2" fill="#d3ccc6"/>
<rect x="377.3" y="474.1" width="22.8" height="12.8" fill="#dedbd8"/>
<rect x="402.2" y="474.1" width="26.0" height="12.8" fill="#e2dedb"/>
<rect x="407.2" y="475.4" width="13.6" height="5.8" fill="#d3ccc6"/>
<rect x="430.4" y="474.1" width="18.2" height="12.8" fill="#dedbd8"/>
<rect x="450.9" y="474.1" width="21.6" height="12.8" fill="#e2dedb"/>
<rect x="474.7" y="474.1" width="14.3" height="12.8" fill="#dad6d2"/>
<rect x="476.3" y="478.2" width="5.1" height="7.7" fill="#d3ccc6"/>
<rect x="491.2" y="474.1" width="17.1" height="12.8" fill="#dad6d2"/>
<rect x="510.5" y="474.1" width="14.0" height="12.8" fill="#e2dedb"/>
<rect x="512.4" y="478.0" width="7.2" height="7.3" fill="#d3ccc6"/>
<rect x="526.7" y="474.1" width="16.5" height="12.8" fill="#dedbd8"/>
<rect x="530.0" y="478.5" width="6.9" height="8.0" fill="#d3ccc6"/>
<rect x="275.7" y="489.1" width="24.9" height="8.0" fill="#e2dedb"/>
<rect x="302.8" y="489.1" width="14.3" height="8.0" fill="#dedbd8"/>
<rect x="304.7" y="490.2" width="8.4" height="5.3" fill="#d3ccc6"/>
<rect x="319.3" y="489.1" width="22.9" height="8.0" fill="#dedbd8"/>
<rect x="344.5" y="489.1" width="21.2" height="8.0" fill="#dad6d2"/>
<rect x="367.9" y="489.1" width="20.6" height="8.0" fill="#dedbd8"/>
<rect x="371.2" y="491.2" width="10.0" height="5.1" fill="#d3ccc6"/>
<rect x="390.7" y="489.1" width="18.3" height="8.0" fill="#dad6d2"/>
<rect x="395.4" y="491.9" width="9.8" height="4.3" fill="#d3ccc6"/>
<rect x="411.2" y="489.1" width="15.2" height="8.0" fill="#e2dedb"/>
<rect x="414.5" y="491.5" width="5.3" height="5.5" fill="#d3ccc6"/>
<rect x="428.6" y="489.1" width="16.1" height="8.0" fill="#dad6d2"/>
<rect x="446.9" y="489.1" width="20.2" height="8.0" fill="#dad6d2"/>
<rect x="450.1" y="491.7" width="12.8" height="5.9" fill="#d3ccc6"/>
<rect x="469.3" y="489.1" width="14.8" height="8.0" fill="#dad6d2"/>
<rect x="486.3" y="489.1" width="18.3" height="8.0" fill="#e2dedb"/>
<rect x="489.4" y="490.1" width="7.1" height="3.3" fill="#d3ccc6"/>
<rect x="506.9" y="489.1" width="21.3" height="8.0" fill="#dedbd8"/>
<rect x="530.3" y="489.1" width="14.3" height="8.0" fill="#dad6d2"/>
<rect x="533.3" y="490.9" width="6.4" height="5.9" fill="#d3ccc6"/>
<rect x="290.6" y="499.2" width="26.2" height="16.6" fill="#dad6d2"/>
<rect x="319.1" y="499.2" width="17.2" height="16.6" fill="#dad6d2"/>
<rect x="323.1" y="504.0" width="10.1" height="6.9" fill="#d3ccc6"/>
<rect x="338.5" y="499.2" width="18.8" height="16.6" fill="#dedbd8"/>
<rect x="359.5" y="499.2" width="26.1" height="16.6" fill="#dedbd8"/>
<rect x="361.2" y="501.8" width="14.5" height="5.8" fill="#d3ccc6"/>
<rect x="387.8" y="499.2" width="19.3" height="16.6" fill="#e2dedb"/>
<rect x="389.9" y="501.7" width="12.6" height="7.0" fill="#d3ccc6"/>
<rect x="409.4" y="499.2" width="27.5" height="16.6" fill="#dedbd8"/>
<rect x="417.2" y="504.3" width="17.5" height="7.2" fill="#d3ccc6"/>
<rect x="439.0" y="499.2" width="27.2" height="16.6" fill="#dad6d2"/>
<rect x="468.4" y="499.2" width="21.7" height="16.6" fill="#dad6d2"/>
<rect x="492.3" y="499.2" width="19.5" height="16.6" fill="#dedbd8"/>
<rect x="514.0" y="499.2" width="22.7" height="16.6" fill="#e2dedb"/>
<rect x="293.1" y="518.1" width="12.7" height="14.5" fill="#e2dedb"/>
<rect x="308.0" y="518.1" width="24.1" height="14.5" fill="#dad6d2"/>
<rect x="334.4" y="518.1" width="14.9" height="14.5" fill="#dedbd8"/>
<rect x="338.2" y="522.0" width="8.2" height="8.9" fill="#d3ccc6"/>
<rect x="351.5" y="518.1" width="24.1" height="14.5" fill="#e2dedb"/>
<rect x="377.8" y="518.1" width="13.3" height="14.5" fill="#dad6d2"/>
<rect x="393.3" y="518.1" width="13.7" height="14.5" fill="#dad6d2"/>
<rect x="398.0" y="521.4" width="4.8" height="5.3" fill="#d3ccc6"/>
<rect x="409.2" y="518.1" width="24.4" height="14.5" fill="#e2dedb"/>
<rect x="435.8" y="518.1" width="14.8" height="14.5" fill="#e2dedb"/>
<rect x="452.8" y="518.1" width="27.1" height="14.5" fill="#dedbd8"/>
<rect x="482.0" y="518.1" width="25.0" height="14.5" fill="#dedbd8"/>
<rect x="509.3" y="518.1" width="15.7" height="14.5" fill="#e2dedb"/>
<rect x="527.2" y="518.1" width="24.0" height="14.5" fill="#dedbd8"/>
<rect x="289.0" y="534.7" width="15.8" height="14.0" fill="#e2dedb"/>
<rect x="307.0" y="534.7" width="21.3" height="14.0" fill="#e2dedb"/>
<rect x="312.0" y="537.5" width="12.1" height="7.6" fill="#d3ccc6"/>
<rect x="330.5" y="534.7" width="26.6" height="14.0" fill="#e2dedb"/>
<rect x="359.3" y="534.7" width="22.4" height="14.0" fill="#e2dedb"/>
<rect x="362.2" y="536.7" width="14.5" height="5.5" fill="#d3ccc6"/>
<rect x="383.9" y="534.7" width="24.7" height="14.0" fill="#dedbd8"/>
<rect x="388.8" y="535.9" width="8.9" height="7.0" fill="#d3ccc6"/>
<rect x="410.7" y="534.7" width="24.7" height="14.0" fill="#dedbd8"/>
<rect x="415.7" y="536.3" width="13.2" height="8.9" fill="#d3ccc6"/>
<rect x="437.6" y="534.7" width="16.7" height="14.0" fill="#dedbd8"/>
<rect x="442.6" y="536.6" width="7.7" height="6.6" fill="#d3ccc6"/>
<rect x="456.5" y="534.7" width="16.3" height="14.0" fill="#e2dedb"/>
<rect x="459.3" y="537.4" width="10.9" height="5.7" fill="#d3ccc6"/>
<rect x="475.0" y="534.7" width="24.8" height="14.0" fill="#dedbd8"/>
<rect x="480.3" y="537.3" width="8.8" height="6.6" fill="#d3ccc6"/>
<rect x="502.0" y="534.7" width="13.4" height="14.0" fill="#dad6d2"/>
<rect x="504.3" y="539.2" width="9.3" height="5.3" fill="#d3ccc6"/>
<rect x="517.7" y="534.7" width="16.8" height="14.0" fill="#dedbd8"/>
<rect x="521.4" y="539.4" width="6.8" height="8.6" fill="#d3ccc6"/>
</g></g>
<g clip-path="url(#c5)"><polygon points="366.0,175.0 431.0,62.0 513.0,37.0 517.0,80.0 566.0,78.0 578.0,79.0 601.0,171.0 626.0,185.0 640.0,222.0 621.0,300.0 456.0,335.0 380.0,263.0" fill="#fdfcfb"/><g transform="rotate(-16 503.0 186.0)">
<rect x="289.2" y="-46.4" width="19.4" height="12.9" fill="#ddd6cf"/>
<rect x="311.6" y="-46.4" width="12.1" height="12.9" fill="#e2dbd5"/>
<rect x="326.8" y="-46.4" width="17.6" height="12.9" fill="#eae7e4"/>
<rect x="330.9" y="-45.4" width="6.5" height="8.8" fill="#d8cfc8"/>
<rect x="347.3" y="-46.4" width="20.4" height="12.9" fill="#e0dcd8"/>
<rect x="370.7" y="-46.4" width="23.7" height="12.9" fill="#ddd6cf"/>
<rect x="374.8" y="-44.2" width="10.3" height="5.2" fill="#d8cfc8"/>
<rect x="397.4" y="-46.4" width="20.5" height="12.9" fill="#eae7e4"/>
<rect x="401.2" y="-43.0" width="8.2" height="6.2" fill="#d8cfc8"/>
<rect x="420.8" y="-46.4" width="16.6" height="12.9" fill="#ddd6cf"/>
<rect x="424.9" y="-45.2" width="6.6" height="9.6" fill="#d8cfc8"/>
<rect x="440.4" y="-46.4" width="17.9" height="12.9" fill="#e6e3e0"/>
<rect x="445.0" y="-42.1" width="8.6" height="9.3" fill="#d8cfc8"/>
<rect x="461.3" y="-46.4" width="18.6" height="12.9" fill="#e2dbd5"/>
<rect x="482.9" y="-46.4" width="20.0" height="12.9" fill="#e6e3e0"/>
<rect x="505.9" y="-46.4" width="28.2" height="12.9" fill="#e0dcd8"/>
<rect x="512.6" y="-44.5" width="17.5" height="6.3" fill="#d8cfc8"/>
<rect x="537.0" y="-46.4" width="24.1" height="12.9" fill="#eae7e4"/>
<rect x="544.4" y="-43.0" width="16.2" height="9.4" fill="#d8cfc8"/>
<rect x="564.1" y="-46.4" width="14.9" height="12.9" fill="#e2dbd5"/>
<rect x="582.0" y="-46.4" width="27.4" height="12.9" fill="#eae7e4"/>
<rect x="586.8" y="-45.1" width="14.6" height="5.8" fill="#d8cfc8"/>
<rect x="612.4" y="-46.4" width="13.8" height="12.9" fill="#eae7e4"/>
<rect x="615.0" y="-44.9" width="5.7" height="5.5" fill="#d8cfc8"/>
<rect x="629.2" y="-46.4" width="26.4" height="12.9" fill="#e6e3e0"/>
<rect x="637.6" y="-41.8" width="9.7" height="7.3" fill="#d8cfc8"/>
<rect x="658.6" y="-46.4" width="25.3" height="12.9" fill="#ddd6cf"/>
<rect x="686.9" y="-46.4" width="18.3" height="12.9" fill="#e6e3e0"/>
<rect x="689.0" y="-42.2" width="12.6" height="7.0" fill="#d8cfc8"/>
<rect x="708.2" y="-46.4" width="13.2" height="12.9" fill="#eae7e4"/>
<rect x="711.2" y="-43.5" width="6.8" height="6.5" fill="#d8cfc8"/>
<rect x="724.5" y="-46.4" width="27.1" height="12.9" fill="#e0dcd8"/>
<rect x="281.4" y="-30.5" width="16.0" height="17.8" fill="#e0dcd8"/>
<rect x="300.3" y="-30.5" width="19.4" height="17.8" fill="#eae7e4"/>
<rect x="322.7" y="-30.5" width="16.2" height="17.8" fill="#ddd6cf"/>
<rect x="342.0" y="-30.5" width="28.4" height="17.8" fill="#eae7e4"/>
<rect x="373.4" y="-30.5" width="22.9" height="17.8" fill="#e6e3e0"/>
<rect x="399.3" y="-30.5" width="17.2" height="17.8" fill="#e0dcd8"/>
<rect x="402.9" y="-25.9" width="11.7" height="11.3" fill="#d8cfc8"/>
<rect x="419.5" y="-30.5" width="19.4" height="17.8" fill="#e6e3e0"/>
<rect x="441.9" y="-30.5" width="16.2" height="17.8" fill="#e6e3e0"/>
<rect x="461.1" y="-30.5" width="28.9" height="17.8" fill="#ddd6cf"/>
<rect x="493.0" y="-30.5" width="14.6" height="17.8" fill="#eae7e4"/>
<rect x="496.3" y="-28.9" width="7.3" height="8.8" fill="#d8cfc8"/>
<rect x="510.6" y="-30.5" width="28.3" height="17.8" fill="#ddd6cf"/>
<rect x="512.8" y="-28.2" width="13.3" height="6.4" fill="#d8cfc8"/>
<rect x="541.9" y="-30.5" width="19.0" height="17.8" fill="#eae7e4"/>
<rect x="548.1" y="-25.9" width="8.3" height="11.6" fill="#d8cfc8"/>
<rect x="563.9" y="-30.5" width="26.5" height="17.8" fill="#e2dbd5"/>
<rect x="566.6" y="-27.0" width="14.5" height="9.2" fill="#d8cfc8"/>
<rect x="593.4" y="-30.5" width="21.6" height="17.8" fill="#ddd6cf"/>
<rect x="599.7" y="-27.6" width="9.8" height="10.4" fill="#d8cfc8"/>
<rect x="618.0" y="-30.5" width="23.5" height="17.8" fill="#eae7e4"/>
<rect x="621.8" y="-29.4" width="10.8" height="10.5" fill="#d8cfc8"/>
<rect x="644.4" y="-30.5" width="21.0" height="17.8" fill="#eae7e4"/>
<rect x="649.0" y="-26.5" width="10.4" height="10.2" fill="#d8cfc8"/>
<rect x="668.4" y="-30.5" width="15.9" height="17.8" fill="#ddd6cf"/>
<rect x="670.4" y="-24.9" width="9.6" height="8.0" fill="#d8cfc8"/>
<rect x="687.3" y="-30.5" width="25.5" height="17.8" fill="#ddd6cf"/>
<rect x="715.8" y="-30.5" width="27.7" height="17.8" fill="#eae7e4"/>
<rect x="722.8" y="-26.7" width="14.7" height="7.5" fill="#d8cfc8"/>
<rect x="275.6" y="-9.7" width="15.0" height="11.7" fill="#e0dcd8"/>
<rect x="277.2" y="-8.4" width="6.2" height="8.1" fill="#d8cfc8"/>
<rect x="293.6" y="-9.7" width="20.3" height="11.7" fill="#e2dbd5"/>
<rect x="316.9" y="-9.7" width="24.3" height="11.7" fill="#ddd6cf"/>
<rect x="344.2" y="-9.7" width="15.1" height="11.7" fill="#e0dcd8"/>
<rect x="346.5" y="-7.5" width="9.9" height="6.0" fill="#d8cfc8"/>
<rect x="362.3" y="-9.7" width="12.2" height="11.7" fill="#ddd6cf"/>
<rect x="365.5" y="-6.2" width="8.6" height="8.8" fill="#d8cfc8"/>
<rect x="377.5" y="-9.7" width="28.1" height="11.7" fill="#e6e3e0"/>
<rect x="408.6" y="-9.7" width="15.6" height="11.7" fill="#e2dbd5"/>
<rect x="427.1" y="-9.7" width="11.6" height="11.7" fill="#e6e3e0"/>
<rect x="441.7" y="-9.7" width="30.3" height="11.7" fill="#e6e3e0"/>
<rect x="475.1" y="-9.7" width="17.0" height="11.7" fill="#e0dcd8"/>
<rect x="480.5" y="-6.2" width="8.1" height="8.0" fill="#d8cfc8"/>
<rect x="495.1" y="-9.7" width="20.4" height="11.7" fill="#e2dbd5"/>
<rect x="498.9" y="-7.3" width="9.2" height="7.3" fill="#d8cfc8"/>
<rect x="518.5" y="-9.7" width="15.4" height="11.7" fill="#e0dcd8"/>
<rect x="523.5" y="-7.1" width="6.9" height="4.5" fill="#d8cfc8"/>
<rect x="537.0" y="-9.7" width="15.6" height="11.7" fill="#eae7e4"/>
<rect x="541.7" y="-5.4" width="10.0" height="7.7" fill="#d8cfc8"/>
<rect x="555.6" y="-9.7" width="18.8" height="11.7" fill="#e0dcd8"/>
<rect x="560.6" y="-7.7" width="9.7" height="7.3" fill="#d8cfc8"/>
<rect x="577.3" y="-9.7" width="14.8" height="11.7" fill="#e2dbd5"/>
<rect x="581.2" y="-8.2" width="7.9" height="6.0" fill="#d8cfc8"/>
<rect x="595.1" y="-9.7" width="23.0" height="11.7" fill="#eae7e4"/>
<rect x="599.2" y="-7.5" width="11.9" height="5.7" fill="#d8cfc8"/>
<rect x="621.2" y="-9.7" width="14.4" height="11.7" fill="#ddd6cf"/>
<rect x="623.8" y="-7.0" width="9.1" height="6.3" fill="#d8cfc8"/>
<rect x="638.6" y="-9.7" width="16.0" height="11.7" fill="#eae7e4"/>
<rect x="657.6" y="-9.7" width="17.1" height="11.7" fill="#e0dcd8"/>
<rect x="662.7" y="-6.0" width="7.2" height="6.8" fill="#d8cfc8"/>
<rect x="677.7" y="-9.7" width="28.6" height="11.7" fill="#ddd6cf"/>
<rect x="709.4" y="-9.7" width="24.1" height="11.7" fill="#e6e3e0"/>
<rect x="285.5" y="5.0" width="29.2" height="23.1" fill="#eae7e4"/>
<rect x="317.7" y="5.0" width="16.4" height="23.1" fill="#e6e3e0"/>
<rect x="337.1" y="5.0" width="23.7" height="23.1" fill="#e6e3e0"/>
<rect x="339.1" y="10.8" width="14.5" height="15.5" fill="#d8cfc8"/>
<rect x="363.8" y="5.0" width="21.0" height="23.1" fill="#e6e3e0"/>
<rect x="370.3" y="6.1" width="8.5" height="12.6" fill="#d8cfc8"/>
<rect x="387.8" y="5.0" width="21.1" height="23.1" fill="#ddd6cf"/>
<rect x="394.4" y="10.0" width="9.9" height="15.0" fill="#d8cfc8"/>
<rect x="411.8" y="5.0" width="18.2" height="23.1" fill="#e2dbd5"/>
<rect x="433.1" y="5.0" width="12.6" height="23.1" fill="#eae7e4"/>
<rect x="437.2" y="7.7" width="6.9" height="11.1" fill="#d8cfc8"/>
<rect x="448.7" y="5.0" width="26.6" height="23.1" fill="#e6e3e0"/>
<rect x="451.2" y="10.0" width="9.9" height="10.7" fill="#d8cfc8"/>
<rect x="478.2" y="5.0" width="18.2" height="23.1" fill="#ddd6cf"/>
<rect x="480.2" y="9.1" width="9.0" height="9.6" fill="#d8cfc8"/>
<rect x="499.4" y="5.0" width="14.2" height="23.1" fill="#eae7e4"/>
<rect x="516.6" y="5.0" width="11.7" height="23.1" fill="#e2dbd5"/>
<rect x="531.4" y="5.0" width="16.0" height="23.1" fill="#e0dcd8"/>
<rect x="550.3" y="5.0" width="18.6" height="23.1" fill="#e0dcd8"/>
<rect x="571.9" y="5.0" width="17.5" height="23.1" fill="#e0dcd8"/>
<rect x="576.0" y="7.3" width="7.1" height="13.2" fill="#d8cfc8"/>
<rect x="592.4" y="5.0" width="29.7" height="23.1" fill="#e0dcd8"/>
<rect x="599.9" y="12.3" width="16.4" height="10.2" fill="#d8cfc8"/>
<rect x="625.1" y="5.0" width="16.4" height="23.1" fill="#e2dbd5"/>
<rect x="644.5" y="5.0" width="27.6" height="23.1" fill="#e2dbd5"/>
<rect x="652.7" y="11.3" width="14.8" height="15.3" fill="#d8cfc8"/>
<rect x="675.1" y="5.0" width="28.6" height="23.1" fill="#eae7e4"/>
<rect x="676.9" y="7.2" width="16.3" height="14.5" fill="#d8cfc8"/>
<rect x="706.7" y="5.0" width="27.2" height="23.1" fill="#e0dcd8"/>
<rect x="283.7" y="31.0" width="11.8" height="18.6" fill="#e0dcd8"/>
<rect x="298.5" y="31.0" width="27.5" height="18.6" fill="#e2dbd5"/>
<rect x="329.0" y="31.0" width="21.9" height="18.6" fill="#eae7e4"/>
<rect x="331.2" y="32.6" width="10.3" height="11.5" fill="#d8cfc8"/>
<rect x="353.9" y="31.0" width="24.1" height="18.6" fill="#ddd6cf"/>
<rect x="357.1" y="36.8" width="9.1" height="12.3" fill="#d8cfc8"/>
<rect x="381.0" y="31.0" width="27.2" height="18.6" fill="#eae7e4"/>
<rect x="411.2" y="31.0" width="30.2" height="18.6" fill="#ddd6cf"/>
<rect x="416.2" y="32.4" width="10.5" height="7.2" fill="#d8cfc8"/>
<rect x="444.4" y="31.0" width="20.9" height="18.6" fill="#e2dbd5"/>
<rect x="468.3" y="31.0" width="16.1" height="18.6" fill="#ddd6cf"/>
<rect x="473.8" y="32.7" width="6.2" height="10.2" fill="#d8cfc8"/>
<rect x="487.4" y="31.0" width="22.2" height="18.6" fill="#ddd6cf"/>
<rect x="491.2" y="37.1" width="10.4" height="10.0" fill="#d8cfc8"/>
<rect x="512.6" y="31.0" width="14.9" height="18.6" fill="#eae7e4"/>
<rect x="530.5" y="31.0" width="23.9" height="18.6" fill="#ddd6cf"/>
<rect x="536.0" y="34.1" width="15.8" height="9.3" fill="#d8cfc8"/>
<rect x="557.4" y="31.0" width="29.0" height="18.6" fill="#ddd6cf"/>
<rect x="589.4" y="31.0" width="25.4" height="18.6" fill="#e6e3e0"/>
<rect x="617.8" y="31.0" width="23.5" height="18.6" fill="#eae7e4"/>
<rect x="621.1" y="32.3" width="11.9" height="12.5" fill="#d8cfc8"/>
<rect x="644.3" y="31.0" width="27.2" height="18.6" fill="#e2dbd5"/>
<rect x="648.1" y="36.8" width="17.3" height="12.9" fill="#d8cfc8"/>
<rect x="674.6" y="31.0" width="21.4" height="18.6" fill="#e0dcd8"/>
<rect x="680.1" y="35.2" width="10.6" height="10.2" fill="#d8cfc8"/>
<rect x="699.0" y="31.0" width="18.0" height="18.6" fill="#e0dcd8"/>
<rect x="720.0" y="31.0" width="26.5" height="18.6" fill="#eae7e4"/>
<rect x="272.4" y="52.6" width="25.1" height="9.5" fill="#e2dbd5"/>
<rect x="276.8" y="56.1" width="16.6" height="5.7" fill="#d8cfc8"/>
<rect x="300.5" y="52.6" width="20.7" height="9.5" fill="#e2dbd5"/>
<rect x="303.8" y="53.9" width="12.4" height="5.0" fill="#d8cfc8"/>
<rect x="324.2" y="52.6" width="28.1" height="9.5" fill="#ddd6cf"/>
<rect x="355.3" y="52.6" width="11.6" height="9.5" fill="#eae7e4"/>
<rect x="357.7" y="55.6" width="6.1" height="5.7" fill="#d8cfc8"/>
<rect x="369.9" y="52.6" width="27.4" height="9.5" fill="#e0dcd8"/>
<rect x="373.7" y="54.7" width="12.4" height="7.2" fill="#d8cfc8"/>
<rect x="400.3" y="52.6" width="12.1" height="9.5" fill="#e6e3e0"/>
<rect x="415.5" y="52.6" width="18.5" height="9.5" fill="#ddd6cf"/>
<rect x="437.0" y="52.6" width="19.2" height="9.5" fill="#e6e3e0"/>
<rect x="440.0" y="56.2" width="10.0" height="5.1" fill="#d8cfc8"/>
<rect x="459.2" y="52.6" width="22.4" height="9.5" fill="#e2dbd5"/>
<rect x="464.2" y="54.6" width="10.0" height="4.9" fill="#d8cfc8"/>
<rect x="484.6" y="52.6" width="15.2" height="9.5" fill="#e6e3e0"/>
<rect x="502.8" y="52.6" width="20.7" height="9.5" fill="#e0dcd8"/>
<rect x="526.5" y="52.6" width="23.1" height="9.5" fill="#e0dcd8"/>
<rect x="532.0" y="53.8" width="12.4" height="4.6" fill="#d8cfc8"/>
<rect x="552.6" y="52.6" width="19.8" height="9.5" fill="#e6e3e0"/>
<rect x="575.4" y="52.6" width="27.1" height="9.5" fill="#e6e3e0"/>
<rect x="605.6" y="52.6" width="21.5" height="9.5" fill="#eae7e4"/>
<rect x="630.1" y="52.6" width="21.3" height="9.5" fill="#e0dcd8"/>
<rect x="654.4" y="52.6" width="19.7" height="9.5" fill="#e6e3e0"/>
<rect x="660.1" y="55.4" width="11.5" height="3.9" fill="#d8cfc8"/>
<rect x="677.2" y="52.6" width="16.9" height="9.5" fill="#e2dbd5"/>
<rect x="680.7" y="54.4" width="10.4" height="6.6" fill="#d8cfc8"/>
<rect x="697.0" y="52.6" width="17.7" height="9.5" fill="#eae7e4"/>
<rect x="717.7" y="52.6" width="20.7" height="9.5" fill="#e0dcd8"/>
<rect x="287.7" y="65.0" width="24.2" height="19.6" fill="#e6e3e0"/>
<rect x="294.0" y="70.6" width="9.5" height="8.9" fill="#d8cfc8"/>
<rect x="314.9" y="65.0" width="21.5" height="19.6" fill="#eae7e4"/>
<rect x="339.3" y="65.0" width="15.6" height="19.6" fill="#e6e3e0"/>
<rect x="343.8" y="70.0" width="7.4" height="8.0" fill="#d8cfc8"/>
<rect x="358.0" y="65.0" width="15.0" height="19.6" fill="#e6e3e0"/>
<rect x="361.1" y="71.1" width="5.4" height="7.1" fill="#d8cfc8"/>
<rect x="376.0" y="65.0" width="28.8" height="19.6" fill="#ddd6cf"/>
<rect x="379.9" y="67.5" width="13.9" height="8.9" fill="#d8cfc8"/>
<rect x="407.7" y="65.0" width="24.3" height="19.6" fill="#e2dbd5"/>
<rect x="435.0" y="65.0" width="16.8" height="19.6" fill="#ddd6cf"/>
<rect x="438.0" y="68.7" width="7.8" height="10.6" fill="#d8cfc8"/>
<rect x="454.9" y="65.0" width="25.4" height="19.6" fill="#e2dbd5"/>
<rect x="456.1" y="70.2" width="9.5" height="9.0" fill="#d8cfc8"/>
<rect x="483.3" y="65.0" width="18.6" height="19.6" fill="#e6e3e0"/>
<rect x="504.9" y="65.0" width="23.0" height="19.6" fill="#e6e3e0"/>
<rect x="512.3" y="70.0" width="14.4" height="7.8" fill="#d8cfc8"/>
<rect x="530.9" y="65.0" width="15.5" height="19.6" fill="#e6e3e0"/>
<rect x="535.2" y="69.2" width="10.9" height="10.0" fill="#d8cfc8"/>
<rect x="549.4" y="65.0" width="21.5" height="19.6" fill="#eae7e4"/>
<rect x="573.8" y="65.0" width="15.8" height="19.6" fill="#e2dbd5"/>
<rect x="579.3" y="71.6" width="7.5" height="7.9" fill="#d8cfc8"/>
<rect x="592.7" y="65.0" width="19.0" height="19.6" fill="#e0dcd8"/>
<rect x="597.3" y="70.3" width="9.1" height="11.3" fill="#d8cfc8"/>
<rect x="614.7" y="65.0" width="13.9" height="19.6" fill="#e2dbd5"/>
<rect x="616.0" y="70.6" width="6.1" height="7.7" fill="#d8cfc8"/>
<rect x="631.5" y="65.0" width="15.1" height="19.6" fill="#e0dcd8"/>
<rect x="649.6" y="65.0" width="14.7" height="19.6" fill="#e2dbd5"/>
<rect x="667.3" y="65.0" width="20.8" height="19.6" fill="#e0dcd8"/>
<rect x="691.1" y="65.0" width="16.6" height="19.6" fill="#e2dbd5"/>
<rect x="696.3" y="68.5" width="11.3" height="12.4" fill="#d8cfc8"/>
<rect x="710.7" y="65.0" width="21.7" height="19.6" fill="#e6e3e0"/>
<rect x="285.3" y="87.6" width="27.2" height="9.3" fill="#e6e3e0"/>
<rect x="286.8" y="88.9" width="12.9" height="4.5" fill="#d8cfc8"/>
<rect x="315.5" y="87.6" width="11.4" height="9.3" fill="#e0dcd8"/>
<rect x="318.8" y="91.3" width="7.4" height="5.2" fill="#d8cfc8"/>
<rect x="329.9" y="87.6" width="17.8" height="9.3" fill="#eae7e4"/>
<rect x="350.7" y="87.6" width="15.3" height="9.3" fill="#e6e3e0"/>
<rect x="353.2" y="89.5" width="9.9" height="4.3" fill="#d8cfc8"/>
<rect x="369.0" y="87.6" width="27.8" height="9.3" fill="#e0dcd8"/>
<rect x="399.8" y="87.6" width="12.9" height="9.3" fill="#eae7e4"/>
<rect x="415.7" y="87.6" width="16.7" height="9.3" fill="#e0dcd8"/>
<rect x="417.6" y="90.7" width="10.6" height="6.9" fill="#d8cfc8"/>
<rect x="435.4" y="87.6" width="16.4" height="9.3" fill="#e2dbd5"/>
<rect x="454.8" y="87.6" width="17.7" height="9.3" fill="#eae7e4"/>
<rect x="460.7" y="90.7" width="10.2" height="6.6" fill="#d8cfc8"/>
<rect x="475.6" y="87.6" width="19.0" height="9.3" fill="#e6e3e0"/>
<rect x="497.6" y="87.6" width="27.1" height="9.3" fill="#e0dcd8"/>
<rect x="527.6" y="87.6" width="23.7" height="9.3" fill="#e0dcd8"/>
<rect x="534.1" y="91.1" width="9.4" height="3.7" fill="#d8cfc8"/>
<rect x="554.4" y="87.6" width="25.1" height="9.3" fill="#e2dbd5"/>
<rect x="582.5" y="87.6" width="19.2" height="9.3" fill="#e0dcd8"/>
<rect x="583.6" y="90.1" width="12.8" height="4.0" fill="#d8cfc8"/>
<rect x="604.7" y="87.6" width="21.8" height="9.3" fill="#ddd6cf"/>
<rect x="609.2" y="91.2" width="14.4" height="5.1" fill="#d8cfc8"/>
<rect x="629.5" y="87.6" width="18.0" height="9.3" fill="#e0dcd8"/>
<rect x="631.7" y="90.2" width="7.7" height="5.6" fill="#d8cfc8"/>
<rect x="650.5" y="87.6" width="25.7" height="9.3" fill="#eae7e4"/>
<rect x="679.3" y="87.6" width="29.5" height="9.3" fill="#e6e3e0"/>
<rect x="686.2" y="88.8" width="10.7" height="6.4" fill="#d8cfc8"/>
<rect x="711.8" y="87.6" width="29.7" height="9.3" fill="#e0dcd8"/>
<rect x="715.5" y="89.4" width="16.5" height="5.0" fill="#d8cfc8"/>
<rect x="284.3" y="100.0" width="12.5" height="21.3" fill="#eae7e4"/>
<rect x="299.8" y="100.0" width="17.3" height="21.3" fill="#e6e3e0"/>
<rect x="304.9" y="105.6" width="11.7" height="7.7" fill="#d8cfc8"/>
<rect x="320.1" y="100.0" width="16.2" height="21.3" fill="#e0dcd8"/>
<rect x="321.8" y="106.1" width="10.7" height="13.2" fill="#d8cfc8"/>
<rect x="339.3" y="100.0" width="27.2" height="21.3" fill="#ddd6cf"/>
<rect x="347.5" y="102.4" width="16.9" height="13.7" fill="#d8cfc8"/>
<rect x="369.6" y="100.0" width="29.1" height="21.3" fill="#eae7e4"/>
<rect x="401.6" y="100.0" width="30.0" height="21.3" fill="#e2dbd5"/>
<rect x="404.3" y="104.7" width="18.2" height="12.0" fill="#d8cfc8"/>
<rect x="434.7" y="100.0" width="13.8" height="21.3" fill="#e6e3e0"/>
<rect x="438.8" y="102.5" width="9.5" height="14.3" fill="#d8cfc8"/>
<rect x="451.5" y="100.0" width="22.9" height="21.3" fill="#e0dcd8"/>
<rect x="458.7" y="105.1" width="14.8" height="9.2" fill="#d8cfc8"/>
<rect x="477.4" y="100.0" width="14.6" height="21.3" fill="#ddd6cf"/>
<rect x="495.1" y="100.0" width="18.7" height="21.3" fill="#e2dbd5"/>
<rect x="496.7" y="106.7" width="9.3" height="11.7" fill="#d8cfc8"/>
<rect x="516.7" y="100.0" width="30.0" height="21.3" fill="#ddd6cf"/>
<rect x="518.6" y="102.1" width="17.5" height="13.2" fill="#d8cfc8"/>
<rect x="549.7" y="100.0" width="11.5" height="21.3" fill="#e0dcd8"/>
<rect x="564.2" y="100.0" width="21.2" height="21.3" fill="#ddd6cf"/>
<rect x="588.4" y="100.0" width="26.8" height="21.3" fill="#e0dcd8"/>
<rect x="592.6" y="104.1" width="14.8" height="14.0" fill="#d8cfc8"/>
<rect x="618.3" y="100.0" width="21.0" height="21.3" fill="#eae7e4"/>
<rect x="623.0" y="106.0" width="9.8" height="12.2" fill="#d8cfc8"/>
<rect x="642.3" y="100.0" width="12.4" height="21.3" fill="#e2dbd5"/>
<rect x="646.8" y="101.8" width="4.7" height="11.4" fill="#d8cfc8"/>
<rect x="657.7" y="100.0" width="26.9" height="21.3" fill="#e2dbd5"/>
<rect x="666.3" y="103.2" width="9.0" height="8.9" fill="#d8cfc8"/>
<rect x="687.6" y="100.0" width="24.7" height="21.3" fill="#ddd6cf"/>
<rect x="695.4" y="104.9" width="10.7" height="9.7" fill="#d8cfc8"/>
<rect x="715.3" y="100.0" width="14.2" height="21.3" fill="#e0dcd8"/>
<rect x="732.5" y="100.0" width="22.5" height="21.3" fill="#e2dbd5"/>
<rect x="738.0" y="104.8" width="14.8" height="13.5" fill="#d8cfc8"/>
<rect x="285.3" y="124.2" width="15.1" height="20.8" fill="#e6e3e0"/>
<rect x="303.3" y="124.2" width="24.6" height="20.8" fill="#e2dbd5"/>
<rect x="331.0" y="124.2" width="13.7" height="20.8" fill="#e0dcd8"/>
<rect x="347.7" y="124.2" width="23.6" height="20.8" fill="#ddd6cf"/>
<rect x="350.7" y="125.7" width="13.6" height="11.6" fill="#d8cfc8"/>
<rect x="374.3" y="124.2" width="29.7" height="20.8" fill="#e2dbd5"/>
<rect x="406.9" y="124.2" width="20.0" height="20.8" fill="#ddd6cf"/>
<rect x="429.9" y="124.2" width="23.3" height="20.8" fill="#e2dbd5"/>
<rect x="437.7" y="126.6" width="8.5" height="14.0" fill="#d8cfc8"/>
<rect x="456.3" y="124.2" width="25.9" height="20.8" fill="#e6e3e0"/>
<rect x="485.1" y="124.2" width="17.9" height="20.8" fill="#eae7e4"/>
<rect x="506.1" y="124.2" width="24.9" height="20.8" fill="#ddd6cf"/>
<rect x="534.0" y="124.2" width="18.0" height="20.8" fill="#e2dbd5"/>
<rect x="555.0" y="124.2" width="19.3" height="20.8" fill="#ddd6cf"/>
<rect x="577.3" y="124.2" width="30.2" height="20.8" fill="#e6e3e0"/>
<rect x="586.8" y="125.5" width="12.5" height="11.9" fill="#d8cfc8"/>
<rect x="610.5" y="124.2" width="24.9" height="20.8" fill="#e0dcd8"/>
<rect x="615.7" y="130.6" width="9.8" height="8.7" fill="#d8cfc8"/>
<rect x="638.5" y="124.2" width="21.1" height="20.8" fill="#ddd6cf"/>
<rect x="662.5" y="124.2" width="26.6" height="20.8" fill="#ddd6cf"/>
<rect x="666.0" y="126.3" width="9.9" height="8.8" fill="#d8cfc8"/>
<rect x="692.1" y="124.2" width="12.8" height="20.8" fill="#e0dcd8"/>
<rect x="707.9" y="124.2" width="25.3" height="20.8" fill="#e0dcd8"/>
<rect x="714.1" y="125.4" width="16.9" height="12.5" fill="#d8cfc8"/>
<rect x="275.1" y="148.0" width="27.8" height="21.8" fill="#ddd6cf"/>
<rect x="277.8" y="149.2" width="10.6" height="11.3" fill="#d8cfc8"/>
<rect x="305.8" y="148.0" width="20.6" height="21.8" fill="#e6e3e0"/>
<rect x="329.4" y="148.0" width="24.1" height="21.8" fill="#e0dcd8"/>
<rect x="356.5" y="148.0" width="15.7" height="21.8" fill="#ddd6cf"/>
<rect x="360.3" y="149.7" width="9.4" height="12.7" fill="#d8cfc8"/>
<rect x="375.2" y="148.0" width="26.7" height="21.8" fill="#ddd6cf"/>
<rect x="376.7" y="153.2" width="13.5" height="10.5" fill="#d8cfc8"/>
<rect x="404.9" y="148.0" width="12.0" height="21.8" fill="#e0dcd8"/>
<rect x="419.9" y="148.0" width="25.3" height="21.8" fill="#eae7e4"/>
<rect x="422.5" y="149.9" width="13.4" height="14.8" fill="#d8cfc8"/>
<rect x="448.2" y="148.0" width="28.4" height="21.8" fill="#e6e3e0"/>
<rect x="455.5" y="153.7" width="10.5" height="12.4" fill="#d8cfc8"/>
<rect x="479.6" y="148.0" width="25.5" height="21.8" fill="#e0dcd8"/>
<rect x="508.2" y="148.0" width="18.6" height="21.8" fill="#e2dbd5"/>
<rect x="529.8" y="148.0" width="15.4" height="21.8" fill="#e0dcd8"/>
<rect x="548.2" y="148.0" width="29.1" height="21.8" fill="#e2dbd5"/>
<rect x="580.3" y="148.0" width="20.8" height="21.8" fill="#e0dcd8"/>
<rect x="583.3" y="149.6" width="7.6" height="12.4" fill="#d8cfc8"/>
<rect x="604.2" y="148.0" width="27.3" height="21.8" fill="#e2dbd5"/>
<rect x="634.5" y="148.0" width="18.9" height="21.8" fill="#ddd6cf"/>
<rect x="635.6" y="149.1" width="11.2" height="9.6" fill="#d8cfc8"/>
<rect x="656.4" y="148.0" width="23.9" height="21.8" fill="#eae7e4"/>
<rect x="683.3" y="148.0" width="27.9" height="21.8" fill="#e2dbd5"/>
<rect x="714.2" y="148.0" width="19.2" height="21.8" fill="#e6e3e0"/>
<rect x="293.4" y="172.8" width="21.5" height="22.6" fill="#eae7e4"/>
<rect x="318.0" y="172.8" width="27.1" height="22.6" fill="#e0dcd8"/>
<rect x="348.1" y="172.8" width="16.4" height="22.6" fill="#ddd6cf"/>
<rect x="367.5" y="172.8" width="27.0" height="22.6" fill="#ddd6cf"/>
<rect x="370.1" y="178.7" width="14.2" height="8.0" fill="#d8cfc8"/>
<rect x="397.5" y="172.8" width="29.7" height="22.6" fill="#e0dcd8"/>
<rect x="430.2" y="172.8" width="26.1" height="22.6" fill="#eae7e4"/>
<rect x="437.4" y="178.9" width="12.2" height="10.5" fill="#d8cfc8"/>
<rect x="459.3" y="172.8" width="26.1" height="22.6" fill="#ddd6cf"/>
<rect x="461.7" y="175.6" width="12.3" height="15.2" fill="#d8cfc8"/>
<rect x="488.5" y="172.8" width="21.4" height="22.6" fill="#e0dcd8"/>
<rect x="493.8" y="179.1" width="11.1" height="15.0" fill="#d8cfc8"/>
<rect x="512.8" y="172.8" width="26.7" height="22.6" fill="#ddd6cf"/>
<rect x="515.4" y="179.6" width="11.9" height="14.0" fill="#d8cfc8"/>
<rect x="542.5" y="172.8" width="13.2" height="22.6" fill="#e0dcd8"/>
<rect x="544.5" y="179.5" width="8.3" height="10.0" fill="#d8cfc8"/>
<rect x="558.7" y="172.8" width="23.3" height="22.6" fill="#e0dcd8"/>
<rect x="562.4" y="179.0" width="10.4" height="14.3" fill="#d8cfc8"/>
<rect x="584.9" y="172.8" width="11.5" height="22.6" fill="#e0dcd8"/>
<rect x="586.3" y="179.0" width="8.1" height="13.3" fill="#d8cfc8"/>
<rect x="599.4" y="172.8" width="21.1" height="22.6" fill="#e0dcd8"/>
<rect x="603.0" y="176.9" width="14.4" height="11.7" fill="#d8cfc8"/>
<rect x="623.5" y="172.8" width="19.7" height="22.6" fill="#e2dbd5"/>
<rect x="627.9" y="180.2" width="13.3" height="11.0" fill="#d8cfc8"/>
<rect x="646.2" y="172.8" width="20.6" height="22.6" fill="#e2dbd5"/>
<rect x="648.4" y="176.4" width="13.4" height="10.1" fill="#d8cfc8"/>
<rect x="669.8" y="172.8" width="14.5" height="22.6" fill="#e0dcd8"/>
<rect x="671.0" y="175.4" width="8.7" height="7.7" fill="#d8cfc8"/>
<rect x="687.2" y="172.8" width="17.9" height="22.6" fill="#e2dbd5"/>
<rect x="692.6" y="175.6" width="7.1" height="7.8" fill="#d8cfc8"/>
<rect x="708.1" y="172.8" width="27.3" height="22.6" fill="#e6e3e0"/>
<rect x="271.4" y="198.4" width="23.7" height="20.8" fill="#eae7e4"/>
<rect x="274.5" y="200.6" width="14.9" height="8.5" fill="#d8cfc8"/>
<rect x="298.1" y="198.4" width="21.5" height="20.8" fill="#eae7e4"/>
<rect x="300.8" y="201.3" width="11.5" height="8.6" fill="#d8cfc8"/>
<rect x="322.6" y="198.4" width="12.6" height="20.8" fill="#e2dbd5"/>
<rect x="326.8" y="204.3" width="6.9" height="13.5" fill="#d8cfc8"/>
<rect x="338.2" y="198.4" width="28.8" height="20.8" fill="#ddd6cf"/>
<rect x="340.5" y="199.7" width="9.9" height="8.4" fill="#d8cfc8"/>
<rect x="370.0" y="198.4" width="25.6" height="20.8" fill="#ddd6cf"/>
<rect x="398.5" y="198.4" width="27.0" height="20.8" fill="#ddd6cf"/>
<rect x="401.9" y="205.2" width="16.9" height="12.5" fill="#d8cfc8"/>
<rect x="428.6" y="198.4" width="15.7" height="20.8" fill="#eae7e4"/>
<rect x="433.7" y="205.4" width="7.3" height="7.7" fill="#d8cfc8"/>
<rect x="447.3" y="198.4" width="17.7" height="20.8" fill="#e2dbd5"/>
<rect x="448.9" y="201.0" width="6.7" height="8.5" fill="#d8cfc8"/>
<rect x="468.0" y="198.4" width="28.7" height="20.8" fill="#e0dcd8"/>
<rect x="475.0" y="204.8" width="15.8" height="12.0" fill="#d8cfc8"/>
<rect x="499.8" y="198.4" width="25.5" height="20.8" fill="#e2dbd5"/>
<rect x="528.3" y="198.4" width="18.0" height="20.8" fill="#eae7e4"/>
<rect x="532.5" y="203.8" width="8.9" height="8.8" fill="#d8cfc8"/>
<rect x="549.3" y="198.4" width="27.9" height="20.8" fill="#eae7e4"/>
<rect x="580.2" y="198.4" width="30.6" height="20.8" fill="#ddd6cf"/>
<rect x="613.7" y="198.4" width="11.9" height="20.8" fill="#e6e3e0"/>
<rect x="628.6" y="198.4" width="17.9" height="20.8" fill="#e2dbd5"/>
<rect x="649.5" y="198.4" width="23.6" height="20.8" fill="#eae7e4"/>
<rect x="656.8" y="200.3" width="12.8" height="13.6" fill="#d8cfc8"/>
<rect x="676.1" y="198.4" width="19.7" height="20.8" fill="#e0dcd8"/>
<rect x="698.8" y="198.4" width="28.0" height="20.8" fill="#e6e3e0"/>
<rect x="707.5" y="203.5" width="14.3" height="13.2" fill="#d8cfc8"/>
<rect x="729.8" y="198.4" width="24.0" height="20.8" fill="#ddd6cf"/>
<rect x="735.0" y="201.0" width="14.1" height="12.3" fill="#d8cfc8"/>
<rect x="280.0" y="222.1" width="25.7" height="14.5" fill="#e2dbd5"/>
<rect x="308.7" y="222.1" width="20.6" height="14.5" fill="#eae7e4"/>
<rect x="332.3" y="222.1" width="13.6" height="14.5" fill="#ddd6cf"/>
<rect x="333.6" y="226.5" width="6.5" height="10.0" fill="#d8cfc8"/>
<rect x="348.9" y="222.1" width="24.3" height="14.5" fill="#e6e3e0"/>
<rect x="355.0" y="227.1" width="10.1" height="6.2" fill="#d8cfc8"/>
<rect x="376.2" y="222.1" width="19.9" height="14.5" fill="#e6e3e0"/>
<rect x="379.2" y="224.2" width="6.9" height="7.4" fill="#d8cfc8"/>
<rect x="399.1" y="222.1" width="21.7" height="14.5" fill="#eae7e4"/>
<rect x="423.7" y="222.1" width="15.6" height="14.5" fill="#e2dbd5"/>
<rect x="442.3" y="222.1" width="18.8" height="14.5" fill="#e6e3e0"/>
<rect x="464.1" y="222.1" width="11.9" height="14.5" fill="#ddd6cf"/>
<rect x="466.0" y="225.3" width="6.8" height="7.0" fill="#d8cfc8"/>
<rect x="479.0" y="222.1" width="25.6" height="14.5" fill="#e6e3e0"/>
<rect x="507.6" y="222.1" width="13.1" height="14.5" fill="#e6e3e0"/>
<rect x="509.9" y="226.2" width="7.1" height="8.3" fill="#d8cfc8"/>
<rect x="523.7" y="222.1" width="20.9" height="14.5" fill="#e6e3e0"/>
<rect x="547.6" y="222.1" width="17.2" height="14.5" fill="#eae7e4"/>
<rect x="550.1" y="225.9" width="9.2" height="7.4" fill="#d8cfc8"/>
<rect x="567.8" y="222.1" width="15.2" height="14.5" fill="#e6e3e0"/>
<rect x="586.0" y="222.1" width="15.4" height="14.5" fill="#eae7e4"/>
<rect x="589.8" y="225.4" width="5.8" height="8.6" fill="#d8cfc8"/>
<rect x="604.5" y="222.1" width="27.8" height="14.5" fill="#e6e3e0"/>
<rect x="609.9" y="223.9" width="15.5" height="7.9" fill="#d8cfc8"/>
<rect x="635.3" y="222.1" width="13.6" height="14.5" fill="#e2dbd5"/>
<rect x="651.9" y="222.1" width="19.6" height="14.5" fill="#eae7e4"/>
<rect x="653.9" y="223.9" width="12.5" height="5.5" fill="#d8cfc8"/>
<rect x="674.5" y="222.1" width="29.2" height="14.5" fill="#e0dcd8"/>
<rect x="681.8" y="223.6" width="11.2" height="5.7" fill="#d8cfc8"/>
<rect x="706.7" y="222.1" width="27.3" height="14.5" fill="#e2dbd5"/>
<rect x="715.4" y="224.1" width="11.0" height="8.7" fill="#d8cfc8"/>
<rect x="273.0" y="239.7" width="28.0" height="16.2" fill="#eae7e4"/>
<rect x="280.3" y="241.3" width="11.8" height="9.6" fill="#d8cfc8"/>
<rect x="304.0" y="239.7" width="14.8" height="16.2" fill="#e6e3e0"/>
<rect x="309.3" y="242.3" width="6.2" height="9.9" fill="#d8cfc8"/>
<rect x="321.7" y="239.7" width="22.9" height="16.2" fill="#e2dbd5"/>
<rect x="347.6" y="239.7" width="26.2" height="16.2" fill="#e2dbd5"/>
<rect x="352.1" y="245.0" width="15.5" height="11.5" fill="#d8cfc8"/>
<rect x="376.8" y="239.7" width="15.5" height="16.2" fill="#ddd6cf"/>
<rect x="381.2" y="244.0" width="6.6" height="6.1" fill="#d8cfc8"/>
<rect x="395.3" y="239.7" width="26.8" height="16.2" fill="#e0dcd8"/>
<rect x="425.1" y="239.7" width="29.0" height="16.2" fill="#e0dcd8"/>
<rect x="429.2" y="245.0" width="16.4" height="7.2" fill="#d8cfc8"/>
<rect x="457.1" y="239.7" width="23.9" height="16.2" fill="#e2dbd5"/>
<rect x="462.0" y="243.5" width="9.5" height="11.2" fill="#d8cfc8"/>
<rect x="484.0" y="239.7" width="13.4" height="16.2" fill="#e6e3e0"/>
<rect x="500.3" y="239.7" width="12.2" height="16.2" fill="#e2dbd5"/>
<rect x="515.6" y="239.7" width="29.7" height="16.2" fill="#ddd6cf"/>
<rect x="518.7" y="245.1" width="16.9" height="8.8" fill="#d8cfc8"/>
<rect x="548.2" y="239.7" width="24.9" height="16.2" fill="#e0dcd8"/>
<rect x="576.2" y="239.7" width="13.6" height="16.2" fill="#e6e3e0"/>
<rect x="579.2" y="241.4" width="6.4" height="9.4" fill="#d8cfc8"/>
<rect x="592.7" y="239.7" width="30.5" height="16.2" fill="#e2dbd5"/>
<rect x="626.2" y="239.7" width="12.2" height="16.2" fill="#e0dcd8"/>
<rect x="629.8" y="241.5" width="7.9" height="6.8" fill="#d8cfc8"/>
<rect x="641.4" y="239.7" width="27.7" height="16.2" fill="#ddd6cf"/>
<rect x="645.4" y="244.9" width="10.0" height="8.8" fill="#d8cfc8"/>
<rect x="672.1" y="239.7" width="26.4" height="16.2" fill="#eae7e4"/>
<rect x="701.5" y="239.7" width="22.7" height="16.2" fill="#e6e3e0"/>
<rect x="708.5" y="240.8" width="8.0" height="10.6" fill="#d8cfc8"/>
<rect x="727.2" y="239.7" width="20.8" height="16.2" fill="#ddd6cf"/>
<rect x="730.3" y="244.6" width="12.2" height="7.7" fill="#d8cfc8"/>
<rect x="278.6" y="258.9" width="14.7" height="11.4" fill="#e2dbd5"/>
<rect x="280.5" y="260.5" width="10.5" height="8.0" fill="#d8cfc8"/>
<rect x="296.3" y="258.9" width="17.4" height="11.4" fill="#e2dbd5"/>
<rect x="298.7" y="259.9" width="7.6" height="4.4" fill="#d8cfc8"/>
<rect x="316.7" y="258.9" width="23.8" height="11.4" fill="#e0dcd8"/>
<rect x="343.5" y="258.9" width="22.9" height="11.4" fill="#e2dbd5"/>
<rect x="346.6" y="262.8" width="8.4" height="4.9" fill="#d8cfc8"/>
<rect x="369.4" y="258.9" width="19.7" height="11.4" fill="#ddd6cf"/>
<rect x="373.5" y="260.1" width="9.9" height="7.5" fill="#d8cfc8"/>
<rect x="392.0" y="258.9" width="14.9" height="11.4" fill="#ddd6cf"/>
<rect x="394.2" y="261.5" width="9.6" height="6.0" fill="#d8cfc8"/>
<rect x="409.9" y="258.9" width="13.0" height="11.4" fill="#eae7e4"/>
<rect x="425.9" y="258.9" width="20.3" height="11.4" fill="#e2dbd5"/>
<rect x="430.9" y="262.0" width="10.2" height="4.9" fill="#d8cfc8"/>
<rect x="449.2" y="258.9" width="22.3" height="11.4" fill="#eae7e4"/>
<rect x="452.0" y="262.3" width="7.8" height="6.8" fill="#d8cfc8"/>
<rect x="474.6" y="258.9" width="26.1" height="11.4" fill="#ddd6cf"/>
<rect x="483.1" y="261.4" width="16.4" height="4.7" fill="#d8cfc8"/>
<rect x="503.7" y="258.9" width="20.5" height="11.4" fill="#eae7e4"/>
<rect x="527.2" y="258.9" width="15.6" height="11.4" fill="#eae7e4"/>
<rect x="545.8" y="258.9" width="21.0" height="11.4" fill="#ddd6cf"/>
<rect x="569.8" y="258.9" width="29.2" height="11.4" fill="#eae7e4"/>
<rect x="573.2" y="263.1" width="18.4" height="6.1" fill="#d8cfc8"/>
<rect x="602.1" y="258.9" width="16.6" height="11.4" fill="#e0dcd8"/>
<rect x="621.7" y="258.9" width="19.5" height="11.4" fill="#ddd6cf"/>
<rect x="628.0" y="260.5" width="11.9" height="6.0" fill="#d8cfc8"/>
<rect x="644.2" y="258.9" width="26.4" height="11.4" fill="#ddd6cf"/>
<rect x="673.6" y="258.9" width="30.1" height="11.4" fill="#eae7e4"/>
<rect x="679.8" y="260.0" width="15.6" height="8.6" fill="#d8cfc8"/>
<rect x="706.7" y="258.9" width="23.1" height="11.4" fill="#e6e3e0"/>
<rect x="712.7" y="262.3" width="10.4" height="4.3" fill="#d8cfc8"/>
<rect x="732.8" y="258.9" width="18.4" height="11.4" fill="#e6e3e0"/>
<rect x="734.0" y="260.5" width="12.2" height="6.0" fill="#d8cfc8"/>
<rect x="276.0" y="273.2" width="15.7" height="23.5" fill="#eae7e4"/>
<rect x="277.1" y="279.1" width="8.1" height="10.2" fill="#d8cfc8"/>
<rect x="294.7" y="273.2" width="25.3" height="23.5" fill="#ddd6cf"/>
<rect x="323.0" y="273.2" width="25.2" height="23.5" fill="#e2dbd5"/>
<rect x="351.2" y="273.2" width="23.6" height="23.5" fill="#e0dcd8"/>
<rect x="377.7" y="273.2" width="13.9" height="23.5" fill="#eae7e4"/>
<rect x="380.3" y="278.9" width="9.1" height="12.8" fill="#d8cfc8"/>
<rect x="394.6" y="273.2" width="19.9" height="23.5" fill="#eae7e4"/>
<rect x="396.1" y="275.1" width="9.9" height="13.4" fill="#d8cfc8"/>
<rect x="417.4" y="273.2" width="25.2" height="23.5" fill="#e2dbd5"/>
<rect x="421.3" y="276.6" width="14.0" height="12.1" fill="#d8cfc8"/>
<rect x="445.6" y="273.2" width="12.2" height="23.5" fill="#ddd6cf"/>
<rect x="448.8" y="277.4" width="8.4" height="12.9" fill="#d8cfc8"/>
<rect x="460.8" y="273.2" width="29.5" height="23.5" fill="#e6e3e0"/>
<rect x="493.3" y="273.2" width="21.8" height="23.5" fill="#eae7e4"/>
<rect x="498.7" y="275.5" width="14.2" height="8.3" fill="#d8cfc8"/>
<rect x="518.1" y="273.2" width="29.6" height="23.5" fill="#e0dcd8"/>
<rect x="550.6" y="273.2" width="14.6" height="23.5" fill="#e6e3e0"/>
<rect x="553.6" y="280.3" width="6.3" height="15.5" fill="#d8cfc8"/>
<rect x="568.3" y="273.2" width="18.3" height="23.5" fill="#eae7e4"/>
<rect x="589.6" y="273.2" width="28.4" height="23.5" fill="#e6e3e0"/>
<rect x="594.8" y="279.9" width="17.9" height="15.8" fill="#d8cfc8"/>
<rect x="620.9" y="273.2" width="23.4" height="23.5" fill="#eae7e4"/>
<rect x="647.3" y="273.2" width="23.8" height="23.5" fill="#e2dbd5"/>
<rect x="651.8" y="278.9" width="8.2" height="12.4" fill="#d8cfc8"/>
<rect x="674.1" y="273.2" width="24.6" height="23.5" fill="#e6e3e0"/>
<rect x="701.6" y="273.2" width="25.1" height="23.5" fill="#e2dbd5"/>
<rect x="704.2" y="278.6" width="16.6" height="9.8" fill="#d8cfc8"/>
<rect x="729.8" y="273.2" width="26.1" height="23.5" fill="#e6e3e0"/>
<rect x="732.7" y="277.8" width="13.5" height="9.5" fill="#d8cfc8"/>
<rect x="282.9" y="299.7" width="19.5" height="8.8" fill="#eae7e4"/>
<rect x="305.4" y="299.7" width="23.7" height="8.8" fill="#ddd6cf"/>
<rect x="310.2" y="301.8" width="14.7" height="5.5" fill="#d8cfc8"/>
<rect x="332.0" y="299.7" width="18.2" height="8.8" fill="#eae7e4"/>
<rect x="353.3" y="299.7" width="26.6" height="8.8" fill="#e6e3e0"/>
<rect x="358.8" y="301.5" width="14.9" height="3.6" fill="#d8cfc8"/>
<rect x="382.9" y="299.7" width="18.3" height="8.8" fill="#e6e3e0"/>
<rect x="387.4" y="300.8" width="12.5" height="4.1" fill="#d8cfc8"/>
<rect x="404.2" y="299.7" width="16.9" height="8.8" fill="#ddd6cf"/>
<rect x="424.1" y="299.7" width="14.6" height="8.8" fill="#ddd6cf"/>
<rect x="441.7" y="299.7" width="20.4" height="8.8" fill="#e6e3e0"/>
<rect x="465.1" y="299.7" width="28.2" height="8.8" fill="#ddd6cf"/>
<rect x="474.4" y="302.3" width="12.9" height="5.1" fill="#d8cfc8"/>
<rect x="496.2" y="299.7" width="18.5" height="8.8" fill="#e6e3e0"/>
<rect x="497.3" y="302.8" width="10.2" height="4.0" fill="#d8cfc8"/>
<rect x="517.7" y="299.7" width="29.2" height="8.8" fill="#e6e3e0"/>
<rect x="549.9" y="299.7" width="26.1" height="8.8" fill="#eae7e4"/>
<rect x="579.0" y="299.7" width="19.4" height="8.8" fill="#e0dcd8"/>
<rect x="581.0" y="301.3" width="13.4" height="6.3" fill="#d8cfc8"/>
<rect x="601.3" y="299.7" width="14.5" height="8.8" fill="#ddd6cf"/>
<rect x="604.1" y="301.7" width="10.4" height="3.6" fill="#d8cfc8"/>
<rect x="618.8" y="299.7" width="20.1" height="8.8" fill="#e6e3e0"/>
<rect x="641.9" y="299.7" width="24.0" height="8.8" fill="#eae7e4"/>
<rect x="646.2" y="302.3" width="9.1" height="5.4" fill="#d8cfc8"/>
<rect x="668.9" y="299.7" width="28.0" height="8.8" fill="#e2dbd5"/>
<rect x="699.8" y="299.7" width="23.1" height="8.8" fill="#e2dbd5"/>
<rect x="725.9" y="299.7" width="29.0" height="8.8" fill="#eae7e4"/>
<rect x="292.8" y="311.5" width="14.6" height="22.7" fill="#e6e3e0"/>
<rect x="310.4" y="311.5" width="24.4" height="22.7" fill="#e0dcd8"/>
<rect x="311.8" y="314.7" width="10.8" height="11.0" fill="#d8cfc8"/>
<rect x="337.8" y="311.5" width="13.7" height="22.7" fill="#eae7e4"/>
<rect x="341.9" y="316.8" width="6.0" height="13.5" fill="#d8cfc8"/>
<rect x="354.5" y="311.5" width="29.2" height="22.7" fill="#e6e3e0"/>
<rect x="356.5" y="317.0" width="17.3" height="13.4" fill="#d8cfc8"/>
<rect x="386.7" y="311.5" width="16.0" height="22.7" fill="#eae7e4"/>
<rect x="405.7" y="311.5" width="20.5" height="22.7" fill="#ddd6cf"/>
<rect x="429.3" y="311.5" width="28.4" height="22.7" fill="#eae7e4"/>
<rect x="435.8" y="316.0" width="13.8" height="15.2" fill="#d8cfc8"/>
<rect x="460.7" y="311.5" width="24.8" height="22.7" fill="#e6e3e0"/>
<rect x="464.1" y="315.1" width="11.4" height="11.9" fill="#d8cfc8"/>
<rect x="488.6" y="311.5" width="21.1" height="22.7" fill="#e6e3e0"/>
<rect x="512.7" y="311.5" width="26.4" height="22.7" fill="#e6e3e0"/>
<rect x="518.5" y="318.8" width="16.1" height="11.2" fill="#d8cfc8"/>
<rect x="542.1" y="311.5" width="30.1" height="22.7" fill="#ddd6cf"/>
<rect x="575.1" y="311.5" width="19.6" height="22.7" fill="#ddd6cf"/>
<rect x="597.7" y="311.5" width="22.2" height="22.7" fill="#eae7e4"/>
<rect x="603.2" y="315.7" width="9.8" height="10.5" fill="#d8cfc8"/>
<rect x="622.9" y="311.5" width="30.3" height="22.7" fill="#e6e3e0"/>
<rect x="656.2" y="311.5" width="24.6" height="22.7" fill="#ddd6cf"/>
<rect x="683.8" y="311.5" width="20.9" height="22.7" fill="#e2dbd5"/>
<rect x="707.7" y="311.5" width="17.5" height="22.7" fill="#ddd6cf"/>
<rect x="709.8" y="314.8" width="7.6" height="14.3" fill="#d8cfc8"/>
<rect x="728.1" y="311.5" width="14.9" height="22.7" fill="#e0dcd8"/>
<rect x="729.5" y="315.6" width="7.0" height="14.6" fill="#d8cfc8"/>
<rect x="273.6" y="337.2" width="16.9" height="14.0" fill="#ddd6cf"/>
<rect x="293.4" y="337.2" width="12.5" height="14.0" fill="#eae7e4"/>
<rect x="309.0" y="337.2" width="19.8" height="14.0" fill="#ddd6cf"/>
<rect x="331.8" y="337.2" width="22.3" height="14.0" fill="#eae7e4"/>
<rect x="335.4" y="339.5" width="12.2" height="7.1" fill="#d8cfc8"/>
<rect x="357.1" y="337.2" width="16.8" height="14.0" fill="#eae7e4"/>
<rect x="358.4" y="341.0" width="7.9" height="8.1" fill="#d8cfc8"/>
<rect x="376.9" y="337.2" width="18.0" height="14.0" fill="#e6e3e0"/>
<rect x="381.2" y="339.9" width="8.6" height="6.1" fill="#d8cfc8"/>
<rect x="397.9" y="337.2" width="13.6" height="14.0" fill="#e2dbd5"/>
<rect x="414.5" y="337.2" width="15.4" height="14.0" fill="#eae7e4"/>
<rect x="418.3" y="342.3" width="7.5" height="8.5" fill="#d8cfc8"/>
<rect x="432.9" y="337.2" width="14.1" height="14.0" fill="#ddd6cf"/>
<rect x="450.0" y="337.2" width="12.7" height="14.0" fill="#e0dcd8"/>
<rect x="465.7" y="337.2" width="14.4" height="14.0" fill="#ddd6cf"/>
<rect x="483.1" y="337.2" width="17.6" height="14.0" fill="#e0dcd8"/>
<rect x="503.7" y="337.2" width="21.5" height="14.0" fill="#e0dcd8"/>
<rect x="505.1" y="341.1" width="11.2" height="9.5" fill="#d8cfc8"/>
<rect x="528.2" y="337.2" width="12.1" height="14.0" fill="#eae7e4"/>
<rect x="543.3" y="337.2" width="20.7" height="14.0" fill="#e0dcd8"/>
<rect x="567.0" y="337.2" width="25.0" height="14.0" fill="#e0dcd8"/>
<rect x="574.2" y="342.0" width="9.9" height="9.5" fill="#d8cfc8"/>
<rect x="595.0" y="337.2" width="15.8" height="14.0" fill="#eae7e4"/>
<rect x="598.8" y="341.0" width="5.7" height="8.0" fill="#d8cfc8"/>
<rect x="613.8" y="337.2" width="23.8" height="14.0" fill="#eae7e4"/>
<rect x="619.2" y="338.5" width="12.9" height="6.1" fill="#d8cfc8"/>
<rect x="640.6" y="337.2" width="28.6" height="14.0" fill="#ddd6cf"/>
<rect x="642.8" y="338.9" width="15.1" height="9.2" fill="#d8cfc8"/>
<rect x="672.2" y="337.2" width="15.1" height="14.0" fill="#ddd6cf"/>
<rect x="675.6" y="341.5" width="9.7" height="6.0" fill="#d8cfc8"/>
<rect x="690.3" y="337.2" width="12.7" height="14.0" fill="#e2dbd5"/>
<rect x="693.9" y="340.2" width="5.6" height="8.8" fill="#d8cfc8"/>
<rect x="706.0" y="337.2" width="12.2" height="14.0" fill="#ddd6cf"/>
<rect x="710.0" y="341.6" width="8.6" height="8.0" fill="#d8cfc8"/>
<rect x="721.2" y="337.2" width="22.9" height="14.0" fill="#e6e3e0"/>
<rect x="722.5" y="341.8" width="14.5" height="6.4" fill="#d8cfc8"/>
<rect x="278.1" y="354.2" width="17.3" height="15.6" fill="#e0dcd8"/>
<rect x="298.4" y="354.2" width="18.6" height="15.6" fill="#ddd6cf"/>
<rect x="301.3" y="359.5" width="9.5" height="8.6" fill="#d8cfc8"/>
<rect x="320.0" y="354.2" width="22.5" height="15.6" fill="#e6e3e0"/>
<rect x="323.7" y="356.6" width="14.6" height="5.9" fill="#d8cfc8"/>
<rect x="345.5" y="354.2" width="22.5" height="15.6" fill="#e0dcd8"/>
<rect x="371.0" y="354.2" width="29.3" height="15.6" fill="#e0dcd8"/>
<rect x="378.8" y="356.5" width="13.7" height="9.8" fill="#d8cfc8"/>
<rect x="403.3" y="354.2" width="15.2" height="15.6" fill="#e2dbd5"/>
<rect x="408.2" y="357.0" width="10.0" height="6.7" fill="#d8cfc8"/>
<rect x="421.5" y="354.2" width="19.1" height="15.6" fill="#ddd6cf"/>
<rect x="424.5" y="357.3" width="9.3" height="7.3" fill="#d8cfc8"/>
<rect x="443.6" y="354.2" width="16.4" height="15.6" fill="#e6e3e0"/>
<rect x="449.4" y="359.7" width="11.1" height="6.7" fill="#d8cfc8"/>
<rect x="463.0" y="354.2" width="20.0" height="15.6" fill="#e2dbd5"/>
<rect x="466.2" y="358.7" width="13.3" height="7.0" fill="#d8cfc8"/>
<rect x="486.0" y="354.2" width="18.8" height="15.6" fill="#e6e3e0"/>
<rect x="491.2" y="357.8" width="12.9" height="10.8" fill="#d8cfc8"/>
<rect x="507.9" y="354.2" width="27.7" height="15.6" fill="#e6e3e0"/>
<rect x="538.6" y="354.2" width="12.8" height="15.6" fill="#eae7e4"/>
<rect x="540.3" y="357.1" width="6.4" height="9.4" fill="#d8cfc8"/>
<rect x="554.4" y="354.2" width="19.1" height="15.6" fill="#eae7e4"/>
<rect x="560.4" y="357.1" width="8.5" height="8.5" fill="#d8cfc8"/>
<rect x="576.5" y="354.2" width="27.6" height="15.6" fill="#e6e3e0"/>
<rect x="607.1" y="354.2" width="19.4" height="15.6" fill="#e6e3e0"/>
<rect x="609.2" y="359.5" width="10.0" height="8.4" fill="#d8cfc8"/>
<rect x="629.5" y="354.2" width="25.3" height="15.6" fill="#e2dbd5"/>
<rect x="634.2" y="358.3" width="12.8" height="10.9" fill="#d8cfc8"/>
<rect x="657.8" y="354.2" width="25.0" height="15.6" fill="#e2dbd5"/>
<rect x="661.4" y="355.5" width="9.0" height="8.1" fill="#d8cfc8"/>
<rect x="685.8" y="354.2" width="29.2" height="15.6" fill="#e0dcd8"/>
<rect x="718.1" y="354.2" width="12.6" height="15.6" fill="#eae7e4"/>
<rect x="733.7" y="354.2" width="16.2" height="15.6" fill="#e2dbd5"/>
<rect x="738.2" y="356.6" width="10.9" height="6.0" fill="#d8cfc8"/>
<rect x="271.6" y="372.9" width="11.6" height="13.7" fill="#ddd6cf"/>
<rect x="274.6" y="374.7" width="5.0" height="5.8" fill="#d8cfc8"/>
<rect x="286.1" y="372.9" width="20.8" height="13.7" fill="#ddd6cf"/>
<rect x="287.5" y="376.9" width="12.4" height="9.3" fill="#d8cfc8"/>
<rect x="309.9" y="372.9" width="20.2" height="13.7" fill="#e2dbd5"/>
<rect x="333.1" y="372.9" width="21.5" height="13.7" fill="#e6e3e0"/>
<rect x="334.4" y="375.8" width="13.9" height="5.3" fill="#d8cfc8"/>
<rect x="357.6" y="372.9" width="19.2" height="13.7" fill="#ddd6cf"/>
<rect x="360.1" y="376.8" width="9.2" height="9.4" fill="#d8cfc8"/>
<rect x="379.9" y="372.9" width="13.0" height="13.7" fill="#eae7e4"/>
<rect x="382.6" y="376.5" width="6.3" height="9.4" fill="#d8cfc8"/>
<rect x="395.8" y="372.9" width="27.8" height="13.7" fill="#e0dcd8"/>
<rect x="400.7" y="374.1" width="12.0" height="8.4" fill="#d8cfc8"/>
<rect x="426.6" y="372.9" width="24.0" height="13.7" fill="#ddd6cf"/>
<rect x="433.9" y="375.9" width="13.6" height="6.5" fill="#d8cfc8"/>
<rect x="453.6" y="372.9" width="28.4" height="13.7" fill="#eae7e4"/>
<rect x="458.1" y="376.0" width="15.8" height="8.9" fill="#d8cfc8"/>
<rect x="485.0" y="372.9" width="12.1" height="13.7" fill="#ddd6cf"/>
<rect x="486.6" y="375.4" width="6.4" height="7.9" fill="#d8cfc8"/>
<rect x="500.1" y="372.9" width="14.7" height="13.7" fill="#e6e3e0"/>
<rect x="517.8" y="372.9" width="19.2" height="13.7" fill="#ddd6cf"/>
<rect x="540.0" y="372.9" width="21.0" height="13.7" fill="#e6e3e0"/>
<rect x="564.0" y="372.9" width="18.6" height="13.7" fill="#e6e3e0"/>
<rect x="585.6" y="372.9" width="25.0" height="13.7" fill="#e2dbd5"/>
<rect x="592.5" y="374.7" width="13.9" height="9.1" fill="#d8cfc8"/>
<rect x="613.6" y="372.9" width="27.2" height="13.7" fill="#e0dcd8"/>
<rect x="643.8" y="372.9" width="30.0" height="13.7" fill="#e6e3e0"/>
<rect x="647.2" y="377.3" width="15.0" height="7.2" fill="#d8cfc8"/>
<rect x="676.8" y="372.9" width="25.8" height="13.7" fill="#e2dbd5"/>
<rect x="681.3" y="377.3" width="12.8" height="5.7" fill="#d8cfc8"/>
<rect x="705.6" y="372.9" width="19.5" height="13.7" fill="#e0dcd8"/>
<rect x="728.0" y="372.9" width="16.1" height="13.7" fill="#e0dcd8"/>
<rect x="730.8" y="377.4" width="9.3" height="8.1" fill="#d8cfc8"/>
<rect x="284.4" y="389.6" width="20.5" height="23.6" fill="#e2dbd5"/>
<rect x="308.0" y="389.6" width="20.3" height="23.6" fill="#ddd6cf"/>
<rect x="331.3" y="389.6" width="23.1" height="23.6" fill="#e0dcd8"/>
<rect x="337.0" y="391.1" width="11.3" height="10.5" fill="#d8cfc8"/>
<rect x="357.4" y="389.6" width="15.2" height="23.6" fill="#eae7e4"/>
<rect x="375.6" y="389.6" width="11.9" height="23.6" fill="#eae7e4"/>
<rect x="390.4" y="389.6" width="23.9" height="23.6" fill="#e0dcd8"/>
<rect x="398.5" y="396.1" width="9.8" height="14.6" fill="#d8cfc8"/>
<rect x="417.3" y="389.6" width="24.8" height="23.6" fill="#e2dbd5"/>
<rect x="420.5" y="396.7" width="9.5" height="10.7" fill="#d8cfc8"/>
<rect x="445.1" y="389.6" width="27.3" height="23.6" fill="#eae7e4"/>
<rect x="451.4" y="395.0" width="13.5" height="10.7" fill="#d8cfc8"/>
<rect x="475.4" y="389.6" width="25.9" height="23.6" fill="#e6e3e0"/>
<rect x="504.3" y="389.6" width="27.3" height="23.6" fill="#eae7e4"/>
<rect x="534.6" y="389.6" width="24.3" height="23.6" fill="#e2dbd5"/>
<rect x="561.9" y="389.6" width="14.6" height="23.6" fill="#eae7e4"/>
<rect x="566.8" y="397.5" width="9.1" height="13.2" fill="#d8cfc8"/>
<rect x="579.4" y="389.6" width="13.0" height="23.6" fill="#e0dcd8"/>
<rect x="595.5" y="389.6" width="23.3" height="23.6" fill="#ddd6cf"/>
<rect x="599.7" y="396.6" width="14.4" height="15.7" fill="#d8cfc8"/>
<rect x="621.8" y="389.6" width="18.5" height="23.6" fill="#e0dcd8"/>
<rect x="624.0" y="396.3" width="9.8" height="9.3" fill="#d8cfc8"/>
<rect x="643.2" y="389.6" width="28.6" height="23.6" fill="#e0dcd8"/>
<rect x="645.0" y="391.6" width="14.5" height="12.8" fill="#d8cfc8"/>
<rect x="674.9" y="389.6" width="20.1" height="23.6" fill="#e0dcd8"/>
<rect x="698.0" y="389.6" width="12.5" height="23.6" fill="#e0dcd8"/>
<rect x="713.5" y="389.6" width="21.5" height="23.6" fill="#eae7e4"/>
<rect x="719.9" y="392.3" width="13.7" height="11.9" fill="#d8cfc8"/>
<rect x="286.0" y="416.2" width="14.8" height="12.0" fill="#e0dcd8"/>
<rect x="289.0" y="419.6" width="5.9" height="8.4" fill="#d8cfc8"/>
<rect x="303.8" y="416.2" width="13.3" height="12.0" fill="#ddd6cf"/>
<rect x="320.0" y="416.2" width="24.3" height="12.0" fill="#eae7e4"/>
<rect x="347.3" y="416.2" width="22.8" height="12.0" fill="#ddd6cf"/>
<rect x="351.1" y="419.5" width="13.4" height="7.5" fill="#d8cfc8"/>
<rect x="373.1" y="416.2" width="24.1" height="12.0" fill="#eae7e4"/>
<rect x="400.1" y="416.2" width="16.5" height="12.0" fill="#e2dbd5"/>
<rect x="402.7" y="419.5" width="8.7" height="8.1" fill="#d8cfc8"/>
<rect x="419.6" y="416.2" width="18.7" height="12.0" fill="#ddd6cf"/>
<rect x="441.4" y="416.2" width="20.1" height="12.0" fill="#e2dbd5"/>
<rect x="464.5" y="416.2" width="30.3" height="12.0" fill="#e0dcd8"/>
<rect x="497.8" y="416.2" width="16.9" height="12.0" fill="#e0dcd8"/>
<rect x="500.5" y="418.4" width="8.9" height="6.3" fill="#d8cfc8"/>
<rect x="517.7" y="416.2" width="17.1" height="12.0" fill="#ddd6cf"/>
<rect x="523.6" y="417.9" width="9.8" height="7.0" fill="#d8cfc8"/>
<rect x="537.8" y="416.2" width="21.2" height="12.0" fill="#e0dcd8"/>
<rect x="562.0" y="416.2" width="16.9" height="12.0" fill="#e0dcd8"/>
<rect x="581.9" y="416.2" width="23.4" height="12.0" fill="#e0dcd8"/>
<rect x="584.8" y="417.2" width="12.3" height="4.9" fill="#d8cfc8"/>
<rect x="608.2" y="416.2" width="26.3" height="12.0" fill="#e6e3e0"/>
<rect x="637.5" y="416.2" width="21.7" height="12.0" fill="#e0dcd8"/>
<rect x="662.2" y="416.2" width="13.6" height="12.0" fill="#e0dcd8"/>
<rect x="665.3" y="417.8" width="7.3" height="7.1" fill="#d8cfc8"/>
<rect x="678.8" y="416.2" width="16.2" height="12.0" fill="#ddd6cf"/>
<rect x="679.9" y="417.6" width="6.8" height="7.2" fill="#d8cfc8"/>
<rect x="697.9" y="416.2" width="26.5" height="12.0" fill="#e0dcd8"/>
<rect x="703.9" y="420.0" width="12.0" height="6.2" fill="#d8cfc8"/>
<rect x="727.5" y="416.2" width="25.1" height="12.0" fill="#e2dbd5"/>
<rect x="732.1" y="420.6" width="10.5" height="8.3" fill="#d8cfc8"/>
</g></g>
<g clip-path="url(#c6)"><polygon points="961.0,0.0 1237.0,0.0 1214.0,32.0 1192.0,64.0 1174.0,97.0 1158.0,124.0 1138.0,143.0 1098.0,162.0 1050.0,170.0 1001.0,171.0 961.0,157.0" fill="#fbf8fb"/><g transform="rotate(-4 1099.0 85.5)">
<rect x="929.3" y="-106.8" width="22.6" height="28.5" fill="#e8dce6"/>
<rect x="954.1" y="-106.8" width="41.4" height="28.5" fill="#e8dce6"/>
<rect x="957.5" y="-98.5" width="20.7" height="11.2" fill="#d6ccc2"/>
<rect x="997.7" y="-106.8" width="38.5" height="28.5" fill="#e3d6d8"/>
<rect x="1001.4" y="-99.0" width="17.6" height="12.6" fill="#d6ccc2"/>
<rect x="1038.4" y="-106.8" width="29.4" height="28.5" fill="#e8dce6"/>
<rect x="1040.9" y="-102.9" width="14.7" height="10.2" fill="#d6ccc2"/>
<rect x="1070.0" y="-106.8" width="24.1" height="28.5" fill="#e6d9e1"/>
<rect x="1073.8" y="-105.1" width="12.1" height="10.7" fill="#d6ccc2"/>
<rect x="1096.3" y="-106.8" width="21.0" height="28.5" fill="#e3d6d8"/>
<rect x="1099.0" y="-100.3" width="11.0" height="10.6" fill="#d6ccc2"/>
<rect x="1119.5" y="-106.8" width="40.3" height="28.5" fill="#e6d9e1"/>
<rect x="1130.9" y="-100.0" width="24.0" height="14.1" fill="#d6ccc2"/>
<rect x="1162.0" y="-106.8" width="25.2" height="28.5" fill="#e8dce6"/>
<rect x="1164.6" y="-103.4" width="9.6" height="12.7" fill="#d6ccc2"/>
<rect x="1189.4" y="-106.8" width="43.5" height="28.5" fill="#e6d9e1"/>
<rect x="1196.7" y="-97.8" width="23.5" height="16.9" fill="#d6ccc2"/>
<rect x="1235.0" y="-106.8" width="43.1" height="28.5" fill="#e6d9e1"/>
<rect x="1243.8" y="-105.8" width="16.1" height="9.8" fill="#d6ccc2"/>
<rect x="1280.4" y="-106.8" width="26.8" height="28.5" fill="#e6d9e1"/>
<rect x="1289.1" y="-101.0" width="15.8" height="17.6" fill="#d6ccc2"/>
<rect x="920.4" y="-76.1" width="27.9" height="16.7" fill="#e3d6d8"/>
<rect x="928.0" y="-74.5" width="13.2" height="6.2" fill="#d6ccc2"/>
<rect x="950.5" y="-76.1" width="34.0" height="16.7" fill="#e6d9e1"/>
<rect x="954.8" y="-71.8" width="20.0" height="7.5" fill="#d6ccc2"/>
<rect x="986.7" y="-76.1" width="30.0" height="16.7" fill="#e3d6d8"/>
<rect x="989.9" y="-73.3" width="14.6" height="10.0" fill="#d6ccc2"/>
<rect x="1018.9" y="-76.1" width="33.0" height="16.7" fill="#e6d9e1"/>
<rect x="1019.9" y="-71.0" width="17.3" height="11.1" fill="#d6ccc2"/>
<rect x="1054.1" y="-76.1" width="38.3" height="16.7" fill="#e6d9e1"/>
<rect x="1064.0" y="-71.8" width="15.0" height="6.2" fill="#d6ccc2"/>
<rect x="1094.6" y="-76.1" width="35.3" height="16.7" fill="#e8dce6"/>
<rect x="1132.1" y="-76.1" width="24.3" height="16.7" fill="#e8dce6"/>
<rect x="1134.6" y="-70.8" width="8.7" height="9.7" fill="#d6ccc2"/>
<rect x="1158.6" y="-76.1" width="40.1" height="16.7" fill="#e8dce6"/>
<rect x="1170.8" y="-73.8" width="17.7" height="6.1" fill="#d6ccc2"/>
<rect x="1200.9" y="-76.1" width="20.4" height="16.7" fill="#e8dce6"/>
<rect x="1203.4" y="-74.3" width="8.6" height="9.1" fill="#d6ccc2"/>
<rect x="1223.5" y="-76.1" width="43.2" height="16.7" fill="#e3d6d8"/>
<rect x="1268.9" y="-76.1" width="20.3" height="16.7" fill="#e6d9e1"/>
<rect x="907.7" y="-57.2" width="37.5" height="32.7" fill="#e3d6d8"/>
<rect x="909.8" y="-49.4" width="14.7" height="11.0" fill="#d6ccc2"/>
<rect x="947.5" y="-57.2" width="41.2" height="32.7" fill="#e3d6d8"/>
<rect x="959.9" y="-47.1" width="19.3" height="12.0" fill="#d6ccc2"/>
<rect x="990.9" y="-57.2" width="41.5" height="32.7" fill="#e6d9e1"/>
<rect x="1034.6" y="-57.2" width="28.7" height="32.7" fill="#e6d9e1"/>
<rect x="1040.2" y="-54.7" width="17.6" height="11.8" fill="#d6ccc2"/>
<rect x="1065.5" y="-57.2" width="24.6" height="32.7" fill="#e8dce6"/>
<rect x="1072.8" y="-54.6" width="9.7" height="11.5" fill="#d6ccc2"/>
<rect x="1092.2" y="-57.2" width="27.9" height="32.7" fill="#e8dce6"/>
<rect x="1098.3" y="-52.4" width="17.5" height="14.9" fill="#d6ccc2"/>
<rect x="1122.3" y="-57.2" width="40.7" height="32.7" fill="#e8dce6"/>
<rect x="1165.2" y="-57.2" width="35.3" height="32.7" fill="#e8dce6"/>
<rect x="1167.7" y="-55.5" width="19.1" height="11.0" fill="#d6ccc2"/>
<rect x="1202.8" y="-57.2" width="26.3" height="32.7" fill="#e3d6d8"/>
<rect x="1211.2" y="-47.3" width="12.3" height="18.8" fill="#d6ccc2"/>
<rect x="1231.2" y="-57.2" width="39.3" height="32.7" fill="#e3d6d8"/>
<rect x="1233.0" y="-53.4" width="19.1" height="20.3" fill="#d6ccc2"/>
<rect x="1272.8" y="-57.2" width="30.1" height="32.7" fill="#e6d9e1"/>
<rect x="1277.1" y="-56.0" width="10.2" height="18.8" fill="#d6ccc2"/>
<rect x="917.9" y="-22.3" width="33.6" height="26.0" fill="#e3d6d8"/>
<rect x="921.1" y="-21.3" width="11.4" height="10.6" fill="#d6ccc2"/>
<rect x="953.7" y="-22.3" width="23.1" height="26.0" fill="#e6d9e1"/>
<rect x="979.0" y="-22.3" width="36.3" height="26.0" fill="#e6d9e1"/>
<rect x="981.6" y="-17.9" width="20.1" height="10.7" fill="#d6ccc2"/>
<rect x="1017.5" y="-22.3" width="28.4" height="26.0" fill="#e6d9e1"/>
<rect x="1026.7" y="-19.2" width="16.8" height="13.2" fill="#d6ccc2"/>
<rect x="1048.1" y="-22.3" width="36.0" height="26.0" fill="#e6d9e1"/>
<rect x="1057.7" y="-19.8" width="18.6" height="11.4" fill="#d6ccc2"/>
<rect x="1086.4" y="-22.3" width="23.2" height="26.0" fill="#e3d6d8"/>
<rect x="1088.5" y="-18.1" width="8.9" height="11.2" fill="#d6ccc2"/>
<rect x="1111.7" y="-22.3" width="36.9" height="26.0" fill="#e3d6d8"/>
<rect x="1150.9" y="-22.3" width="21.2" height="26.0" fill="#e3d6d8"/>
<rect x="1157.1" y="-19.0" width="10.9" height="14.6" fill="#d6ccc2"/>
<rect x="1174.2" y="-22.3" width="23.6" height="26.0" fill="#e6d9e1"/>
<rect x="1200.0" y="-22.3" width="41.7" height="26.0" fill="#e8dce6"/>
<rect x="1203.1" y="-18.6" width="14.0" height="11.4" fill="#d6ccc2"/>
<rect x="1243.9" y="-22.3" width="43.0" height="26.0" fill="#e8dce6"/>
<rect x="1252.8" y="-19.7" width="22.1" height="14.6" fill="#d6ccc2"/>
<rect x="1289.1" y="-22.3" width="24.1" height="26.0" fill="#e6d9e1"/>
<rect x="1290.7" y="-17.0" width="8.7" height="10.3" fill="#d6ccc2"/>
<rect x="918.4" y="5.8" width="40.2" height="15.9" fill="#e6d9e1"/>
<rect x="920.1" y="10.1" width="16.8" height="10.7" fill="#d6ccc2"/>
<rect x="960.8" y="5.8" width="33.6" height="15.9" fill="#e8dce6"/>
<rect x="996.6" y="5.8" width="24.1" height="15.9" fill="#e6d9e1"/>
<rect x="997.6" y="11.2" width="14.8" height="7.8" fill="#d6ccc2"/>
<rect x="1022.9" y="5.8" width="32.2" height="15.9" fill="#e3d6d8"/>
<rect x="1025.1" y="7.2" width="18.1" height="6.4" fill="#d6ccc2"/>
<rect x="1057.3" y="5.8" width="42.2" height="15.9" fill="#e6d9e1"/>
<rect x="1065.5" y="10.7" width="16.0" height="5.6" fill="#d6ccc2"/>
<rect x="1101.7" y="5.8" width="34.7" height="15.9" fill="#e3d6d8"/>
<rect x="1104.6" y="8.9" width="12.9" height="6.4" fill="#d6ccc2"/>
<rect x="1138.6" y="5.8" width="24.3" height="15.9" fill="#e8dce6"/>
<rect x="1140.2" y="8.2" width="11.1" height="9.2" fill="#d6ccc2"/>
<rect x="1165.1" y="5.8" width="37.1" height="15.9" fill="#e3d6d8"/>
<rect x="1170.9" y="9.6" width="20.2" height="6.8" fill="#d6ccc2"/>
<rect x="1204.5" y="5.8" width="33.0" height="15.9" fill="#e8dce6"/>
<rect x="1205.9" y="8.3" width="21.0" height="7.7" fill="#d6ccc2"/>
<rect x="1239.7" y="5.8" width="25.1" height="15.9" fill="#e3d6d8"/>
<rect x="1247.2" y="7.0" width="13.1" height="9.2" fill="#d6ccc2"/>
<rect x="1267.0" y="5.8" width="38.3" height="15.9" fill="#e8dce6"/>
<rect x="1268.8" y="8.8" width="21.2" height="6.5" fill="#d6ccc2"/>
<rect x="934.8" y="23.9" width="42.2" height="28.0" fill="#e8dce6"/>
<rect x="947.0" y="28.4" width="18.2" height="14.6" fill="#d6ccc2"/>
<rect x="979.2" y="23.9" width="24.4" height="28.0" fill="#e6d9e1"/>
<rect x="980.7" y="26.4" width="14.3" height="12.2" fill="#d6ccc2"/>
<rect x="1005.8" y="23.9" width="30.9" height="28.0" fill="#e6d9e1"/>
<rect x="1012.4" y="31.3" width="11.2" height="11.1" fill="#d6ccc2"/>
<rect x="1038.9" y="23.9" width="42.4" height="28.0" fill="#e3d6d8"/>
<rect x="1052.2" y="25.4" width="15.8" height="16.7" fill="#d6ccc2"/>
<rect x="1083.5" y="23.9" width="36.0" height="28.0" fill="#e3d6d8"/>
<rect x="1093.9" y="32.3" width="19.1" height="10.0" fill="#d6ccc2"/>
<rect x="1121.7" y="23.9" width="37.4" height="28.0" fill="#e6d9e1"/>
<rect x="1132.2" y="32.3" width="23.7" height="13.4" fill="#d6ccc2"/>
<rect x="1161.3" y="23.9" width="34.1" height="28.0" fill="#e6d9e1"/>
<rect x="1163.0" y="27.9" width="17.3" height="11.9" fill="#d6ccc2"/>
<rect x="1197.6" y="23.9" width="22.9" height="28.0" fill="#e3d6d8"/>
<rect x="1202.5" y="30.5" width="9.3" height="15.1" fill="#d6ccc2"/>
<rect x="1222.7" y="23.9" width="35.2" height="28.0" fill="#e8dce6"/>
<rect x="1224.2" y="28.4" width="15.7" height="17.3" fill="#d6ccc2"/>
<rect x="1260.1" y="23.9" width="42.3" height="28.0" fill="#e3d6d8"/>
<rect x="1263.6" y="28.7" width="21.9" height="9.3" fill="#d6ccc2"/>
<rect x="915.8" y="54.0" width="29.3" height="15.9" fill="#e6d9e1"/>
<rect x="917.4" y="57.4" width="13.6" height="7.6" fill="#d6ccc2"/>
<rect x="947.3" y="54.0" width="40.0" height="15.9" fill="#e6d9e1"/>
<rect x="952.7" y="58.4" width="17.5" height="7.4" fill="#d6ccc2"/>
<rect x="989.5" y="54.0" width="35.2" height="15.9" fill="#e6d9e1"/>
<rect x="994.4" y="55.5" width="21.2" height="10.3" fill="#d6ccc2"/>
<rect x="1026.9" y="54.0" width="21.3" height="15.9" fill="#e3d6d8"/>
<rect x="1030.1" y="56.7" width="8.0" height="8.5" fill="#d6ccc2"/>
<rect x="1050.4" y="54.0" width="32.6" height="15.9" fill="#e3d6d8"/>
<rect x="1058.6" y="56.4" width="11.4" height="9.6" fill="#d6ccc2"/>
<rect x="1085.1" y="54.0" width="27.7" height="15.9" fill="#e3d6d8"/>
<rect x="1093.6" y="58.4" width="16.5" height="8.0" fill="#d6ccc2"/>
<rect x="1115.0" y="54.0" width="28.8" height="15.9" fill="#e8dce6"/>
<rect x="1146.0" y="54.0" width="40.1" height="15.9" fill="#e6d9e1"/>
<rect x="1156.7" y="57.2" width="25.0" height="5.9" fill="#d6ccc2"/>
<rect x="1188.3" y="54.0" width="42.2" height="15.9" fill="#e3d6d8"/>
<rect x="1198.2" y="57.9" width="24.0" height="6.3" fill="#d6ccc2"/>
<rect x="1232.7" y="54.0" width="23.4" height="15.9" fill="#e6d9e1"/>
<rect x="1236.1" y="59.0" width="8.4" height="10.8" fill="#d6ccc2"/>
<rect x="1258.3" y="54.0" width="43.0" height="15.9" fill="#e6d9e1"/>
<rect x="1271.1" y="55.1" width="20.5" height="10.0" fill="#d6ccc2"/>
<rect x="939.5" y="72.1" width="22.0" height="32.0" fill="#e8dce6"/>
<rect x="945.8" y="77.6" width="7.6" height="10.8" fill="#d6ccc2"/>
<rect x="963.6" y="72.1" width="40.3" height="32.0" fill="#e8dce6"/>
<rect x="972.7" y="75.7" width="20.2" height="10.6" fill="#d6ccc2"/>
<rect x="1006.1" y="72.1" width="41.9" height="32.0" fill="#e3d6d8"/>
<rect x="1050.2" y="72.1" width="39.5" height="32.0" fill="#e8dce6"/>
<rect x="1091.8" y="72.1" width="40.9" height="32.0" fill="#e6d9e1"/>
<rect x="1099.1" y="76.3" width="19.0" height="12.3" fill="#d6ccc2"/>
<rect x="1135.0" y="72.1" width="35.1" height="32.0" fill="#e6d9e1"/>
<rect x="1172.2" y="72.1" width="41.6" height="32.0" fill="#e8dce6"/>
<rect x="1182.2" y="75.0" width="21.6" height="13.5" fill="#d6ccc2"/>
<rect x="1216.0" y="72.1" width="28.7" height="32.0" fill="#e3d6d8"/>
<rect x="1221.3" y="80.7" width="10.4" height="11.3" fill="#d6ccc2"/>
<rect x="1246.9" y="72.1" width="36.5" height="32.0" fill="#e3d6d8"/>
<rect x="1252.0" y="73.4" width="21.4" height="12.5" fill="#d6ccc2"/>
<rect x="1285.6" y="72.1" width="22.3" height="32.0" fill="#e3d6d8"/>
<rect x="1290.6" y="81.8" width="11.4" height="16.4" fill="#d6ccc2"/>
<rect x="926.5" y="106.3" width="28.2" height="32.4" fill="#e8dce6"/>
<rect x="956.9" y="106.3" width="33.4" height="32.4" fill="#e8dce6"/>
<rect x="965.0" y="109.4" width="21.1" height="11.7" fill="#d6ccc2"/>
<rect x="992.5" y="106.3" width="21.2" height="32.4" fill="#e3d6d8"/>
<rect x="999.4" y="110.8" width="7.4" height="18.1" fill="#d6ccc2"/>
<rect x="1015.9" y="106.3" width="22.3" height="32.4" fill="#e6d9e1"/>
<rect x="1021.9" y="116.2" width="13.0" height="10.8" fill="#d6ccc2"/>
<rect x="1040.3" y="106.3" width="29.8" height="32.4" fill="#e3d6d8"/>
<rect x="1042.7" y="110.5" width="10.2" height="17.3" fill="#d6ccc2"/>
<rect x="1072.4" y="106.3" width="26.9" height="32.4" fill="#e8dce6"/>
<rect x="1076.5" y="110.9" width="12.7" height="19.3" fill="#d6ccc2"/>
<rect x="1101.4" y="106.3" width="25.3" height="32.4" fill="#e3d6d8"/>
<rect x="1105.3" y="113.8" width="12.7" height="18.5" fill="#d6ccc2"/>
<rect x="1128.9" y="106.3" width="26.8" height="32.4" fill="#e6d9e1"/>
<rect x="1130.0" y="110.0" width="17.1" height="10.6" fill="#d6ccc2"/>
<rect x="1158.0" y="106.3" width="22.8" height="32.4" fill="#e6d9e1"/>
<rect x="1182.9" y="106.3" width="26.6" height="32.4" fill="#e3d6d8"/>
<rect x="1189.4" y="109.8" width="12.1" height="14.6" fill="#d6ccc2"/>
<rect x="1211.8" y="106.3" width="28.2" height="32.4" fill="#e8dce6"/>
<rect x="1242.2" y="106.3" width="40.5" height="32.4" fill="#e8dce6"/>
<rect x="1251.7" y="109.6" width="24.3" height="20.6" fill="#d6ccc2"/>
<rect x="1284.9" y="106.3" width="26.9" height="32.4" fill="#e8dce6"/>
<rect x="1287.1" y="109.7" width="17.3" height="16.9" fill="#d6ccc2"/>
<rect x="937.6" y="140.9" width="43.0" height="27.7" fill="#e8dce6"/>
<rect x="943.1" y="149.1" width="24.3" height="16.2" fill="#d6ccc2"/>
<rect x="982.8" y="140.9" width="39.1" height="27.7" fill="#e8dce6"/>
<rect x="985.6" y="142.6" width="18.1" height="17.4" fill="#d6ccc2"/>
<rect x="1024.1" y="140.9" width="27.3" height="27.7" fill="#e8dce6"/>
<rect x="1029.7" y="147.5" width="11.1" height="11.1" fill="#d6ccc2"/>
<rect x="1053.6" y="140.9" width="27.9" height="27.7" fill="#e8dce6"/>
<rect x="1056.1" y="148.7" width="9.9" height="16.0" fill="#d6ccc2"/>
<rect x="1083.7" y="140.9" width="36.5" height="27.7" fill="#e8dce6"/>
<rect x="1086.9" y="149.8" width="20.3" height="13.4" fill="#d6ccc2"/>
<rect x="1122.4" y="140.9" width="32.4" height="27.7" fill="#e6d9e1"/>
<rect x="1131.5" y="143.4" width="13.5" height="17.6" fill="#d6ccc2"/>
<rect x="1157.0" y="140.9" width="25.0" height="27.7" fill="#e6d9e1"/>
<rect x="1159.9" y="145.5" width="15.0" height="15.1" fill="#d6ccc2"/>
<rect x="1184.2" y="140.9" width="41.8" height="27.7" fill="#e8dce6"/>
<rect x="1190.8" y="145.8" width="25.5" height="11.4" fill="#d6ccc2"/>
<rect x="1228.3" y="140.9" width="32.9" height="27.7" fill="#e8dce6"/>
<rect x="1238.5" y="143.0" width="12.6" height="9.0" fill="#d6ccc2"/>
<rect x="1263.3" y="140.9" width="26.0" height="27.7" fill="#e3d6d8"/>
<rect x="935.3" y="170.9" width="42.2" height="19.5" fill="#e3d6d8"/>
<rect x="947.2" y="172.3" width="24.5" height="8.0" fill="#d6ccc2"/>
<rect x="979.7" y="170.9" width="23.2" height="19.5" fill="#e8dce6"/>
<rect x="1005.1" y="170.9" width="39.2" height="19.5" fill="#e6d9e1"/>
<rect x="1012.3" y="174.0" width="19.9" height="6.8" fill="#d6ccc2"/>
<rect x="1046.5" y="170.9" width="33.0" height="19.5" fill="#e8dce6"/>
<rect x="1050.7" y="172.4" width="18.9" height="11.8" fill="#d6ccc2"/>
<rect x="1081.7" y="170.9" width="20.7" height="19.5" fill="#e3d6d8"/>
<rect x="1104.6" y="170.9" width="42.3" height="19.5" fill="#e8dce6"/>
<rect x="1109.4" y="173.0" width="26.7" height="8.1" fill="#d6ccc2"/>
<rect x="1149.2" y="170.9" width="33.2" height="19.5" fill="#e6d9e1"/>
<rect x="1157.9" y="171.9" width="19.3" height="8.4" fill="#d6ccc2"/>
<rect x="1184.5" y="170.9" width="39.1" height="19.5" fill="#e8dce6"/>
<rect x="1193.7" y="174.1" width="18.2" height="8.6" fill="#d6ccc2"/>
<rect x="1225.9" y="170.9" width="30.6" height="19.5" fill="#e3d6d8"/>
<rect x="1227.1" y="173.6" width="15.8" height="8.4" fill="#d6ccc2"/>
<rect x="1258.7" y="170.9" width="31.8" height="19.5" fill="#e6d9e1"/>
<rect x="1262.4" y="177.3" width="15.3" height="12.2" fill="#d6ccc2"/>
<rect x="934.6" y="192.6" width="23.4" height="27.4" fill="#e8dce6"/>
<rect x="960.2" y="192.6" width="29.0" height="27.4" fill="#e6d9e1"/>
<rect x="963.5" y="200.5" width="12.9" height="15.0" fill="#d6ccc2"/>
<rect x="991.4" y="192.6" width="29.0" height="27.4" fill="#e3d6d8"/>
<rect x="993.1" y="199.1" width="17.9" height="11.1" fill="#d6ccc2"/>
<rect x="1022.6" y="192.6" width="40.4" height="27.4" fill="#e8dce6"/>
<rect x="1023.9" y="195.0" width="25.1" height="9.1" fill="#d6ccc2"/>
<rect x="1065.2" y="192.6" width="21.9" height="27.4" fill="#e3d6d8"/>
<rect x="1089.3" y="192.6" width="25.5" height="27.4" fill="#e6d9e1"/>
<rect x="1090.8" y="200.1" width="8.3" height="12.0" fill="#d6ccc2"/>
<rect x="1117.0" y="192.6" width="22.6" height="27.4" fill="#e6d9e1"/>
<rect x="1121.4" y="195.9" width="14.8" height="11.9" fill="#d6ccc2"/>
<rect x="1141.8" y="192.6" width="43.1" height="27.4" fill="#e8dce6"/>
<rect x="1150.2" y="196.7" width="24.4" height="14.3" fill="#d6ccc2"/>
<rect x="1187.1" y="192.6" width="33.0" height="27.4" fill="#e8dce6"/>
<rect x="1189.1" y="198.9" width="13.6" height="17.3" fill="#d6ccc2"/>
<rect x="1222.3" y="192.6" width="39.6" height="27.4" fill="#e8dce6"/>
<rect x="1264.2" y="192.6" width="36.0" height="27.4" fill="#e6d9e1"/>
<rect x="1271.4" y="200.2" width="21.0" height="9.2" fill="#d6ccc2"/>
<rect x="919.9" y="222.2" width="38.4" height="27.1" fill="#e6d9e1"/>
<rect x="923.6" y="228.7" width="17.2" height="9.1" fill="#d6ccc2"/>
<rect x="960.5" y="222.2" width="28.4" height="27.1" fill="#e3d6d8"/>
<rect x="991.1" y="222.2" width="29.7" height="27.1" fill="#e8dce6"/>
<rect x="996.1" y="225.8" width="16.4" height="11.2" fill="#d6ccc2"/>
<rect x="1023.0" y="222.2" width="24.1" height="27.1" fill="#e8dce6"/>
<rect x="1027.3" y="224.3" width="8.8" height="9.4" fill="#d6ccc2"/>
<rect x="1049.3" y="222.2" width="40.8" height="27.1" fill="#e6d9e1"/>
<rect x="1052.4" y="227.6" width="18.6" height="12.6" fill="#d6ccc2"/>
<rect x="1092.2" y="222.2" width="40.6" height="27.1" fill="#e8dce6"/>
<rect x="1135.1" y="222.2" width="39.6" height="27.1" fill="#e3d6d8"/>
<rect x="1144.8" y="224.1" width="22.6" height="10.8" fill="#d6ccc2"/>
<rect x="1176.9" y="222.2" width="37.1" height="27.1" fill="#e3d6d8"/>
<rect x="1186.5" y="227.6" width="13.1" height="11.4" fill="#d6ccc2"/>
<rect x="1216.2" y="222.2" width="25.7" height="27.1" fill="#e8dce6"/>
<rect x="1244.1" y="222.2" width="29.7" height="27.1" fill="#e8dce6"/>
<rect x="1253.4" y="225.2" width="17.8" height="14.4" fill="#d6ccc2"/>
<rect x="1276.0" y="222.2" width="27.1" height="27.1" fill="#e6d9e1"/>
<rect x="1284.0" y="230.6" width="10.1" height="12.9" fill="#d6ccc2"/>
<rect x="915.9" y="251.6" width="36.3" height="16.1" fill="#e8dce6"/>
<rect x="919.2" y="253.7" width="17.3" height="9.5" fill="#d6ccc2"/>
<rect x="954.4" y="251.6" width="35.3" height="16.1" fill="#e8dce6"/>
<rect x="992.0" y="251.6" width="34.4" height="16.1" fill="#e6d9e1"/>
<rect x="994.2" y="254.8" width="13.6" height="8.8" fill="#d6ccc2"/>
<rect x="1028.6" y="251.6" width="23.9" height="16.1" fill="#e8dce6"/>
<rect x="1035.2" y="255.6" width="15.3" height="5.6" fill="#d6ccc2"/>
<rect x="1054.7" y="251.6" width="20.5" height="16.1" fill="#e3d6d8"/>
<rect x="1077.4" y="251.6" width="29.9" height="16.1" fill="#e3d6d8"/>
<rect x="1085.3" y="256.7" width="13.1" height="9.8" fill="#d6ccc2"/>
<rect x="1109.6" y="251.6" width="41.7" height="16.1" fill="#e3d6d8"/>
<rect x="1119.7" y="254.6" width="13.6" height="7.9" fill="#d6ccc2"/>
<rect x="1153.5" y="251.6" width="42.8" height="16.1" fill="#e6d9e1"/>
<rect x="1198.5" y="251.6" width="20.0" height="16.1" fill="#e6d9e1"/>
<rect x="1220.6" y="251.6" width="23.1" height="16.1" fill="#e6d9e1"/>
<rect x="1224.9" y="256.1" width="11.6" height="8.2" fill="#d6ccc2"/>
<rect x="1246.0" y="251.6" width="36.7" height="16.1" fill="#e8dce6"/>
<rect x="1255.3" y="256.5" width="22.9" height="8.0" fill="#d6ccc2"/>
<rect x="1284.9" y="251.6" width="28.2" height="16.1" fill="#e6d9e1"/>
<rect x="1288.3" y="252.8" width="16.0" height="10.3" fill="#d6ccc2"/>
<rect x="932.4" y="269.9" width="23.0" height="28.3" fill="#e6d9e1"/>
<rect x="957.5" y="269.9" width="29.1" height="28.3" fill="#e6d9e1"/>
<rect x="963.1" y="278.5" width="16.7" height="17.6" fill="#d6ccc2"/>
<rect x="988.9" y="269.9" width="29.1" height="28.3" fill="#e6d9e1"/>
<rect x="996.8" y="271.4" width="17.2" height="11.9" fill="#d6ccc2"/>
<rect x="1020.2" y="269.9" width="43.6" height="28.3" fill="#e6d9e1"/>
<rect x="1027.3" y="278.8" width="27.3" height="12.1" fill="#d6ccc2"/>
<rect x="1066.0" y="269.9" width="23.8" height="28.3" fill="#e8dce6"/>
<rect x="1092.0" y="269.9" width="21.3" height="28.3" fill="#e3d6d8"/>
<rect x="1095.0" y="275.7" width="9.9" height="10.2" fill="#d6ccc2"/>
<rect x="1115.6" y="269.9" width="24.7" height="28.3" fill="#e8dce6"/>
<rect x="1122.8" y="277.5" width="12.5" height="11.0" fill="#d6ccc2"/>
<rect x="1142.4" y="269.9" width="28.8" height="28.3" fill="#e8dce6"/>
<rect x="1150.2" y="273.0" width="10.6" height="11.6" fill="#d6ccc2"/>
<rect x="1173.4" y="269.9" width="36.3" height="28.3" fill="#e3d6d8"/>
<rect x="1175.2" y="278.5" width="15.9" height="17.3" fill="#d6ccc2"/>
<rect x="1212.0" y="269.9" width="39.9" height="28.3" fill="#e6d9e1"/>
<rect x="1220.0" y="272.9" width="20.7" height="15.3" fill="#d6ccc2"/>
<rect x="1254.1" y="269.9" width="30.4" height="28.3" fill="#e8dce6"/>
<rect x="1258.2" y="277.5" width="17.2" height="9.4" fill="#d6ccc2"/>
<rect x="1286.7" y="269.9" width="32.2" height="28.3" fill="#e3d6d8"/>
<rect x="1292.7" y="271.7" width="10.8" height="18.2" fill="#d6ccc2"/>
</g></g>
<polygon points="594.0,0.0 961.0,0.0 961.0,157.0 920.0,195.0 905.0,225.0 760.0,232.0 700.0,222.0 666.0,200.0 688.5,180.0 696.0,195.0 716.0,200.0 736.0,190.0 741.0,170.0 788.5,145.0 788.5,125.0 771.0,112.5 658.5,82.5 636.0,72.5 621.0,42.5 605.0,33.0" fill="#ebdde8" />
<rect x="716" y="5" width="10" height="12.5" fill="#d9cfc6"/>
<rect x="763.5" y="22.5" width="17.5" height="20.0" fill="#d9cfc6"/>
<rect x="786" y="0" width="35" height="17.5" fill="#d9cfc6"/>
<rect x="693.5" y="42.5" width="22.5" height="10.0" fill="#d9cfc6"/>
<rect x="676" y="65" width="20" height="10" fill="#d9cfc6"/>
<rect x="703.5" y="65" width="27.5" height="10" fill="#d9cfc6"/>
<rect x="833.5" y="45" width="17.5" height="27.5" fill="#d9cfc6"/>
<rect x="801" y="30" width="12.5" height="10" fill="#d9cfc6"/>
<rect x="818.5" y="77.5" width="10.0" height="22.5" fill="#d9cfc6"/>
<rect x="773.5" y="72.5" width="15.0" height="7.5" fill="#d9cfc6"/>
<rect x="861" y="115" width="12.5" height="20" fill="#d9cfc6"/>
<rect x="878.5" y="125" width="15.0" height="17.5" fill="#d9cfc6"/>
<rect x="816" y="142.5" width="25" height="12.5" fill="#d9cfc6"/>
<rect x="771" y="147.5" width="40" height="7.5" fill="#d9cfc6"/>
<rect x="833.5" y="167.5" width="17.5" height="20.0" fill="#d9cfc6"/>
<rect x="806" y="170" width="20" height="7.5" fill="#d9cfc6"/>
<rect x="893.5" y="145" width="10.0" height="17.5" fill="#d9cfc6"/>
<rect x="743.5" y="160" width="30.0" height="20" fill="#d9cfc6"/>
<rect x="900" y="10" width="15" height="20" fill="#d9cfc6"/>
<rect x="920" y="20" width="20" height="25" fill="#d9cfc6"/>
<rect x="905" y="55" width="20" height="25" fill="#d9cfc6"/>
<rect x="925" y="60" width="20" height="25" fill="#d9cfc6"/>
<rect x="905" y="95" width="25" height="20" fill="#d9cfc6"/>
<rect x="930" y="100" width="20" height="25" fill="#d9cfc6"/>
<rect x="910" y="130" width="25" height="20" fill="#d9cfc6"/>
<polyline points="640.0,62.0 751.0,47.5 871.0,32.5 893.5,2.5" fill="none" stroke="#fdfbfd" stroke-width="1.8"/>
<polyline points="637.0,0.0 637.0,70.0" fill="none" stroke="#fdfbfd" stroke-width="1.8"/>
<polyline points="687.0,0.0 687.0,62.0" fill="none" stroke="#fdfbfd" stroke-width="1.8"/>
<polyline points="763.5,50.0 765.0,160.0" fill="none" stroke="#fdfbfd" stroke-width="1.8"/>
<polyline points="826.0,42.0 826.0,62.0" fill="none" stroke="#fdfbfd" stroke-width="1.8"/>
<polyline points="858.0,112.0 861.0,212.0" fill="none" stroke="#fdfbfd" stroke-width="1.8"/>
<polyline points="895.0,0.0 925.0,32.0 930.0,150.0 961.0,148.0" fill="none" stroke="#fdfbfd" stroke-width="1.8"/>
<polyline points="900.0,40.0 961.0,35.0" fill="none" stroke="#fdfbfd" stroke-width="1.8"/>
<polyline points="905.0,90.0 961.0,85.0" fill="none" stroke="#fdfbfd" stroke-width="1.8"/>
<polyline points="800.0,172.0 900.0,172.0" fill="none" stroke="#fdfbfd" stroke-width="1.8"/>
<polyline points="700.0,110.0 860.0,112.0" fill="none" stroke="#fdfbfd" stroke-width="1.8"/>
<polygon points="1237.0,0.0 1284.0,0.0 1284.0,30.0 1200.0,100.0 1140.0,150.0 1158.0,124.0 1192.0,64.0" fill="#ebe1e8" />
<rect x="1250" y="8" width="7" height="1.6" fill="#8fc3dc"/>
<rect x="1262" y="12" width="7" height="1.6" fill="#8fc3dc"/>
<rect x="1240" y="20" width="7" height="1.6" fill="#8fc3dc"/>
<rect x="1255" y="25" width="7" height="1.6" fill="#8fc3dc"/>
<rect x="1232" y="33" width="7" height="1.6" fill="#8fc3dc"/>
<rect x="1247" y="38" width="7" height="1.6" fill="#8fc3dc"/>
<rect x="1225" y="46" width="7" height="1.6" fill="#8fc3dc"/>
<rect x="1240" y="52" width="7" height="1.6" fill="#8fc3dc"/>
<rect x="1218" y="60" width="7" height="1.6" fill="#8fc3dc"/>
<rect x="1233" y="66" width="7" height="1.6" fill="#8fc3dc"/>
<rect x="1212" y="74" width="7" height="1.6" fill="#8fc3dc"/>
<polygon points="1091.0,321.0 1140.0,318.0 1200.0,325.0 1230.0,345.0 1235.0,400.0 1200.0,416.0 1140.0,418.0 1120.0,400.0 1100.0,360.0" fill="#ebdbe8" />
<polygon points="1000.0,300.0 1040.0,255.0 1080.0,240.0 1020.0,320.0" fill="#e9dde6" />
<polygon points="366.0,255.0 368.0,263.5 372.0,295.0 373.0,325.0 366.0,350.0 356.0,363.0 340.0,374.0 328.0,381.6 309.0,394.8 271.4,417.3 233.8,436.0 200.0,452.0 311.0,452.0 466.0,372.0 456.0,352.0 420.0,320.0 383.0,263.0" fill="#dcf7d6" />
<polygon points="262.0,452.0 310.0,425.0 360.0,398.0 440.0,352.0 466.0,372.0 311.0,452.0" fill="#caeec2" />
<polygon points="491.0,351.0 560.0,335.0 603.0,336.0 621.0,386.0 645.0,452.0 505.0,452.0 480.0,400.0" fill="#c6eec0" />
<polygon points="362.0,175.0 373.0,150.0 393.0,125.0 413.0,90.0 431.0,62.0 481.0,51.0 505.0,46.0 500.0,60.0 460.0,66.0 440.0,72.0 420.0,100.0 400.0,135.0 382.0,162.0 370.0,185.0" fill="#c6f0c4" />
<polygon points="646.0,411.0 691.0,405.0 695.0,452.0 646.0,452.0" fill="#b3d9a2" />
<polygon points="883.0,355.0 926.0,345.0 930.0,378.0 888.0,386.0" fill="#c3eebd" />
<polygon points="1236.0,226.0 1284.0,200.0 1284.0,290.0 1240.0,288.0" fill="#c3e6b9" />
<polygon points="1252.0,125.0 1284.0,112.0 1284.0,166.0 1262.0,160.0" fill="#c8eec0" />
<polygon points="1157.0,214.0 1170.0,204.0 1191.0,232.0 1178.0,242.0" fill="#8fd6b4" />
<polygon points="1206.0,254.0 1229.0,254.0 1229.0,284.0 1206.0,284.0" fill="#e8c6bb" />
<polygon points="1214.0,190.0 1230.0,185.0 1236.0,212.0 1220.0,216.0" fill="#c4eabb" />
<polygon points="1211.0,351.0 1284.0,330.0 1284.0,430.0 1215.0,426.0 1200.0,400.0" fill="#c5e0b0" />
<polygon points="1090.0,325.0 1120.0,326.0 1140.0,380.0 1150.0,430.0 1115.0,430.0 1100.0,380.0" fill="#cff0c8" />
<polygon points="416.0,118.0 430.0,95.0 450.0,82.0 490.0,80.0 492.0,108.0 470.0,118.0 440.0,122.0" fill="#d6d1b5" />
<polygon points="490.0,255.0 570.0,247.0 572.0,318.0 493.0,322.0" fill="#d7d0bb" />
<polygon points="441.0,152.0 478.0,148.0 480.0,190.0 444.0,193.0" fill="#c8f3c7" />
<circle cx="460" cy="170" r="9" fill="none" stroke="#9fb99f" stroke-width="1.2"/><circle cx="460" cy="170" r="6" fill="#b9d99b"/>
<polygon points="492.0,78.0 553.0,78.0 553.0,150.0 540.0,152.0 500.0,152.0" fill="#e2e0de" />
<polygon points="500.0,96.0 520.0,94.0 522.0,110.0 502.0,112.0" fill="#d9d0c9" />
<polygon points="456.0,335.0 508.0,328.0 510.0,356.0 470.0,360.0" fill="#e8d5da" />
<polyline points="364.0,240.0 368.0,263.5 372.0,295.0 373.0,325.0 366.0,350.0 356.0,363.0 340.0,374.0 328.0,381.6 309.0,394.8 271.4,417.3 233.8,436.0 205.6,452.0" fill="none" stroke="#f1e2a2" stroke-width="5" stroke-linejoin="round" stroke-linecap="round" />
<polygon points="0.0,0.0 594.0,0.0 605.0,33.0 621.0,42.5 636.0,72.5 658.5,82.5 771.0,112.5 771.0,125.0 788.5,125.0 788.5,145.0 741.0,170.0 736.0,190.0 716.0,200.0 696.0,195.0 688.5,180.0 675.0,188.0 666.0,200.0 664.6,210.0 664.6,166.0 646.7,166.0 646.7,215.0 631.0,212.0 626.0,185.0 601.0,171.0 578.0,79.0 566.0,78.0 517.0,80.0 517.0,50.0 510.0,39.0 505.0,45.0 481.0,51.0 451.0,55.0 431.0,62.5 413.5,90.0 393.5,125.0 373.5,150.0 358.5,162.5 361.0,226.0 368.0,263.5 372.0,295.0 373.0,325.0 366.0,350.0 356.0,363.0 340.0,374.0 328.0,381.6 309.0,394.8 271.4,417.3 233.8,436.0 205.6,452.0 0.0,452.0" fill="#aad3df" />
<polygon points="550.0,85.0 566.0,85.0 584.0,166.0 566.0,166.0 563.0,118.0 550.0,112.0" fill="#aad3df" />
<polygon points="640.0,112.0 653.5,108.0 771.0,145.0 741.0,170.0 653.5,135.0 640.0,128.0" fill="#e9dae6" />
<circle cx="638" cy="120" r="12" fill="#c4efc0"/>
<polygon points="933.0,0.0 986.0,0.0 986.0,140.0 975.0,146.0 961.0,140.0 955.0,50.0" fill="#aad3df" />
<polygon points="578.0,214.0 623.0,214.0 623.0,283.0 578.0,286.0 562.0,270.0 580.0,250.0" fill="#aad3df" />
<polyline points="657.0,215.0 657.0,297.0 705.0,292.0 760.0,287.0 820.0,281.0 850.0,277.0" fill="none" stroke="#aad3df" stroke-width="10" stroke-linejoin="round" stroke-linecap="round" />
<polyline points="521.0,313.0 576.0,281.0 621.0,276.0" fill="none" stroke="#aad3df" stroke-width="7" stroke-linejoin="round" stroke-linecap="round" />
<polyline points="456.0,353.0 501.0,346.0 576.0,331.0 621.0,321.0 660.0,310.0 686.0,300.0" fill="none" stroke="#aad3df" stroke-width="8" stroke-linejoin="round" stroke-linecap="round" />
<polyline points="383.0,263.0 430.0,320.0 486.0,391.0" fill="none" stroke="#aad3df" stroke-width="6" stroke-linejoin="round" stroke-linecap="round" />
<polyline points="846.0,283.0 868.0,356.0 766.0,423.0 696.0,446.0 640.0,452.0" fill="none" stroke="#aad3df" stroke-width="8" stroke-linejoin="round" stroke-linecap="round" />
<polyline points="500.0,360.0 505.0,400.0 520.0,420.0 560.0,415.0 590.0,430.0 620.0,410.0" fill="none" stroke="#aad3df" stroke-width="6" stroke-linejoin="round" stroke-linecap="round" />
<polygon points="586.6,368.4 577.3,385.0 568.4,401.6 547.0,394.4 525.4,387.6 534.7,371.0 543.6,354.4 565.0,361.6" fill="#aad3df" />
<polygon points="575.0,372.1 569.2,382.3 563.7,392.7 550.4,388.2 537.0,383.9 542.8,373.7 548.3,363.3 561.6,367.8" fill="#c6eec0" />
<polygon points="548.0,372.0 566.0,370.0 567.0,386.0 549.0,388.0" fill="none" stroke="#b58d7a" stroke-width="2"/>
<ellipse cx="300" cy="420" rx="14" ry="4" transform="rotate(-25 300 420)" fill="#aad3df"/>
<ellipse cx="345" cy="403" rx="10" ry="3.5" transform="rotate(-25 345 403)" fill="#aad3df"/>
<ellipse cx="405" cy="367" rx="15" ry="4" transform="rotate(-30 405 367)" fill="#aad3df"/>
<ellipse cx="540" cy="438" rx="14" ry="5" fill="#aad3df"/>
<line x1="292" y1="361" x2="309" y2="394" stroke="#e6eef0" stroke-width="1.3"/>
<line x1="250" y1="412" x2="259" y2="430" stroke="#e6eef0" stroke-width="1.3"/>
<line x1="220" y1="420" x2="229" y2="440" stroke="#e6eef0" stroke-width="1.3"/>
<line x1="172" y1="437" x2="179" y2="452" stroke="#e6eef0" stroke-width="1.3"/>
<circle cx="292" cy="361" r="6" fill="none" stroke="#e6eef0" stroke-width="2"/>
<polygon points="690.0,265.0 706.0,262.0 712.0,285.0 696.0,290.0" fill="#b89b88" />
<polygon points="705.0,268.0 715.0,266.0 716.0,276.0 706.0,278.0" fill="#6c7bb5" />
<polyline points="637,305 618,322 601,340 586,365 578,392 580,420 585,452" fill="none" stroke="#8a8a8a" stroke-width="3.2" stroke-dasharray="5 3"/>
<polyline points="651,68 700,58 751,49" fill="none" stroke="#9a9a9a" stroke-width="3" stroke-dasharray="6 2"/>
<polyline points="820,0 870,40 900,90 912,200" fill="none" stroke="#aaa" stroke-width="1.2"/>
<polyline points="850,0 890,40 915,120 920,200" fill="none" stroke="#aaa" stroke-width="1.2"/>
<polygon points="640,320 720,300 800,300 790,400 700,420 650,400" fill="#e8b4a6" opacity="0.1"/>
<polygon points="718.0,252.0 800.0,243.0 904.0,230.0 961.0,200.0 1000.0,192.0 951.0,275.0 850.0,272.0 760.0,279.0 701.0,284.0" fill="url(#rail)" />
<polygon points="701.0,284.0 760.0,279.0 850.0,272.0 951.0,275.0 960.0,262.0 850.0,258.0 760.0,262.0 705.0,270.0" fill="#777" opacity="0.25"/>
<polygon points="961.0,192.0 1050.0,172.0 1136.0,140.0 1211.0,85.0 1284.0,20.0 1284.0,105.0 1200.0,160.0 1088.0,226.0 1040.0,250.0 961.0,276.0" fill="url(#rail2)" />
<polyline points="1048.0,288.0 1080.0,320.0 1111.0,351.0 1125.0,390.0 1133.0,433.0 1133.0,452.0" fill="none" stroke="#777" stroke-width="2.5" stroke-linejoin="round" stroke-linecap="round" />
<polyline points="1060.0,292.0 1111.0,330.0 1180.0,330.0 1200.0,325.0" fill="none" stroke="#999" stroke-width="1" stroke-linejoin="round" stroke-linecap="round" />
<polyline points="691.0,256.0 800.0,245.0 908.0,228.0" fill="none" stroke="#d5cfc9" stroke-width="5.5" stroke-linejoin="round" stroke-linecap="round" />
<polyline points="581.0,210.0 640.0,216.0 741.0,222.0 780.0,232.0" fill="none" stroke="#d5cfc9" stroke-width="5.5" stroke-linejoin="round" stroke-linecap="round" />
<polyline points="436.0,263.0 551.0,226.0 581.0,210.0" fill="none" stroke="#d5cfc9" stroke-width="5.5" stroke-linejoin="round" stroke-linecap="round" />
<polyline points="441.0,263.0 456.0,333.0" fill="none" stroke="#d5cfc9" stroke-width="5.5" stroke-linejoin="round" stroke-linecap="round" />
<polyline points="456.0,329.0 621.0,301.0 688.0,273.0" fill="none" stroke="#d5cfc9" stroke-width="5.5" stroke-linejoin="round" stroke-linecap="round" />
<polyline points="1081.0,313.0 1198.0,321.0 1284.0,298.0" fill="none" stroke="#d5cfc9" stroke-width="5.5" stroke-linejoin="round" stroke-linecap="round" />
<polyline points="466.0,372.0 520.0,350.0 603.0,336.0" fill="none" stroke="#d5cfc9" stroke-width="5.5" stroke-linejoin="round" stroke-linecap="round" />
<polyline points="961.0,157.0 1000.0,172.0" fill="none" stroke="#d5cfc9" stroke-width="5.5" stroke-linejoin="round" stroke-linecap="round" />
<polyline points="1141.0,0.0 1151.0,108.0 1161.0,125.0 1186.0,155.0 1200.0,175.0" fill="none" stroke="#d5cfc9" stroke-width="5.5" stroke-linejoin="round" stroke-linecap="round" />
<polyline points="1090.0,160.0 1140.0,230.0 1160.0,265.0" fill="none" stroke="#d5cfc9" stroke-width="5.5" stroke-linejoin="round" stroke-linecap="round" />
<polyline points="1003.0,330.0 980.0,360.0 960.0,400.0" fill="none" stroke="#d5cfc9" stroke-width="5.5" stroke-linejoin="round" stroke-linecap="round" />
<polyline points="1045.0,345.0 1100.0,330.0" fill="none" stroke="#d5cfc9" stroke-width="5.5" stroke-linejoin="round" stroke-linecap="round" />
<polyline points="751.0,49.0 871.0,33.0 894.0,3.0" fill="none" stroke="#d5cfc9" stroke-width="5.5" stroke-linejoin="round" stroke-linecap="round" />
<polyline points="691.0,256.0 800.0,245.0 908.0,228.0" fill="none" stroke="#ffffff" stroke-width="3.8" stroke-linejoin="round" stroke-linecap="round" />
<polyline points="581.0,210.0 640.0,216.0 741.0,222.0 780.0,232.0" fill="none" stroke="#ffffff" stroke-width="3.8" stroke-linejoin="round" stroke-linecap="round" />
<polyline points="436.0,263.0 551.0,226.0 581.0,210.0" fill="none" stroke="#ffffff" stroke-width="3.8" stroke-linejoin="round" stroke-linecap="round" />
<polyline points="441.0,263.0 456.0,333.0" fill="none" stroke="#ffffff" stroke-width="3.8" stroke-linejoin="round" stroke-linecap="round" />
<polyline points="456.0,329.0 621.0,301.0 688.0,273.0" fill="none" stroke="#ffffff" stroke-width="3.8" stroke-linejoin="round" stroke-linecap="round" />
<polyline points="1081.0,313.0 1198.0,321.0 1284.0,298.0" fill="none" stroke="#ffffff" stroke-width="3.8" stroke-linejoin="round" stroke-linecap="round" />
<polyline points="466.0,372.0 520.0,350.0 603.0,336.0" fill="none" stroke="#ffffff" stroke-width="3.8" stroke-linejoin="round" stroke-linecap="round" />
<polyline points="961.0,157.0 1000.0,172.0" fill="none" stroke="#ffffff" stroke-width="3.8" stroke-linejoin="round" stroke-linecap="round" />
<polyline points="1141.0,0.0 1151.0,108.0 1161.0,125.0 1186.0,155.0 1200.0,175.0" fill="none" stroke="#ffffff" stroke-width="3.8" stroke-linejoin="round" stroke-linecap="round" />
<polyline points="1090.0,160.0 1140.0,230.0 1160.0,265.0" fill="none" stroke="#ffffff" stroke-width="3.8" stroke-linejoin="round" stroke-linecap="round" />
<polyline points="1003.0,330.0 980.0,360.0 960.0,400.0" fill="none" stroke="#ffffff" stroke-width="3.8" stroke-linejoin="round" stroke-linecap="round" />
<polyline points="1045.0,345.0 1100.0,330.0" fill="none" stroke="#ffffff" stroke-width="3.8" stroke-linejoin="round" stroke-linecap="round" />
<polyline points="751.0,49.0 871.0,33.0 894.0,3.0" fill="none" stroke="#ffffff" stroke-width="3.8" stroke-linejoin="round" stroke-linecap="round" />
<polyline points="1237.0,0.0 1214.0,32.0 1192.0,64.0 1174.0,97.0 1158.0,124.0 1138.0,143.0 1098.0,162.0 1050.0,170.0 1001.0,171.0 971.0,160.0 940.0,163.0 931.0,175.0 915.0,220.0 905.0,278.0" fill="none" stroke="#d1c67e" stroke-width="7.5" stroke-linejoin="round" stroke-linecap="round" />
<polyline points="603.0,336.0 621.0,336.0 686.0,311.0 746.0,298.5 858.5,278.5 908.5,278.5 946.0,298.5 961.0,293.5 1011.0,301.0 1043.5,343.5 1023.5,401.0 1003.5,452.0" fill="none" stroke="#d1c67e" stroke-width="7.5" stroke-linejoin="round" stroke-linecap="round" />
<polyline points="946.0,301.0 933.5,333.5 871.0,366.0 771.0,426.0 733.5,452.0" fill="none" stroke="#d1c67e" stroke-width="7.5" stroke-linejoin="round" stroke-linecap="round" />
<polyline points="1011.0,301.0 1023.5,313.5 1088.0,250.0 1131.0,226.0 1285.0,110.0" fill="none" stroke="#d1c67e" stroke-width="7.5" stroke-linejoin="round" stroke-linecap="round" />
<polyline points="1026.0,396.0 1121.0,433.5 1160.0,452.0" fill="none" stroke="#d1c67e" stroke-width="7.5" stroke-linejoin="round" stroke-linecap="round" />
<polyline points="311.0,452.0 466.0,370.0 481.0,401.0 496.0,452.0" fill="none" stroke="#d1c67e" stroke-width="7.5" stroke-linejoin="round" stroke-linecap="round" />
<polyline points="603.0,336.0 621.0,386.0 645.0,452.0" fill="none" stroke="#d1c67e" stroke-width="7.5" stroke-linejoin="round" stroke-linecap="round" />
<polyline points="1237.0,0.0 1214.0,32.0 1192.0,64.0 1174.0,97.0 1158.0,124.0 1138.0,143.0 1098.0,162.0 1050.0,170.0 1001.0,171.0 971.0,160.0 940.0,163.0 931.0,175.0 915.0,220.0 905.0,278.0" fill="none" stroke="#f6f8b4" stroke-width="5.5" stroke-linejoin="round" stroke-linecap="round" />
<polyline points="603.0,336.0 621.0,336.0 686.0,311.0 746.0,298.5 858.5,278.5 908.5,278.5 946.0,298.5 961.0,293.5 1011.0,301.0 1043.5,343.5 1023.5,401.0 1003.5,452.0" fill="none" stroke="#f6f8b4" stroke-width="5.5" stroke-linejoin="round" stroke-linecap="round" />
<polyline points="946.0,301.0 933.5,333.5 871.0,366.0 771.0,426.0 733.5,452.0" fill="none" stroke="#f6f8b4" stroke-width="5.5" stroke-linejoin="round" stroke-linecap="round" />
<polyline points="1011.0,301.0 1023.5,313.5 1088.0,250.0 1131.0,226.0 1285.0,110.0" fill="none" stroke="#f6f8b4" stroke-width="5.5" stroke-linejoin="round" stroke-linecap="round" />
<polyline points="1026.0,396.0 1121.0,433.5 1160.0,452.0" fill="none" stroke="#f6f8b4" stroke-width="5.5" stroke-linejoin="round" stroke-linecap="round" />
<polyline points="311.0,452.0 466.0,370.0 481.0,401.0 496.0,452.0" fill="none" stroke="#f6f8b4" stroke-width="5.5" stroke-linejoin="round" stroke-linecap="round" />
<polyline points="603.0,336.0 621.0,386.0 645.0,452.0" fill="none" stroke="#f6f8b4" stroke-width="5.5" stroke-linejoin="round" stroke-linecap="round" />
<polyline points="1003.5,296.0 1088.0,226.0 1284.0,95.0" fill="none" stroke="#c66f7d" stroke-width="9" stroke-linejoin="round" stroke-linecap="round" />
<polyline points="1003.5,296.0 1088.0,226.0 1284.0,95.0" fill="none" stroke="#e7909e" stroke-width="7" stroke-linejoin="round" stroke-linecap="round" />
<g fill="none" stroke="#9389c0" stroke-width="1.3" stroke-dasharray="2.5 2.5" opacity="0.85">
<polyline points="355.0,170.0 365.0,150.0 400.0,105.0 425.0,62.0 470.0,48.0 513.0,30.0 560.0,22.0 594.0,20.0"/>
<polyline points="356.0,170.0 358.0,226.0 364.0,282.0 358.0,330.0 347.0,383.0 300.0,400.0 252.0,417.0 202.0,452.0"/>
<polyline points="505.0,34.0 560.0,20.0 600.0,60.0 650.0,120.0 700.0,180.0"/>
<polyline points="650.0,90.0 780.0,122.0 800.0,118.0 895.0,112.0 961.0,120.0"/>
<polyline points="610.0,0.0 660.0,40.0 830.0,110.0"/>
<polyline points="560.0,20.0 560.0,85.0 620.0,200.0"/>
<polyline points="700.0,170.0 760.0,165.0 800.0,180.0 880.0,190.0 961.0,190.0"/>
<polyline points="380.0,270.0 450.0,330.0 520.0,420.0"/>
<polyline points="600.0,330.0 700.0,300.0 840.0,280.0"/>
<polyline points="400.0,165.0 420.0,265.0 440.0,270.0"/>
<polyline points="425.0,130.0 520.0,115.0 545.0,170.0 575.0,200.0"/>
<polyline points="455.0,240.0 470.0,320.0"/>
<polyline points="620.0,365.0 700.0,355.0 760.0,330.0"/>
<polyline points="1000.0,330.0 1080.0,315.0 1210.0,326.0 1236.0,355.0"/>
<polyline points="1000.0,355.0 1120.0,450.0"/>
<polyline points="1196.0,430.0 1240.0,420.0 1284.0,300.0"/>
<polyline points="403.0,125.0 434.0,232.0"/>
<polyline points="416.0,127.0 494.0,105.0"/>
<polyline points="423.0,158.0 476.0,147.0"/>
<polyline points="465.0,114.0 485.0,187.0"/>
<polyline points="494.0,105.0 529.0,187.0 560.0,232.0"/>
<polyline points="487.0,176.0 604.0,156.0"/>
<polyline points="430.0,200.0 560.0,180.0"/>
<polyline points="600.0,140.0 625.0,200.0"/>
</g>
<g font-family="Liberation Sans">
<text x="452" y="213" font-size="14.6" fill="#666" font-style="" font-weight="normal" text-anchor="start" stroke="#fff" stroke-width="2" stroke-opacity="0.6" paint-order="stroke">Västra Hamnen</text>
<text x="442" y="92" font-size="9.5" fill="#555" font-style="italic" font-weight="normal" text-anchor="start" stroke="#fff" stroke-width="2" stroke-opacity="0.6" paint-order="stroke">Galeonen</text>
<text x="512" y="125" font-size="9.5" fill="#555" font-style="italic" font-weight="normal" text-anchor="start" stroke="#fff" stroke-width="2" stroke-opacity="0.6" paint-order="stroke">Västra</text>
<text x="506" y="137" font-size="9.5" fill="#555" font-style="italic" font-weight="normal" text-anchor="start" stroke="#fff" stroke-width="2" stroke-opacity="0.6" paint-order="stroke">Dockan</text>
<text x="524" y="268" font-size="9.5" fill="#555" font-style="italic" font-weight="normal" text-anchor="start" stroke="#fff" stroke-width="2" stroke-opacity="0.6" paint-order="stroke">Ubåten</text>
<text x="374" y="346" font-size="9.5" fill="#3e7d3e" font-style="italic" font-weight="normal" text-anchor="start" stroke="#fff" stroke-width="2" stroke-opacity="0.6" paint-order="stroke">Ribersborgs</text>
<text x="370" y="358" font-size="9.5" fill="#3e7d3e" font-style="italic" font-weight="normal" text-anchor="start" stroke="#fff" stroke-width="2" stroke-opacity="0.6" paint-order="stroke">hundrastplats</text>
<text x="530" y="448" font-size="9.5" fill="#3e7d3e" font-style="italic" font-weight="normal" text-anchor="start" stroke="#fff" stroke-width="2" stroke-opacity="0.6" paint-order="stroke">Slottsparken</text>
<text x="466" y="264" font-size="9.5" fill="#222" font-style="" font-weight="normal" text-anchor="start" transform="rotate(-18 466 264)" stroke="#fff" stroke-width="2" stroke-opacity="0.6" paint-order="stroke">Stora Varvsgatan</text>
<text x="584" y="310" font-size="9.5" fill="#222" font-style="" font-weight="normal" text-anchor="start" transform="rotate(-9 584 310)" stroke="#fff" stroke-width="2" stroke-opacity="0.6" paint-order="stroke">Neptunigatan</text>
<text x="782" y="246" font-size="9.5" fill="#222" font-style="" font-weight="normal" text-anchor="start" transform="rotate(-6 782 246)" stroke="#fff" stroke-width="2" stroke-opacity="0.6" paint-order="stroke">Carlsgatan</text>
<text x="792" y="293" font-size="9.5" fill="#222" font-style="" font-weight="normal" text-anchor="start" transform="rotate(-10 792 293)" stroke="#fff" stroke-width="2" stroke-opacity="0.6" paint-order="stroke">Norra Vallgatan</text>
<text x="622" y="344" font-size="9.5" fill="#222" font-style="" font-weight="normal" text-anchor="start" transform="rotate(-22 622 344)" stroke="#fff" stroke-width="2" stroke-opacity="0.6" paint-order="stroke">Norra Vallgatan</text>
<text x="686" y="298" font-size="10.5" fill="#3f4fa0" font-style="" font-weight="bold" text-anchor="start" stroke="#fff" stroke-width="2" stroke-opacity="0.6" paint-order="stroke">Malmö</text>
<text x="706" y="309" font-size="10.5" fill="#3f4fa0" font-style="" font-weight="bold" text-anchor="start" stroke="#fff" stroke-width="2" stroke-opacity="0.6" paint-order="stroke">C</text>
<text x="1041" y="326" font-size="10.5" fill="#3f4fa0" font-style="" font-weight="bold" text-anchor="start" stroke="#fff" stroke-width="2" stroke-opacity="0.6" paint-order="stroke">Östervärn</text>
<text x="1198" y="337" font-size="9.5" fill="#222" font-style="" font-weight="normal" text-anchor="start" transform="rotate(-12 1198 337)" stroke="#fff" stroke-width="2" stroke-opacity="0.6" paint-order="stroke">Södra Bulltoftavägen</text>
<text x="1149" y="374" font-size="9.5" fill="#555" font-style="italic" font-weight="normal" text-anchor="start" stroke="#fff" stroke-width="2" stroke-opacity="0.6" paint-order="stroke">Malmö</text>
<text x="1134" y="387" font-size="9.5" fill="#555" font-style="italic" font-weight="normal" text-anchor="start" stroke="#fff" stroke-width="2" stroke-opacity="0.6" paint-order="stroke">godsbangård</text>
<text x="1239" y="276" font-size="13" fill="#666" font-style="" font-weight="normal" text-anchor="start" stroke="#fff" stroke-width="2" stroke-opacity="0.6" paint-order="stroke">Kirseberg</text>
<text x="1036" y="171" font-size="9" fill="#222" font-style="" font-weight="normal" text-anchor="start" transform="rotate(-8 1036 171)" stroke="#fff" stroke-width="2" stroke-opacity="0.6" paint-order="stroke">Västkustvägen</text>
<text x="1004" y="290" font-size="9" fill="#222" font-style="" font-weight="normal" text-anchor="start" transform="rotate(-45 1004 290)" stroke="#fff" stroke-width="2" stroke-opacity="0.6" paint-order="stroke">Stockholmsvägen</text>
<text x="1034" y="320" font-size="9" fill="#222" font-style="" font-weight="normal" text-anchor="start" transform="rotate(-48 1034 320)" stroke="#fff" stroke-width="2" stroke-opacity="0.6" paint-order="stroke">Lundavägen</text>
<text x="1177" y="101" font-size="9" fill="#222" font-style="" font-weight="normal" text-anchor="start" transform="rotate(-58 1177 101)" stroke="#fff" stroke-width="2" stroke-opacity="0.6" paint-order="stroke">Västkustvägen</text>
<text x="1138" y="190" font-size="9" fill="#222" font-style="" font-weight="normal" text-anchor="start" transform="rotate(-38 1138 190)" stroke="#fff" stroke-width="2" stroke-opacity="0.6" paint-order="stroke">Stockholmsvägen</text>
<text x="1166" y="230" font-size="9" fill="#222" font-style="" font-weight="normal" text-anchor="start" transform="rotate(-40 1166 230)" stroke="#fff" stroke-width="2" stroke-opacity="0.6" paint-order="stroke">Lundavägen</text>
<text x="862" y="433" font-size="9.5" fill="#222" font-style="" font-weight="normal" text-anchor="start" transform="rotate(-35 862 433)" stroke="#fff" stroke-width="2" stroke-opacity="0.6" paint-order="stroke">Drottninggatan</text>
<text x="966" y="443" font-size="9.5" fill="#222" font-style="" font-weight="normal" text-anchor="start" transform="rotate(-35 966 443)" stroke="#fff" stroke-width="2" stroke-opacity="0.6" paint-order="stroke">Föreningsgatan</text>
<text x="370" y="434" font-size="9.5" fill="#222" font-style="" font-weight="normal" text-anchor="start" transform="rotate(-28 370 434)" stroke="#fff" stroke-width="2" stroke-opacity="0.6" paint-order="stroke">Limhamnsvägen</text>
<text x="432" y="441" font-size="9.5" fill="#222" font-style="" font-weight="normal" text-anchor="start" transform="rotate(-40 432 441)" stroke="#fff" stroke-width="2" stroke-opacity="0.6" paint-order="stroke">Tessins väg</text>
<text x="977" y="77" font-size="9.5" fill="#555" font-style="italic" font-weight="normal" text-anchor="start" stroke="#fff" stroke-width="2" stroke-opacity="0.6" paint-order="stroke">Varmet</text>
<text x="1088" y="34" font-size="9.5" fill="#555" font-style="italic" font-weight="normal" text-anchor="start" stroke="#fff" stroke-width="2" stroke-opacity="0.6" paint-order="stroke">Kullen</text>
<text x="608" y="354" font-size="9.5" fill="#222" font-style="" font-weight="normal" text-anchor="start" transform="rotate(72 608 354)" stroke="#fff" stroke-width="2" stroke-opacity="0.6" paint-order="stroke">Slottsgatan</text>
<text x="400" y="293" font-size="9" fill="#4a6fb0" font-style="italic" font-weight="normal" text-anchor="start" transform="rotate(53 400 293)" stroke="#fff" stroke-width="2" stroke-opacity="0.6" paint-order="stroke">Turbinkanalen</text>
<text x="521" y="314" font-size="9" fill="#4a6fb0" font-style="italic" font-weight="normal" text-anchor="start" transform="rotate(-30 521 314)" stroke="#fff" stroke-width="2" stroke-opacity="0.6" paint-order="stroke">Varvskanalen</text>
<text x="723" y="295" font-size="9" fill="#4a6fb0" font-style="italic" font-weight="normal" text-anchor="start" transform="rotate(-6 723 295)" stroke="#fff" stroke-width="2" stroke-opacity="0.6" paint-order="stroke">Östra Hamnkanalen</text>
<text x="850" y="290" font-size="9" fill="#4a6fb0" font-style="italic" font-weight="normal" text-anchor="start" transform="rotate(72 850 290)" stroke="#fff" stroke-width="2" stroke-opacity="0.6" paint-order="stroke">Rörsjökanalen</text>
<text x="581" y="346" font-size="9" fill="#4a6fb0" font-style="italic" font-weight="normal" text-anchor="start" transform="rotate(70 581 346)" stroke="#fff" stroke-width="2" stroke-opacity="0.6" paint-order="stroke">Parkkanalen</text>
<text x="590" y="436" font-size="9" fill="#4a6fb0" font-style="italic" font-weight="normal" text-anchor="start" transform="rotate(-6 590 436)" stroke="#fff" stroke-width="2" stroke-opacity="0.6" paint-order="stroke">Parkkanalen</text>
<text x="680" y="452" font-size="9" fill="#4a6fb0" font-style="italic" font-weight="normal" text-anchor="start" transform="rotate(-18 680 452)" stroke="#fff" stroke-width="2" stroke-opacity="0.6" paint-order="stroke">Rosstadskanalen</text>
<text x="486" y="398" font-size="9" fill="#222" font-style="" font-weight="normal" text-anchor="start" transform="rotate(72 486 398)" stroke="#fff" stroke-width="2" stroke-opacity="0.6" paint-order="stroke">Mariedalsvägen</text>
<text x="752" y="428" font-size="9" fill="#222" font-style="" font-weight="normal" text-anchor="start" transform="rotate(72 752 428)" stroke="#fff" stroke-width="2" stroke-opacity="0.6" paint-order="stroke">Amiralsgatan</text>
<text x="1128" y="428" font-size="9" fill="#222" font-style="" font-weight="normal" text-anchor="start" transform="rotate(22 1128 428)" stroke="#fff" stroke-width="2" stroke-opacity="0.6" paint-order="stroke">Sallerupsvägen</text>
<text x="1009" y="452" font-size="9" fill="#222" font-style="" font-weight="normal" text-anchor="start" transform="rotate(-75 1009 452)" stroke="#fff" stroke-width="2" stroke-opacity="0.6" paint-order="stroke">Nobelvägen</text>
<text x="1240" y="92" font-size="9.5" fill="#b05060" font-style="italic" font-weight="normal" text-anchor="start" stroke="#fff" stroke-width="2" stroke-opacity="0.6" paint-order="stroke">Trafi</text>
<text x="1244" y="222" font-size="9.5" fill="#3e7d3e" font-style="italic" font-weight="normal" text-anchor="start" stroke="#fff" stroke-width="2" stroke-opacity="0.6" paint-order="stroke">Beij</text>
<text x="1250" y="234" font-size="9.5" fill="#3e7d3e" font-style="italic" font-weight="normal" text-anchor="start" stroke="#fff" stroke-width="2" stroke-opacity="0.6" paint-order="stroke">pa</text>
</g>
<g transform="translate(629,186)"><path d="M12.5 0 C5.6 0 0 5.6 0 12.5 C0 21 12.5 37 12.5 37 C12.5 37 25 21 25 12.5 C25 5.6 19.4 0 12.5 0 Z" fill="#3aab4b" stroke="#2a8a38" stroke-width="0.8"/><circle cx="12.5" cy="11.5" r="4.3" fill="#fff"/></g>
<g><rect x="12.5" y="11.5" width="31" height="62" rx="3" fill="#fff" stroke="#9c9c9c" stroke-width="1.5"/><rect x="13.3" y="12.3" width="29.4" height="29.7" rx="2" fill="#f4f4f4"/><line x1="13" y1="42" x2="43" y2="42" stroke="#ccc"/><path d="M28 21V33 M22 27H34" stroke="#aaa" stroke-width="2"/><path d="M21.5 58H34.5" stroke="#222" stroke-width="2.4"/></g>
<rect x="1031" y="434" width="253" height="18" fill="#fff" fill-opacity="0.8"/>
<text x="1037" y="447" font-family="Liberation Sans" font-size="11" fill="#444"><tspan fill="#22385c">Leaflet</tspan> | Map Tiles © <tspan fill="#22385c">OpenStreetMap</tspan> contributors</text></svg>
</div>

<!-- Bottom panel -->
<div class="hdr" style="left:6px;top:581px;width:1655px"></div>
<svg class="a" style="left:15.5px;top:590.5px" width="14" height="14"><g fill="#fff"><rect x="0" y="7" width="3.7" height="6"/><rect x="4.4" y="0.3" width="4" height="12.7"/><rect x="9.2" y="4.8" width="3.8" height="8.2"/></g></svg>
<div class="a ht" style="left:37px;top:591px;font-size:14.7px">Machine Activity</div>
<div class="a" style="left:152px;top:587px;width:70px;height:22px;background:#2f8ed3;border-radius:2px"></div>
<div class="a" style="left:158px;top:591.5px;font-size:12px;color:#fff">Past Day</div>
<svg class="a" style="left:209px;top:598px" width="8" height="5"><path d="M0 0 H7 L3.5 4 Z" fill="#fff"/></svg>
<div class="body" style="left:6px;top:615px;width:1657px;height:281px;border-bottom:0;border-right:0"></div>

<!-- donuts -->
<svg class="a" style="left:59px;top:683px" width="150" height="150" viewBox="-75 -75 150 150">
 <circle r="53.6" fill="none" stroke="#1ec3f1" stroke-width="22.799999999999997"/>
 <path d="M-4.08 -64.87 A65 65 0 0 1 1.25 -64.99 L0.81 -42.19 A42.2 42.2 0 0 0 -2.65 -42.12 Z" fill="#7b9c4d"/>
</svg>
<div class="a" style="left:113px;top:746px;font-size:13px;color:#333">€ 3 191</div>
<div class="a" style="left:52px;top:824px;font-size:21px;color:#243d58">Total Dispensable</div>
<svg class="a" style="left:296px;top:683px" width="150" height="150" viewBox="-75 -75 150 150">
 <circle r="53.25" fill="none" stroke="#dcdee2" stroke-width="21.5"/>
 <path d="M36.2 20.9 L56.5 32.6 M-36.2 20.9 L-56.5 32.6" stroke="#fff" stroke-width="2.5"/>
</svg>
<div class="a" style="left:271px;top:693px;width:209px;height:35px;background:#fff;border:1px solid #e6e6e6;border-radius:3px;box-shadow:0 1px 3px rgba(0,0,0,.12)"></div>
<div class="a" style="left:280px;top:703px;font-size:13.6px;color:#333">No bankable amounts available</div>
<div class="a" style="left:301px;top:824px;font-size:21px;color:#243d58">Total Bankable</div>

<!-- chart -->
<svg class="a" style="left:490px;top:620px" width="500" height="250">
 <defs><linearGradient id="g1" x1="0" y1="0" x2="0" y2="1"><stop offset="0" stop-color="#c9cdcf"/><stop offset="0.35" stop-color="#a8c6d2"/><stop offset="1" stop-color="#78b6cc"/></linearGradient></defs>
 <rect x="34" y="9.5" width="438" height="185.5" fill="#cccccc"/>
 <polygon points="34,133 253.3,133 362.3,71.7 472,133 472,195 34,195" fill="url(#g1)"/>
 <g stroke="#b8ccd2" stroke-opacity="0.35" stroke-width="3"><path d="M89 9.5V195 M143.4 9.5V195 M198.4 9.5V195 M253.3 9.5V195 M308 9.5V195 M362.3 9.5V195 M416.6 9.5V195 M34 71.7H472 M34 133H472"/></g>
 <polyline points="34,133 253.3,133 362.3,71.7 472,133" fill="none" stroke="#1f97c6" stroke-width="1.6"/>
 <g fill="#1f97c6"><circle cx="34" cy="133" r="3.8"/><circle cx="253.3" cy="133" r="3.8"/><circle cx="362.3" cy="71.7" r="3.8"/><circle cx="472" cy="133" r="3.8"/></g>
 <g font-family="Liberation Sans" font-size="10.2" fill="#444" text-anchor="middle"><text x="12" y="14.6">3</text><text x="12" y="75.6">2</text><text x="12" y="136.6">1</text><text x="12" y="198.6">0</text></g>
</svg>
<div class="a" style="left:490px;top:825px;width:500px;font-size:11.3px;color:#444;line-height:15px">
 <span class="a" style="left:34px;width:0"><span style="position:absolute;transform:translateX(-50%);text-align:center">31-Mar<br>13:00<br>CEST</span></span>
 <span class="a" style="left:89px;width:0"><span style="position:absolute;transform:translateX(-50%);text-align:center">31-Mar<br>13:30<br>CEST</span></span>
 <span class="a" style="left:143.4px;width:0"><span style="position:absolute;transform:translateX(-50%);text-align:center">31-Mar<br>14:00<br>CEST</span></span>
 <span class="a" style="left:198.4px;width:0"><span style="position:absolute;transform:translateX(-50%);text-align:center">31-Mar<br>14:30<br>CEST</span></span>
 <span class="a" style="left:253.3px;width:0"><span style="position:absolute;transform:translateX(-50%);text-align:center">31-Mar<br>15:00<br>CEST</span></span>
 <span class="a" style="left:308px;width:0"><span style="position:absolute;transform:translateX(-50%);text-align:center">31-Mar<br>15:30<br>CEST</span></span>
 <span class="a" style="left:362.3px;width:0"><span style="position:absolute;transform:translateX(-50%);text-align:center">31-Mar<br>16:00<br>CEST</span></span>
 <span class="a" style="left:416.6px;width:0"><span style="position:absolute;transform:translateX(-50%);text-align:center">31-Mar<br>16:30<br>CEST</span></span>
 <span class="a" style="left:472px;width:0"><span style="position:absolute;transform:translateX(-50%);text-align:center">31-Mar<br>17:00<br>CEST</span></span>
</div>
<div class="a" style="left:663px;top:876px;font-size:20px;color:#243d58">Transaction Count</div>

<!-- tabs -->
<div class="a" style="left:1281px;top:582px;width:110px;height:32px;background:#fff"></div>
<svg class="a" style="left:1295px;top:592px" width="15" height="12"><g fill="#0b2b4b"><rect x="0" y="0" width="1.2" height="12"/><rect x="0" y="10.8" width="15" height="1.2"/><rect x="3" y="5" width="2" height="5"/><rect x="6" y="2" width="2" height="8"/><rect x="9" y="4" width="2" height="6"/><rect x="12" y="1" width="2" height="9"/></g></svg>
<div class="a" style="left:1313px;top:590px;font-size:14px;font-weight:bold;color:#0b2b4b">Content</div>
<svg class="a" style="left:1368px;top:597px" width="8" height="5"><path d="M0 0 H7 L3.5 4 Z" fill="#0b2b4b"/></svg>
<svg class="a" style="left:1412px;top:591px" width="12" height="14" viewBox="0 0 12 14"><path d="M6 1 C3 1 2.2 3.5 2.2 6 V9 L0.8 11 H11.2 L9.8 9 V6 C9.8 3.5 9 1 6 1 Z M4.6 12 A1.5 1.5 0 0 0 7.4 12" fill="none" stroke="#aab4c0" stroke-width="1.1"/></svg>
<div class="a" style="left:1428px;top:590px;font-size:14px;color:#d8dee6">Errors</div>
<div class="a" style="left:1502px;top:590px;font-size:14px;color:#d8dee6;font-weight:bold">i</div>
<div class="a" style="left:1510px;top:590px;font-size:14px;color:#d8dee6">Details</div>
<div class="a" style="left:1580px;top:597px;width:11px;height:3px;background:#fff"></div>
<svg class="a" style="left:1609px;top:591px" width="14" height="13" viewBox="0 0 14 13"><g fill="#fff"><path d="M8 0 H14 V6 L12 4 L4 11 L6 13 H0 V7 L2 9 L10 2 Z"/></g></svg>
<svg class="a" style="left:1640px;top:592px" width="11" height="11"><path d="M1.5 1.5 L9.5 9.5 M9.5 1.5 L1.5 9.5" stroke="#fff" stroke-width="2.8"/></svg>

<!-- content items -->
<div id="items"></div>
<div class="a" style="left:1003px;top:630px;font-size:13.3px;color:#333">undefined MAB0_A - OK</div>
<svg class="a" style="left:1153px;top:632px" width="13" height="11"><path d="M1 5.5 L4.5 9 L12 1.5" stroke="#2a9a2a" stroke-width="2.6" fill="none"/></svg>
<div class="a" style="left:1578px;top:630px;font-size:13.5px;color:#333">0 Notes</div>
<div class="a" style="left:1003px;top:650.7px;width:621px;height:5px;background:#6b5a6e"></div>
<div class="a" style="left:1003px;top:646px;width:1.6px;height:14px;background:#b45a5a"></div>
<div class="a" style="left:1623px;top:646px;width:1.6px;height:14px;background:#8a5a5a"></div>
<div class="a" style="left:1561.8px;top:647px;width:1.2px;height:10px;background:#c9a84a"></div>
<div class="a" style="left:1003px;top:700px;font-size:13.3px;color:#333">undefined MAB0_B - OK</div>
<svg class="a" style="left:1153px;top:702px" width="13" height="11"><path d="M1 5.5 L4.5 9 L12 1.5" stroke="#2a9a2a" stroke-width="2.6" fill="none"/></svg>
<div class="a" style="left:1578px;top:700px;font-size:13.5px;color:#333">0 Notes</div>
<div class="a" style="left:1003px;top:720.7px;width:621px;height:5px;background:#6b5a6e"></div>
<div class="a" style="left:1003px;top:716px;width:1.6px;height:14px;background:#b45a5a"></div>
<div class="a" style="left:1623px;top:716px;width:1.6px;height:14px;background:#8a5a5a"></div>
<div class="a" style="left:1561.8px;top:717px;width:1.2px;height:10px;background:#c9a84a"></div>
<div class="a" style="left:1003px;top:770px;font-size:13.3px;color:#333">undefined MAB0_C - OK</div>
<svg class="a" style="left:1153px;top:772px" width="13" height="11"><path d="M1 5.5 L4.5 9 L12 1.5" stroke="#2a9a2a" stroke-width="2.6" fill="none"/></svg>
<div class="a" style="left:1578px;top:770px;font-size:13.5px;color:#333">0 Notes</div>
<div class="a" style="left:1003px;top:790.7px;width:621px;height:5px;background:#6b5a6e"></div>
<div class="a" style="left:1003px;top:786px;width:1.6px;height:14px;background:#b45a5a"></div>
<div class="a" style="left:1623px;top:786px;width:1.6px;height:14px;background:#8a5a5a"></div>
<div class="a" style="left:1419px;top:787px;width:1.2px;height:10px;background:#c9a84a"></div>
<div class="a" style="left:1003px;top:840px;font-size:13.3px;color:#333">undefined AB1 - OK</div>
<svg class="a" style="left:1127px;top:842px" width="13" height="11"><path d="M1 5.5 L4.5 9 L12 1.5" stroke="#2a9a2a" stroke-width="2.6" fill="none"/></svg>
<div class="a" style="left:1578px;top:840px;font-size:13.5px;color:#333">6 Notes</div>
<div class="a" style="left:1003px;top:860.7px;width:621px;height:5px;background:#5b9a6a"></div>
<div class="a" style="left:1003px;top:856px;width:1.6px;height:14px;background:#b45a5a"></div>
<div class="a" style="left:1623px;top:856px;width:1.6px;height:14px;background:#8a5a5a"></div>
<div class="a" style="left:1561.8px;top:857px;width:1.2px;height:10px;background:#c9a84a"></div>
<!-- scrollbar -->
<div class="a" style="left:1638px;top:620px;width:16px;height:276px;background:#f6f6f4"></div>
<div class="a" style="left:1640px;top:635px;width:12px;height:125px;background:#c1c1c1"></div>
<svg class="a" style="left:1642px;top:624px" width="8" height="5"><path d="M0 4 H7 L3.5 0 Z" fill="#a3a3a3"/></svg>
</div>
</body></html>
